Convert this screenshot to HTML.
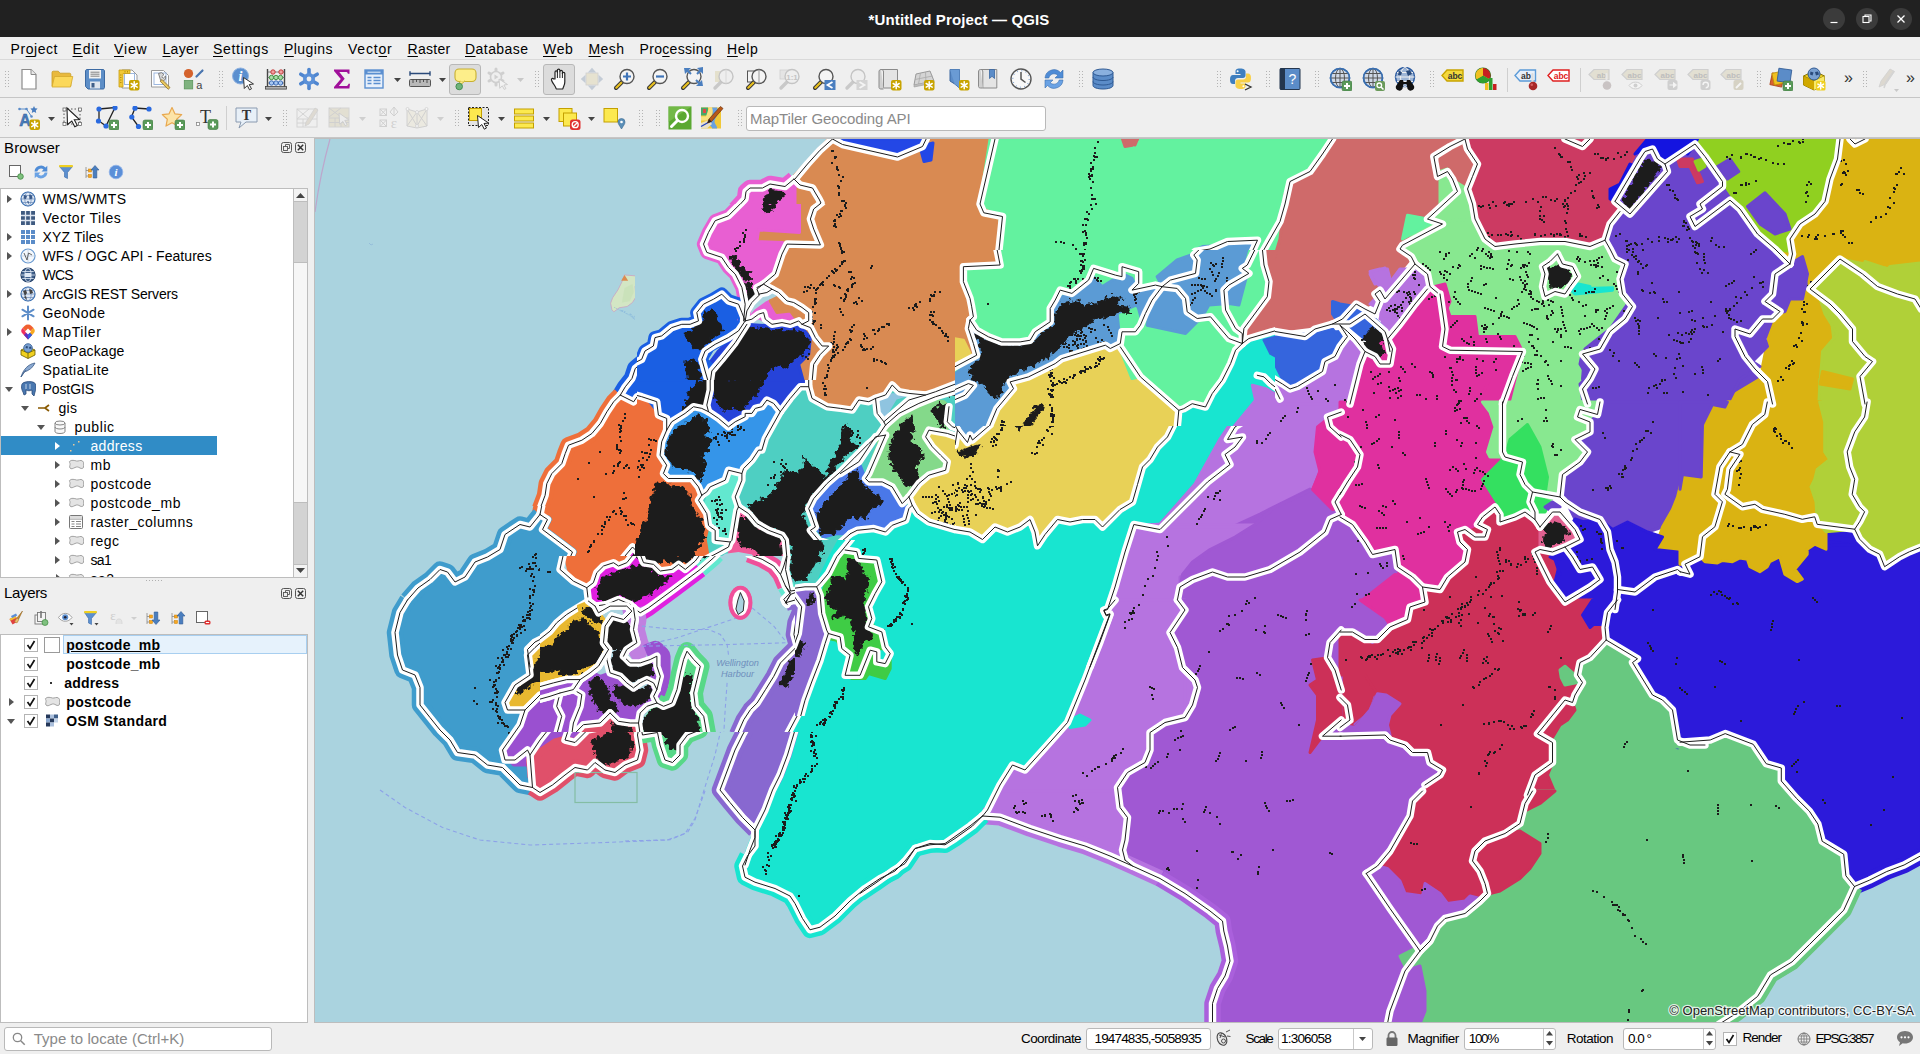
<!DOCTYPE html>
<html><head><meta charset="utf-8"><title>*Untitled Project — QGIS</title>
<style>
html,body{margin:0;padding:0;background:#efefef;overflow:hidden}
#root{position:relative;width:1920px;height:1054px;overflow:hidden;font-family:"Liberation Sans", sans-serif;background:#efefef}
.t{position:absolute;white-space:nowrap;color:#000}
.r{position:absolute}
.i{position:absolute;overflow:hidden;display:block}
u{text-decoration:underline;text-underline-offset:2px}
</style></head><body><div id="root">
<div class="r" style="left:0px;top:0px;width:1920px;height:37px;background:#212121"></div>
<div class="t" style="left:868.5px;top:9.5px;height:20px;line-height:20px;font-size:15px;font-weight:bold;color:#fff;letter-spacing:0.145px;">*Untitled Project — QGIS</div>
<svg class="i" style="left:1823px;top:8px" width="22" height="22" viewBox="0 0 22 22"><circle cx="11" cy="11" r="11" fill="#3b3b3b"/><path d="M7.500 14.500h7" stroke="#fff" stroke-width="1.200"/></svg>
<svg class="i" style="left:1856px;top:8px" width="22" height="22" viewBox="0 0 22 22"><circle cx="11" cy="11" r="11" fill="#3b3b3b"/><rect x="7" y="8.500" width="6" height="6" fill="none" stroke="#fff" stroke-width="1.100"/><path d="M9 8.500V7h6v6h-1.500" fill="none" stroke="#fff" stroke-width="1.100"/></svg>
<svg class="i" style="left:1890px;top:8px" width="22" height="22" viewBox="0 0 22 22"><circle cx="11" cy="11" r="11" fill="#3b3b3b"/><path d="M7.500 7.500l7 7M14.500 7.500l-7 7" stroke="#fff" stroke-width="1.300"/></svg>
<div class="r" style="left:0px;top:37px;width:1920px;height:23px;background:#efefef;border-bottom:1px solid #d9d9d9;box-sizing:border-box"></div>
<div class="t" style="left:10.5px;top:38.7px;height:20px;line-height:20px;font-size:14px;letter-spacing:0.561px">Pr<u>o</u>ject</div>
<div class="t" style="left:72.5px;top:38.7px;height:20px;line-height:20px;font-size:14px;letter-spacing:0.844px"><u>E</u>dit</div>
<div class="t" style="left:114px;top:38.7px;height:20px;line-height:20px;font-size:14px;letter-spacing:0.852px"><u>V</u>iew</div>
<div class="t" style="left:162.5px;top:38.7px;height:20px;line-height:20px;font-size:14px;letter-spacing:0.296px"><u>L</u>ayer</div>
<div class="t" style="left:213px;top:38.7px;height:20px;line-height:20px;font-size:14px;letter-spacing:0.677px"><u>S</u>ettings</div>
<div class="t" style="left:284px;top:38.7px;height:20px;line-height:20px;font-size:14px;letter-spacing:0.440px"><u>P</u>lugins</div>
<div class="t" style="left:348px;top:38.7px;height:20px;line-height:20px;font-size:14px;letter-spacing:0.802px">Vect<u>o</u>r</div>
<div class="t" style="left:407.5px;top:38.7px;height:20px;line-height:20px;font-size:14px;letter-spacing:0.294px"><u>R</u>aster</div>
<div class="t" style="left:465px;top:38.7px;height:20px;line-height:20px;font-size:14px;letter-spacing:0.446px"><u>D</u>atabase</div>
<div class="t" style="left:543px;top:38.7px;height:20px;line-height:20px;font-size:14px;letter-spacing:0.656px"><u>W</u>eb</div>
<div class="t" style="left:588.5px;top:38.7px;height:20px;line-height:20px;font-size:14px;letter-spacing:0.441px"><u>M</u>esh</div>
<div class="t" style="left:639.5px;top:38.7px;height:20px;line-height:20px;font-size:14px;letter-spacing:0.325px">Pro<u>c</u>essing</div>
<div class="t" style="left:727px;top:38.7px;height:20px;line-height:20px;font-size:14px;letter-spacing:0.677px"><u>H</u>elp</div>
<div class="r" style="left:0px;top:60px;width:1920px;height:38px;background:#efefef;border-bottom:1px solid #c6c6c6;box-sizing:border-box"></div>
<div class="r" style="left:0px;top:98px;width:1920px;height:40px;background:#efefef;border-bottom:1px solid #c6c6c6;box-sizing:border-box"></div>
<div class="r" style="left:449px;top:64px;width:32px;height:31px;background:#dcdcdc;border:1px solid #b8b8b8;border-radius:3px;box-sizing:border-box"></div>
<div class="r" style="left:543px;top:64px;width:32px;height:31px;background:#dcdcdc;border:1px solid #b8b8b8;border-radius:3px;box-sizing:border-box"></div>
<svg class="i" style="left:17.0px;top:67.0px" width="24" height="24" viewBox="0 0 24 24"><path d="M5 2.5h9l5 5V22H5z" fill="#fff" stroke="#8a8a8a" stroke-width="1.2"/><path d="M14 2.5v5h5" fill="#e8e8e8" stroke="#8a8a8a" stroke-width="1"/></svg>
<svg class="i" style="left:50.0px;top:67.0px" width="24" height="24" viewBox="0 0 24 24"><path d="M2 5.5c0-.8.5-1.3 1.3-1.3h5l1.7 2h9.5c.8 0 1.3.5 1.3 1.3V19H2z" fill="#e9b93c" stroke="#c69a22" stroke-width=".8"/><path d="M4.5 9.5h18.3L20.5 20H2z" fill="#fbd85a" stroke="#d4a82c" stroke-width=".8"/></svg>
<svg class="i" style="left:83.0px;top:67.0px" width="24" height="24" viewBox="0 0 24 24"><path d="M2.5 4c0-.8.6-1.5 1.5-1.5h16c.9 0 1.5.7 1.5 1.5v16.5c0 .8-.6 1.5-1.5 1.5H5l-2.5-2.5z" fill="#5d8ec7" stroke="#3c6aa3" stroke-width="1"/><rect x="6" y="3" width="12" height="8.5" fill="#f2f2f2"/><path d="M7.5 5.2h9M7.5 7.2h9M7.5 9.2h9" stroke="#777" stroke-width=".9"/><rect x="7" y="14.5" width="10" height="7" fill="#dfe6ef"/><rect x="8.5" y="16" width="3" height="4.5" fill="#3f5f8a"/></svg>
<svg class="i" style="left:116.0px;top:67.0px" width="24" height="24" viewBox="0 0 24 24"><path d="M6 3h10l5 5v13H6z" fill="#fff" stroke="#999" stroke-width="1"/><rect x="8.5" y="6.5" width="10" height="11" fill="none" stroke="#9db8e0" stroke-width="1"/><path d="M3 3h11v3.5H7v13.5H3z" fill="#f0c838" stroke="#c89c10" stroke-width=".8"/><path d="M4 8h1.5M4 10.5h1.5M4 13h1.5M4 15.5h1.5M9 4v1.5M11.5 4v1.5" stroke="#a07800" stroke-width=".7"/><rect x="13" y="13" width="10.5" height="10.5" rx="2" fill="#c8a400"/><g stroke="#fff" stroke-width="1.5" stroke-linecap="round"><line x1="18.2" y1="14.8" x2="18.2" y2="21.8"/><line x1="15.2" y1="16.5" x2="21.2" y2="20.1"/><line x1="15.2" y1="20.1" x2="21.2" y2="16.5"/></g></svg>
<svg class="i" style="left:149.0px;top:67.0px" width="24" height="24" viewBox="0 0 24 24"><path d="M2.5 3.5h12l5 5V20h-17z" fill="#fff" stroke="#999" stroke-width="1"/><rect x="5" y="6" width="12" height="11.5" fill="#fff" stroke="#9db8e0" stroke-width="1"/><path d="M9.5 6.5a4 4 0 0 1 5.5 1l-2.3 2.3 1.5 1.5L16.5 9a4 4 0 0 1-4.6 5.3z" fill="#d8d8d8" stroke="#666" stroke-width=".8"/><path d="M13 12.5l8 8-1.8 1.8-8-8z" fill="#e8c860" stroke="#8a6a20" stroke-width=".8"/></svg>
<svg class="i" style="left:181.0px;top:67.0px" width="24" height="24" viewBox="0 0 24 24"><circle cx="7.5" cy="6.5" r="4.6" fill="#d4622c"/><rect x="3.3" y="13.5" width="8.4" height="8.4" fill="#7fb27f" stroke="#5c965c" stroke-width=".8"/><line x1="15.5" y1="9.5" x2="21.5" y2="3.5" stroke="#4a76b0" stroke-width="2.2" stroke-linecap="round"/><text x="18.3" y="22" font-size="11" font-family="Liberation Sans,sans-serif" text-anchor="middle" fill="#444">a</text></svg>
<svg class="i" style="left:231.0px;top:67.0px" width="24" height="24" viewBox="0 0 24 24"><circle cx="9.5" cy="9" r="8" fill="#5b8fcf" stroke="#8fb2e0" stroke-width="1"/><text x="9.5" y="14" font-size="14" font-style="italic" font-weight="bold" font-family="Liberation Serif,serif" text-anchor="middle" fill="#fff">i</text><path d="M12.5 10.5l10 6.5-4.3.6 2.3 4.2-2 1-2.2-4.3-3 3z" fill="#fff" stroke="#333" stroke-width="1"/></svg>
<svg class="i" style="left:264.0px;top:67.0px" width="24" height="24" viewBox="0 0 24 24"><path d="M3.5 2v18M20.5 2v18" stroke="#444" stroke-width="1.4"/><rect x="1.5" y="19.5" width="21" height="2.6" fill="#b0b0b0" stroke="#444" stroke-width=".8"/><path d="M3.5 5h17M3.5 10.5h17M3.5 16h17" stroke="#666" stroke-width=".8"/><g stroke-width=".9"><circle cx="9" cy="5" r="2.2" fill="#f0a0a0" stroke="#c03030"/><circle cx="17" cy="5" r="2.2" fill="#f0a0a0" stroke="#c03030"/><circle cx="7.5" cy="10.5" r="2.2" fill="#a8dca8" stroke="#3a8a3a"/><circle cx="12" cy="10.5" r="2.2" fill="#a8dca8" stroke="#3a8a3a"/><circle cx="16.5" cy="10.5" r="2.2" fill="#a8dca8" stroke="#3a8a3a"/><circle cx="7.5" cy="16" r="2.2" fill="#a8c8f0" stroke="#3060b0"/><circle cx="12" cy="16" r="2.2" fill="#a8c8f0" stroke="#3060b0"/><circle cx="16.5" cy="16" r="2.2" fill="#a8c8f0" stroke="#3060b0"/></g></svg>
<svg class="i" style="left:297.0px;top:67.0px" width="24" height="24" viewBox="0 0 24 24"><g stroke="#4f86d0" stroke-width="3.6" stroke-linecap="round"><line x1="12" y1="2.5" x2="12" y2="21.5"/><line x1="3.8" y1="7.2" x2="20.2" y2="16.8"/><line x1="3.8" y1="16.8" x2="20.2" y2="7.2"/></g><circle cx="12" cy="12" r="6" fill="#5a90d8"/><circle cx="12" cy="12" r="2.4" fill="#efefef"/></svg>
<svg class="i" style="left:330.0px;top:67.0px" width="24" height="24" viewBox="0 0 24 24"><path d="M4 2.5h15.5v4.2h-1.6c-.3-1.3-.9-1.7-2.4-1.7H9.3l5.4 6.7-5.9 7.3h7c1.6 0 2.3-.6 2.7-2.3H20l-.6 4.8H4v-1.5L10.8 12 4 3.9z" fill="#a0109a"/></svg>
<svg class="i" style="left:362.0px;top:67.0px" width="24" height="24" viewBox="0 0 24 24"><rect x="3" y="3" width="18" height="18" fill="#e8f0fb" stroke="#5b8fd0" stroke-width="1.4"/><rect x="3" y="3" width="18" height="4.5" fill="#5b8fd0"/><path d="M5.5 10.5h4M11.5 10.5h7M5.5 13.5h4M11.5 13.5h7M5.5 16.5h4M11.5 16.5h7M5.5 5.2h13" stroke="#5b8fd0" stroke-width="1.3"/><path d="M5.5 5.2h13" stroke="#dbe7f7" stroke-width="1.1"/></svg>
<svg class="i" style="left:408.0px;top:67.0px" width="24" height="24" viewBox="0 0 24 24"><path d="M2 6.5h20M2 4.3v4.4M22 4.3v4.4" stroke="#2a4a7a" stroke-width="1.4" fill="none"/><rect x="1.5" y="12.5" width="21" height="7" rx="1" fill="#b8b8b8" stroke="#555" stroke-width="1"/><path d="M5 12.5v3.5M8.5 12.5v2.5M12 12.5v3.5M15.5 12.5v2.5M19 12.5v3.5" stroke="#444" stroke-width=".9"/></svg>
<svg class="i" style="left:453.0px;top:67.0px" width="24" height="24" viewBox="0 0 24 24"><rect x="2" y="2" width="21" height="12.5" rx="4" fill="#fdee8a" stroke="#c8b030" stroke-width="1.1"/><path d="M7 14l-1 5 6-5z" fill="#fdee8a" stroke="#c8b030" stroke-width="1"/><path d="M7.3 13.6h4" stroke="#fdee8a" stroke-width="1.4"/><circle cx="6.2" cy="19.5" r="3.3" fill="#6fb27a" stroke="#3f8a4c" stroke-width=".9"/></svg>
<svg class="i" style="left:486.0px;top:67.0px" width="24" height="24" viewBox="0 0 24 24"><g stroke="#cfcfcf" stroke-width="3" stroke-linecap="round"><line x1="10" y1="2" x2="10" y2="18"/><line x1="3" y1="6" x2="17" y2="14"/><line x1="3" y1="14" x2="17" y2="6"/></g><circle cx="10" cy="10" r="5.5" fill="#efefef" stroke="#cfcfcf" stroke-width="1.6"/><path d="M8.5 7.5v5l4-2.5z" fill="#d0d0d0"/><path d="M13 12l8.5 5.5-3.6.5 2 3.6-1.7.8-1.9-3.6-2.5 2.5z" fill="#f2f2f2" stroke="#cdcdcd" stroke-width="1"/></svg>
<svg class="i" style="left:547.0px;top:67.0px" width="24" height="24" viewBox="0 0 24 24"><path d="M8 12V5.2c0-1.7 2.4-1.7 2.4 0V3.4c0-1.7 2.5-1.7 2.5 0v1.2c0-1.7 2.5-1.7 2.5 0v2c0-1.6 2.4-1.6 2.4 0V15c0 3.5-1.5 4.6-2 7H9.3c-.4-2-2-3.600-4.300-7.600C3.600 12.100 5.300 10.400 6.700 12z" fill="#fff" stroke="#222" stroke-width="1.2" stroke-linejoin="round"/><path d="M10.400 5v6M12.900 4.500v6.500M15.400 6v5" stroke="#222" stroke-width="1" fill="none"/></svg>
<svg class="i" style="left:580.0px;top:67.0px" width="24" height="24" viewBox="0 0 24 24"><rect x="6" y="6" width="12" height="12" fill="#e6e2d0" stroke="#d0d0d0" stroke-width=".8"/><g fill="#c4ccd6"><path d="M12 .8l4.200 4.700H7.800z"/><path d="M12 23.200l4.200-4.700H7.800z"/><path d="M.8 12l4.700-4.200v8.400z"/><path d="M23.200 12l-4.700-4.200v8.400z"/></g></svg>
<svg class="i" style="left:613.0px;top:67.0px" width="24" height="24" viewBox="0 0 24 24"><line x1="3" y1="21" x2="9.5" y2="14.5" stroke="#333" stroke-width="4" stroke-linecap="round"/><line x1="3.3" y1="20.7" x2="8.5" y2="15.5" stroke="#e8c020" stroke-width="2.2" stroke-linecap="round"/><circle cx="14" cy="9.5" r="7" fill="#f4f4f4" stroke="#555" stroke-width="1.4"/><path d="M14 5.500v8M10 9.500h8" stroke="#3f74b8" stroke-width="2.200"/></svg>
<svg class="i" style="left:646.0px;top:67.0px" width="24" height="24" viewBox="0 0 24 24"><line x1="3" y1="21" x2="9.5" y2="14.5" stroke="#333" stroke-width="4" stroke-linecap="round"/><line x1="3.3" y1="20.7" x2="8.5" y2="15.5" stroke="#e8c020" stroke-width="2.2" stroke-linecap="round"/><circle cx="14" cy="9.5" r="7" fill="#f4f4f4" stroke="#555" stroke-width="1.4"/><path d="M10 9.500h8" stroke="#3f74b8" stroke-width="2.200"/></svg>
<svg class="i" style="left:680.0px;top:67.0px" width="24" height="24" viewBox="0 0 24 24"><line x1="3" y1="21" x2="9.5" y2="14.5" stroke="#333" stroke-width="4" stroke-linecap="round"/><line x1="3.3" y1="20.7" x2="8.5" y2="15.5" stroke="#e8c020" stroke-width="2.2" stroke-linecap="round"/><circle cx="14" cy="9.5" r="7" fill="#f4f4f4" stroke="#555" stroke-width="1.4"/><g fill="#4a7ebf"><path d="M5 1h7L9.700 3.300l3 3-1.400 1.400-3-3L6 7z" transform="translate(-1,0)"/><path d="M23 1v7l-2.300-2.300-3 3-1.400-1.400 3-3L17 2z" transform="translate(0,-1)"/><path d="M23 19h-7l2.300-2.300-3-3 1.400-1.400 3 3L22 13z" transform="translate(0,0)"/><path d="M5 19v-6l2 2 2.500-2.500 1.400 1.400L8.400 16.400l2 2z" transform="translate(-1,0)" opacity="0"/></g></svg>
<svg class="i" style="left:712.0px;top:67.0px" width="24" height="24" viewBox="0 0 24 24"><rect x="3" y="4" width="10" height="11" fill="#e4e0cc"/><line x1="3" y1="21" x2="9.5" y2="14.5" stroke="#c9c9c9" stroke-width="3.4" stroke-linecap="round"/><circle cx="14" cy="9.5" r="7" fill="#eee" stroke="#c4c4c4" stroke-width="1.4"/><path d="M14 2.500v14" stroke="#d8d8d8" stroke-width="1"/></svg>
<svg class="i" style="left:745.0px;top:67.0px" width="24" height="24" viewBox="0 0 24 24"><rect x="2.500" y="4" width="10" height="11" fill="#f4f4f4" stroke="#555" stroke-width="1"/><line x1="3" y1="21" x2="9.5" y2="14.5" stroke="#333" stroke-width="4" stroke-linecap="round"/><line x1="3.3" y1="20.7" x2="8.5" y2="15.5" stroke="#e8c020" stroke-width="2.2" stroke-linecap="round"/><circle cx="14" cy="9.5" r="7" fill="#f4f4f4" stroke="#555" stroke-width="1.4"/><path d="M14 2.500v14" stroke="#999" stroke-width="1"/></svg>
<svg class="i" style="left:778.0px;top:67.0px" width="24" height="24" viewBox="0 0 24 24"><rect x="2" y="3" width="9" height="9" fill="#e4e4e4" stroke="#cfcfcf" stroke-width=".8"/><line x1="3" y1="21" x2="9.5" y2="14.5" stroke="#c9c9c9" stroke-width="3.4" stroke-linecap="round"/><circle cx="14" cy="9.5" r="7" fill="#eee" stroke="#c4c4c4" stroke-width="1.4"/><text x="14" y="12.500" font-size="8" font-weight="bold" font-family="Liberation Sans,sans-serif" text-anchor="middle" fill="#c4c4c4">1:1</text></svg>
<svg class="i" style="left:812.0px;top:67.0px" width="24" height="24" viewBox="0 0 24 24"><line x1="3" y1="21" x2="9.5" y2="14.5" stroke="#333" stroke-width="4" stroke-linecap="round"/><line x1="3.3" y1="20.7" x2="8.5" y2="15.5" stroke="#e8c020" stroke-width="2.2" stroke-linecap="round"/><circle cx="14" cy="9.5" r="7" fill="#f4f4f4" stroke="#555" stroke-width="1.4"/><rect x="12.500" y="13" width="11" height="10" fill="#4a7ebf"/><path d="M20.500 15l-5 3 5 3" stroke="#fff" stroke-width="1.800" fill="none"/></svg>
<svg class="i" style="left:844.0px;top:67.0px" width="24" height="24" viewBox="0 0 24 24"><line x1="3" y1="21" x2="9.5" y2="14.5" stroke="#c9c9c9" stroke-width="3.4" stroke-linecap="round"/><circle cx="14" cy="9.5" r="7" fill="#eee" stroke="#c4c4c4" stroke-width="1.4"/><rect x="12.500" y="13" width="11" height="10" fill="#d4d4d4"/><path d="M15.500 15l5 3-5 3" stroke="#f4f4f4" stroke-width="1.800" fill="none"/></svg>
<svg class="i" style="left:878.0px;top:67.0px" width="24" height="24" viewBox="0 0 24 24"><path d="M3 2.500c2 0 2.500 1 2.500 2.500V21h14V2.500z" fill="#e4e4e4" stroke="#8a8a8a" stroke-width="1"/><path d="M3 2.500c-1.500 0-2 1-2 2.500v15.500c0 1 1 1.500 2 1.500h2.500" fill="#d0d0d0" stroke="#8a8a8a" stroke-width="1"/><rect x="13" y="13" width="10.5" height="10.5" rx="2" fill="#c8a400"/><g stroke="#fff" stroke-width="1.5" stroke-linecap="round"><line x1="18.2" y1="14.8" x2="18.2" y2="21.8"/><line x1="15.2" y1="16.5" x2="21.2" y2="20.1"/><line x1="15.2" y1="20.1" x2="21.2" y2="16.5"/></g></svg>
<svg class="i" style="left:911.0px;top:67.0px" width="24" height="24" viewBox="0 0 24 24"><path d="M5 7l14-3 4 10-20 4z" fill="#d4d4d4" stroke="#9a9a9a" stroke-width="1"/><path d="M9.500 6l-2 11M14.500 5l.5 11M4 12.500l17.500-3.500" stroke="#aaa" stroke-width=".8" fill="none"/><path d="M3 18v2l20-4v-2" fill="#bbb" stroke="#9a9a9a" stroke-width=".6"/><rect x="13" y="13" width="10.5" height="10.5" rx="2" fill="#c8a400"/><g stroke="#fff" stroke-width="1.5" stroke-linecap="round"><line x1="18.2" y1="14.8" x2="18.2" y2="21.8"/><line x1="15.2" y1="16.5" x2="21.2" y2="20.1"/><line x1="15.2" y1="20.1" x2="21.2" y2="16.5"/></g></svg>
<svg class="i" style="left:946.0px;top:67.0px" width="24" height="24" viewBox="0 0 24 24"><path d="M4 2.500h9.500V21L8.700 17 4 14z" fill="#5b8cc8" stroke="#3a66a0" stroke-width="1"/><path d="M4 2.500h9.500V21L8.700 17z" fill="#6a9bd4"/><rect x="13" y="13" width="10.5" height="10.5" rx="2" fill="#c8a400"/><g stroke="#fff" stroke-width="1.5" stroke-linecap="round"><line x1="18.2" y1="14.8" x2="18.2" y2="21.8"/><line x1="15.2" y1="16.5" x2="21.2" y2="20.1"/><line x1="15.2" y1="20.1" x2="21.2" y2="16.5"/></g></svg>
<svg class="i" style="left:976.0px;top:67.0px" width="24" height="24" viewBox="0 0 24 24"><path d="M4.500 2.500c1.800 0 2.300 1 2.300 2.500V21h14V2.500z" fill="#e4e4e4" stroke="#8a8a8a" stroke-width="1"/><path d="M4.500 2.500c-1.500 0-2 1-2 2.500v14.500c0 1 1 1.500 2 1.500h2.300" fill="#d0d0d0" stroke="#8a8a8a" stroke-width="1"/><path d="M13.500 2.500h5v9l-2.500-2.200-2.500 2.200z" fill="#5b8cc8" stroke="#3a66a0" stroke-width=".8"/></svg>
<svg class="i" style="left:1009.0px;top:67.0px" width="24" height="24" viewBox="0 0 24 24"><circle cx="12" cy="12" r="10" fill="#f8f8f8" stroke="#555" stroke-width="1.400"/><path d="M12 5v7.200l4.500 3.300" stroke="#555" stroke-width="1.500" fill="none"/><circle cx="12" cy="12" r="8.200" fill="none" stroke="#5b8cc8" stroke-width="1" stroke-dasharray="1 3.300"/></svg>
<svg class="i" style="left:1042.0px;top:67.0px" width="24" height="24" viewBox="0 0 24 24"><path d="M3 11a9 9 0 0 1 15.500-5.500L21 3v8h-8l2.800-2.800A5.500 5.500 0 0 0 6.800 11z" fill="#4f8cd6" stroke="#3a6fb0" stroke-width=".6"/><path d="M21 13a9 9 0 0 1-15.500 5.500L3 21v-8h8l-2.800 2.800a5.500 5.500 0 0 0 9-2.800z" fill="#6aa2e4" stroke="#3a6fb0" stroke-width=".6"/></svg>
<svg class="i" style="left:1091.0px;top:67.0px" width="24" height="24" viewBox="0 0 24 24"><path d="M2 5.500v13c0 2 4.500 3.500 10 3.500s10-1.500 10-3.500v-13z" fill="#5b8cc8" stroke="#2f5a94" stroke-width="1"/><ellipse cx="12" cy="5.500" rx="10" ry="3.500" fill="#8ab0de" stroke="#2f5a94" stroke-width="1"/><path d="M2 10c0 2 4.500 3.500 10 3.500s10-1.500 10-3.500M2 14.500c0 2 4.500 3.500 10 3.500s10-1.500 10-3.500" fill="none" stroke="#2f5a94" stroke-width="1"/></svg>
<svg class="i" style="left:1229.0px;top:67.0px" width="24" height="24" viewBox="0 0 24 24"><path d="M11 1.500c-4 0-4.500 1.500-4.500 3v2.500h5v1H4c-2 0-3 1.500-3 4.500s1 4.500 3 4.500h2v-3c0-1.800 1.200-3 3-3h5c1.500 0 2.500-1 2.500-2.500v-4c0-1.500-1.500-3-5.500-3z" fill="#3f7fbf"/><circle cx="8.600" cy="4.300" r="1" fill="#fff"/><path d="M12 22c4 0 4.500-1.500 4.500-3v-2.500h-5v-1H19c2 0 3-1.500 3-4.500s-1-4.500-3-4.500h-2v3c0 1.800-1.200 3-3 3H9c-1.500 0-2.500 1-2.500 2.500v4c0 1.500 1.500 3 5.500 3z" fill="#f8d048"/><circle cx="14.400" cy="19.200" r="1" fill="#fff"/><path d="M16 17l6 3-6 3" stroke="#333" stroke-width="1.300" fill="none"/></svg>
<svg class="i" style="left:1278.0px;top:67.0px" width="24" height="24" viewBox="0 0 24 24"><rect x="2" y="1.500" width="20" height="21" rx="1" fill="#5b8cc8" stroke="#24364f" stroke-width="1"/><rect x="2" y="1.500" width="5" height="21" fill="#24364f"/><text x="14.500" y="17" font-size="14" font-family="Liberation Sans,sans-serif" text-anchor="middle" fill="#fff">?</text></svg>
<svg class="i" style="left:1328.0px;top:67.0px" width="24" height="24" viewBox="0 0 24 24"><g transform="translate(1,0)"><circle cx="11" cy="11" r="9.5" fill="#cfd8e6" stroke="#3a6fb0" stroke-width="1.6"/><ellipse cx="11" cy="11" rx="4.5" ry="9.5" fill="none" stroke="#555" stroke-width="1"/><path d="M1.5 11h19M3 6.5h16M3 15.5h16M11 1.5v19" stroke="#555" stroke-width="1" fill="none"/><circle cx="11" cy="11" r="9.5" fill="none" stroke="#3a6fb0" stroke-width="1.6"/></g><rect x="14" y="14" width="10" height="10" rx="2" fill="#5a9a5a" stroke="#3f7a3f" stroke-width=".6"/><path d="M19 16v6M16 19h6" stroke="#fff" stroke-width="2"/></svg>
<svg class="i" style="left:1361.0px;top:67.0px" width="24" height="24" viewBox="0 0 24 24"><g transform="translate(1,0)"><circle cx="11" cy="11" r="9.5" fill="#cfd8e6" stroke="#3a6fb0" stroke-width="1.6"/><ellipse cx="11" cy="11" rx="4.5" ry="9.5" fill="none" stroke="#555" stroke-width="1"/><path d="M1.5 11h19M3 6.5h16M3 15.5h16M11 1.5v19" stroke="#555" stroke-width="1" fill="none"/><circle cx="11" cy="11" r="9.5" fill="none" stroke="#3a6fb0" stroke-width="1.6"/></g><rect x="14" y="14" width="10" height="10" rx="2" fill="#6a9a5a"/><circle cx="18.300" cy="18.300" r="2.300" fill="none" stroke="#fff" stroke-width="1.300"/><path d="M20 20l2.500 2.500" stroke="#fff" stroke-width="1.500"/></svg>
<svg class="i" style="left:1393.0px;top:67.0px" width="24" height="24" viewBox="0 0 24 24"><circle cx="12" cy="10" r="9.500" fill="#9fb6d6" stroke="#2a5aa0" stroke-width="1.500"/><ellipse cx="12" cy="10" rx="4.500" ry="9.500" fill="none" stroke="#f0f0f0" stroke-width="1"/><path d="M2.500 10h19M4 5.500h16M4 14.500h16" stroke="#f0f0f0" stroke-width="1"/><path d="M6 3.500l3 2-1 3-3-.5zM13 4l4-1 2 4-4 2z" fill="#2a4a7a"/><path d="M7 13l-4 6a3.500 3.500 0 1 0 6.800 1l.7-3h3l.7 3a3.500 3.500 0 1 0 6.800-1l-4-6h-3l-.5 2h-3l-.5-2z" fill="#111"/></svg>
<svg class="i" style="left:1441.0px;top:67.0px" width="24" height="24" viewBox="0 0 24 24"><path d="M1 8.5 6 3h16v11H6z" fill="#f5d93c" stroke="#c8a400" stroke-width="1.4"/><text x="14" y="12" font-size="8.5" font-weight="bold" font-family="Liberation Sans,sans-serif" text-anchor="middle" fill="#333">abc</text></svg>
<svg class="i" style="left:1474.0px;top:67.0px" width="24" height="24" viewBox="0 0 24 24"><circle cx="9" cy="8.500" r="7.500" fill="#f0c020" stroke="#2a7a2a" stroke-width="1.200"/><path d="M9 8.500V1a7.500 7.500 0 0 1 6.500 11.200z" fill="#c82020"/><path d="M9 8.500l6.500 3.700A7.500 7.500 0 0 1 2.500 12.200z" fill="#30a030"/><path d="M9 8.500L2.500 12.200A7.500 7.500 0 0 1 9 1z" fill="#f0c020"/><rect x="11" y="16" width="3.500" height="7" fill="#f0c020"/><rect x="15" y="11" width="3.500" height="12" fill="#30a030"/><rect x="19" y="17" width="3.500" height="6" fill="#c82020"/></svg>
<svg class="i" style="left:1514.0px;top:67.0px" width="24" height="24" viewBox="0 0 24 24"><path d="M1 8.500 6 3h15.500v11H6z" fill="#e8f0fa" stroke="#5b9bd8" stroke-width="1.400"/><text x="12" y="12" font-size="8.500" font-weight="bold" font-family="Liberation Sans,sans-serif" text-anchor="middle" fill="#333">ab</text><path d="M18.500 7v9" stroke="#ddd" stroke-width="2.200" stroke-linecap="round"/><circle cx="19" cy="19" r="4.300" fill="#a82828"/><circle cx="17.800" cy="17.800" r="1.300" fill="#d86060"/></svg>
<svg class="i" style="left:1547.0px;top:67.0px" width="24" height="24" viewBox="0 0 24 24"><path d="M1 8.5 6 3h16v11H6z" fill="#fff" stroke="#e02020" stroke-width="1.4"/><text x="14" y="12" font-size="8.5" font-weight="bold" font-family="Liberation Sans,sans-serif" text-anchor="middle" fill="#e02020">abc</text></svg>
<svg class="i" style="left:1588.0px;top:67.0px" width="24" height="24" viewBox="0 0 24 24"><path d="M1 7.500 6 2.500h15v10H6z" fill="#e2dfd2" stroke="#cfcfcf" stroke-width="1.200"/><text x="13.500" y="11" font-size="8" font-weight="bold" font-family="Liberation Sans,sans-serif" text-anchor="middle" fill="#bdbdbd">ab</text><path d="M18.500 7v8" stroke="#e8e8e8" stroke-width="2" stroke-linecap="round"/><circle cx="19" cy="18.500" r="4.300" fill="#c9c3c3"/></svg>
<svg class="i" style="left:1621.0px;top:67.0px" width="24" height="24" viewBox="0 0 24 24"><path d="M1 7.500 6 2.500h15v10H6z" fill="#e2dfd2" stroke="#cfcfcf" stroke-width="1.200"/><text x="13.500" y="11" font-size="8" font-weight="bold" font-family="Liberation Sans,sans-serif" text-anchor="middle" fill="#bdbdbd">abc</text><path d="M8 18.500c3-4.500 10-4.500 13 0-3 4.500-10 4.500-13 0z" fill="#f4f4f4" stroke="#cfcfcf" stroke-width="1"/><circle cx="14.500" cy="18.500" r="2" fill="#cfcfcf"/></svg>
<svg class="i" style="left:1654.0px;top:67.0px" width="24" height="24" viewBox="0 0 24 24"><path d="M1 7.500 6 2.500h15v10H6z" fill="#e2dfd2" stroke="#cfcfcf" stroke-width="1.200"/><text x="13.500" y="11" font-size="8" font-weight="bold" font-family="Liberation Sans,sans-serif" text-anchor="middle" fill="#bdbdbd">abc</text><rect x="13.500" y="13" width="10" height="10" rx="2" fill="#cfcfcf"/><path d="M15.500 18h4v-2.500l3 2.500-3 2.500V18" fill="#f4f4f4" stroke="#f4f4f4" stroke-width="1"/></svg>
<svg class="i" style="left:1687.0px;top:67.0px" width="24" height="24" viewBox="0 0 24 24"><path d="M1 7.500 6 2.500h15v10H6z" fill="#e2dfd2" stroke="#cfcfcf" stroke-width="1.200"/><text x="13.500" y="11" font-size="8" font-weight="bold" font-family="Liberation Sans,sans-serif" text-anchor="middle" fill="#bdbdbd">abc</text><rect x="13.500" y="13" width="10" height="10" rx="2" fill="#cfcfcf"/><path d="M16 18a2.700 2.700 0 1 1 2.700 2.700" fill="none" stroke="#f4f4f4" stroke-width="1.400"/></svg>
<svg class="i" style="left:1720.0px;top:67.0px" width="24" height="24" viewBox="0 0 24 24"><path d="M1 7.500 6 2.500h15v10H6z" fill="#e2dfd2" stroke="#cfcfcf" stroke-width="1.200"/><text x="13.500" y="11" font-size="8" font-weight="bold" font-family="Liberation Sans,sans-serif" text-anchor="middle" fill="#bdbdbd">abc</text><rect x="13.500" y="13" width="10" height="10" rx="2" fill="#d6d2c4"/><path d="M16 21l5-5" stroke="#f4f4f4" stroke-width="2"/></svg>
<svg class="i" style="left:1769.0px;top:67.0px" width="24" height="24" viewBox="0 0 24 24"><rect x="2" y="7" width="12" height="12" fill="#d86030" stroke="#a84018" stroke-width=".8" transform="rotate(12 8 13)"/><rect x="4" y="5" width="12" height="12" fill="#f0c020" stroke="#c09000" stroke-width=".8" transform="rotate(-12 10 11)"/><rect x="9" y="2" width="13" height="13" fill="#5b8cc8" stroke="#2f5a94" stroke-width=".8" transform="rotate(8 15 8)"/><rect x="14" y="14" width="10" height="10" rx="2" fill="#5a9a5a" stroke="#3f7a3f" stroke-width=".6"/><path d="M19 16v6M16 19h6" stroke="#fff" stroke-width="2"/></svg>
<svg class="i" style="left:1802.0px;top:67.0px" width="24" height="24" viewBox="0 0 24 24"><path d="M1.500 9l10.500-5 10.500 5v9L12 23 1.500 18z" fill="#f0d020" stroke="#8a7400" stroke-width="1"/><path d="M1.500 9L12 14l10.500-5M12 14v9" fill="none" stroke="#8a7400" stroke-width="1"/><path d="M12 14l10.500-5v9L12 23z" fill="#f8e868"/><path d="M1.500 9L12 14v9L1.500 18z" fill="#d0a800"/><circle cx="12" cy="7" r="6" fill="#7aa0d0" stroke="#2f5a94" stroke-width="1"/><path d="M8.500 4.500l3 1-1 3-2.500-1zM13 5l3-.5 1 3-3 1z" fill="#2a4a7a"/><rect x="14" y="14" width="9.500" height="9.500" rx="1.500" fill="#f0d020"/><g stroke="#fff" stroke-width="1.500" stroke-linecap="round"><line x1="18.700" y1="15.500" x2="18.700" y2="22"/><line x1="15.900" y1="17.100" x2="21.500" y2="20.400"/><line x1="15.900" y1="20.400" x2="21.500" y2="17.100"/></g></svg>
<svg class="i" style="left:1875.0px;top:67.0px" width="24" height="24" viewBox="0 0 24 24"><path d="M4 20l2-6 9-12 4.500 2.500-8.500 12.500z" fill="#dcd8d0" stroke="#d0d0d0" stroke-width=".8"/><path d="M9 21l2-6 8-11" fill="none" stroke="#d4d4d4" stroke-width="1.500"/></svg>
<svg class="i" style="left:5px;top:71px" width="5" height="17" viewBox="0 0 5 17"><rect x="0" y="0" width="1" height="1" fill="#b4b4b4"/><rect x="0" y="3" width="1" height="1" fill="#b4b4b4"/><rect x="0" y="6" width="1" height="1" fill="#b4b4b4"/><rect x="0" y="9" width="1" height="1" fill="#b4b4b4"/><rect x="0" y="12" width="1" height="1" fill="#b4b4b4"/><rect x="0" y="15" width="1" height="1" fill="#b4b4b4"/><rect x="3" y="0" width="1" height="1" fill="#b4b4b4"/><rect x="3" y="3" width="1" height="1" fill="#b4b4b4"/><rect x="3" y="6" width="1" height="1" fill="#b4b4b4"/><rect x="3" y="9" width="1" height="1" fill="#b4b4b4"/><rect x="3" y="12" width="1" height="1" fill="#b4b4b4"/><rect x="3" y="15" width="1" height="1" fill="#b4b4b4"/></svg>
<svg class="i" style="left:219px;top:71px" width="5" height="17" viewBox="0 0 5 17"><rect x="0" y="0" width="1" height="1" fill="#b4b4b4"/><rect x="0" y="3" width="1" height="1" fill="#b4b4b4"/><rect x="0" y="6" width="1" height="1" fill="#b4b4b4"/><rect x="0" y="9" width="1" height="1" fill="#b4b4b4"/><rect x="0" y="12" width="1" height="1" fill="#b4b4b4"/><rect x="0" y="15" width="1" height="1" fill="#b4b4b4"/><rect x="3" y="0" width="1" height="1" fill="#b4b4b4"/><rect x="3" y="3" width="1" height="1" fill="#b4b4b4"/><rect x="3" y="6" width="1" height="1" fill="#b4b4b4"/><rect x="3" y="9" width="1" height="1" fill="#b4b4b4"/><rect x="3" y="12" width="1" height="1" fill="#b4b4b4"/><rect x="3" y="15" width="1" height="1" fill="#b4b4b4"/></svg>
<svg class="i" style="left:535px;top:71px" width="5" height="17" viewBox="0 0 5 17"><rect x="0" y="0" width="1" height="1" fill="#b4b4b4"/><rect x="0" y="3" width="1" height="1" fill="#b4b4b4"/><rect x="0" y="6" width="1" height="1" fill="#b4b4b4"/><rect x="0" y="9" width="1" height="1" fill="#b4b4b4"/><rect x="0" y="12" width="1" height="1" fill="#b4b4b4"/><rect x="0" y="15" width="1" height="1" fill="#b4b4b4"/><rect x="3" y="0" width="1" height="1" fill="#b4b4b4"/><rect x="3" y="3" width="1" height="1" fill="#b4b4b4"/><rect x="3" y="6" width="1" height="1" fill="#b4b4b4"/><rect x="3" y="9" width="1" height="1" fill="#b4b4b4"/><rect x="3" y="12" width="1" height="1" fill="#b4b4b4"/><rect x="3" y="15" width="1" height="1" fill="#b4b4b4"/></svg>
<svg class="i" style="left:1079px;top:71px" width="5" height="17" viewBox="0 0 5 17"><rect x="0" y="0" width="1" height="1" fill="#b4b4b4"/><rect x="0" y="3" width="1" height="1" fill="#b4b4b4"/><rect x="0" y="6" width="1" height="1" fill="#b4b4b4"/><rect x="0" y="9" width="1" height="1" fill="#b4b4b4"/><rect x="0" y="12" width="1" height="1" fill="#b4b4b4"/><rect x="0" y="15" width="1" height="1" fill="#b4b4b4"/><rect x="3" y="0" width="1" height="1" fill="#b4b4b4"/><rect x="3" y="3" width="1" height="1" fill="#b4b4b4"/><rect x="3" y="6" width="1" height="1" fill="#b4b4b4"/><rect x="3" y="9" width="1" height="1" fill="#b4b4b4"/><rect x="3" y="12" width="1" height="1" fill="#b4b4b4"/><rect x="3" y="15" width="1" height="1" fill="#b4b4b4"/></svg>
<svg class="i" style="left:1217px;top:71px" width="5" height="17" viewBox="0 0 5 17"><rect x="0" y="0" width="1" height="1" fill="#b4b4b4"/><rect x="0" y="3" width="1" height="1" fill="#b4b4b4"/><rect x="0" y="6" width="1" height="1" fill="#b4b4b4"/><rect x="0" y="9" width="1" height="1" fill="#b4b4b4"/><rect x="0" y="12" width="1" height="1" fill="#b4b4b4"/><rect x="0" y="15" width="1" height="1" fill="#b4b4b4"/><rect x="3" y="0" width="1" height="1" fill="#b4b4b4"/><rect x="3" y="3" width="1" height="1" fill="#b4b4b4"/><rect x="3" y="6" width="1" height="1" fill="#b4b4b4"/><rect x="3" y="9" width="1" height="1" fill="#b4b4b4"/><rect x="3" y="12" width="1" height="1" fill="#b4b4b4"/><rect x="3" y="15" width="1" height="1" fill="#b4b4b4"/></svg>
<svg class="i" style="left:1266px;top:71px" width="5" height="17" viewBox="0 0 5 17"><rect x="0" y="0" width="1" height="1" fill="#b4b4b4"/><rect x="0" y="3" width="1" height="1" fill="#b4b4b4"/><rect x="0" y="6" width="1" height="1" fill="#b4b4b4"/><rect x="0" y="9" width="1" height="1" fill="#b4b4b4"/><rect x="0" y="12" width="1" height="1" fill="#b4b4b4"/><rect x="0" y="15" width="1" height="1" fill="#b4b4b4"/><rect x="3" y="0" width="1" height="1" fill="#b4b4b4"/><rect x="3" y="3" width="1" height="1" fill="#b4b4b4"/><rect x="3" y="6" width="1" height="1" fill="#b4b4b4"/><rect x="3" y="9" width="1" height="1" fill="#b4b4b4"/><rect x="3" y="12" width="1" height="1" fill="#b4b4b4"/><rect x="3" y="15" width="1" height="1" fill="#b4b4b4"/></svg>
<svg class="i" style="left:1315px;top:71px" width="5" height="17" viewBox="0 0 5 17"><rect x="0" y="0" width="1" height="1" fill="#b4b4b4"/><rect x="0" y="3" width="1" height="1" fill="#b4b4b4"/><rect x="0" y="6" width="1" height="1" fill="#b4b4b4"/><rect x="0" y="9" width="1" height="1" fill="#b4b4b4"/><rect x="0" y="12" width="1" height="1" fill="#b4b4b4"/><rect x="0" y="15" width="1" height="1" fill="#b4b4b4"/><rect x="3" y="0" width="1" height="1" fill="#b4b4b4"/><rect x="3" y="3" width="1" height="1" fill="#b4b4b4"/><rect x="3" y="6" width="1" height="1" fill="#b4b4b4"/><rect x="3" y="9" width="1" height="1" fill="#b4b4b4"/><rect x="3" y="12" width="1" height="1" fill="#b4b4b4"/><rect x="3" y="15" width="1" height="1" fill="#b4b4b4"/></svg>
<svg class="i" style="left:1430px;top:71px" width="5" height="17" viewBox="0 0 5 17"><rect x="0" y="0" width="1" height="1" fill="#b4b4b4"/><rect x="0" y="3" width="1" height="1" fill="#b4b4b4"/><rect x="0" y="6" width="1" height="1" fill="#b4b4b4"/><rect x="0" y="9" width="1" height="1" fill="#b4b4b4"/><rect x="0" y="12" width="1" height="1" fill="#b4b4b4"/><rect x="0" y="15" width="1" height="1" fill="#b4b4b4"/><rect x="3" y="0" width="1" height="1" fill="#b4b4b4"/><rect x="3" y="3" width="1" height="1" fill="#b4b4b4"/><rect x="3" y="6" width="1" height="1" fill="#b4b4b4"/><rect x="3" y="9" width="1" height="1" fill="#b4b4b4"/><rect x="3" y="12" width="1" height="1" fill="#b4b4b4"/><rect x="3" y="15" width="1" height="1" fill="#b4b4b4"/></svg>
<svg class="i" style="left:1757px;top:71px" width="5" height="17" viewBox="0 0 5 17"><rect x="0" y="0" width="1" height="1" fill="#b4b4b4"/><rect x="0" y="3" width="1" height="1" fill="#b4b4b4"/><rect x="0" y="6" width="1" height="1" fill="#b4b4b4"/><rect x="0" y="9" width="1" height="1" fill="#b4b4b4"/><rect x="0" y="12" width="1" height="1" fill="#b4b4b4"/><rect x="0" y="15" width="1" height="1" fill="#b4b4b4"/><rect x="3" y="0" width="1" height="1" fill="#b4b4b4"/><rect x="3" y="3" width="1" height="1" fill="#b4b4b4"/><rect x="3" y="6" width="1" height="1" fill="#b4b4b4"/><rect x="3" y="9" width="1" height="1" fill="#b4b4b4"/><rect x="3" y="12" width="1" height="1" fill="#b4b4b4"/><rect x="3" y="15" width="1" height="1" fill="#b4b4b4"/></svg>
<svg class="i" style="left:1863px;top:71px" width="5" height="17" viewBox="0 0 5 17"><rect x="0" y="0" width="1" height="1" fill="#b4b4b4"/><rect x="0" y="3" width="1" height="1" fill="#b4b4b4"/><rect x="0" y="6" width="1" height="1" fill="#b4b4b4"/><rect x="0" y="9" width="1" height="1" fill="#b4b4b4"/><rect x="0" y="12" width="1" height="1" fill="#b4b4b4"/><rect x="0" y="15" width="1" height="1" fill="#b4b4b4"/><rect x="3" y="0" width="1" height="1" fill="#b4b4b4"/><rect x="3" y="3" width="1" height="1" fill="#b4b4b4"/><rect x="3" y="6" width="1" height="1" fill="#b4b4b4"/><rect x="3" y="9" width="1" height="1" fill="#b4b4b4"/><rect x="3" y="12" width="1" height="1" fill="#b4b4b4"/><rect x="3" y="15" width="1" height="1" fill="#b4b4b4"/></svg>
<svg class="i" style="left:393.5px;top:78.0px" width="7" height="4" viewBox="0 0 7 4"><path d="M0 0h7L3.5 4z" fill="#444"/></svg>
<svg class="i" style="left:438.5px;top:78.0px" width="7" height="4" viewBox="0 0 7 4"><path d="M0 0h7L3.5 4z" fill="#444"/></svg>
<svg class="i" style="left:516.5px;top:78.0px" width="7" height="4" viewBox="0 0 7 4"><path d="M0 0h7L3.5 4z" fill="#c8c8c8"/></svg>
<svg class="i" style="left:1893.5px;top:88.5px" width="5" height="3" viewBox="0 0 5 3"><path d="M0 0h5L2.5 3z" fill="#c8c8c8"/></svg>
<div class="r" style="left:1507px;top:68px;width:1px;height:24px;background:#cfcfcf"></div>
<div class="r" style="left:1580px;top:68px;width:1px;height:24px;background:#cfcfcf"></div>
<div class="t" style="left:1844px;top:68.0px;height:20px;line-height:20px;font-size:16px;color:#333;">»</div>
<div class="t" style="left:1906px;top:68.0px;height:20px;line-height:20px;font-size:16px;color:#333;">»</div>
<svg class="i" style="left:17.0px;top:106.0px" width="24" height="24" viewBox="0 0 24 24"><path d="M2 3h7.500l5 7.500" fill="none" stroke="#5b8cc8" stroke-width="1"/><circle cx="2.500" cy="3" r="1.300" fill="#5b8cc8"/><circle cx="9.500" cy="3" r="1.300" fill="#5b8cc8"/><circle cx="14.500" cy="10.500" r="1.300" fill="#5b8cc8"/><path d="M17 0l1.100 2.300 2.500.300-1.800 1.800.4 2.500L17 5.700l-2.200 1.200.4-2.500-1.800-1.800 2.500-.3z" fill="#4a7ebf"/><text x="8" y="19.500" font-size="16" font-weight="bold" font-family="Liberation Sans,sans-serif" text-anchor="middle" fill="#4a7ebf" stroke="#2f5a94" stroke-width=".5">A</text><rect x="12.500" y="13.500" width="10.500" height="10.500" rx="2" fill="#c8a400"/><g stroke="#fff" stroke-width="1.500" stroke-linecap="round"><line x1="17.700" y1="15.300" x2="17.700" y2="22.300"/><line x1="14.700" y1="17" x2="20.700" y2="20.600"/><line x1="14.700" y1="20.600" x2="20.700" y2="17"/></g></svg>
<svg class="i" style="left:61.0px;top:106.0px" width="24" height="24" viewBox="0 0 24 24"><rect x="3" y="3" width="16" height="15" fill="none" stroke="#555" stroke-width="1" stroke-dasharray="1.500 2"/><rect x="2" y="2" width="3" height="3" fill="#fff" stroke="#555" stroke-width=".7"/><rect x="17.500" y="2" width="3" height="3" fill="#fff" stroke="#555" stroke-width=".7"/><rect x="2" y="16.500" width="3" height="3" fill="#fff" stroke="#555" stroke-width=".7"/><rect x="17.500" y="16.500" width="3" height="3" fill="#fff" stroke="#555" stroke-width=".7"/><path d="M6 2l12.500 11.500-5.200.3 3 5.700-2.500 1.300-3-5.800-4.300 3.500z" fill="#fff" stroke="#222" stroke-width="1.100"/></svg>
<svg class="i" style="left:95.0px;top:106.0px" width="24" height="24" viewBox="0 0 24 24"><path d="M4 3l16-1.500-9 18.500-7-5z" fill="none" stroke="#222" stroke-width="1.300"/><g fill="#2a6ae0"><circle cx="4" cy="3" r="2.600"/><circle cx="20" cy="1.800" r="2.600"/><circle cx="11" cy="20" r="2.600"/><circle cx="3.500" cy="15" r="2.600"/></g><rect x="14" y="14" width="10" height="10" rx="2" fill="#5a9a5a" stroke="#3f7a3f" stroke-width=".6"/><path d="M19 16v6M16 19h6" stroke="#fff" stroke-width="2"/></svg>
<svg class="i" style="left:129.0px;top:106.0px" width="24" height="24" viewBox="0 0 24 24"><path d="M20 3L6 2 2.500 11l7 9.500" fill="none" stroke="#222" stroke-width="1.300"/><g fill="#2a6ae0"><circle cx="20" cy="3" r="2.600"/><circle cx="6" cy="2.200" r="2.600"/><circle cx="2.800" cy="11" r="2.600"/><circle cx="9.500" cy="20.500" r="2.600"/></g><rect x="14" y="14" width="10" height="10" rx="2" fill="#5a9a5a" stroke="#3f7a3f" stroke-width=".6"/><path d="M19 16v6M16 19h6" stroke="#fff" stroke-width="2"/></svg>
<svg class="i" style="left:161.0px;top:106.0px" width="24" height="24" viewBox="0 0 24 24"><path d="M11 1.500l2.900 6.300 6.800.8-5 4.700 1.300 6.800-6-3.400-6 3.400 1.300-6.800-5-4.700 6.800-.8z" fill="#fce4a8" stroke="#e8a850" stroke-width="1.200" stroke-linejoin="round"/><rect x="14" y="14" width="10" height="10" rx="2" fill="#5a9a5a" stroke="#3f7a3f" stroke-width=".6"/><path d="M19 16v6M16 19h6" stroke="#fff" stroke-width="2"/></svg>
<svg class="i" style="left:195.0px;top:106.0px" width="24" height="24" viewBox="0 0 24 24"><text x="10.500" y="17" font-size="18" font-family="Liberation Serif,serif" text-anchor="middle" fill="#333">T</text><rect x="1.500" y="16.500" width="3" height="3" fill="#fff" stroke="#888" stroke-width=".8"/><rect x="13" y="13.5" width="10" height="10" rx="2" fill="#5a9a5a" stroke="#3f7a3f" stroke-width=".6"/><path d="M18 15.5v6M15 18.5h6" stroke="#fff" stroke-width="2"/></svg>
<svg class="i" style="left:234.0px;top:106.0px" width="24" height="24" viewBox="0 0 24 24"><path d="M2 2h21v14H12l-7 6 2-6H2z" fill="#e8f0f8" stroke="#8a9ab0" stroke-width="1"/><text x="12.500" y="14" font-size="14" font-weight="bold" font-family="Liberation Serif,serif" text-anchor="middle" fill="#333">T</text></svg>
<svg class="i" style="left:295.0px;top:106.0px" width="24" height="24" viewBox="0 0 24 24"><rect x="2" y="3" width="20" height="18" fill="none" stroke="#d4d4d4" stroke-width="1"/><path d="M2 3l12 10M14 3L2 13M2 13h20M8 13v8M2 17h12" stroke="#d4d4d4" stroke-width="1" fill="none"/><path d="M20 2l3 2-9 14-4 2 1-4z" fill="#dedad2" stroke="#d0d0d0" stroke-width=".8"/></svg>
<svg class="i" style="left:328.0px;top:106.0px" width="24" height="24" viewBox="0 0 24 24"><rect x="1" y="2" width="20" height="19" fill="#e2dfd2" stroke="#d4d4d4" stroke-width="1"/><path d="M1 2l12 9M13 2L1 11M1 12h20M7 12v9M13 12v9M1 16.500h20" stroke="#d0d0d0" stroke-width="1" fill="none"/><path d="M11 7l10 7-4.200.4 2.300 4.300-2 1-2.200-4.300-3.200 2.800z" fill="#ececec" stroke="#cfcfcf" stroke-width="1"/></svg>
<svg class="i" style="left:378.0px;top:106.0px" width="24" height="24" viewBox="0 0 24 24"><rect x="2" y="3" width="6.500" height="6.500" fill="none" stroke="#d0d0d0" stroke-width="1"/><path d="M2 3l6.500 6.500M8.500 3L2 9.500" stroke="#d0d0d0" stroke-width="1"/><rect x="2" y="14" width="6.500" height="6.500" fill="none" stroke="#d0d0d0" stroke-width="1"/><path d="M2 14l6.500 6.500M8.500 14L2 20.500" stroke="#d0d0d0" stroke-width="1"/><path d="M16 1l4 5-4 4-4-4zM16 1v9" fill="none" stroke="#d0d0d0" stroke-width="1"/><text x="16" y="22" font-size="15" font-family="Liberation Serif,serif" text-anchor="middle" fill="#cfcfcf">ε</text></svg>
<svg class="i" style="left:405.0px;top:106.0px" width="24" height="24" viewBox="0 0 24 24"><path d="M2 3l10 3 10-3v17l-10 2-10-2z" fill="#ebe9e0" stroke="#d0d0d0" stroke-width="1"/><path d="M2 3l10 17L22 3M12 6v14M2 20l10-14 10 14" fill="none" stroke="#d0d0d0" stroke-width="1"/><g fill="#f4f4f4" stroke="#d0d0d0" stroke-width=".8"><circle cx="2.500" cy="3" r="1.500"/><circle cx="12" cy="6" r="1.500"/><circle cx="21.500" cy="3" r="1.500"/><circle cx="12" cy="20" r="1.500"/></g></svg>
<svg class="i" style="left:467.0px;top:106.0px" width="24" height="24" viewBox="0 0 24 24"><rect x="1.500" y="1.500" width="20" height="18" fill="#e4e4e4" stroke="#222" stroke-width="1" stroke-dasharray="2 1.500"/><rect x="2.500" y="2.500" width="12" height="12" fill="#fce94f" stroke="#c4a000" stroke-width="1"/><path d="M10.500 9.500l11 7.500-4.500.5 2.500 4.500-2.200 1.200-2.500-4.700-3.300 3z" fill="#fff" stroke="#222" stroke-width="1"/></svg>
<svg class="i" style="left:512.0px;top:106.0px" width="24" height="24" viewBox="0 0 24 24"><g fill="#fce94f" stroke="#c4a000" stroke-width="1"><rect x="2.500" y="3" width="19" height="5"/><rect x="2.500" y="10" width="19" height="5"/><rect x="2.500" y="17" width="19" height="5"/></g></svg>
<svg class="i" style="left:557.0px;top:106.0px" width="24" height="24" viewBox="0 0 24 24"><rect x="2" y="2.500" width="13" height="13" fill="#fce94f" stroke="#c4a000" stroke-width="1"/><rect x="6.500" y="7" width="13" height="13" fill="#fce94f" stroke="#c4a000" stroke-width="1"/><rect x="13" y="13.500" width="10.500" height="10.500" rx="2.500" fill="#e03030"/><circle cx="18.200" cy="18.700" r="3" fill="none" stroke="#fff" stroke-width="1.300"/><path d="M16.200 20.700l4-4" stroke="#fff" stroke-width="1.300"/></svg>
<svg class="i" style="left:602.0px;top:106.0px" width="24" height="24" viewBox="0 0 24 24"><rect x="2" y="2.500" width="13.500" height="13.500" fill="#fce94f" stroke="#c4a000" stroke-width="1"/><path d="M19.500 23c-2-3.500-3.500-5-3.500-7a3.500 3.500 0 0 1 7 0c0 2-1.500 3.500-3.500 7z" fill="#5b8fb8" stroke="#3a6a90" stroke-width=".6"/><circle cx="19.500" cy="16" r="1.300" fill="#fff"/></svg>
<svg class="i" style="left:668.0px;top:106.0px" width="24" height="24" viewBox="0 0 24 24"><rect x=".5" y=".5" width="23" height="23" fill="#5aa832"/><path d="M.5 .5h23L.5 16z" fill="#7cc050" opacity=".7"/><circle cx="14" cy="10" r="6" fill="none" stroke="#fff" stroke-width="2.400"/><path d="M9.500 14.500l-6 6" stroke="#fff" stroke-width="3" stroke-linecap="round"/></svg>
<svg class="i" style="left:700.0px;top:106.0px" width="24" height="24" viewBox="0 0 24 24"><rect x="1" y="1.500" width="20" height="21" fill="#f0c838"/><path d="M1 1.500h7v8H1z" fill="#48a868"/><path d="M3 3h3v4H3z" fill="#e04848"/><path d="M9 1.500h5l-3 10-4 3H1v-4h5z" fill="#f8e080"/><path d="M12 1.500c2 5 0 9-3 13s4 6 3 8h5c1-3-4-5-2-9s4-7 2-12z" fill="#68a0e0"/><path d="M1 17l8-3 3 4-5 4.500H1z" fill="#e8e0c8"/><path d="M1 20.500l9-5" stroke="#2040c0" stroke-width="1.300"/><path d="M23 2.500l-2.500-2L9 13l-1.500 4 4-1.500z" fill="#b85818" stroke="#703008" stroke-width=".7"/><path d="M9 13l-1.500 4 4-1.500z" fill="#222"/></svg>
<svg class="i" style="left:5px;top:110px" width="5" height="17" viewBox="0 0 5 17"><rect x="0" y="0" width="1" height="1" fill="#b4b4b4"/><rect x="0" y="3" width="1" height="1" fill="#b4b4b4"/><rect x="0" y="6" width="1" height="1" fill="#b4b4b4"/><rect x="0" y="9" width="1" height="1" fill="#b4b4b4"/><rect x="0" y="12" width="1" height="1" fill="#b4b4b4"/><rect x="0" y="15" width="1" height="1" fill="#b4b4b4"/><rect x="3" y="0" width="1" height="1" fill="#b4b4b4"/><rect x="3" y="3" width="1" height="1" fill="#b4b4b4"/><rect x="3" y="6" width="1" height="1" fill="#b4b4b4"/><rect x="3" y="9" width="1" height="1" fill="#b4b4b4"/><rect x="3" y="12" width="1" height="1" fill="#b4b4b4"/><rect x="3" y="15" width="1" height="1" fill="#b4b4b4"/></svg>
<svg class="i" style="left:283px;top:110px" width="5" height="17" viewBox="0 0 5 17"><rect x="0" y="0" width="1" height="1" fill="#b4b4b4"/><rect x="0" y="3" width="1" height="1" fill="#b4b4b4"/><rect x="0" y="6" width="1" height="1" fill="#b4b4b4"/><rect x="0" y="9" width="1" height="1" fill="#b4b4b4"/><rect x="0" y="12" width="1" height="1" fill="#b4b4b4"/><rect x="0" y="15" width="1" height="1" fill="#b4b4b4"/><rect x="3" y="0" width="1" height="1" fill="#b4b4b4"/><rect x="3" y="3" width="1" height="1" fill="#b4b4b4"/><rect x="3" y="6" width="1" height="1" fill="#b4b4b4"/><rect x="3" y="9" width="1" height="1" fill="#b4b4b4"/><rect x="3" y="12" width="1" height="1" fill="#b4b4b4"/><rect x="3" y="15" width="1" height="1" fill="#b4b4b4"/></svg>
<svg class="i" style="left:455px;top:110px" width="5" height="17" viewBox="0 0 5 17"><rect x="0" y="0" width="1" height="1" fill="#b4b4b4"/><rect x="0" y="3" width="1" height="1" fill="#b4b4b4"/><rect x="0" y="6" width="1" height="1" fill="#b4b4b4"/><rect x="0" y="9" width="1" height="1" fill="#b4b4b4"/><rect x="0" y="12" width="1" height="1" fill="#b4b4b4"/><rect x="0" y="15" width="1" height="1" fill="#b4b4b4"/><rect x="3" y="0" width="1" height="1" fill="#b4b4b4"/><rect x="3" y="3" width="1" height="1" fill="#b4b4b4"/><rect x="3" y="6" width="1" height="1" fill="#b4b4b4"/><rect x="3" y="9" width="1" height="1" fill="#b4b4b4"/><rect x="3" y="12" width="1" height="1" fill="#b4b4b4"/><rect x="3" y="15" width="1" height="1" fill="#b4b4b4"/></svg>
<svg class="i" style="left:639px;top:110px" width="5" height="17" viewBox="0 0 5 17"><rect x="0" y="0" width="1" height="1" fill="#b4b4b4"/><rect x="0" y="3" width="1" height="1" fill="#b4b4b4"/><rect x="0" y="6" width="1" height="1" fill="#b4b4b4"/><rect x="0" y="9" width="1" height="1" fill="#b4b4b4"/><rect x="0" y="12" width="1" height="1" fill="#b4b4b4"/><rect x="0" y="15" width="1" height="1" fill="#b4b4b4"/><rect x="3" y="0" width="1" height="1" fill="#b4b4b4"/><rect x="3" y="3" width="1" height="1" fill="#b4b4b4"/><rect x="3" y="6" width="1" height="1" fill="#b4b4b4"/><rect x="3" y="9" width="1" height="1" fill="#b4b4b4"/><rect x="3" y="12" width="1" height="1" fill="#b4b4b4"/><rect x="3" y="15" width="1" height="1" fill="#b4b4b4"/></svg>
<svg class="i" style="left:656px;top:110px" width="5" height="17" viewBox="0 0 5 17"><rect x="0" y="0" width="1" height="1" fill="#b4b4b4"/><rect x="0" y="3" width="1" height="1" fill="#b4b4b4"/><rect x="0" y="6" width="1" height="1" fill="#b4b4b4"/><rect x="0" y="9" width="1" height="1" fill="#b4b4b4"/><rect x="0" y="12" width="1" height="1" fill="#b4b4b4"/><rect x="0" y="15" width="1" height="1" fill="#b4b4b4"/><rect x="3" y="0" width="1" height="1" fill="#b4b4b4"/><rect x="3" y="3" width="1" height="1" fill="#b4b4b4"/><rect x="3" y="6" width="1" height="1" fill="#b4b4b4"/><rect x="3" y="9" width="1" height="1" fill="#b4b4b4"/><rect x="3" y="12" width="1" height="1" fill="#b4b4b4"/><rect x="3" y="15" width="1" height="1" fill="#b4b4b4"/></svg>
<svg class="i" style="left:738px;top:110px" width="5" height="17" viewBox="0 0 5 17"><rect x="0" y="0" width="1" height="1" fill="#b4b4b4"/><rect x="0" y="3" width="1" height="1" fill="#b4b4b4"/><rect x="0" y="6" width="1" height="1" fill="#b4b4b4"/><rect x="0" y="9" width="1" height="1" fill="#b4b4b4"/><rect x="0" y="12" width="1" height="1" fill="#b4b4b4"/><rect x="0" y="15" width="1" height="1" fill="#b4b4b4"/><rect x="3" y="0" width="1" height="1" fill="#b4b4b4"/><rect x="3" y="3" width="1" height="1" fill="#b4b4b4"/><rect x="3" y="6" width="1" height="1" fill="#b4b4b4"/><rect x="3" y="9" width="1" height="1" fill="#b4b4b4"/><rect x="3" y="12" width="1" height="1" fill="#b4b4b4"/><rect x="3" y="15" width="1" height="1" fill="#b4b4b4"/></svg>
<svg class="i" style="left:47.5px;top:117.0px" width="7" height="4" viewBox="0 0 7 4"><path d="M0 0h7L3.5 4z" fill="#444"/></svg>
<svg class="i" style="left:264.5px;top:117.0px" width="7" height="4" viewBox="0 0 7 4"><path d="M0 0h7L3.5 4z" fill="#444"/></svg>
<svg class="i" style="left:497.5px;top:117.0px" width="7" height="4" viewBox="0 0 7 4"><path d="M0 0h7L3.5 4z" fill="#444"/></svg>
<svg class="i" style="left:542.5px;top:117.0px" width="7" height="4" viewBox="0 0 7 4"><path d="M0 0h7L3.5 4z" fill="#444"/></svg>
<svg class="i" style="left:587.5px;top:117.0px" width="7" height="4" viewBox="0 0 7 4"><path d="M0 0h7L3.5 4z" fill="#444"/></svg>
<svg class="i" style="left:358.5px;top:117.0px" width="7" height="4" viewBox="0 0 7 4"><path d="M0 0h7L3.5 4z" fill="#cfcfcf"/></svg>
<svg class="i" style="left:436.5px;top:117.0px" width="7" height="4" viewBox="0 0 7 4"><path d="M0 0h7L3.5 4z" fill="#cfcfcf"/></svg>
<div class="r" style="left:226px;top:106px;width:1px;height:24px;background:#cfcfcf"></div>
<div class="r" style="left:746px;top:106px;width:300px;height:25px;background:#fff;border:1px solid #b9b9b9;border-radius:3px;box-sizing:border-box"></div>
<div class="t" style="left:750px;top:108.5px;height:20px;line-height:20px;font-size:15px;color:#8a8a8a;letter-spacing:-0.062px;">MapTiler Geocoding API</div>
<div class="r" style="left:0px;top:138px;width:315px;height:885px;background:#efefef"></div>
<div class="t" style="left:4px;top:137.6px;height:20px;line-height:20px;font-size:15px;color:#000;letter-spacing:0.141px;">Browser</div>
<svg class="i" style="left:281px;top:142.1px" width="11" height="11" viewBox="0 0 11 11"><rect x=".5" y=".5" width="10" height="10" rx="2" fill="#efefef" stroke="#555" stroke-width="1"/><rect x="2.500" y="4.500" width="4" height="4" fill="none" stroke="#555" stroke-width=".9"/><path d="M4.500 4.500v-2h4v4h-2" fill="none" stroke="#555" stroke-width=".9"/></svg>
<svg class="i" style="left:295px;top:142.1px" width="11" height="11" viewBox="0 0 11 11"><rect x=".5" y=".5" width="10" height="10" rx="2" fill="#efefef" stroke="#555" stroke-width="1"/><path d="M2.800 2.800l5.400 5.400M8.200 2.800l-5.400 5.400" stroke="#333" stroke-width="1.500"/></svg>
<svg class="i" style="left:8.0px;top:164.0px" width="16" height="16" viewBox="0 0 16 16"><rect x="1.500" y="1.500" width="11" height="11" fill="#fff" stroke="#666" stroke-width="1"/><circle cx="12.500" cy="12.500" r="2.800" fill="#7fc07f" stroke="#3f8a3f" stroke-width=".8"/></svg>
<svg class="i" style="left:33.0px;top:164.0px" width="16" height="16" viewBox="0 0 16 16"><path d="M1.500 7.500a6.500 6.500 0 0 1 11-4l1.800-1.800v5.800H8.500l2-2a3.800 3.800 0 0 0-6.200 2z" fill="#4f8cd6"/><path d="M14.500 8.500a6.500 6.500 0 0 1-11 4l-1.800 1.800V8.500h5.800l-2 2a3.800 3.800 0 0 0 6.200-2z" fill="#6aa2e4"/></svg>
<svg class="i" style="left:58.0px;top:164.0px" width="16" height="16" viewBox="0 0 16 16"><path d="M1.500 2.500h13L9.500 8.500v6l-3-1.500v-4.500z" fill="#5b8fd0" stroke="#3a6aa8" stroke-width=".6"/><rect x="1.200" y="1" width="13.600" height="2.200" fill="#f0d020"/></svg>
<svg class="i" style="left:83.5px;top:164.0px" width="16" height="16" viewBox="0 0 16 16"><path d="M2 3v11M2 6.500h3M2 12h3" stroke="#888" stroke-width=".8" fill="none"/><rect x="4.500" y="5" width="3" height="3" fill="#f8a820" stroke="#d08000" stroke-width=".5"/><rect x="4.500" y="10.500" width="3" height="3" fill="#f8a820" stroke="#d08000" stroke-width=".5"/><path d="M11 1.500l4 4.500h-2.200v8h-3.600V6H7z" fill="#4a7ebf" stroke="#2f5a94" stroke-width=".6"/></svg>
<svg class="i" style="left:108.0px;top:164.0px" width="16" height="16" viewBox="0 0 16 16"><circle cx="8" cy="8" r="6.800" fill="#5b8fd8" stroke="#8fb2e8" stroke-width=".8"/><text x="8" y="12" font-size="11" font-style="italic" font-weight="bold" font-family="Liberation Serif,serif" text-anchor="middle" fill="#fff">i</text></svg>
<div class="r" style="left:0px;top:188px;width:308px;height:390px;background:#fff;border:1px solid #bdbdbd;box-sizing:border-box"></div>
<div class="r" style="left:293px;top:189px;width:14px;height:388px;background:#d3d3d3;border-left:1px solid #bdbdbd;box-sizing:border-box"></div>
<div class="r" style="left:294px;top:189px;width:13px;height:13px;background:#f3f3f3;border-bottom:1px solid #bdbdbd;box-sizing:border-box"></div>
<div class="r" style="left:294px;top:564px;width:13px;height:13px;background:#f3f3f3;border-top:1px solid #bdbdbd;box-sizing:border-box"></div>
<div class="r" style="left:294px;top:262px;width:13px;height:241px;background:#f6f6f6;border-top:1px solid #bdbdbd;border-bottom:1px solid #bdbdbd;box-sizing:border-box"></div>
<svg class="i" style="left:296px;top:193px" width="9" height="5" viewBox="0 0 9 5"><path d="M0 5h9L4.500 0z" fill="#444"/></svg>
<svg class="i" style="left:296px;top:568px" width="9" height="5" viewBox="0 0 9 5"><path d="M0 0h9L4.500 5z" fill="#444"/></svg>
<svg class="i" style="left:6.5px;top:194.5px" width="5" height="8" viewBox="0 0 5 8"><path d="M0 0v8L5 4z" fill="#555"/></svg>
<svg class="i" style="left:20.0px;top:190.5px" width="16" height="16" viewBox="0 0 16 16"><circle cx="8" cy="8" r="7" fill="#dfe8f4" stroke="#3a6fb0" stroke-width="1.200"/><ellipse cx="8" cy="8" rx="3.200" ry="7" fill="none" stroke="#6a8ab8" stroke-width=".7"/><path d="M1 8h14M2.200 4.500h11.600M2.200 11.500h11.600" stroke="#6a8ab8" stroke-width=".7"/><path d="M4 4l3 1-1 3-2.500-.5zM9 3.500l3 1 .5 3-3 1zM7 10l2 .5-.5 3z" fill="#3a5a8a"/></svg>
<div class="t" style="left:42.5px;top:189.0px;height:20px;line-height:20px;font-size:14px;color:#000;letter-spacing:0.391px;">WMS/WMTS</div>
<svg class="i" style="left:20.0px;top:209.5px" width="16" height="16" viewBox="0 0 16 16"><rect x="1" y="1" width="14" height="14" fill="#3f5a80"/><path d="M5.500 1v14M10.500 1v14M1 5.500h14M1 10.500h14" stroke="#dfe6f0" stroke-width="1.300"/></svg>
<div class="t" style="left:42.5px;top:208.0px;height:20px;line-height:20px;font-size:14px;color:#000;letter-spacing:0.532px;">Vector Tiles</div>
<svg class="i" style="left:6.5px;top:232.5px" width="5" height="8" viewBox="0 0 5 8"><path d="M0 0v8L5 4z" fill="#555"/></svg>
<svg class="i" style="left:20.0px;top:228.5px" width="16" height="16" viewBox="0 0 16 16"><rect x="1" y="1" width="4" height="4" fill="#5b8cc8"/><rect x="1" y="6" width="4" height="4" fill="#5b8cc8"/><rect x="1" y="11" width="4" height="4" fill="#5b8cc8"/><rect x="6" y="1" width="4" height="4" fill="#5b8cc8"/><rect x="6" y="6" width="4" height="4" fill="#5b8cc8"/><rect x="6" y="11" width="4" height="4" fill="#5b8cc8"/><rect x="11" y="1" width="4" height="4" fill="#5b8cc8"/><rect x="11" y="6" width="4" height="4" fill="#5b8cc8"/><rect x="11" y="11" width="4" height="4" fill="#5b8cc8"/></svg>
<div class="t" style="left:42.5px;top:227.0px;height:20px;line-height:20px;font-size:14px;color:#000;letter-spacing:0.149px;">XYZ Tiles</div>
<svg class="i" style="left:6.5px;top:251.5px" width="5" height="8" viewBox="0 0 5 8"><path d="M0 0v8L5 4z" fill="#555"/></svg>
<svg class="i" style="left:20.0px;top:247.5px" width="16" height="16" viewBox="0 0 16 16"><circle cx="8" cy="8" r="7" fill="#f4f8fc" stroke="#6a9ad0" stroke-width="1.200"/><path d="M1 8h14M8 1v14" stroke="#b8cce4" stroke-width=".7"/><path d="M4 5l3 7 1.500-7M8.500 5l3.500 2" stroke="#555" stroke-width=".9" fill="none"/></svg>
<div class="t" style="left:42.5px;top:246.0px;height:20px;line-height:20px;font-size:14px;color:#000;letter-spacing:0.050px;">WFS / OGC API - Features</div>
<svg class="i" style="left:20.0px;top:266.5px" width="16" height="16" viewBox="0 0 16 16"><circle cx="8" cy="8" r="7" fill="#3f5f8a" stroke="#24406a" stroke-width="1.200"/><ellipse cx="8" cy="8" rx="3.200" ry="7" fill="none" stroke="#dfe8f4" stroke-width=".8"/><path d="M1 8h14M2.200 4.500h11.600M2.200 11.500h11.600" stroke="#dfe8f4" stroke-width=".8"/><rect x="5" y="6" width="6" height="4" fill="#dfe8f4"/></svg>
<div class="t" style="left:42.5px;top:265.0px;height:20px;line-height:20px;font-size:14px;color:#000;letter-spacing:-0.787px;">WCS</div>
<svg class="i" style="left:6.5px;top:289.5px" width="5" height="8" viewBox="0 0 5 8"><path d="M0 0v8L5 4z" fill="#555"/></svg>
<svg class="i" style="left:20.0px;top:285.5px" width="16" height="16" viewBox="0 0 16 16"><circle cx="8" cy="8" r="7" fill="#dfe8f4" stroke="#3a6fb0" stroke-width="1.200"/><ellipse cx="8" cy="8" rx="3.200" ry="7" fill="none" stroke="#6a8ab8" stroke-width=".7"/><path d="M1 8h14M2.200 4.500h11.600M2.200 11.500h11.600" stroke="#6a8ab8" stroke-width=".7"/><path d="M3 5l3-1 1 3-2 3zM4 11l2-1 1 4zM9 3l3 1 1 3-3 1z" fill="#444"/></svg>
<div class="t" style="left:42.5px;top:284.0px;height:20px;line-height:20px;font-size:14px;color:#000;letter-spacing:-0.146px;">ArcGIS REST Servers</div>
<svg class="i" style="left:20.0px;top:304.5px" width="16" height="16" viewBox="0 0 16 16"><g stroke="#5b8cc8" stroke-width="2" stroke-linecap="round"><path d="M8 1.500v13M2.400 4.700l11.200 6.600M2.400 11.300l11.200-6.600"/></g></svg>
<div class="t" style="left:42.5px;top:303.0px;height:20px;line-height:20px;font-size:14px;color:#000;letter-spacing:0.438px;">GeoNode</div>
<svg class="i" style="left:6.5px;top:327.5px" width="5" height="8" viewBox="0 0 5 8"><path d="M0 0v8L5 4z" fill="#555"/></svg>
<svg class="i" style="left:20.0px;top:323.5px" width="16" height="16" viewBox="0 0 16 16"><path d="M8 15.500L2.500 9.500a4 4 0 0 1 0-5.500L8 9.500z" fill="#f03060"/><path d="M8 15.500l5.500-6a4 4 0 0 0 0-5.500L8 9.500z" fill="#f8a820"/><path d="M2.500 4l2-2a5 5 0 0 1 7 0l2 2L8 9.500z" fill="#f06030"/><path d="M8 15.500l-4-4.500 4-4 4 4z" fill="#6030c0"/><path d="M8 10.500l-3-3 3-3 3 3z" fill="#fff"/><path d="M8 15.500l4-4.500-2-2-2 2z" fill="#3060e0"/></svg>
<div class="t" style="left:42.5px;top:322.0px;height:20px;line-height:20px;font-size:14px;color:#000;letter-spacing:0.633px;">MapTiler</div>
<svg class="i" style="left:20.0px;top:342.5px" width="16" height="16" viewBox="0 0 16 16"><path d="M1 7l7-3 7 3v5l-7 3.500L1 12z" fill="#f0d020" stroke="#6a5a00" stroke-width=".8"/><path d="M1 7l7 3 7-3M8 10v5.500" fill="none" stroke="#6a5a00" stroke-width=".8"/><circle cx="8" cy="5" r="4.300" fill="#7aa0d0" stroke="#2f5a94" stroke-width=".8"/><path d="M6 3l2 .5-.5 2-2-.5zM9 4l2-.5.5 2-2 .5z" fill="#2a4a7a"/></svg>
<div class="t" style="left:42.5px;top:341.0px;height:20px;line-height:20px;font-size:14px;color:#000;letter-spacing:0.106px;">GeoPackage</div>
<svg class="i" style="left:20.0px;top:361.5px" width="16" height="16" viewBox="0 0 16 16"><path d="M1 15C3 8 8 2 15 1 13 6 8 9 4 10z" fill="#8aa8d0" stroke="#3f5f8a" stroke-width=".8"/><path d="M1 15l5-7" stroke="#3f5f8a" stroke-width=".8"/></svg>
<div class="t" style="left:42.5px;top:360.0px;height:20px;line-height:20px;font-size:14px;color:#000;letter-spacing:0.453px;">SpatiaLite</div>
<svg class="i" style="left:4.5px;top:386.5px" width="8" height="5" viewBox="0 0 8 5"><path d="M0 0h8L4 5z" fill="#555"/></svg>
<svg class="i" style="left:20.0px;top:380.5px" width="16" height="16" viewBox="0 0 16 16"><path d="M3 2c-2 1-2 6 0 9l1 3 2-1V9c2 1 4 1 6 0v4l2 2 1-4c1.500-4 1.500-8-1-9.500S5 .5 3 2z" fill="#4a78b0" stroke="#2a4a7a" stroke-width=".8"/><path d="M6 3v5M10 3v5" stroke="#dfe8f4" stroke-width=".8"/></svg>
<div class="t" style="left:42.5px;top:379.0px;height:20px;line-height:20px;font-size:14px;color:#000;letter-spacing:-0.090px;">PostGIS</div>
<svg class="i" style="left:20.5px;top:405.5px" width="8" height="5" viewBox="0 0 8 5"><path d="M0 0h8L4 5z" fill="#555"/></svg>
<svg class="i" style="left:36.0px;top:399.5px" width="16" height="16" viewBox="0 0 16 16"><path d="M2 8h7M9 8l4-3M9 8l4 3" stroke="#8a5a00" stroke-width="1.700" fill="none"/></svg>
<div class="t" style="left:58.5px;top:398.0px;height:20px;line-height:20px;font-size:14px;color:#000;letter-spacing:0.268px;">gis</div>
<svg class="i" style="left:36.5px;top:424.5px" width="8" height="5" viewBox="0 0 8 5"><path d="M0 0h8L4 5z" fill="#555"/></svg>
<svg class="i" style="left:52.0px;top:418.5px" width="16" height="16" viewBox="0 0 16 16"><path d="M3 4v8.500c0 1.200 2.200 2 5 2s5-.8 5-2V4" fill="#f8f8f8" stroke="#777" stroke-width=".9"/><ellipse cx="8" cy="4" rx="5" ry="2" fill="#f8f8f8" stroke="#777" stroke-width=".9"/><path d="M3 8c0 1.200 2.200 2 5 2s5-.8 5-2" fill="none" stroke="#777" stroke-width=".9"/></svg>
<div class="t" style="left:74.5px;top:417.0px;height:20px;line-height:20px;font-size:14px;color:#000;letter-spacing:0.603px;">public</div>
<div class="r" style="left:1px;top:436px;width:216px;height:19px;background:#308cc6"></div>
<svg class="i" style="left:54.5px;top:441.5px" width="5" height="8" viewBox="0 0 5 8"><path d="M0 0v8L5 4z" fill="#fff"/></svg>
<svg class="i" style="left:68.0px;top:437.5px" width="16" height="16" viewBox="0 0 16 16"><g fill="#e8c89a"><rect x="2" y="12" width="1.500" height="1.500"/><rect x="5" y="6" width="1.500" height="1.500"/><rect x="10" y="3" width="1.500" height="1.500"/></g></svg>
<div class="t" style="left:90.5px;top:436.0px;height:20px;line-height:20px;font-size:14px;color:#fff;letter-spacing:0.313px;">address</div>
<svg class="i" style="left:54.5px;top:460.5px" width="5" height="8" viewBox="0 0 5 8"><path d="M0 0v8L5 4z" fill="#555"/></svg>
<svg class="i" style="left:68.0px;top:456.5px" width="16" height="16" viewBox="0 0 16 16"><path d="M1.500 4.500c2-2 5-1 7-.5s4-1.500 6 0 1 4.500 1 6-2 2-3.500 1-3-1.500-5-.5-4 2-5 .5 .5-3 0-4.500-1-1.500-.5-2z" fill="#e4e4e4" stroke="#9a9a9a" stroke-width=".9"/></svg>
<div class="t" style="left:90.5px;top:455.0px;height:20px;line-height:20px;font-size:14px;color:#000;letter-spacing:0.476px;">mb</div>
<svg class="i" style="left:54.5px;top:479.5px" width="5" height="8" viewBox="0 0 5 8"><path d="M0 0v8L5 4z" fill="#555"/></svg>
<svg class="i" style="left:68.0px;top:475.5px" width="16" height="16" viewBox="0 0 16 16"><path d="M1.500 4.500c2-2 5-1 7-.5s4-1.500 6 0 1 4.500 1 6-2 2-3.500 1-3-1.500-5-.5-4 2-5 .5 .5-3 0-4.500-1-1.500-.5-2z" fill="#e4e4e4" stroke="#9a9a9a" stroke-width=".9"/></svg>
<div class="t" style="left:90.5px;top:474.0px;height:20px;line-height:20px;font-size:14px;color:#000;letter-spacing:0.572px;">postcode</div>
<svg class="i" style="left:54.5px;top:498.5px" width="5" height="8" viewBox="0 0 5 8"><path d="M0 0v8L5 4z" fill="#555"/></svg>
<svg class="i" style="left:68.0px;top:494.5px" width="16" height="16" viewBox="0 0 16 16"><path d="M1.500 4.500c2-2 5-1 7-.5s4-1.500 6 0 1 4.500 1 6-2 2-3.500 1-3-1.500-5-.5-4 2-5 .5 .5-3 0-4.500-1-1.500-.5-2z" fill="#e4e4e4" stroke="#9a9a9a" stroke-width=".9"/></svg>
<div class="t" style="left:90.5px;top:493.0px;height:20px;line-height:20px;font-size:14px;color:#000;letter-spacing:0.595px;">postcode_mb</div>
<svg class="i" style="left:54.5px;top:517.5px" width="5" height="8" viewBox="0 0 5 8"><path d="M0 0v8L5 4z" fill="#555"/></svg>
<svg class="i" style="left:68.0px;top:513.5px" width="16" height="16" viewBox="0 0 16 16"><rect x="1.500" y="1.500" width="13" height="13" rx="1" fill="#fff" stroke="#777" stroke-width="1"/><path d="M1.500 5h13M3.500 7.500h3M8 7.500h5M3.500 10h3M8 10h5M3.500 12.500h3M8 12.500h5" stroke="#777" stroke-width=".9"/><rect x="2" y="2" width="12" height="2.700" fill="#ddd"/></svg>
<div class="t" style="left:90.5px;top:512.0px;height:20px;line-height:20px;font-size:14px;color:#000;letter-spacing:0.500px;">raster_columns</div>
<svg class="i" style="left:54.5px;top:536.5px" width="5" height="8" viewBox="0 0 5 8"><path d="M0 0v8L5 4z" fill="#555"/></svg>
<svg class="i" style="left:68.0px;top:532.5px" width="16" height="16" viewBox="0 0 16 16"><path d="M1.500 4.500c2-2 5-1 7-.5s4-1.500 6 0 1 4.500 1 6-2 2-3.500 1-3-1.500-5-.5-4 2-5 .5 .5-3 0-4.500-1-1.500-.5-2z" fill="#e4e4e4" stroke="#9a9a9a" stroke-width=".9"/></svg>
<div class="t" style="left:90.5px;top:531.0px;height:20px;line-height:20px;font-size:14px;color:#000;letter-spacing:0.441px;">regc</div>
<svg class="i" style="left:54.5px;top:555.5px" width="5" height="8" viewBox="0 0 5 8"><path d="M0 0v8L5 4z" fill="#555"/></svg>
<svg class="i" style="left:68.0px;top:551.5px" width="16" height="16" viewBox="0 0 16 16"><path d="M1.500 4.500c2-2 5-1 7-.5s4-1.500 6 0 1 4.500 1 6-2 2-3.500 1-3-1.500-5-.5-4 2-5 .5 .5-3 0-4.500-1-1.500-.5-2z" fill="#e4e4e4" stroke="#9a9a9a" stroke-width=".9"/></svg>
<div class="t" style="left:90.5px;top:550.0px;height:20px;line-height:20px;font-size:14px;color:#000;letter-spacing:-0.657px;">sa1</div>
<div class="r" style="left:1px;top:570px;width:292px;height:7px;overflow:hidden"><div class="t" style="left:89.500px;top:-1.500px;height:20px;line-height:20px;font-size:14px;letter-spacing:.5px">sa2</div><svg class="i" style="left:67px;top:.5px" width="16" height="16" viewBox="0 0 16 16"><path d="M1.500 4.500c2-2 5-1 7-.5s4-1.500 6 0 1 4.500 1 6-2 2-3.500 1-3-1.500-5-.5-4 2-5 .5 .5-3 0-4.500-1-1.500-.5-2z" fill="#e4e4e4" stroke="#9a9a9a" stroke-width=".9"/></svg><svg class="i" style="left:54.500px;top:4px" width="5" height="8"><path d="M0 0v8L5 4z" fill="#555"/></svg></div>
<svg class="i" style="left:146px;top:580px" width="17" height="2" viewBox="0 0 17 2"><rect x="0" y="0" width="1" height="1" fill="#b0b0b0"/><rect x="3" y="0" width="1" height="1" fill="#b0b0b0"/><rect x="6" y="0" width="1" height="1" fill="#b0b0b0"/><rect x="9" y="0" width="1" height="1" fill="#b0b0b0"/><rect x="12" y="0" width="1" height="1" fill="#b0b0b0"/><rect x="15" y="0" width="1" height="1" fill="#b0b0b0"/></svg>
<div class="t" style="left:4px;top:583.2px;height:20px;line-height:20px;font-size:15px;color:#000;letter-spacing:-0.337px;">Layers</div>
<svg class="i" style="left:281px;top:587.7px" width="11" height="11" viewBox="0 0 11 11"><rect x=".5" y=".5" width="10" height="10" rx="2" fill="#efefef" stroke="#555" stroke-width="1"/><rect x="2.500" y="4.500" width="4" height="4" fill="none" stroke="#555" stroke-width=".9"/><path d="M4.500 4.500v-2h4v4h-2" fill="none" stroke="#555" stroke-width=".9"/></svg>
<svg class="i" style="left:295px;top:587.7px" width="11" height="11" viewBox="0 0 11 11"><rect x=".5" y=".5" width="10" height="10" rx="2" fill="#efefef" stroke="#555" stroke-width="1"/><path d="M2.800 2.800l5.400 5.400M8.200 2.800l-5.400 5.400" stroke="#333" stroke-width="1.500"/></svg>
<svg class="i" style="left:8.0px;top:610.0px" width="16" height="16" viewBox="0 0 16 16"><path d="M1.500 9l6-3 3 5-6 3.500z" fill="#e04040"/><path d="M1.500 9l6-3 1 1.700-6 3z" fill="#f0c030"/><path d="M3 6l5-2.500 1.200 2L4 8z" fill="#5b8fd8"/><path d="M14.500 1l-5.500 7 1.500 1.500z" fill="#c88830" stroke="#8a5a10" stroke-width=".5"/><path d="M9 8l-2.500 3.500 2.500 1.500 1.800-3.500z" fill="#e8c070" stroke="#a87820" stroke-width=".5"/></svg>
<svg class="i" style="left:33.0px;top:610.0px" width="16" height="16" viewBox="0 0 16 16"><rect x="2" y="5" width="8" height="9" fill="#f4f4f4" stroke="#777" stroke-width=".9"/><rect x="4.500" y="2.500" width="8" height="9" fill="#f4f4f4" stroke="#777" stroke-width=".9"/><path d="M8 1v7" stroke="#777" stroke-width="1.600"/><circle cx="12" cy="12.500" r="3" fill="#7fc07f" stroke="#3f8a3f" stroke-width=".7"/></svg>
<svg class="i" style="left:58.0px;top:610.0px" width="16" height="16" viewBox="0 0 16 16"><path d="M.5 7.500c3.500-5.500 10-5.500 13.500 0-3.500 5-10 5-13.500 0z" fill="#fff" stroke="#999" stroke-width=".9"/><circle cx="7.200" cy="7.200" r="3" fill="#5b8fd0"/><circle cx="7.200" cy="7.200" r="1.300" fill="#223"/><path d="M11.500 13h4l-2 2.500z" fill="#444"/></svg>
<svg class="i" style="left:83.0px;top:610.0px" width="16" height="16" viewBox="0 0 16 16"><path d="M1.500 2.500h12L8.500 8.500v6l-3-1.500v-4.500z" fill="#5b8fd0" stroke="#3a6aa8" stroke-width=".6"/><rect x="1.200" y="1" width="12.600" height="2.200" fill="#f0d020"/><path d="M11.500 13h4l-2 2.500z" fill="#444"/></svg>
<svg class="i" style="left:108.0px;top:610.0px" width="16" height="16" viewBox="0 0 16 16"><text x="5" y="10" font-size="13" font-family="Liberation Serif,serif" text-anchor="middle" fill="#cdcdcd">ε</text><path d="M8 14c0-4 1-5 3-5s3 1 3 5" fill="#e4e4e4" stroke="#d4d4d4" stroke-width=".8"/></svg>
<svg class="i" style="left:145.0px;top:610.0px" width="16" height="16" viewBox="0 0 16 16"><path d="M2 3v11M2 6.500h3M2 12h3" stroke="#888" stroke-width=".8" fill="none"/><rect x="4.500" y="5" width="3" height="3" fill="#f8a820" stroke="#d08000" stroke-width=".5"/><rect x="4.500" y="10.500" width="3" height="3" fill="#f8a820" stroke="#d08000" stroke-width=".5"/><path d="M11 14.500l4-4.500h-2.200V2H9.200v8H7z" fill="#4a7ebf" stroke="#2f5a94" stroke-width=".6"/></svg>
<svg class="i" style="left:170.0px;top:610.0px" width="16" height="16" viewBox="0 0 16 16"><path d="M2 3v11M2 6.500h3M2 12h3" stroke="#888" stroke-width=".8" fill="none"/><rect x="4.500" y="5" width="3" height="3" fill="#f8a820" stroke="#d08000" stroke-width=".5"/><rect x="4.500" y="10.500" width="3" height="3" fill="#f8a820" stroke="#d08000" stroke-width=".5"/><path d="M11 1.500l4 4.500h-2.200v8h-3.600V6H7z" fill="#4a7ebf" stroke="#2f5a94" stroke-width=".6"/></svg>
<svg class="i" style="left:194.5px;top:610.0px" width="16" height="16" viewBox="0 0 16 16"><rect x="1.500" y="1.500" width="11" height="11" fill="#fff" stroke="#666" stroke-width="1"/><rect x="9.500" y="10.500" width="6" height="4" rx="1.500" fill="#e02828"/><path d="M10.800 12.500h3.400" stroke="#fff" stroke-width="1.100"/></svg>
<svg class="i" style="left:130.5px;top:617.0px" width="6" height="3" viewBox="0 0 6 3"><path d="M0 0h6L3.0 3z" fill="#cfcfcf"/></svg>
<div class="r" style="left:0px;top:634px;width:308px;height:389px;background:#fff;border:1px solid #bdbdbd;box-sizing:border-box"></div>
<div class="r" style="left:63px;top:635px;width:244px;height:19px;background:#e6f2fc;border:1px solid #a8cff0;box-sizing:border-box"></div>
<svg class="i" style="left:24px;top:637.5px" width="14" height="14" viewBox="0 0 14 14"><rect x=".5" y=".5" width="13" height="13" fill="#fff" stroke="#b4b4b4"/><path d="M3.500 7l2.500 3.500L10.500 3" fill="none" stroke="#111" stroke-width="1.700"/></svg>
<svg class="i" style="left:44px;top:636.5px" width="16" height="16" viewBox="0 0 16 16"><rect x=".5" y=".5" width="15" height="15" fill="#fff" stroke="#9a9a9a"/></svg>
<div class="t" style="left:66.3px;top:635.0px;height:20px;line-height:20px;font-size:14px;font-weight:bold;color:#000;letter-spacing:0.271px;text-decoration:underline;">postcode_mb</div>
<svg class="i" style="left:24px;top:656.5px" width="14" height="14" viewBox="0 0 14 14"><rect x=".5" y=".5" width="13" height="13" fill="#fff" stroke="#b4b4b4"/><path d="M3.500 7l2.500 3.500L10.500 3" fill="none" stroke="#111" stroke-width="1.700"/></svg>
<div class="t" style="left:66.3px;top:654.0px;height:20px;line-height:20px;font-size:14px;font-weight:bold;color:#000;letter-spacing:0.271px;">postcode_mb</div>
<svg class="i" style="left:24px;top:675.5px" width="14" height="14" viewBox="0 0 14 14"><rect x=".5" y=".5" width="13" height="13" fill="#fff" stroke="#b4b4b4"/><path d="M3.500 7l2.500 3.500L10.500 3" fill="none" stroke="#111" stroke-width="1.700"/></svg>
<div class="r" style="left:50px;top:681.5px;width:2px;height:2px;background:#333"></div>
<div class="t" style="left:64.2px;top:673.0px;height:20px;line-height:20px;font-size:14px;font-weight:bold;color:#000;letter-spacing:0.186px;">address</div>
<svg class="i" style="left:9px;top:697.5px" width="5" height="8" viewBox="0 0 5 8"><path d="M0 0v8L5 4z" fill="#555"/></svg>
<svg class="i" style="left:24px;top:694.5px" width="14" height="14" viewBox="0 0 14 14"><rect x=".5" y=".5" width="13" height="13" fill="#fff" stroke="#b4b4b4"/><path d="M3.500 7l2.500 3.500L10.500 3" fill="none" stroke="#111" stroke-width="1.700"/></svg>
<svg class="i" style="left:44.0px;top:693.5px" width="16" height="16" viewBox="0 0 16 16"><path d="M1.500 4.500c2-2 5-1 7-.5s4-1.500 6 0 1 4.500 1 6-2 2-3.500 1-3-1.500-5-.5-4 2-5 .5 .5-3 0-4.500-1-1.500-.5-2z" fill="#e4e4e4" stroke="#9a9a9a" stroke-width=".9"/></svg>
<div class="t" style="left:66.3px;top:692.0px;height:20px;line-height:20px;font-size:14px;font-weight:bold;color:#000;letter-spacing:0.347px;">postcode</div>
<svg class="i" style="left:7px;top:718.5px" width="8" height="5" viewBox="0 0 8 5"><path d="M0 0h8L4 5z" fill="#555"/></svg>
<svg class="i" style="left:24px;top:713.5px" width="14" height="14" viewBox="0 0 14 14"><rect x=".5" y=".5" width="13" height="13" fill="#fff" stroke="#b4b4b4"/><path d="M3.500 7l2.500 3.500L10.500 3" fill="none" stroke="#111" stroke-width="1.700"/></svg>
<svg class="i" style="left:44.0px;top:712.5px" width="16" height="16" viewBox="0 0 16 16"><rect x="2" y="1.500" width="4" height="4" fill="#24385a"/><rect x="6" y="1.500" width="4" height="4" fill="#aabfdc"/><rect x="10" y="1.500" width="4" height="4" fill="#3f5f8a"/><rect x="2" y="5.500" width="4" height="4" fill="#8aa8d0"/><rect x="6" y="5.500" width="4" height="4" fill="#24385a"/><rect x="10" y="5.500" width="4" height="4" fill="#c4d4e8"/><rect x="2" y="9.500" width="4" height="4" fill="#24385a"/><rect x="6" y="9.500" width="4" height="4" fill="#aabfdc"/></svg>
<div class="t" style="left:66.3px;top:711.0px;height:20px;line-height:20px;font-size:14px;font-weight:bold;color:#000;letter-spacing:0.379px;">OSM Standard</div>
<div class="r" style="left:4px;top:1027px;width:268px;height:24px;background:#fff;border:1px solid #b9b9b9;border-radius:3px;box-sizing:border-box"></div>
<svg class="i" style="left:12px;top:1032px" width="14" height="14" viewBox="0 0 14 14"><circle cx="5.500" cy="5.500" r="4.200" fill="none" stroke="#888" stroke-width="1.300"/><path d="M8.700 8.700l4 4" stroke="#888" stroke-width="1.500"/></svg>
<div class="t" style="left:33.7px;top:1028.5px;height:20px;line-height:20px;font-size:15px;color:#8a8a8a;letter-spacing:0.046px;">Type to locate (Ctrl+K)</div>
<div class="r" style="left:308px;top:1023px;width:1612px;height:31px;background:#efefef"></div>
<div class="r" style="left:0px;top:1023px;width:308px;height:31px;background:#efefef;z-index:-1"></div>
<div class="t" style="left:1021px;top:1028.5px;height:20px;line-height:20px;font-size:13.5px;color:#000;letter-spacing:-0.604px;">Coordinate</div>
<div class="r" style="left:1085.5px;top:1027.5px;width:125.5px;height:22px;background:#fff;border:1px solid #b9b9b9;border-radius:3px;box-sizing:border-box"></div>
<div class="t" style="left:1094.5px;top:1028.5px;height:20px;line-height:20px;font-size:13.5px;color:#000;letter-spacing:-0.845px;">19474835,-5058935</div>
<svg class="i" style="left:1214px;top:1029px" width="18" height="18" viewBox="0 0 18 18"><ellipse cx="8" cy="10" rx="4.500" ry="6.500" fill="#e8e8e8" stroke="#444" stroke-width="1.100" transform="rotate(-25 8 10)"/><path d="M5 6l6 2M7.500 4l-1.500 5" stroke="#444" stroke-width=".9"/><path d="M12 3l4-2M13 7l3.500.5" stroke="#444" stroke-width=".9"/><circle cx="9.500" cy="12" r="2" fill="none" stroke="#444" stroke-width=".9"/></svg>
<div class="t" style="left:1245.5px;top:1028.5px;height:20px;line-height:20px;font-size:13.5px;color:#000;letter-spacing:-1.354px;">Scale</div>
<div class="r" style="left:1277.5px;top:1027.5px;width:95.5px;height:22px;background:#fff;border:1px solid #b9b9b9;border-radius:3px;box-sizing:border-box"></div>
<div class="r" style="left:1353px;top:1028.5px;width:1px;height:20px;background:#c9c9c9"></div>
<svg class="i" style="left:1359.0px;top:1037.0px" width="7" height="4" viewBox="0 0 7 4"><path d="M0 0h7L3.5 4z" fill="#444"/></svg>
<div class="t" style="left:1281px;top:1028.5px;height:20px;line-height:20px;font-size:13.5px;color:#000;letter-spacing:-0.788px;">1:306058</div>
<svg class="i" style="left:1384px;top:1030px" width="16" height="17" viewBox="0 0 16 17"><path d="M4.500 8V5.500a3.500 3.500 0 0 1 7 0V8" fill="none" stroke="#777" stroke-width="1.800"/><rect x="2.500" y="7.500" width="11" height="8.500" rx="1.200" fill="#666"/></svg>
<div class="t" style="left:1407.5px;top:1028.5px;height:20px;line-height:20px;font-size:13.5px;color:#000;letter-spacing:-0.480px;">Magnifier</div>
<div class="r" style="left:1463.7px;top:1027.5px;width:92.3px;height:22px;background:#fff;border:1px solid #b9b9b9;border-radius:3px;box-sizing:border-box"></div>
<div class="r" style="left:1542.5px;top:1028.5px;width:1px;height:20px;background:#c9c9c9"></div>
<svg class="i" style="left:1546px;top:1031px" width="7" height="5" viewBox="0 0 7 5"><path d="M0 4.500h7L3.500 0z" fill="#444"/></svg>
<svg class="i" style="left:1546px;top:1041px" width="7" height="5" viewBox="0 0 7 5"><path d="M0 0h7L3.500 4.500z" fill="#444"/></svg>
<div class="t" style="left:1468.7px;top:1028.5px;height:20px;line-height:20px;font-size:13.5px;color:#000;letter-spacing:-1.307px;">100%</div>
<div class="t" style="left:1566.7px;top:1028.5px;height:20px;line-height:20px;font-size:13.5px;color:#000;letter-spacing:-0.498px;">Rotation</div>
<div class="r" style="left:1623px;top:1027.5px;width:93px;height:22px;background:#fff;border:1px solid #b9b9b9;border-radius:3px;box-sizing:border-box"></div>
<div class="r" style="left:1702.5px;top:1028.5px;width:1px;height:20px;background:#c9c9c9"></div>
<svg class="i" style="left:1706px;top:1031px" width="7" height="5" viewBox="0 0 7 5"><path d="M0 4.500h7L3.500 0z" fill="#444"/></svg>
<svg class="i" style="left:1706px;top:1041px" width="7" height="5" viewBox="0 0 7 5"><path d="M0 0h7L3.500 4.500z" fill="#444"/></svg>
<div class="t" style="left:1628px;top:1028.5px;height:20px;line-height:20px;font-size:13.5px;color:#000;letter-spacing:-0.983px;">0.0 °</div>
<svg class="i" style="left:1723px;top:1032px" width="14" height="14" viewBox="0 0 14 14"><rect x=".5" y=".5" width="13" height="13" fill="#fff" stroke="#b4b4b4"/><path d="M3.500 7l2.500 3.500L10.500 3" fill="none" stroke="#111" stroke-width="1.700"/></svg>
<div class="t" style="left:1742.5px;top:1028.0px;height:20px;line-height:20px;font-size:13.5px;color:#000;letter-spacing:-0.963px;">Render</div>
<svg class="i" style="left:1797px;top:1032px" width="14" height="14" viewBox="0 0 14 14"><circle cx="7" cy="7" r="6" fill="none" stroke="#777" stroke-width="1"/><ellipse cx="7" cy="7" rx="2.800" ry="6" fill="none" stroke="#777" stroke-width=".8"/><path d="M1 7h12M2 4h10M2 10h10M7 1v12" stroke="#777" stroke-width=".8"/></svg>
<div class="t" style="left:1815.5px;top:1029.0px;height:20px;line-height:20px;font-size:13.5px;color:#000;letter-spacing:-1.533px;">EPSG:3857</div>
<svg class="i" style="left:1896px;top:1030px" width="18" height="17" viewBox="0 0 18 17"><path d="M9 1c4.500 0 8 2.800 8 6.300s-3.500 6.300-8 6.300c-.8 0-1.600-.1-2.300-.3L3 16l1-3.800C2.200 11 1 9.300 1 7.300 1 3.800 4.500 1 9 1z" fill="#777"/><circle cx="5.500" cy="7.300" r="1.100" fill="#fff"/><circle cx="9" cy="7.300" r="1.100" fill="#fff"/><circle cx="12.500" cy="7.300" r="1.100" fill="#fff"/></svg>
<svg class="i" id="map" style="left:315px;top:139px;background:#aad3df" width="1605" height="884" viewBox="315 139 1605 884"><defs><clipPath id="cp1"><rect x="635" y="380" width="320" height="176"/></clipPath><clipPath id="cp2"><rect x="635" y="204" width="320" height="176"/></clipPath><clipPath id="cp3"><rect x="540" y="556" width="320" height="176"/></clipPath><clipPath id="cp4"><rect x="540" y="556" width="320" height="176"/></clipPath><clipPath id="cp5"><rect x="475" y="330" width="162" height="176"/></clipPath><clipPath id="cp6"><rect x="955" y="250" width="320" height="176"/></clipPath><clipPath id="cp7"><rect x="795" y="540" width="160" height="176"/></clipPath><filter id="rg" x="-5%" y="-5%" width="110%" height="110%"><feTurbulence type="fractalNoise" baseFrequency="0.22" numOctaves="2" seed="5" result="n"/><feDisplacementMap in="SourceGraphic" in2="n" scale="9" xChannelSelector="R" yChannelSelector="G"/></filter></defs><polygon points="850.0,139.0 1925.0,139.0 1925.0,800.0 1130.0,800.0 1130.0,600.0 850.0,600.0" fill="#ffffff"/><polygon points="1275.0,329.0 1245.0,334.0 1235.0,364.0 1215.0,399.0 1180.0,409.0 1160.0,434.0 1140.0,464.0 1135.0,499.0 1105.0,514.0 1065.0,519.0 1040.0,544.0 1025.0,524.0 980.0,529.0 950.0,524.0 922.5,514.0 910.0,519.0 880.0,524.0 850.0,534.0 825.0,554.0 810.0,579.0 795.0,589.0 785.0,609.0 795.0,639.0 800.0,669.0 1105.0,669.0 1115.0,609.0 1135.0,524.0 1165.0,524.0 1215.0,464.0 1235.0,429.0 1265.0,419.0 1275.0,389.0" fill="#18e5d0" stroke="#18e5d0" stroke-width="3" stroke-linejoin="round"/><polygon points="995.0,139.0 982.5,206.5 1000.0,214.0 995.0,264.0 962.5,266.5 962.5,289.0 970.0,304.0 965.0,321.5 985.0,339.0 1025.0,339.0 1055.0,304.0 1085.0,289.0 1095.0,269.0 1135.0,274.0 1165.0,259.0 1195.0,254.0 1250.0,244.0 1277.5,224.0 1277.5,139.0" fill="#63f29f" stroke="#63f29f" stroke-width="3" stroke-linejoin="round"/><polygon points="1125.0,334.0 1160.0,329.0 1185.0,324.0 1210.0,319.0 1230.0,304.0 1245.0,334.0 1277.5,329.0 1277.5,349.0 1235.0,364.0 1215.0,399.0 1180.0,409.0 1120.0,349.0" fill="#63f29f" stroke="#63f29f" stroke-width="3" stroke-linejoin="round"/><polygon points="830.0,139.0 795.0,176.5 815.0,186.5 820.0,204.0 812.5,221.5 817.5,239.0 785.0,239.0 767.5,284.0 795.0,299.0 810.0,309.0 815.0,324.0 825.0,344.0 810.0,364.0 807.5,399.0 852.5,411.5 870.0,399.0 890.0,399.0 892.5,376.5 902.5,394.0 925.0,396.5 960.0,364.0 970.0,349.0 965.0,321.5 970.0,304.0 962.5,289.0 962.5,266.5 995.0,264.0 1000.0,214.0 982.5,206.5 995.0,139.0" fill="#d98a52" stroke="#d98a52" stroke-width="5" stroke-linejoin="round"/><polygon points="835.0,139.0 840.0,145.0 895.0,158.0 921.0,146.5 923.5,139.0" fill="#2347e6" stroke="#2347e6" stroke-width="3" stroke-linejoin="round"/><polygon points="920.0,146.5 933.0,143.0 931.0,160.0 924.0,161.5" fill="#2347e6" stroke="#2347e6" stroke-width="3" stroke-linejoin="round"/><polygon points="745.0,322.0 741.0,304.0 725.0,295.0 710.0,300.0 690.0,316.5 665.0,329.0 655.0,339.0 635.0,364.0 620.0,389.0 627.5,396.5 635.0,394.0 655.0,404.0 660.0,416.5 675.0,421.5 685.0,409.0 700.0,394.0 710.0,374.0 705.0,359.0 720.0,339.0 740.0,329.0" fill="#1a5fe3" stroke="#1a5fe3" stroke-width="7" stroke-linejoin="round"/><polygon points="746.0,323.0 810.0,323.0 825.0,344.0 810.0,364.0 807.5,391.5 785.0,391.5 777.5,409.0 750.0,416.5 730.0,426.5 710.0,409.0 710.0,374.0 715.0,354.0 735.0,334.0" fill="#2643d9" stroke="#2643d9" stroke-width="3" stroke-linejoin="round"/><polygon points="777.5,409.0 750.0,416.5 730.0,426.5 710.0,411.5 685.0,424.0 665.0,444.0 665.0,464.0 700.0,484.0 710.0,479.0 730.0,469.0 750.0,464.0 755.0,449.0 767.5,429.0" fill="#3090e8" stroke="#3090e8" stroke-width="3" stroke-linejoin="round"/><polygon points="785.0,391.5 807.5,399.0 852.5,411.5 870.0,399.0 890.0,399.0 880.0,419.0 865.0,434.0 845.0,459.0 830.0,479.0 820.0,499.0 810.0,519.0 795.0,539.0 775.0,534.0 750.0,509.0 740.0,489.0 750.0,464.0 755.0,449.0 767.5,429.0 777.5,409.0" fill="#4ecfc2" stroke="#4ecfc2" stroke-width="3" stroke-linejoin="round"/><polygon points="710.0,489.0 730.0,474.0 740.0,489.0 735.0,509.0 730.0,539.0 715.0,534.0 707.5,514.0" fill="#5fe8cc" stroke="#5fe8cc" stroke-width="3" stroke-linejoin="round"/><polygon points="970.0,324.0 985.0,339.0 1025.0,339.0 1055.0,304.0 1085.0,289.0 1095.0,269.0 1135.0,274.0 1165.0,259.0 1195.0,254.0 1250.0,244.0 1245.0,269.0 1235.0,284.0 1230.0,304.0 1210.0,319.0 1185.0,324.0 1160.0,329.0 1150.0,294.0 1125.0,304.0 1120.0,334.0 1090.0,344.0 1055.0,359.0 1015.0,374.0 1000.0,394.0 980.0,419.0 965.0,434.0 955.0,419.0 960.0,399.0 970.0,384.0 940.0,389.0 925.0,396.5 960.0,364.0 970.0,349.0" fill="#5b9bd5" stroke="#5b9bd5" stroke-width="3" stroke-linejoin="round"/><polygon points="1120.0,349.0 1180.0,409.0 1160.0,434.0 1140.0,464.0 1135.0,499.0 1105.0,514.0 1065.0,519.0 1040.0,534.0 1025.0,524.0 980.0,529.0 950.0,524.0 922.5,514.0 917.5,504.0 950.0,479.0 950.0,459.0 930.0,444.0 940.0,434.0 965.0,444.0 980.0,424.0 1000.0,394.0 1015.0,374.0 1055.0,359.0 1090.0,344.0" fill="#e8d157" stroke="#e8d157" stroke-width="3" stroke-linejoin="round"/><polygon points="890.0,419.0 920.0,404.0 940.0,404.0 950.0,419.0 935.0,439.0 950.0,459.0 950.0,479.0 920.0,494.0 905.0,504.0 895.0,489.0 870.0,479.0 880.0,449.0" fill="#84d98a" stroke="#84d98a" stroke-width="3" stroke-linejoin="round"/><polygon points="865.0,464.0 870.0,479.0 895.0,489.0 905.0,504.0 910.0,519.0 880.0,524.0 850.0,529.0 815.0,534.0 810.0,514.0 830.0,489.0 845.0,469.0" fill="#4a78e8" stroke="#4a78e8" stroke-width="3" stroke-linejoin="round"/><polygon points="1277.5,224.0 1260.0,269.0 1245.0,334.0 1277.5,329.0" fill="#cf6a6a" stroke="#cf6a6a" stroke-width="3" stroke-linejoin="round"/><polygon points="1277.5,389.0 1265.0,419.0 1235.0,429.0 1215.0,464.0 1165.0,524.0 1135.0,524.0 1115.0,609.0 1105.0,669.0 1277.5,669.0" fill="#b673e0" stroke="#b673e0" stroke-width="3" stroke-linejoin="round"/><polygon points="830.0,564.0 845.0,549.0 865.0,564.0 880.0,564.0 885.0,589.0 875.0,619.0 885.0,659.0 860.0,659.0 840.0,639.0 825.0,604.0" fill="#30c840" stroke="#30c840" stroke-width="3" stroke-linejoin="round"/><polygon points="990.0,139.0 1335.0,139.0 1310.0,169.0 1285.0,194.0 1280.0,239.0 1265.0,289.0 1245.0,334.0 1232.5,346.5 1205.0,409.0 1180.0,411.5 1120.0,349.0 1025.0,339.0 990.0,339.0 975.0,329.0 965.0,289.0 965.0,266.5 1000.0,264.0 1000.0,214.0 980.0,204.0" fill="#63f29f" stroke="#63f29f" stroke-width="3" stroke-linejoin="round"/><polygon points="960.0,324.0 965.0,324.0 990.0,339.0 1025.0,339.0 1055.0,304.0 1090.0,269.0 1125.0,266.5 1135.0,279.0 1170.0,259.0 1230.0,246.5 1257.5,241.5 1250.0,264.0 1245.0,289.0 1230.0,304.0 1205.0,304.0 1200.0,319.0 1185.0,329.0 1150.0,324.0 1145.0,294.0 1120.0,309.0 1115.0,339.0 1075.0,344.0 1010.0,374.0 980.0,429.0 960.0,419.0" fill="#5b9bd5" stroke="#5b9bd5" stroke-width="3" stroke-linejoin="round"/><polygon points="1335.0,139.0 1455.0,139.0 1435.0,154.0 1440.0,169.0 1460.0,174.0 1460.0,194.0 1430.0,219.0 1402.5,246.5 1410.0,259.0 1385.0,289.0 1370.0,304.0 1340.0,324.0 1310.0,326.5 1270.0,331.5 1245.0,336.5 1265.0,289.0 1280.0,239.0 1285.0,194.0 1310.0,169.0" fill="#cf6a6a" stroke="#cf6a6a" stroke-width="3" stroke-linejoin="round"/><polygon points="1125.0,139.0 1137.5,139.0 1135.0,145.0" fill="#cf6a6a" stroke="#cf6a6a" stroke-width="3" stroke-linejoin="round"/><polygon points="1465.0,139.0 1570.0,139.0 1585.0,146.5 1625.0,139.0 1645.0,139.0 1630.0,169.0 1615.0,204.0 1605.0,234.0 1585.0,244.0 1500.0,244.0 1477.5,234.0 1470.0,194.0 1460.0,174.0 1465.0,154.0" fill="#cc3a62" stroke="#cc3a62" stroke-width="3" stroke-linejoin="round"/><polygon points="1460.0,194.0 1470.0,204.0 1477.5,234.0 1500.0,246.5 1585.0,244.0 1605.0,234.0 1615.0,249.0 1625.0,269.0 1627.5,304.0 1610.0,329.0 1585.0,349.0 1582.5,379.0 1595.0,399.0 1585.0,439.0 1575.0,464.0 1560.0,489.0 1547.5,504.0 1525.0,494.0 1515.0,459.0 1502.5,454.0 1507.5,409.0 1515.0,379.0 1522.5,351.5 1442.5,346.5 1445.0,319.0 1430.0,289.0 1410.0,259.0 1402.5,246.5 1430.0,219.0" fill="#88e890" stroke="#88e890" stroke-width="3" stroke-linejoin="round"/><polygon points="1510.0,439.0 1527.5,424.0 1540.0,449.0 1545.0,484.0 1525.0,494.0 1510.0,514.0 1490.0,489.0 1482.5,479.0 1500.0,459.0 1515.0,464.0" fill="#34e060" stroke="#34e060" stroke-width="3" stroke-linejoin="round"/><polygon points="1405.0,234.0 1410.0,216.5 1425.0,219.0 1430.0,224.0" fill="#63f29f" stroke="#63f29f" stroke-width="3" stroke-linejoin="round"/><polygon points="1430.0,289.0 1440.0,286.5 1450.0,316.5 1480.0,339.0 1515.0,336.5 1522.5,351.5 1515.0,379.0 1507.5,409.0 1502.5,454.0 1485.0,479.0 1490.0,489.0 1510.0,514.0 1502.5,519.0 1490.0,509.0 1480.0,519.0 1460.0,529.0 1465.0,554.0 1440.0,584.0 1425.0,579.0 1430.0,589.0 1410.0,609.0 1385.0,619.0 1360.0,599.0 1380.0,579.0 1400.0,569.0 1390.0,549.0 1370.0,544.0 1335.0,514.0 1310.0,489.0 1317.5,469.0 1315.0,434.0 1332.5,414.0 1350.0,409.0 1355.0,359.0 1370.0,349.0 1385.0,339.0 1400.0,314.0" fill="#e0309f" stroke="#e0309f" stroke-width="3" stroke-linejoin="round"/><polygon points="1645.0,139.0 1670.0,144.0 1700.0,159.0 1720.0,179.0 1690.0,204.0 1695.0,229.0 1730.0,204.0 1760.0,229.0 1785.0,264.0 1805.0,259.0 1810.0,289.0 1780.0,309.0 1770.0,329.0 1740.0,334.0 1750.0,359.0 1760.0,379.0 1710.0,409.0 1700.0,439.0 1695.0,479.0 1680.0,489.0 1670.0,519.0 1625.0,524.0 1605.0,529.0 1575.0,519.0 1560.0,489.0 1575.0,464.0 1585.0,439.0 1595.0,399.0 1582.5,379.0 1585.0,349.0 1610.0,329.0 1627.5,304.0 1625.0,269.0 1615.0,249.0 1605.0,234.0 1615.0,204.0 1630.0,169.0" fill="#6a45cc" stroke="#6a45cc" stroke-width="3" stroke-linejoin="round"/><polygon points="1700.0,159.0 1710.0,139.0 1840.0,139.0 1830.0,179.0 1820.0,214.0 1790.0,234.0 1780.0,229.0 1785.0,204.0 1760.0,194.0 1740.0,179.0 1720.0,179.0" fill="#90d020" stroke="#90d020" stroke-width="3" stroke-linejoin="round"/><polygon points="1745.0,209.0 1765.0,196.5 1785.0,204.0 1780.0,229.0 1760.0,229.0" fill="#6a45cc" stroke="#6a45cc" stroke-width="3" stroke-linejoin="round"/><polygon points="1840.0,139.0 1922.5,139.0 1922.5,264.0 1890.0,269.0 1840.0,259.0 1810.0,289.0 1830.0,309.0 1835.0,349.0 1820.0,379.0 1815.0,489.0 1825.0,514.0 1825.0,534.0 1810.0,549.0 1790.0,579.0 1760.0,559.0 1740.0,564.0 1710.0,539.0 1680.0,554.0 1655.0,549.0 1670.0,519.0 1680.0,489.0 1695.0,479.0 1700.0,439.0 1710.0,409.0 1760.0,379.0 1770.0,329.0 1780.0,309.0 1810.0,289.0 1805.0,259.0 1785.0,264.0 1780.0,229.0 1790.0,234.0 1820.0,214.0 1830.0,179.0" fill="#dab312" stroke="#dab312" stroke-width="3" stroke-linejoin="round"/><polygon points="1840.0,259.0 1890.0,269.0 1922.5,289.0 1922.5,549.0 1900.0,559.0 1880.0,554.0 1865.0,524.0 1825.0,514.0 1815.0,489.0 1820.0,379.0 1835.0,349.0 1830.0,309.0 1810.0,289.0" fill="#b0d038" stroke="#b0d038" stroke-width="3" stroke-linejoin="round"/><polygon points="1550.0,554.0 1575.0,519.0 1605.0,529.0 1625.0,524.0 1655.0,539.0 1655.0,549.0 1680.0,554.0 1710.0,539.0 1740.0,564.0 1760.0,559.0 1790.0,579.0 1810.0,549.0 1825.0,534.0 1865.0,524.0 1880.0,554.0 1900.0,559.0 1922.5,549.0 1922.5,669.0 1610.0,669.0 1605.0,619.0 1590.0,624.0 1580.0,604.0 1560.0,589.0" fill="#2c1ada" stroke="#2c1ada" stroke-width="3" stroke-linejoin="round"/><polygon points="1320.0,669.0 1340.0,634.0 1370.0,629.0 1390.0,614.0 1410.0,609.0 1430.0,589.0 1440.0,584.0 1465.0,554.0 1460.0,529.0 1480.0,519.0 1490.0,509.0 1502.5,519.0 1525.0,519.0 1540.0,539.0 1545.0,564.0 1560.0,589.0 1580.0,604.0 1590.0,624.0 1605.0,619.0 1600.0,644.0 1580.0,669.0" fill="#cc3058" stroke="#cc3058" stroke-width="3" stroke-linejoin="round"/><polygon points="1580.0,669.0 1605.0,644.0 1630.0,669.0" fill="#68c880" stroke="#68c880" stroke-width="3" stroke-linejoin="round"/><polygon points="960.0,529.0 980.0,534.0 1010.0,524.0 1035.0,534.0 1040.0,544.0 1055.0,524.0 1090.0,519.0 1125.0,509.0 1135.0,469.0 1160.0,434.0 1180.0,411.5 1205.0,409.0 1232.5,346.5 1270.0,331.5 1265.0,349.0 1285.0,384.0 1260.0,374.0 1255.0,389.0 1240.0,409.0 1220.0,439.0 1195.0,484.0 1160.0,524.0 1132.5,526.5 1110.0,609.0 1090.0,669.0 960.0,669.0" fill="#18e5d0" stroke="#18e5d0" stroke-width="3" stroke-linejoin="round"/><polygon points="1265.0,336.5 1340.0,331.5 1345.0,349.0 1325.0,364.0 1310.0,374.0 1285.0,384.0 1270.0,354.0" fill="#3565dd" stroke="#3565dd" stroke-width="3" stroke-linejoin="round"/><polygon points="1285.0,384.0 1310.0,374.0 1325.0,364.0 1345.0,349.0 1355.0,359.0 1350.0,409.0 1332.5,414.0 1315.0,434.0 1317.5,469.0 1310.0,489.0 1260.0,514.0 1195.0,544.0 1180.0,579.0 1165.0,639.0 1170.0,669.0 1090.0,669.0 1110.0,609.0 1132.5,526.5 1160.0,524.0 1195.0,484.0 1220.0,439.0 1240.0,409.0 1255.0,389.0" fill="#b673e0" stroke="#b673e0" stroke-width="3" stroke-linejoin="round"/><polygon points="1370.0,304.0 1385.0,289.0 1400.0,269.0 1420.0,269.0 1430.0,289.0 1400.0,314.0 1385.0,339.0 1380.0,309.0" fill="#b673e0" stroke="#b673e0" stroke-width="3" stroke-linejoin="round"/><polygon points="1370.0,274.0 1385.0,268.0 1390.0,279.0 1375.0,284.0" fill="#b673e0" stroke="#b673e0" stroke-width="3" stroke-linejoin="round"/><polygon points="1180.0,579.0 1195.0,544.0 1260.0,514.0 1310.0,489.0 1335.0,514.0 1370.0,544.0 1390.0,549.0 1400.0,569.0 1380.0,579.0 1360.0,599.0 1385.0,619.0 1370.0,629.0 1340.0,634.0 1320.0,669.0 1170.0,669.0 1165.0,639.0" fill="#a058d3" stroke="#a058d3" stroke-width="3" stroke-linejoin="round"/><polygon points="960.0,419.0 975.0,434.0 995.0,404.0 1010.0,379.0 1045.0,359.0 1075.0,344.0 1120.0,349.0 1180.0,411.5 1160.0,434.0 1135.0,469.0 1125.0,509.0 1090.0,519.0 1055.0,524.0 1040.0,544.0 1035.0,534.0 1010.0,524.0 980.0,534.0 960.0,529.0" fill="#e8d157" stroke="#e8d157" stroke-width="3" stroke-linejoin="round"/><polygon points="1135.0,527.0 1105.0,612.0 1065.0,717.0 1015.0,762.0 985.0,814.5 1015.0,822.0 1065.0,837.0 1125.0,862.0 1215.0,919.5 1227.5,942.0 1215.0,1007.0 1212.5,1027.0 1277.5,1027.0 1277.5,527.0" fill="#b673e0" stroke="#b673e0" stroke-width="7" stroke-linejoin="round"/><polygon points="1277.5,562.0 1215.0,574.5 1180.0,582.0 1185.0,607.0 1170.0,632.0 1185.0,652.0 1200.0,687.0 1165.0,702.0 1145.0,727.0 1155.0,747.0 1125.0,767.0 1120.0,807.0 1125.0,862.0 1165.0,887.0 1215.0,917.0 1230.0,942.0 1225.0,977.0 1215.0,1007.0 1213.5,1027.0 1277.5,1027.0" fill="#a058d3" stroke="#a058d3" stroke-width="3" stroke-linejoin="round"/><polygon points="830.0,562.0 840.0,552.0 860.0,552.0 875.0,562.0 880.0,587.0 875.0,617.0 885.0,637.0 890.0,667.0 870.0,677.0 850.0,672.0 855.0,647.0 835.0,642.0 825.0,617.0 825.0,587.0" fill="#30c840" stroke="#30c840" stroke-width="3" stroke-linejoin="round"/><polygon points="1180.0,577.0 1260.0,557.0 1320.0,527.0 1360.0,527.0 1375.0,557.0 1395.0,577.0 1360.0,602.0 1380.0,617.0 1340.0,632.0 1325.0,652.0 1315.0,662.0 1320.0,692.0 1310.0,747.0 1325.0,737.0 1385.0,737.0 1410.0,747.0 1430.0,752.0 1442.5,772.0 1420.0,797.0 1405.0,837.0 1385.0,857.0 1367.5,872.0 1420.0,952.0 1430.0,927.0 1460.0,912.0 1480.0,894.5 1460.0,1022.0 1220.0,1022.0 1225.0,977.0 1220.0,927.0 1200.0,902.0 1160.0,877.0 1130.0,862.0 1120.0,817.0 1125.0,777.0 1150.0,762.0 1150.0,727.0 1190.0,712.0 1195.0,682.0 1180.0,662.0 1167.5,632.0 1180.0,612.0" fill="#a058d3" stroke="#a058d3" stroke-width="3" stroke-linejoin="round"/><polygon points="1130.0,527.0 1105.0,612.0 1060.0,717.0 1010.0,762.0 980.0,814.5 1010.0,822.0 1060.0,837.0 1120.0,862.0 1125.0,857.0 1120.0,817.0 1125.0,777.0 1150.0,762.0 1150.0,727.0 1190.0,712.0 1195.0,682.0 1180.0,662.0 1167.5,632.0 1180.0,612.0 1180.0,577.0 1260.0,557.0 1320.0,527.0" fill="#b673e0" stroke="#b673e0" stroke-width="3" stroke-linejoin="round"/><polygon points="1180.0,577.0 1260.0,557.0 1320.0,527.0 1330.0,527.0 1310.0,547.0 1260.0,567.0 1210.0,582.0 1195.0,602.0 1195.0,642.0 1180.0,657.0 1167.5,632.0 1180.0,612.0" fill="#aa64d8" stroke="#aa64d8" stroke-width="3" stroke-linejoin="round"/><polygon points="1330.0,637.0 1345.0,629.5 1375.0,634.5 1395.0,617.0 1410.0,612.0 1430.0,597.0 1440.0,582.0 1460.0,577.0 1465.0,552.0 1460.0,537.0 1480.0,527.0 1535.0,527.0 1540.0,547.0 1560.0,562.0 1555.0,582.0 1580.0,602.0 1595.0,597.0 1605.0,617.0 1600.0,642.0 1580.0,667.0 1575.0,697.0 1572.5,704.5 1567.5,717.0 1555.0,737.0 1555.0,752.0 1552.5,777.0 1540.0,807.0 1520.0,822.0 1540.0,842.0 1525.0,872.0 1510.0,887.0 1490.0,894.5 1485.0,892.0 1465.0,899.5 1450.0,902.0 1440.0,892.0 1425.0,884.5 1410.0,897.0 1395.0,882.0 1385.0,867.0 1405.0,837.0 1420.0,797.0 1442.5,772.0 1430.0,752.0 1410.0,747.0 1385.0,737.0 1325.0,737.0 1310.0,752.0 1320.0,717.0 1312.5,657.0" fill="#cc3058" stroke="#cc3058" stroke-width="3" stroke-linejoin="round"/><polygon points="1375.0,697.0 1385.0,692.0 1400.0,702.0 1385.0,717.0 1387.5,732.0 1355.0,733.0 1355.0,724.5 1370.0,712.0" fill="#a058d3" stroke="#a058d3" stroke-width="3" stroke-linejoin="round"/><polygon points="1360.0,602.0 1395.0,577.0 1375.0,557.0 1380.0,527.0 1455.0,527.0 1460.0,537.0 1465.0,552.0 1460.0,577.0 1440.0,582.0 1430.0,597.0 1410.0,612.0 1395.0,617.0 1380.0,617.0" fill="#e0309f" stroke="#e0309f" stroke-width="3" stroke-linejoin="round"/><polygon points="1605.0,642.0 1635.0,662.0 1650.0,692.0 1670.0,702.0 1680.0,737.0 1710.0,742.0 1730.0,734.5 1760.0,752.0 1780.0,772.0 1785.0,792.0 1810.0,807.0 1820.0,837.0 1845.0,862.0 1855.0,882.0 1840.0,907.0 1810.0,937.0 1780.0,967.0 1755.0,997.0 1725.0,1024.5 1425.0,1024.5 1422.5,977.0 1400.0,957.0 1420.0,952.0 1430.0,927.0 1460.0,912.0 1480.0,894.5 1490.0,894.5 1510.0,887.0 1525.0,872.0 1540.0,842.0 1520.0,822.0 1540.0,807.0 1552.5,777.0 1550.0,772.0 1555.0,752.0 1555.0,737.0 1567.5,717.0 1572.5,704.5 1575.0,697.0 1580.0,667.0" fill="#68c880" stroke="#68c880" stroke-width="7" stroke-linejoin="round"/><polygon points="1560.0,672.0 1567.5,667.0 1577.5,677.0 1572.5,684.5 1562.5,682.0" fill="#68c880" stroke="#68c880" stroke-width="3" stroke-linejoin="round"/><polygon points="1605.0,642.0 1600.0,617.0 1610.0,602.0 1615.0,587.0 1635.0,592.0 1685.0,572.0 1710.0,557.0 1740.0,562.0 1790.0,577.0 1830.0,557.0 1825.0,537.0 1860.0,542.0 1885.0,557.0 1922.5,547.0 1922.5,852.0 1900.0,867.0 1865.0,887.0 1855.0,882.0 1845.0,862.0 1820.0,837.0 1810.0,807.0 1785.0,792.0 1780.0,772.0 1760.0,752.0 1730.0,734.5 1710.0,742.0 1680.0,737.0 1670.0,702.0 1650.0,692.0 1635.0,662.0" fill="#2c1ada" stroke="#2c1ada" stroke-width="5" stroke-linejoin="round"/><polygon points="1550.0,557.0 1575.0,547.0 1600.0,567.0 1610.0,602.0 1585.0,622.0 1580.0,602.0 1555.0,582.0 1560.0,562.0" fill="#2c1ada" stroke="#2c1ada" stroke-width="3" stroke-linejoin="round"/><polygon points="1655.0,542.0 1665.0,527.0 1825.0,527.0 1825.0,547.0 1800.0,577.0 1790.0,572.0 1740.0,557.0 1710.0,552.0 1685.0,557.0" fill="#dab312" stroke="#dab312" stroke-width="3" stroke-linejoin="round"/><polygon points="1860.0,527.0 1922.5,527.0 1922.5,547.0 1885.0,557.0 1870.0,547.0" fill="#b0d038" stroke="#b0d038" stroke-width="3" stroke-linejoin="round"/><polygon points="960.0,527.0 1130.0,527.0 1105.0,612.0 1060.0,717.0 1010.0,762.0 980.0,814.5 960.0,832.0" fill="#18e5d0" stroke="#18e5d0" stroke-width="7" stroke-linejoin="round"/><polygon points="955.0,836.0 982.5,821.0 1010.0,826.0 1060.0,841.0 1120.0,867.0 1160.0,883.0 1200.0,908.0 1220.0,929.5 1226.0,977.0 1217.5,1027.0 955.0,1027.0" fill="#aad3df" stroke="#aad3df" stroke-width="3" stroke-linejoin="round"/><polygon points="1730.0,1027.0 1758.5,1000.0 1783.5,970.0 1813.5,940.0 1843.5,910.0 1862.5,892.0 1902.5,873.0 1925.0,857.0 1925.0,1027.0" fill="#aad3df" stroke="#aad3df" stroke-width="3" stroke-linejoin="round"/><polygon points="1115.0,271.5 1140.0,274.0 1165.0,269.0 1177.5,259.0 1202.5,246.5 1227.5,245.2 1247.5,249.0 1240.0,269.0 1250.0,279.0 1240.0,304.0 1225.0,301.5 1225.0,289.0 1210.0,304.0 1202.5,314.0 1190.0,331.5 1170.0,326.5 1147.5,311.5 1152.5,299.0 1140.0,299.0 1115.0,314.0" fill="#5b9bd5" stroke="#5b9bd5" stroke-width="3" stroke-linejoin="round"/><polygon points="1243.8,342.8 1255.0,339.0 1265.0,341.5 1275.0,364.0 1285.0,384.0 1265.0,379.0 1257.5,374.0 1250.0,389.0 1255.0,404.0 1210.0,404.0 1215.0,386.5 1225.0,374.0 1232.5,356.5" fill="#18e5d0" stroke="#18e5d0" stroke-width="3" stroke-linejoin="round"/><polygon points="1265.0,341.5 1275.0,336.5 1305.0,336.5 1332.5,329.0 1340.0,339.0 1335.0,356.5 1325.0,361.5 1322.5,371.5 1310.0,379.0 1297.5,386.5 1290.0,389.0 1285.0,384.0 1275.0,364.0" fill="#3565dd" stroke="#3565dd" stroke-width="3" stroke-linejoin="round"/><polygon points="1332.5,301.5 1340.0,304.0 1355.0,306.5 1375.0,319.0 1385.0,329.0 1365.0,339.0 1350.0,326.5 1340.0,325.2 1332.5,314.0" fill="#3565dd" stroke="#3565dd" stroke-width="3" stroke-linejoin="round"/><polygon points="1255.0,379.0 1265.0,379.0 1275.0,389.0 1280.0,404.0 1250.0,404.0 1252.5,389.0" fill="#b673e0" stroke="#b673e0" stroke-width="3" stroke-linejoin="round"/><polygon points="1297.5,386.5 1310.0,379.0 1322.5,371.5 1335.0,356.5 1347.5,339.0 1355.0,344.0 1365.0,356.5 1355.0,384.0 1350.0,404.0 1280.0,404.0 1290.0,389.0" fill="#b673e0" stroke="#b673e0" stroke-width="3" stroke-linejoin="round"/><polygon points="1370.0,271.5 1380.0,269.0 1387.5,269.0 1390.0,279.0 1392.5,284.0 1385.0,291.5 1377.5,284.0 1372.5,279.0" fill="#b673e0" stroke="#b673e0" stroke-width="3" stroke-linejoin="round"/><polygon points="1380.0,319.0 1385.0,299.0 1415.0,266.5 1427.5,274.0 1430.0,286.5 1425.0,304.0 1415.0,304.0 1400.0,324.0 1390.0,319.0" fill="#b673e0" stroke="#b673e0" stroke-width="3" stroke-linejoin="round"/><polygon points="1435.0,286.5 1445.0,284.0 1450.0,301.5 1442.5,319.0 1450.0,316.5 1475.0,316.5 1477.5,336.5 1512.5,336.5 1515.0,359.0 1500.0,356.5 1485.0,389.0 1477.5,404.0 1350.0,404.0 1355.0,384.0 1365.0,356.5 1380.0,364.0 1390.0,364.0 1390.0,351.5 1387.5,339.0 1400.0,324.0 1415.0,304.0 1427.5,291.5" fill="#e0309f" stroke="#e0309f" stroke-width="3" stroke-linejoin="round"/><polygon points="1402.5,239.0 1407.5,215.2 1427.5,219.0 1425.0,226.5" fill="#63f29f" stroke="#63f29f" stroke-width="3" stroke-linejoin="round"/><polygon points="1122.5,139.0 1137.5,139.0 1132.5,145.2 1125.0,146.5" fill="#cf6a6a" stroke="#cf6a6a" stroke-width="3" stroke-linejoin="round"/><polygon points="1582.5,351.5 1596.2,349.0 1596.2,404.0 1582.5,399.0 1580.0,384.0 1587.5,376.5 1580.0,364.0" fill="#6a45cc" stroke="#6a45cc" stroke-width="3" stroke-linejoin="round"/><polygon points="1572.5,282.8 1590.0,286.5 1590.0,290.2 1575.0,289.0" fill="#18e5d0" stroke="#18e5d0" stroke-width="3" stroke-linejoin="round"/><polygon points="1465.0,139.0 1647.5,139.0 1635.0,154.0 1630.0,164.0 1615.0,189.0 1612.5,204.0 1620.0,211.5 1610.0,224.0 1605.0,240.2 1590.0,246.5 1565.0,241.5 1540.0,241.5 1515.0,244.0 1495.0,246.5 1485.0,239.0 1475.0,219.0 1472.5,204.0 1467.5,189.0 1472.5,176.5 1477.5,164.0 1467.5,149.0" fill="#cc3a62" stroke="#cc3a62" stroke-width="3" stroke-linejoin="round"/><polygon points="1612.5,239.0 1620.0,234.0 1622.5,249.0 1615.0,246.5" fill="#cc3a62" stroke="#cc3a62" stroke-width="3" stroke-linejoin="round"/><polygon points="1647.5,139.0 1680.0,139.0 1687.5,154.0 1680.0,159.0 1665.0,164.0 1657.5,154.0 1645.0,149.0 1635.0,154.0" fill="#1414e0" stroke="#1414e0" stroke-width="3" stroke-linejoin="round"/><polygon points="1610.0,189.0 1620.0,184.0 1630.0,164.0 1635.0,166.5 1615.0,201.5 1610.0,199.0" fill="#1414e0" stroke="#1414e0" stroke-width="3" stroke-linejoin="round"/><polygon points="1625.0,216.5 1640.0,204.0 1645.0,209.0 1632.5,224.0" fill="#1414e0" stroke="#1414e0" stroke-width="3" stroke-linejoin="round"/><polygon points="1700.0,139.0 1837.5,139.0 1830.0,179.0 1825.0,201.5 1815.0,214.0 1800.0,224.0 1790.0,239.0 1790.0,251.5 1775.0,249.0 1757.5,234.0 1740.0,209.0 1730.0,200.2 1722.5,181.5 1705.0,156.5 1695.0,144.0" fill="#90d020" stroke="#90d020" stroke-width="3" stroke-linejoin="round"/><polygon points="1680.0,159.0 1695.0,144.0 1705.0,156.5 1722.5,181.5 1722.5,186.5 1700.0,204.0 1702.5,209.0 1690.0,216.5 1695.0,226.5 1730.0,200.2 1740.0,209.0 1757.5,234.0 1775.0,249.0 1790.0,264.0 1802.5,256.5 1807.5,274.0 1802.5,299.0 1790.0,299.0 1785.0,311.5 1775.0,314.0 1772.5,319.0 1765.0,339.0 1767.5,346.5 1752.5,361.5 1760.0,366.5 1740.0,379.0 1727.5,404.0 1587.5,404.0 1582.5,389.0 1590.0,379.0 1595.0,369.0 1582.5,354.0 1600.0,349.0 1610.0,331.5 1625.0,319.0 1632.5,306.5 1622.5,294.0 1620.0,279.0 1625.0,264.0 1615.0,259.0 1610.0,249.0 1605.0,240.2 1610.0,224.0 1620.0,211.5 1630.0,214.0 1667.5,171.5 1665.0,164.0" fill="#6a45cc" stroke="#6a45cc" stroke-width="3" stroke-linejoin="round"/><polygon points="1677.5,159.0 1692.5,159.0 1702.5,181.5 1697.5,182.8 1690.0,166.5 1680.0,166.5" fill="#cc3a62" stroke="#cc3a62" stroke-width="3" stroke-linejoin="round"/><polygon points="1695.0,161.5 1702.5,159.0 1705.0,166.5 1698.8,170.2" fill="#90d020" stroke="#90d020" stroke-width="3" stroke-linejoin="round"/><polygon points="1717.5,166.5 1730.0,159.0 1738.8,171.5 1727.5,179.0" fill="#6a45cc" stroke="#6a45cc" stroke-width="3" stroke-linejoin="round"/><polygon points="1747.5,206.5 1765.0,192.8 1785.0,214.0 1790.0,229.0 1775.0,234.0 1760.0,224.0" fill="#6a45cc" stroke="#6a45cc" stroke-width="3" stroke-linejoin="round"/><polygon points="1840.0,259.0 1810.0,289.0 1820.0,299.0 1825.0,314.0 1837.5,334.0 1822.5,351.5 1820.0,384.0 1852.5,389.0 1865.0,404.0 1921.2,404.0 1921.2,262.8 1890.0,266.5 1887.5,269.0 1865.0,261.5 1862.5,274.0" fill="#b0d038" stroke="#b0d038" stroke-width="3" stroke-linejoin="round"/><polygon points="1822.5,371.5 1852.5,379.0 1850.0,389.0 1820.0,384.0" fill="#dab312" stroke="#dab312" stroke-width="3" stroke-linejoin="round"/><polygon points="1570.0,289.0 1612.5,287.8 1612.5,290.2 1575.0,294.0" fill="#18e5d0" stroke="#18e5d0" stroke-width="3" stroke-linejoin="round"/><polygon points="1722.5,184.0 1700.0,202.8 1703.8,209.5 1690.0,217.0 1695.5,227.0 1731.2,199.8 1723.8,189.0" fill="#6a45cc" stroke="#6a45cc" stroke-width="3" stroke-linejoin="round"/><polygon points="1440.0,139.0 1465.0,139.0 1467.5,149.0 1477.5,164.0 1472.5,176.5 1467.5,189.0 1455.0,181.5 1447.5,169.0 1440.0,171.5" fill="#cf6a6a" stroke="#cf6a6a" stroke-width="3" stroke-linejoin="round"/><polygon points="1440.0,171.5 1447.5,169.0 1455.0,181.5 1467.5,189.0 1472.5,204.0 1475.0,219.0 1440.0,221.5" fill="#88e890" stroke="#88e890" stroke-width="3" stroke-linejoin="round"/><polygon points="1680.0,139.0 1697.5,139.0 1695.0,144.0 1687.5,154.0" fill="#1414e0" stroke="#1414e0" stroke-width="3" stroke-linejoin="round"/><polygon points="612.5,402.0 605.0,412.0 597.5,429.5 587.5,439.5 570.0,444.5 562.5,459.5 555.0,472.0 547.5,484.5 542.5,502.0 540.0,514.5 547.5,519.5 542.5,529.5 572.5,552.0 565.0,569.5 577.5,584.5 587.5,587.0 600.0,574.5 620.0,562.0 632.5,547.0 642.5,557.0 655.0,562.0 670.0,567.0 685.0,562.0 700.0,562.0 712.5,549.5 712.5,542.0 710.0,527.0 712.5,512.0 702.5,502.0 695.0,489.5 687.5,479.5 665.0,477.0 667.5,467.0 660.0,457.0 662.5,439.5 667.5,429.5 662.5,417.0 660.0,402.0" fill="#ee6f3a" stroke="#ee6f3a" stroke-width="8" stroke-linejoin="round"/><polygon points="540.0,514.5 530.0,527.0 520.0,524.5 505.0,534.5 500.0,549.5 487.5,557.0 475.0,562.0 465.0,577.0 455.0,582.0 447.5,572.0 440.0,569.5 430.0,579.5 417.5,597.0 407.5,612.0 400.0,627.0 395.0,642.0 397.5,667.0 530.0,667.0 527.5,649.5 535.0,642.0 550.0,634.5 555.0,624.5 565.0,617.0 580.0,605.8 590.0,602.0 587.5,587.0 577.5,584.5 565.0,569.5 572.5,552.0 542.5,529.5 547.5,519.5" fill="#3f9ccc" stroke="#3f9ccc" stroke-width="8" stroke-linejoin="round"/><polygon points="595.0,587.0 605.0,574.5 620.0,564.5 632.5,554.5 640.0,552.0 647.5,562.0 662.5,564.5 680.0,567.0 702.5,564.5 680.0,582.0 662.5,594.5 645.0,604.5 630.0,602.0 615.0,599.5 600.0,597.0" fill="#e828e0" stroke="#e828e0" stroke-width="6" stroke-linejoin="round"/><polygon points="735.0,519.5 755.0,524.5 770.0,534.5 785.0,542.0 785.0,562.0 790.0,582.0 780.0,587.0 777.5,572.0 770.0,557.0 747.5,552.0 730.0,547.0" fill="#f05a9a" stroke="#f05a9a" stroke-width="6" stroke-linejoin="round"/><polygon points="702.5,567.0 715.0,554.5 727.5,548.2 725.0,544.5 712.5,549.5 700.0,562.0" fill="#5fe8cc" stroke="#5fe8cc" stroke-width="5" stroke-linejoin="round"/><polygon points="535.0,652.0 550.0,637.0 555.0,624.5 580.0,609.5 590.0,614.5 600.0,627.0 605.0,642.0 600.0,667.0 540.0,667.0" fill="#e8b830" stroke="#e8b830" stroke-width="3" stroke-linejoin="round"/><polygon points="702.5,569.5 727.5,552.0 747.5,554.5 770.0,559.5 777.5,577.0 780.0,592.0 785.0,607.0 780.0,667.0 645.0,667.0 642.5,627.0 642.5,612.0 662.5,597.0 680.0,584.5" fill="#aad3df"/><polygon points="1180.0,587.0 1182.5,574.5 1192.5,562.0 1210.0,549.5 1235.0,537.0 1255.0,524.5 1275.0,507.0 1297.5,497.0 1312.5,489.5 1332.5,509.5 1341.2,514.5 1341.2,667.0 1182.5,667.0 1177.5,652.0 1167.5,639.5 1162.5,649.5 1162.5,637.0 1175.0,627.0 1185.0,609.5 1177.5,599.5" fill="#a058d3" stroke="#a058d3" stroke-width="3" stroke-linejoin="round"/><polygon points="1317.5,427.0 1330.0,417.0 1341.2,437.0 1341.2,507.0 1332.5,509.5 1312.5,489.5 1320.0,472.0 1315.0,452.0" fill="#e0309f" stroke="#e0309f" stroke-width="3" stroke-linejoin="round"/><polygon points="1312.5,659.5 1327.5,657.0 1341.2,637.0 1341.2,667.0 1312.5,667.0" fill="#cc3058" stroke="#cc3058" stroke-width="3" stroke-linejoin="round"/><polygon points="962.5,409.5 975.0,402.0 1000.0,402.0 992.5,417.0 982.5,427.0 970.0,424.5" fill="#5b9bd5" stroke="#5b9bd5" stroke-width="3" stroke-linejoin="round"/><polygon points="885.0,409.5 910.0,412.0 932.5,402.0 942.5,409.5 952.5,422.0 950.0,429.5 955.0,444.5 945.0,439.5 932.5,434.5 927.5,439.5 935.0,452.0 947.5,459.5 947.5,472.0 927.5,487.0 910.0,499.5 900.0,497.0 887.5,484.5 872.5,482.0 875.0,459.5 885.0,437.0" fill="#84d98a" stroke="#84d98a" stroke-width="3" stroke-linejoin="round"/><polygon points="860.0,484.5 872.5,482.0 887.5,484.5 900.0,497.0 910.0,499.5 912.5,507.0 907.5,519.5 892.5,524.5 885.0,537.0 872.5,534.5 860.0,529.5" fill="#4a78e8" stroke="#4a78e8" stroke-width="3" stroke-linejoin="round"/><polygon points="860.0,562.0 870.0,564.5 875.0,577.0 872.5,592.0 867.5,602.0 870.0,617.0 877.5,627.0 882.5,642.0 875.0,649.5 860.0,652.0" fill="#30c840" stroke="#30c840" stroke-width="3" stroke-linejoin="round"/><polygon points="912.5,507.0 922.5,522.0 935.0,524.5 945.0,522.0 955.0,529.5 970.0,532.0 982.5,539.5 995.0,527.0 1007.5,532.0 1020.0,527.0 1030.0,519.5 1035.0,532.0 1037.5,545.8 1045.0,534.5 1057.5,519.5 1070.0,522.0 1082.5,519.5 1095.0,519.5 1102.5,527.0 1110.0,519.5 1120.0,509.5 1132.5,502.0 1137.5,484.5 1142.5,467.0 1150.0,459.5 1157.5,447.0 1167.5,437.0 1175.0,422.0 1182.5,409.5 1187.5,402.0 1005.0,402.0 997.5,412.0 987.5,427.0 975.0,432.0 970.0,442.0 952.5,422.0 950.0,429.5 955.0,444.5 945.0,439.5 932.5,434.5 927.5,439.5 935.0,452.0 947.5,459.5 947.5,472.0 927.5,487.0 910.0,499.5" fill="#e8d157" stroke="#e8d157" stroke-width="3" stroke-linejoin="round"/><polygon points="1340.0,402.0 1482.5,402.0 1490.0,412.0 1495.0,427.0 1487.5,452.0 1490.0,457.0 1500.0,462.0 1482.5,479.5 1500.0,507.0 1482.5,517.0 1477.5,524.5 1465.0,529.5 1457.5,532.0 1460.0,542.0 1467.5,549.5 1465.0,562.0 1447.5,577.0 1440.0,589.5 1422.5,587.0 1412.5,577.0 1397.5,567.0 1395.0,549.5 1372.5,554.5 1365.0,542.0 1352.5,524.5 1340.0,517.0" fill="#e0309f" stroke="#e0309f" stroke-width="3" stroke-linejoin="round"/><polygon points="1340.0,517.0 1352.5,524.5 1365.0,542.0 1372.5,554.5 1395.0,549.5 1397.5,567.0 1395.0,574.5 1360.0,602.0 1382.5,619.5 1390.0,627.0 1377.5,639.5 1365.0,639.5 1352.5,632.0 1340.0,632.0" fill="#a058d3" stroke="#a058d3" stroke-width="3" stroke-linejoin="round"/><polygon points="1360.0,602.0 1395.0,574.5 1412.5,577.0 1422.5,587.0 1425.0,602.0 1410.0,607.0 1407.5,619.5 1390.0,627.0 1382.5,619.5" fill="#e0309f" stroke="#e0309f" stroke-width="3" stroke-linejoin="round"/><polygon points="1460.0,542.0 1467.5,549.5 1465.0,562.0 1447.5,577.0 1440.0,589.5 1422.5,587.0 1425.0,602.0 1410.0,607.0 1407.5,619.5 1390.0,627.0 1377.5,639.5 1365.0,639.5 1352.5,632.0 1340.0,632.0 1340.0,667.0 1580.0,667.0 1592.5,652.0 1602.5,639.5 1602.5,624.5 1590.0,627.0 1582.5,617.0 1592.5,604.5 1587.5,597.0 1565.0,602.0 1550.0,582.0 1535.0,552.0 1540.0,549.5 1540.0,527.0 1535.0,519.5 1525.0,512.0 1515.0,517.0 1500.0,522.0 1500.0,514.5 1495.0,507.0 1482.5,517.0 1477.5,524.5 1487.5,529.5 1485.0,537.0 1475.0,537.0 1465.0,529.5 1457.5,532.0" fill="#cc3058" stroke="#cc3058" stroke-width="3" stroke-linejoin="round"/><polygon points="1482.5,402.0 1600.0,402.0 1590.0,432.0 1575.0,439.5 1587.5,452.0 1580.0,462.0 1562.5,474.5 1560.0,497.0 1532.5,492.0 1525.0,484.5 1520.0,474.5 1522.5,462.0 1505.0,457.0 1490.0,457.0 1487.5,452.0 1495.0,427.0 1490.0,412.0" fill="#88e890" stroke="#88e890" stroke-width="3" stroke-linejoin="round"/><polygon points="1482.5,479.5 1500.0,462.0 1505.0,457.0 1510.0,439.5 1527.5,424.5 1540.0,447.0 1547.5,477.0 1545.0,494.5 1537.5,497.0 1550.0,502.0 1545.0,512.0 1535.0,512.0 1525.0,512.0 1515.0,517.0 1505.0,519.5 1500.0,507.0" fill="#34e060" stroke="#34e060" stroke-width="3" stroke-linejoin="round"/><polygon points="1600.0,402.0 1727.5,402.0 1725.0,407.0 1710.0,407.0 1700.0,427.0 1700.0,474.5 1682.5,477.0 1677.5,497.0 1672.5,509.5 1662.5,527.0 1647.5,532.0 1627.5,522.0 1612.5,529.5 1600.0,519.5 1580.0,512.0 1565.0,502.0 1560.0,497.0 1562.5,474.5 1580.0,462.0 1587.5,452.0 1575.0,439.5 1590.0,432.0 1590.0,422.0 1597.5,414.5" fill="#6a45cc" stroke="#6a45cc" stroke-width="3" stroke-linejoin="round"/><polygon points="1545.0,507.0 1552.5,502.0 1560.0,507.0 1552.5,512.0" fill="#6a45cc" stroke="#6a45cc" stroke-width="3" stroke-linejoin="round"/><polygon points="1727.5,402.0 1821.2,402.0 1821.2,544.5 1805.0,554.5 1807.5,564.5 1797.5,582.0 1787.5,577.0 1777.5,557.0 1762.5,569.5 1750.0,562.0 1732.5,559.5 1705.0,562.0 1697.5,557.0 1677.5,552.0 1655.0,549.5 1662.5,527.0 1672.5,509.5 1677.5,497.0 1682.5,477.0 1700.0,474.5 1700.0,427.0 1710.0,407.0 1725.0,407.0" fill="#dab312" stroke="#dab312" stroke-width="3" stroke-linejoin="round"/><polygon points="1810.0,477.0 1821.2,467.0 1821.2,512.0 1812.5,502.0" fill="#b0d038" stroke="#b0d038" stroke-width="3" stroke-linejoin="round"/><polygon points="1580.0,522.0 1600.0,519.5 1612.5,529.5 1627.5,522.0 1647.5,532.0 1662.5,537.0 1655.0,549.5 1677.5,552.0 1697.5,557.0 1705.0,562.0 1732.5,559.5 1750.0,562.0 1762.5,569.5 1777.5,557.0 1787.5,577.0 1797.5,582.0 1807.5,564.5 1805.0,554.5 1821.2,544.5 1821.2,667.0 1637.5,667.0 1625.0,652.0 1605.0,642.0 1602.5,624.5 1590.0,627.0 1582.5,617.0 1592.5,604.5 1587.5,597.0 1565.0,602.0 1555.0,582.0 1560.0,574.5 1555.0,559.5 1572.5,557.0 1575.0,542.0 1580.0,539.5" fill="#2c1ada" stroke="#2c1ada" stroke-width="3" stroke-linejoin="round"/><polygon points="1540.0,527.0 1552.5,512.0 1560.0,512.0 1575.0,529.5 1580.0,539.5 1565.0,547.0 1552.5,552.0 1540.0,549.5" fill="#e06090" stroke="#e06090" stroke-width="3" stroke-linejoin="round"/><polygon points="1580.0,667.0 1590.0,654.5 1605.0,642.0 1625.0,652.0 1637.5,662.0 1635.0,667.0" fill="#68c880" stroke="#68c880" stroke-width="3" stroke-linejoin="round"/><polygon points="1680.0,551.7 1922.0,541.7 1922.0,666.5 1680.0,666.5" fill="#2c1ada" stroke="#2c1ada" stroke-width="3" stroke-linejoin="round"/><polygon points="1680.0,489.3 1682.5,474.4 1701.2,476.9 1702.5,424.5 1712.4,404.5 1724.9,407.0 1727.4,402.0 1819.7,402.0 1824.7,422.0 1824.7,451.9 1829.7,459.4 1817.2,469.4 1814.7,479.3 1811.0,486.8 1816.0,501.8 1817.2,521.8 1826.0,531.7 1826.0,549.2 1814.7,544.2 1807.2,549.2 1807.2,554.2 1794.8,569.2 1802.3,579.1 1797.3,581.6 1784.8,574.2 1779.8,556.7 1769.8,561.7 1767.3,566.7 1759.8,571.7 1749.9,566.7 1747.4,559.2 1739.9,557.9 1732.4,561.7 1722.4,560.4 1717.4,562.9 1705.0,561.7 1700.0,556.7 1685.0,564.2 1680.0,564.2" fill="#dab312" stroke="#dab312" stroke-width="3" stroke-linejoin="round"/><polygon points="1680.0,402.0 1727.4,402.0 1724.9,407.0 1712.4,404.5 1702.5,424.5 1701.2,476.9 1682.5,474.4 1680.0,489.3" fill="#6a45cc" stroke="#6a45cc" stroke-width="3" stroke-linejoin="round"/><polygon points="1819.7,402.0 1922.0,402.0 1922.0,546.7 1909.5,551.7 1899.6,556.7 1892.1,561.7 1884.6,566.7 1879.6,554.2 1869.6,549.2 1859.6,539.2 1854.7,529.2 1826.0,531.7 1817.2,521.8 1816.0,501.8 1811.0,486.8 1814.7,479.3 1817.2,469.4 1829.7,459.4 1824.7,451.9 1824.7,422.0" fill="#b0d038" stroke="#b0d038" stroke-width="3" stroke-linejoin="round"/><polygon points="407.5,600.0 400.0,612.5 395.0,632.5 397.5,655.0 402.5,670.0 415.0,675.0 420.0,687.5 420.0,705.0 430.0,717.5 440.0,730.0 450.0,740.0 457.5,752.5 475.0,755.0 487.5,765.0 502.5,767.5 510.0,775.0 520.0,785.0 532.5,787.5 532.5,787.5 530.0,755.0 527.5,750.0 515.0,760.0 505.0,760.0 502.5,750.0 520.0,725.0 525.0,710.0 507.5,710.0 505.0,702.5 515.0,685.0 530.0,675.0 527.5,655.0 535.0,647.5 555.0,630.0 570.0,617.5 580.0,610.0 587.5,607.5 590.0,602.0 587.5,585.0 577.5,584.5 565.0,569.5 572.5,552.0 542.5,529.5 547.5,519.5 540.0,514.5 530.0,527.0 520.0,524.5 505.0,534.5 500.0,549.5 487.5,557.0 475.0,562.0 465.0,577.0 455.0,582.0 447.5,572.0 440.0,569.5 430.0,579.5 417.5,597.0" fill="#3f9ccc" stroke="#3f9ccc" stroke-width="8" stroke-linejoin="round"/><polygon points="587.5,607.5 580.0,610.0 570.0,617.5 555.0,630.0 535.0,647.5 527.5,655.0 530.0,675.0 515.0,685.0 505.0,702.5 507.5,710.0 525.0,710.0 540.0,695.0 555.0,690.0 557.5,680.0 567.5,682.5 580.0,675.0 587.5,670.0 600.0,665.0 610.0,660.0 615.0,645.0 605.0,642.5 602.5,630.0 597.5,622.5" fill="#e8b830" stroke="#e8b830" stroke-width="3" stroke-linejoin="round"/><polygon points="525.0,710.0 540.0,695.0 555.0,690.0 557.5,680.0 567.5,682.5 580.0,675.0 600.0,665.0 610.0,675.0 620.0,682.5 630.0,685.0 640.0,700.0 630.0,720.0 612.5,710.0 600.0,727.5 587.5,730.0 575.0,742.5 565.0,740.0 555.0,747.5 540.0,760.0 530.0,755.0 530.0,765.0 510.0,765.0 502.5,750.0 520.0,725.0" fill="#9a50d0" stroke="#9a50d0" stroke-width="3" stroke-linejoin="round"/><polygon points="532.5,787.5 540.0,792.5 552.5,785.0 565.0,775.0 575.0,767.5 587.5,770.0 595.0,762.5 605.0,770.0 615.0,772.5 625.0,765.0 637.5,760.0 640.0,750.0 637.5,735.0 640.0,722.5 630.0,720.0 620.0,712.5 612.5,710.0 600.0,727.5 587.5,730.0 575.0,742.5 565.0,740.0 555.0,742.5 540.0,752.5 530.0,760.0" fill="#e0506a" stroke="#e0506a" stroke-width="8" stroke-linejoin="round"/><polygon points="640.0,722.5 645.0,710.0 650.0,705.0 662.5,710.0 670.0,700.0 672.5,685.0 680.0,675.0 682.5,665.0 687.5,652.5 695.0,660.0 700.0,672.5 695.0,685.0 692.5,700.0 695.0,717.5 700.0,730.0 687.5,735.0 680.0,745.0 680.0,755.0 672.5,762.5 665.0,760.0 660.0,745.0 657.5,732.5 642.5,735.0 640.0,722.5" fill="#58d888" stroke="#58d888" stroke-width="9" stroke-linejoin="round"/><polygon points="785.0,600.0 805.0,602.5 817.5,605.0 825.0,625.0 827.5,635.0 820.0,657.5 812.5,680.0 805.0,705.0 795.0,730.0 787.5,755.0 780.0,775.0 772.5,790.0 765.0,810.0 755.0,830.0 755.0,837.5 750.0,850.0 745.0,865.0 861.2,865.0 861.2,600.0" fill="#18e5d0" stroke="#18e5d0" stroke-width="8" stroke-linejoin="round"/><polygon points="802.5,607.5 800.0,625.0 792.5,645.0 782.5,660.0 775.0,675.0 765.0,687.5 757.5,700.0 752.5,717.5 742.5,735.0 735.0,750.0 727.5,770.0 720.0,790.0 730.0,802.5 742.5,817.5 755.0,830.0 755.0,830.0 765.0,810.0 772.5,790.0 780.0,775.0 787.5,755.0 795.0,730.0 805.0,705.0 812.5,680.0 820.0,657.5 827.5,635.0 825.0,625.0 817.5,605.0 805.0,602.5" fill="#8868d0" stroke="#8868d0" stroke-width="8" stroke-linejoin="round"/><polygon points="827.5,600.0 861.2,600.0 861.2,662.5 845.0,670.0 842.5,637.5 830.0,635.0" fill="#30c840" stroke="#30c840" stroke-width="3" stroke-linejoin="round"/><polygon points="794.0,179.0 785.0,186.5 770.0,184.0 762.5,188.0 750.0,188.0 746.0,191.5 745.0,199.0 735.0,210.0 725.0,219.0 716.0,221.5 711.0,231.5 705.0,246.5 760.0,246.0 799.0,240.0 798.0,186.0" fill="#e85fd2" stroke="#e85fd2" stroke-width="3" stroke-linejoin="round"/><polygon points="794.0,179.0 800.0,185.0 812.5,188.0 816.0,194.0 821.0,203.0 814.0,209.0 811.0,219.0 798.0,219.0 798.0,186.0" fill="#d98a52" stroke="#d98a52" stroke-width="3" stroke-linejoin="round"/><polygon points="860.0,600.0 1115.0,600.0 1107.5,608.8 1103.8,610.0 1106.2,615.0 1110.0,613.8 1100.0,640.0 1085.0,680.0 1067.5,722.5 1047.5,745.0 1025.0,770.0 1012.5,765.0 1000.0,785.0 987.5,810.0 982.5,816.2 972.5,825.0 960.0,832.5 945.0,842.5 930.0,843.8 915.0,847.5 905.0,865.0 860.0,865.0" fill="#18e5d0" stroke="#18e5d0" stroke-width="3" stroke-linejoin="round"/><polygon points="1115.0,600.0 1107.5,608.8 1103.8,610.0 1106.2,615.0 1110.0,613.8 1100.0,640.0 1085.0,680.0 1067.5,722.5 1047.5,745.0 1025.0,770.0 1012.5,765.0 1000.0,785.0 987.5,810.0 982.5,816.2 1000.0,817.5 1030.0,825.0 1060.0,837.5 1085.0,845.0 1110.0,852.5 1125.0,860.0 1132.5,865.0 1185.0,865.0 1185.0,600.0" fill="#b673e0" stroke="#b673e0" stroke-width="3" stroke-linejoin="round"/><polygon points="1177.5,600.0 1185.0,610.0 1170.0,632.5 1177.5,647.5 1182.5,667.5 1195.0,680.0 1197.5,687.5 1192.5,705.0 1185.0,717.5 1165.0,722.5 1150.0,732.5 1150.0,750.0 1145.0,762.5 1127.5,772.5 1117.5,787.5 1120.0,807.5 1127.5,817.5 1125.0,840.0 1122.5,850.0 1125.0,860.0 1135.0,865.0 1341.2,865.0 1341.2,600.0" fill="#a058d3" stroke="#a058d3" stroke-width="3" stroke-linejoin="round"/><polygon points="1312.5,660.0 1330.0,657.5 1335.0,670.0 1341.2,690.0 1341.2,720.0 1322.5,736.2 1317.5,742.5 1310.0,752.5 1317.5,720.0 1317.5,695.0 1310.0,685.0 1317.5,680.0" fill="#cc3058" stroke="#cc3058" stroke-width="3" stroke-linejoin="round"/><polygon points="860.0,630.0 870.0,627.5 882.5,635.0 885.0,650.0 890.0,655.0 887.5,675.0 870.0,672.5 860.0,677.5" fill="#30c840" stroke="#30c840" stroke-width="3" stroke-linejoin="round"/><polygon points="905.0,865.0 913.8,856.2 932.5,851.2 946.2,850.0 962.5,840.5 973.8,833.0 985.0,823.0 1000.0,824.5 1030.0,832.0 1060.0,844.5 1085.0,852.0 1110.0,859.5 1120.0,865.0" fill="#aad3df"/><polygon points="1070.0,720.0 1080.0,715.0 1090.0,720.0 1085.0,725.0 1070.0,727.5" fill="#18e5d0" stroke="#18e5d0" stroke-width="3" stroke-linejoin="round"/><polygon points="1340.0,630.0 1352.5,632.5 1365.0,637.5 1372.5,642.5 1390.0,625.0 1407.5,620.0 1410.0,607.5 1427.5,600.0 1592.5,600.0 1582.5,615.0 1590.0,627.5 1605.0,627.5 1606.2,640.0 1590.0,657.5 1580.0,662.5 1577.5,675.0 1582.5,682.5 1575.0,695.0 1572.5,702.5 1565.0,700.0 1537.5,733.8 1552.5,742.5 1552.5,762.5 1535.0,775.0 1527.5,795.0 1520.0,807.5 1520.0,822.5 1505.0,832.5 1485.0,842.5 1475.0,852.5 1472.5,865.0 1387.5,865.0 1387.5,865.0 1395.0,845.0 1407.5,825.0 1410.0,807.5 1417.5,800.0 1425.0,785.0 1440.0,775.0 1442.5,770.0 1430.0,762.5 1427.5,752.5 1412.5,752.5 1405.0,745.0 1390.0,740.0 1385.0,735.0 1340.0,736.2 1340.0,725.0 1355.0,727.5 1370.0,710.0 1377.5,693.8 1365.0,675.0 1340.0,675.0" fill="#cc3058" stroke="#cc3058" stroke-width="3" stroke-linejoin="round"/><polygon points="1340.0,600.0 1360.0,600.0 1385.0,617.5 1390.0,625.0 1372.5,642.5 1365.0,637.5 1352.5,632.5 1340.0,630.0" fill="#a058d3" stroke="#a058d3" stroke-width="3" stroke-linejoin="round"/><polygon points="1377.5,693.8 1386.2,695.0 1400.0,703.8 1390.0,715.0 1387.5,725.0 1390.0,735.0 1385.0,735.0 1340.0,736.2 1340.0,725.0 1355.0,727.5 1370.0,710.0" fill="#a058d3" stroke="#a058d3" stroke-width="3" stroke-linejoin="round"/><polygon points="1340.0,736.2 1385.0,735.0 1390.0,740.0 1405.0,745.0 1412.5,752.5 1427.5,752.5 1430.0,762.5 1442.5,770.0 1440.0,775.0 1425.0,785.0 1417.5,800.0 1410.0,807.5 1407.5,825.0 1395.0,845.0 1387.5,865.0 1340.0,865.0" fill="#a058d3" stroke="#a058d3" stroke-width="3" stroke-linejoin="round"/><polygon points="1360.0,600.0 1425.0,600.0 1410.0,607.5 1407.5,620.0 1390.0,625.0 1385.0,617.5" fill="#e0309f" stroke="#e0309f" stroke-width="3" stroke-linejoin="round"/><polygon points="1606.2,640.0 1590.0,657.5 1580.0,662.5 1577.5,675.0 1582.5,682.5 1575.0,695.0 1572.5,702.5 1565.0,700.0 1537.5,733.8 1552.5,742.5 1552.5,762.5 1535.0,775.0 1527.5,795.0 1520.0,807.5 1520.0,822.5 1505.0,832.5 1485.0,842.5 1475.0,852.5 1472.5,865.0 1821.2,865.0 1821.2,840.0 1815.0,825.0 1805.0,810.0 1792.5,795.0 1782.5,780.0 1780.0,767.5 1765.0,767.5 1762.5,755.0 1750.0,742.5 1725.0,732.5 1705.0,745.0 1690.0,745.0 1677.5,740.0 1672.5,710.0 1662.5,700.0 1652.5,695.0 1632.5,662.5 1637.5,658.8 1606.2,640.0" fill="#68c880" stroke="#68c880" stroke-width="3" stroke-linejoin="round"/><polygon points="1606.2,640.0 1637.5,658.8 1632.5,662.5 1652.5,695.0 1662.5,700.0 1672.5,710.0 1677.5,740.0 1690.0,745.0 1705.0,745.0 1725.0,732.5 1750.0,742.5 1762.5,755.0 1765.0,767.5 1780.0,767.5 1782.5,780.0 1792.5,795.0 1805.0,810.0 1815.0,825.0 1821.2,840.0 1821.2,600.0 1617.5,600.0 1607.5,612.5 1605.0,627.5" fill="#2c1ada" stroke="#2c1ada" stroke-width="3" stroke-linejoin="round"/><polygon points="1565.0,700.0 1572.5,702.5 1575.0,710.0 1567.5,720.0 1560.0,725.0 1552.5,737.5 1537.5,733.8" fill="#cc3058" stroke="#cc3058" stroke-width="3" stroke-linejoin="round"/><polygon points="1552.5,762.5 1547.5,775.0 1553.8,790.0 1540.0,802.5 1527.5,810.0 1520.0,822.5 1520.0,807.5 1527.5,795.0 1535.0,775.0" fill="#cc3058" stroke="#cc3058" stroke-width="3" stroke-linejoin="round"/><polygon points="1520.0,830.0 1530.0,837.5 1542.5,843.8 1540.0,852.5 1532.5,865.0 1472.5,865.0 1475.0,852.5 1485.0,842.5 1505.0,832.5" fill="#cc3058" stroke="#cc3058" stroke-width="3" stroke-linejoin="round"/><polygon points="1560.0,670.0 1565.0,666.2 1575.0,675.0 1577.5,682.5 1565.0,685.0 1561.2,677.5" fill="#68c880" stroke="#68c880" stroke-width="3" stroke-linejoin="round"/><polygon points="1582.5,615.0 1592.5,600.0 1617.5,600.0 1607.5,612.5 1600.0,618.8 1590.0,627.5" fill="#2c1ada" stroke="#2c1ada" stroke-width="3" stroke-linejoin="round"/><polygon points="1675.0,748.8 1700.0,747.5 1690.0,751.2" fill="#2c1ada"/><polygon points="860.0,791.0 995.0,791.0 982.5,816.0 970.0,826.0 945.0,843.5 930.0,844.8 915.0,848.5 905.0,863.5 892.5,871.0 875.0,883.5 860.0,893.5 860.0,893.5" fill="#18e5d0" stroke="#18e5d0" stroke-width="3" stroke-linejoin="round"/><polygon points="995.0,791.0 1120.0,791.0 1120.0,791.0 1122.5,806.0 1127.5,811.0 1128.8,828.5 1125.0,841.0 1123.8,853.5 1132.5,866.0 1132.5,866.0 1110.0,856.0 1085.0,846.0 1060.0,838.5 1030.0,828.5 1000.0,817.2 982.5,816.0" fill="#b673e0" stroke="#b673e0" stroke-width="3" stroke-linejoin="round"/><polygon points="1120.0,791.0 1122.5,806.0 1127.5,811.0 1128.8,828.5 1125.0,841.0 1123.8,853.5 1132.5,866.0 1132.5,866.0 1160.0,878.5 1185.0,893.5 1210.0,911.0 1222.5,921.0 1223.8,931.0 1227.5,946.0 1230.0,961.0 1225.0,976.0 1217.5,988.5 1212.5,1003.5 1212.5,1023.5 1341.2,1023.5 1341.2,791.0" fill="#a058d3" stroke="#a058d3" stroke-width="3" stroke-linejoin="round"/><polygon points="860.0,901.0 875.0,891.0 892.5,878.5 906.2,871.0 916.2,856.0 931.2,852.2 946.2,851.0 971.2,833.5 985.0,822.2 1000.0,824.8 1030.0,836.0 1060.0,846.0 1085.0,853.5 1110.0,863.5 1132.5,873.5 1160.0,886.0 1185.0,901.0 1208.8,917.2 1216.2,926.0 1217.5,941.0 1221.2,956.0 1220.0,971.0 1212.5,986.0 1206.2,1003.5 1205.0,1023.5 860.0,1023.5" fill="#aad3df"/><polygon points="1340.0,791.0 1422.5,791.0 1422.5,791.0 1412.5,801.0 1410.0,816.0 1400.0,833.5 1390.0,851.0 1377.5,866.0 1366.2,873.5 1366.2,873.5 1390.0,908.5 1420.0,951.0 1405.0,971.0 1397.5,991.0 1390.0,1011.0 1387.5,1023.5 1340.0,1023.5" fill="#a058d3" stroke="#a058d3" stroke-width="3" stroke-linejoin="round"/><polygon points="1532.5,791.0 1525.0,803.5 1520.0,823.5 1505.0,833.5 1485.0,841.0 1475.0,851.0 1472.5,861.0 1480.0,871.0 1485.0,883.5 1487.5,893.5 1480.0,901.0 1465.0,913.5 1445.0,918.5 1437.5,926.0 1430.0,941.0 1420.0,951.0 1405.0,971.0 1397.5,991.0 1390.0,1011.0 1387.5,1023.5 1821.2,1023.5 1821.2,791.0 1555.0,791.0" fill="#68c880" stroke="#68c880" stroke-width="3" stroke-linejoin="round"/><polygon points="1422.5,791.0 1532.5,791.0 1525.0,803.5 1520.0,823.5 1505.0,833.5 1485.0,841.0 1475.0,851.0 1472.5,861.0 1480.0,871.0 1485.0,883.5 1487.5,893.5 1480.0,898.5 1470.0,896.0 1465.0,901.0 1447.5,903.5 1440.0,893.5 1425.0,883.5 1422.5,896.0 1405.0,893.5 1400.0,881.0 1387.5,868.5 1377.5,866.0 1390.0,851.0 1400.0,833.5 1410.0,816.0 1412.5,801.0" fill="#cc3058" stroke="#cc3058" stroke-width="3" stroke-linejoin="round"/><polygon points="1387.5,868.5 1400.0,881.0 1405.0,893.5 1422.5,896.0 1425.0,883.5 1440.0,893.5 1447.5,903.5 1465.0,901.0 1470.0,896.0 1480.0,898.5 1480.0,901.0 1465.0,913.5 1445.0,918.5 1437.5,926.0 1430.0,941.0 1420.0,951.0 1390.0,908.5 1366.2,873.5 1377.5,866.0" fill="#a058d3" stroke="#a058d3" stroke-width="3" stroke-linejoin="round"/><polygon points="1532.5,791.0 1555.0,791.0 1540.0,803.5 1525.0,811.0 1520.0,823.5 1525.0,803.5" fill="#cc3058" stroke="#cc3058" stroke-width="3" stroke-linejoin="round"/><polygon points="1520.0,831.0 1540.0,843.5 1540.0,853.5 1530.0,868.5 1520.0,878.5 1500.0,891.0 1490.0,893.5 1485.0,883.5 1480.0,871.0 1472.5,861.0 1475.0,851.0 1485.0,841.0 1505.0,833.5" fill="#cc3058" stroke="#cc3058" stroke-width="3" stroke-linejoin="round"/><polygon points="1400.0,956.0 1415.0,948.5 1420.0,951.0 1405.0,966.0" fill="#68c880" stroke="#68c880" stroke-width="3" stroke-linejoin="round"/><polygon points="1420.0,966.0 1425.0,991.0 1425.0,1011.0 1420.0,1023.5 1387.5,1023.5 1390.0,1011.0 1397.5,991.0 1405.0,971.0" fill="#a058d3" stroke="#a058d3" stroke-width="3" stroke-linejoin="round"/><polygon points="1821.2,947.2 1811.8,953.0 1802.5,966.8 1789.2,975.5 1775.5,985.5 1765.5,999.0 1750.5,1011.5 1740.0,1023.5 1821.2,1023.5" fill="#aad3df"/><polygon points="1790.0,791.0 1821.2,791.0 1821.2,836.0 1815.0,823.5 1810.0,808.5 1797.5,801.0" fill="#2c1ada" stroke="#2c1ada" stroke-width="3" stroke-linejoin="round"/><polygon points="1680.0,600.0 1921.3,600.0 1921.3,855.5 1904.1,865.0 1886.8,871.5 1869.6,880.1 1854.5,886.5 1854.5,886.5 1845.9,875.8 1843.7,854.2 1822.2,841.3 1817.9,824.1 1809.3,811.1 1796.3,798.2 1781.3,781.0 1781.3,768.0 1766.2,763.7 1753.2,744.3 1725.2,733.6 1710.2,740.0 1680.0,742.2" fill="#2c1ada" stroke="#2c1ada" stroke-width="3" stroke-linejoin="round"/><polygon points="1680.0,742.2 1710.2,740.0 1725.2,733.6 1753.2,744.3 1766.2,763.7 1781.3,768.0 1781.3,781.0 1796.3,798.2 1809.3,811.1 1817.9,824.1 1822.2,841.3 1843.7,854.2 1845.9,875.8 1854.5,886.5 1843.7,910.2 1826.5,927.5 1809.3,944.7 1792.0,961.9 1770.5,974.9 1757.6,996.4 1736.0,1013.6 1718.8,1024.4 1680.0,1024.4" fill="#68c880" stroke="#68c880" stroke-width="3" stroke-linejoin="round"/><polygon points="1857.5,895.6 1871.7,889.6 1889.0,880.9 1906.2,874.5 1921.3,866.3 1921.3,1026.6 1723.1,1026.6 1740.3,1020.1 1761.9,1002.9 1774.8,981.3 1796.3,968.4 1813.6,951.2 1830.8,933.9 1848.0,916.7" fill="#aad3df"/><polygon points="982.5,816.0 972.5,826.0 955.0,838.5 945.0,844.8 930.0,843.5 915.0,848.5 905.0,861.0 895.0,871.0 880.0,878.5 865.0,888.5 850.0,901.0 835.0,916.0 820.0,927.2 810.0,929.8 802.5,918.5 795.0,903.5 790.0,896.0 775.0,888.5 755.0,882.2 745.0,877.2 742.5,866.0 747.5,856.0 755.0,846.0 755.0,831.0 760.0,826.0 765.0,813.5 772.5,801.0 775.0,786.0 1000.0,786.0" fill="#18e5d0" stroke="#18e5d0" stroke-width="3" stroke-linejoin="round"/><polygon points="795.0,380.0 900.0,390.0 890.0,402.5 877.5,405.0 880.0,417.5 885.0,425.0 877.5,435.0 865.0,450.0 845.0,470.0 827.5,485.0 810.0,500.0 795.0,510.0" fill="#4ecfc2" stroke="#4ecfc2" stroke-width="3" stroke-linejoin="round"/><polygon points="795.0,510.0 807.5,510.0 812.5,520.0 810.0,530.0 820.0,540.0 835.0,537.5 850.0,532.5 845.0,542.5 842.5,550.0 832.5,560.0 822.5,580.0 817.5,595.0 795.0,595.0" fill="#4ecfc2" stroke="#4ecfc2" stroke-width="3" stroke-linejoin="round"/><polygon points="970.0,362.5 977.5,352.5 980.0,330.0 1120.0,330.0 1117.5,340.0 1120.0,347.5 1110.0,342.5 1095.0,347.5 1077.5,352.5 1060.0,357.5 1045.0,365.0 1027.5,372.5 1010.0,380.0 1015.0,390.0 990.0,425.0 972.5,440.0 957.5,430.0 950.0,415.0 955.0,405.0 960.0,397.5 967.5,392.5 975.0,387.5 970.0,380.0 955.0,385.0 935.0,390.0 955.0,377.5" fill="#5b9bd5" stroke="#5b9bd5" stroke-width="3" stroke-linejoin="round"/><polygon points="882.5,412.5 900.0,397.5 920.0,397.5 935.0,390.0 925.0,402.5 905.0,407.5 890.0,417.5" fill="#8fc4e0" stroke="#8fc4e0" stroke-width="3" stroke-linejoin="round"/><polygon points="795.0,330.0 967.5,330.0 970.0,340.0 977.5,352.5 970.0,362.5 955.0,377.5 935.0,390.0 920.0,397.5 900.0,395.0 897.5,387.5 890.0,377.5 887.5,385.0 880.0,392.5 870.0,392.5 857.5,397.5 855.0,407.5 837.5,405.0 825.0,407.5 812.5,400.0 805.0,390.0 795.0,387.5" fill="#d98a52" stroke="#d98a52" stroke-width="3" stroke-linejoin="round"/><polygon points="957.5,337.5 967.5,345.0 970.0,355.0 960.0,352.5" fill="#e8d157" stroke="#e8d157" stroke-width="3" stroke-linejoin="round"/><polygon points="985.0,330.0 992.5,335.0 1005.0,338.8 1020.0,340.0 1032.5,335.0 1040.0,330.0" fill="#63f29f" stroke="#63f29f" stroke-width="3" stroke-linejoin="round"/><polygon points="1120.0,347.5 1120.0,330.0 1242.5,330.0 1245.0,342.5 1237.5,347.5 1230.0,357.5 1220.0,375.0 1210.0,392.5 1205.0,405.0 1195.0,402.5 1180.0,410.0 1150.0,380.0" fill="#63f29f" stroke="#63f29f" stroke-width="3" stroke-linejoin="round"/><polygon points="1122.5,355.0 1140.0,372.5 1132.5,380.0 1127.5,367.5" fill="#63f29f" stroke="#63f29f" stroke-width="3" stroke-linejoin="round"/><polygon points="877.5,435.0 887.5,425.0 900.0,412.5 915.0,405.0 930.0,402.5 945.0,407.5 950.0,415.0 957.5,430.0 955.0,445.0 945.0,440.0 932.5,432.5 927.5,437.5 935.0,455.0 947.5,460.0 947.5,470.0 930.0,475.0 915.0,485.0 907.5,495.0 905.0,502.5 895.0,490.0 882.5,480.0 870.0,480.0 865.0,475.0 875.0,457.5 885.0,437.5" fill="#84d98a" stroke="#84d98a" stroke-width="3" stroke-linejoin="round"/><polygon points="865.0,475.0 870.0,480.0 882.5,480.0 895.0,490.0 905.0,502.5 912.5,505.0 907.5,520.0 890.0,527.5 885.0,535.0 870.0,530.0 850.0,532.5 835.0,537.5 820.0,540.0 810.0,530.0 812.5,520.0 807.5,510.0 820.0,505.0 827.5,492.5 840.0,480.0 852.5,470.0" fill="#4a78e8" stroke="#4a78e8" stroke-width="3" stroke-linejoin="round"/><polygon points="822.5,580.0 832.5,560.0 842.5,550.0 855.0,555.0 875.0,560.0 880.0,580.0 882.5,595.0 817.5,595.0" fill="#30c840" stroke="#30c840" stroke-width="3" stroke-linejoin="round"/><polyline points="612.5,402.0 605.0,412.0 597.5,429.5 587.5,439.5 570.0,444.5 562.5,459.5 555.0,472.0 547.5,484.5 542.5,502.0 540.0,514.5" fill="none" stroke="#ee6f3a" stroke-width="16.5" stroke-linejoin="round"/><polyline points="540.0,514.5 530.0,527.0 520.0,524.5 505.0,534.5 500.0,549.5 487.5,557.0 475.0,562.0 465.0,577.0 455.0,582.0 447.5,572.0 440.0,569.5 430.0,579.5 418.0,588.0 407.5,600.0" fill="none" stroke="#3f9ccc" stroke-width="16.5" stroke-linejoin="round"/><polyline points="407.5,600.0 400.0,612.5 395.0,632.5 397.5,655.0 402.5,670.0 415.0,675.0 420.0,687.5 420.0,705.0 430.0,717.5 440.0,730.0 450.0,740.0 457.5,752.5 475.0,755.0 487.5,765.0 502.5,767.5 510.0,775.0 520.0,785.0 532.5,787.5" fill="none" stroke="#3f9ccc" stroke-width="16.5" stroke-linejoin="round"/><polyline points="532.5,787.5 540.0,792.5 552.5,785.0 565.0,775.0 575.0,767.5 587.5,770.0 595.0,762.5 605.0,770.0 615.0,772.5 625.0,765.0 637.5,760.0 640.0,750.0 637.5,735.0 640.0,722.5" fill="none" stroke="#e0506a" stroke-width="16.5" stroke-linejoin="round"/><polyline points="640.0,722.5 645.0,710.0 650.0,705.0 662.5,710.0 670.0,700.0 672.5,685.0 680.0,675.0 682.5,665.0 687.5,652.5 695.0,660.0 700.0,672.5 695.0,685.0 692.5,700.0 695.0,717.5 700.0,730.0 687.5,735.0 680.0,745.0 680.0,755.0 672.5,762.5 665.0,760.0 660.0,745.0 657.5,732.5 642.5,735.0 640.0,722.5" fill="none" stroke="#58d888" stroke-width="16.5" stroke-linejoin="round"/><polyline points="802.5,607.5 800.0,625.0 792.5,645.0 782.5,660.0 775.0,675.0 765.0,687.5 757.5,700.0 752.5,717.5 742.5,735.0 735.0,750.0 727.5,770.0 720.0,790.0 730.0,802.5 742.5,817.5 755.0,830.0" fill="none" stroke="#8868d0" stroke-width="16.5" stroke-linejoin="round"/><polyline points="794.0,179.0 785.0,186.5 770.0,184.0 762.5,188.0 750.0,188.0 746.0,191.5 745.0,199.0 735.0,210.0 725.0,219.0 716.0,221.5 711.0,231.5 705.0,246.5 709.0,251.5 717.5,254.0 725.0,260.0 730.0,271.0 734.0,272.5 740.0,284.0 742.5,296.0 743.0,306.0 741.0,315.0 745.0,322.0" fill="none" stroke="#e85fd2" stroke-width="16.5" stroke-linejoin="round"/><polyline points="745.0,322.0 741.0,315.0 737.5,306.0 730.0,304.0 725.0,299.0 721.0,295.0 714.0,299.0 706.0,302.5 700.0,307.5 696.0,314.0 697.5,320.0 690.0,325.0 682.5,325.0 675.0,327.5" fill="none" stroke="#1a5fe3" stroke-width="16.5" stroke-linejoin="round"/><polyline points="982.5,816.0 970.0,826.0 945.0,843.5 930.0,844.8 915.0,848.5 905.0,863.5 892.5,871.0 875.0,883.5 860.0,893.5" fill="none" stroke="#18e5d0" stroke-width="16.5" stroke-linejoin="round"/><polyline points="982.5,816.0 1000.0,817.2 1030.0,828.5 1060.0,838.5 1085.0,846.0 1110.0,856.0 1132.5,866.0 1160.0,878.5" fill="none" stroke="#b673e0" stroke-width="16.5" stroke-linejoin="round"/><polyline points="1160.0,878.5 1185.0,893.5 1210.0,911.0 1222.5,921.0 1223.8,931.0 1227.5,946.0 1230.0,961.0 1225.0,976.0 1217.5,988.5 1212.5,1003.5 1212.5,1023.5" fill="none" stroke="#aa60dc" stroke-width="16.5" stroke-linejoin="round"/><polyline points="1854.5,886.5 1869.6,880.1 1886.8,871.5 1904.1,865.0 1921.3,855.5" fill="none" stroke="#2c1ada" stroke-width="16.5" stroke-linejoin="round"/><polyline points="1854.5,886.5 1843.7,910.2 1826.5,927.5 1809.3,944.7 1792.0,961.9 1770.5,974.9 1757.6,996.4 1736.0,1013.6 1718.8,1024.4" fill="none" stroke="#68c880" stroke-width="16.5" stroke-linejoin="round"/><polyline points="982.5,816.0 972.5,826.0 955.0,838.5 945.0,844.8 930.0,843.5 915.0,848.5 905.0,861.0 895.0,871.0 880.0,878.5 865.0,888.5 850.0,901.0 835.0,916.0 820.0,927.2 810.0,929.8 802.5,918.5 795.0,903.5 790.0,896.0 775.0,888.5 755.0,882.2 745.0,877.2 742.5,866.0 747.5,856.0" fill="none" stroke="#18e5d0" stroke-width="16.5" stroke-linejoin="round"/><ellipse cx="740" cy="602.5" rx="10" ry="15.5" fill="#fff" stroke="#f0509a" stroke-width="7"/><ellipse cx="740" cy="602.5" rx="7" ry="12" fill="#fff" stroke="#1c1c1c" stroke-width="1"/><ellipse cx="740" cy="603" rx="4" ry="9" fill="#aad3df"/><polyline points="637.5,600.0 635.0,607.5 640.0,620.0 630.0,622.5 632.5,632.5 627.5,642.5 622.5,650.0 627.5,660.0 640.0,665.0 650.0,665.0" fill="none" stroke="#c080e0" stroke-width="13" stroke-linejoin="round"/><polyline points="640.0,665.0 650.0,665.0 655.0,657.5 655.0,682.5 650.0,697.5 650.0,705.0" fill="none" stroke="#9a50d0" stroke-width="13" stroke-linejoin="round"/><polyline points="380.0,790.0 405.0,807.5 442.5,827.5 480.0,840.0 530.0,845.0 605.0,842.5 667.5,840.0 687.5,832.5 695.0,820.0 702.5,795.0 715.0,755.0 725.0,712.5 727.5,675.0 727.5,645.0 715.0,632.5 692.5,632.5 655.0,627.5 640.0,625.0" fill="none" stroke="#8da2e8" stroke-width="1.1" stroke-dasharray="4 3"/><polyline points="640.0,645.0 727.5,645.0 785.0,643.8" fill="none" stroke="#8da2e8" stroke-width="1.1" stroke-dasharray="4 3"/><polyline points="747.5,607.5 770.0,620.0 785.0,642.5" fill="none" stroke="#8da2e8" stroke-width="1.1" stroke-dasharray="4 3"/><polyline points="735.0,617.5 705.0,630.0 667.5,642.5 640.0,647.5" fill="none" stroke="#8da2e8" stroke-width="1.1" stroke-dasharray="4 3"/><rect x="575" y="772.5" width="62" height="30" fill="none" stroke="#84bda4" stroke-width="1.2"/><text x="737.5" y="665" text-anchor="middle" font-size="9.2" font-style="italic" font-family="Liberation Sans, sans-serif" fill="#6f8fbd">Wellington</text><text x="737.5" y="676" text-anchor="middle" font-size="9.2" font-style="italic" font-family="Liberation Sans, sans-serif" fill="#6f8fbd">Harbour</text><polyline points="625.0,841.0 670.0,839.8 685.0,833.5 695.0,818.5 705.0,791.0" fill="none" stroke="#8da2e8" stroke-width="1.1" stroke-dasharray="4 3"/><polygon points="624.5,274.9 635.8,275.9 637.8,278.6 635.2,286.6 635.8,297.2 632.5,302.5 627.2,306.5 619.2,307.8 613.9,311.8 611.9,309.8 610.6,303.2 612.6,297.8 617.9,289.9 621.9,281.9" fill="#d3e6c4" stroke="#c9afc6" stroke-width="1"/><polygon points="624.5,274.9 628.2,280.7 621.2,280.7" fill="#dc8c50"/><polygon points="624.5,287.9 632.5,283.9 633.8,291.9 629.8,301.2 621.9,302.5" fill="#c4dfb4" opacity=".6"/><path d="M624.3 311.1h1v1h-1zM639.6 318.2h1v1h-1zM641.6 320.1h1v1h-1zM649.2 323.3h1v1h-1zM628.4 314.2h1v1h-1zM644.1 327.0h1v1h-1zM645.2 316.6h1v1h-1zM624.1 312.0h1v1h-1zM643.7 322.7h1v1h-1zM643.1 317.7h1v1h-1zM647.0 326.3h1v1h-1zM641.6 321.3h1v1h-1zM634.3 318.8h1v1h-1zM636.5 318.2h1v1h-1zM647.7 325.7h1v1h-1zM649.2 319.1h1v1h-1zM633.5 316.6h1v1h-1zM649.9 319.6h1v1h-1zM651.7 325.8h1v1h-1zM626.8 313.4h1v1h-1zM650.4 318.6h1v1h-1zM630.5 315.4h1v1h-1zM634.9 315.3h1v1h-1zM641.3 321.0h1v1h-1zM642.9 323.2h1v1h-1zM650.2 320.4h1v1h-1zM653.7 330.2h1v1h-1zM623.7 311.7h1v1h-1zM655.5 333.2h1v1h-1zM637.8 316.9h1v1h-1zM645.6 322.8h1v1h-1zM644.1 325.0h1v1h-1zM633.3 318.1h1v1h-1zM656.7 329.5h1v1h-1zM622.0 311.1h1v1h-1zM620.9 309.9h1v1h-1zM629.5 314.6h1v1h-1zM614.2 307.1h1v1h-1zM644.8 324.9h1v1h-1zM631.4 315.7h1v1h-1zM653.8 329.3h1v1h-1zM654.6 325.0h1v1h-1zM632.6 317.2h1v1h-1zM620.7 310.5h1v1h-1zM622.2 310.1h1v1h-1zM625.7 313.1h1v1h-1zM621.0 310.6h1v1h-1zM651.8 321.8h1v1h-1zM649.1 320.2h1v1h-1zM639.3 320.3h1v1h-1zM639.0 315.9h1v1h-1zM639.0 316.8h1v1h-1zM650.0 319.5h1v1h-1zM644.5 320.9h1v1h-1zM624.4 311.2h1v1h-1zM644.2 326.4h1v1h-1zM641.0 321.7h1v1h-1zM639.7 319.0h1v1h-1zM615.8 308.1h1v1h-1zM617.6 308.8h1v1h-1zM637.3 314.1h1v1h-1zM631.8 315.8h1v1h-1zM644.1 320.8h1v1h-1zM619.6 309.8h1v1h-1zM645.0 323.2h1v1h-1zM634.4 316.2h1v1h-1zM638.9 317.5h1v1h-1zM631.8 316.4h1v1h-1zM629.8 313.4h1v1h-1zM630.6 314.1h1v1h-1z" fill="#7fb0dc" opacity=".6"/><path d="M330 139 Q320 175 315 212" fill="none" stroke="#bda6cc" stroke-width="1.2"/><path d="M369 243l2 2 2-1" fill="none" stroke="#8fb8d8" stroke-width=".8"/><path d="M835 156h2v2h-2zM831 150h2v2h-2zM832 150h2v2h-2zM834 157h2v2h-2zM834 156h2v2h-2zM831 150h2v2h-2zM831 162h2v2h-2zM836 166h2v2h-2zM837 169h2v2h-2zM842 176h2v2h-2zM838 174h2v2h-2zM836 168h2v2h-2zM838 187h2v2h-2zM838 186h2v2h-2zM838 187h2v2h-2zM837 185h2v2h-2zM838 192h2v2h-2zM840 180h2v2h-2zM838 194h2v2h-2zM843 200h2v2h-2zM843 207h2v2h-2zM841 200h2v2h-2zM845 204h2v2h-2zM845 202h2v2h-2zM841 213h2v2h-2zM840 211h2v2h-2zM844 207h2v2h-2zM846 209h2v2h-2zM844 209h2v2h-2zM834 228h2v2h-2zM836 222h2v2h-2zM833 229h2v2h-2zM837 218h2v2h-2zM835 219h2v2h-2zM832 233h2v2h-2zM836 233h2v2h-2zM832 233h2v2h-2zM836 239h2v2h-2zM841 240h2v2h-2zM840 239h2v2h-2zM840 250h2v2h-2zM842 254h2v2h-2zM841 248h2v2h-2zM841 245h2v2h-2zM840 246h2v2h-2zM842 257h2v2h-2zM839 263h2v2h-2zM844 257h2v2h-2zM836 265h2v2h-2zM841 261h2v2h-2zM832 270h2v2h-2zM830 271h2v2h-2zM838 266h2v2h-2zM822 284h2v2h-2zM827 276h2v2h-2zM820 283h2v2h-2zM827 279h2v2h-2zM822 284h2v2h-2zM822 283h2v2h-2zM825 280h2v2h-2zM820 288h2v2h-2zM816 296h2v2h-2zM817 300h2v2h-2zM817 293h2v2h-2zM819 291h2v2h-2zM814 299h2v2h-2zM813 314h2v2h-2zM815 313h2v2h-2zM812 317h2v2h-2zM811 320h2v2h-2zM811 322h2v2h-2zM812 320h2v2h-2zM814 307h2v2h-2zM814 320h2v2h-2zM824 337h2v2h-2zM820 331h2v2h-2zM824 337h2v2h-2zM821 339h2v2h-2zM823 337h2v2h-2zM816 329h2v2h-2zM815 326h2v2h-2zM823 339h2v2h-2zM828 353h2v2h-2zM825 362h2v2h-2zM828 352h2v2h-2zM828 344h2v2h-2zM823 344h2v2h-2zM826 355h2v2h-2zM827 352h2v2h-2zM826 354h2v2h-2zM825 358h2v2h-2zM828 357h2v2h-2zM824 379h2v2h-2zM824 382h2v2h-2zM828 375h2v2h-2zM826 386h2v2h-2zM829 377h2v2h-2zM828 369h2v2h-2zM827 366h2v2h-2zM827 378h2v2h-2zM827 366h2v2h-2zM830 365h2v2h-2zM846 263h2v2h-2zM849 269h2v2h-2zM841 263h2v2h-2zM845 267h2v2h-2zM849 274h2v2h-2zM846 268h2v2h-2zM850 285h2v2h-2zM854 284h2v2h-2zM848 281h2v2h-2zM845 306h2v2h-2zM851 295h2v2h-2zM853 298h2v2h-2zM847 300h2v2h-2zM851 288h2v2h-2zM854 289h2v2h-2zM848 307h2v2h-2zM843 309h2v2h-2zM836 314h2v2h-2zM842 316h2v2h-2zM842 315h2v2h-2zM843 312h2v2h-2zM840 313h2v2h-2zM840 321h2v2h-2zM835 330h2v2h-2zM832 341h2v2h-2zM835 337h2v2h-2zM831 344h2v2h-2zM831 345h2v2h-2zM930 295h2v2h-2zM925 296h2v2h-2zM934 292h2v2h-2zM941 289h2v2h-2zM938 290h2v2h-2zM927 296h2v2h-2zM937 291h2v2h-2zM934 293h2v2h-2zM940 289h2v2h-2zM914 308h2v2h-2zM918 303h2v2h-2zM916 304h2v2h-2zM919 302h2v2h-2zM919 303h2v2h-2zM923 300h2v2h-2zM918 301h2v2h-2zM931 318h2v2h-2zM931 323h2v2h-2zM934 326h2v2h-2zM935 319h2v2h-2zM944 333h2v2h-2zM946 336h2v2h-2zM941 328h2v2h-2zM942 333h2v2h-2zM942 332h2v2h-2zM890 325h2v2h-2zM888 324h2v2h-2zM873 330h2v2h-2zM880 330h2v2h-2zM869 333h2v2h-2zM876 333h2v2h-2zM885 328h2v2h-2zM862 346h2v2h-2zM859 346h2v2h-2zM866 350h2v2h-2zM869 354h2v2h-2zM862 351h2v2h-2zM864 350h2v2h-2zM861 349h2v2h-2zM881 361h2v2h-2zM879 362h2v2h-2zM813 289h2v2h-2zM825 299h2v2h-2zM820 286h2v2h-2zM817 296h2v2h-2zM840 303h2v2h-2zM820 298h2v2h-2zM829 296h2v2h-2zM838 297h2v2h-2zM853 299h2v2h-2zM837 299h2v2h-2zM846 301h2v2h-2zM845 299h2v2h-2zM860 290h2v2h-2zM858 283h2v2h-2zM855 288h2v2h-2zM848 278h2v2h-2zM856 286h2v2h-2zM1097 141h2v2h-2zM1090 168h2v2h-2zM1094 156h2v2h-2zM1092 166h2v2h-2zM1096 156h2v2h-2zM1093 155h2v2h-2zM1090 162h2v2h-2zM1093 159h2v2h-2zM1092 168h2v2h-2zM1094 152h2v2h-2zM1090 170h2v2h-2zM1094 147h2v2h-2zM1091 175h2v2h-2zM1091 198h2v2h-2zM1094 198h2v2h-2zM1091 174h2v2h-2zM1092 181h2v2h-2zM1088 176h2v2h-2zM1091 194h2v2h-2zM1090 187h2v2h-2zM1089 175h2v2h-2zM1088 173h2v2h-2zM1092 198h2v2h-2zM1089 178h2v2h-2zM1094 198h2v2h-2zM1095 203h2v2h-2zM1082 224h2v2h-2zM1090 204h2v2h-2zM1087 219h2v2h-2zM1091 208h2v2h-2zM1086 211h2v2h-2zM1084 218h2v2h-2zM1088 213h2v2h-2zM1085 224h2v2h-2zM1086 218h2v2h-2zM1082 231h2v2h-2zM1084 230h2v2h-2zM1083 242h2v2h-2zM1085 242h2v2h-2zM1086 237h2v2h-2zM1084 249h2v2h-2zM1085 232h2v2h-2zM1085 234h2v2h-2zM1083 244h2v2h-2zM1085 243h2v2h-2zM1084 254h2v2h-2zM1082 271h2v2h-2zM1080 270h2v2h-2zM1079 278h2v2h-2zM1084 260h2v2h-2zM1085 258h2v2h-2zM1084 258h2v2h-2zM1082 268h2v2h-2zM1084 265h2v2h-2zM1085 255h2v2h-2zM1079 278h2v2h-2zM1076 282h2v2h-2zM1078 282h2v2h-2zM1075 283h2v2h-2zM1075 280h2v2h-2zM1060 241h2v2h-2zM1063 242h2v2h-2zM1075 248h2v2h-2zM1072 244h2v2h-2zM1055 241h2v2h-2zM1082 257h2v2h-2zM1083 256h2v2h-2zM1081 254h2v2h-2zM749 229h2v2h-2zM744 225h2v2h-2zM743 236h2v2h-2zM743 237h2v2h-2zM740 242h2v2h-2zM739 245h2v2h-2zM737 249h2v2h-2zM744 242h2v2h-2zM733 254h2v2h-2zM734 252h2v2h-2zM731 251h2v2h-2zM1209 271h2v2h-2zM1202 276h2v2h-2zM1206 276h2v2h-2zM1207 271h2v2h-2zM1204 282h2v2h-2zM1217 273h2v2h-2zM1220 276h2v2h-2zM1219 268h2v2h-2zM1215 266h2v2h-2zM1226 262h2v2h-2zM1218 270h2v2h-2zM1216 273h2v2h-2zM1217 275h2v2h-2zM1230 259h2v2h-2zM1218 268h2v2h-2zM1231 265h2v2h-2zM1233 256h2v2h-2zM1233 251h2v2h-2zM1237 253h2v2h-2zM1230 272h2v2h-2zM1234 255h2v2h-2zM1200 288h2v2h-2zM1203 286h2v2h-2zM1197 286h2v2h-2zM1197 290h2v2h-2zM1189 285h2v2h-2zM1211 285h2v2h-2zM1213 285h2v2h-2zM1208 280h2v2h-2zM1209 288h2v2h-2zM1120 294h2v2h-2zM1116 294h2v2h-2zM1116 300h2v2h-2zM1116 295h2v2h-2zM1124 290h2v2h-2zM1120 299h2v2h-2zM1130 297h2v2h-2zM1128 299h2v2h-2zM1128 308h2v2h-2zM1122 293h2v2h-2zM1132 309h2v2h-2zM1126 300h2v2h-2zM1122 298h2v2h-2zM1122 296h2v2h-2zM1130 309h2v2h-2zM1132 308h2v2h-2zM1482 205h2v2h-2zM1532 198h2v2h-2zM1488 204h2v2h-2zM1504 201h2v2h-2zM1489 207h2v2h-2zM1509 203h2v2h-2zM1492 201h2v2h-2zM1478 205h2v2h-2zM1480 206h2v2h-2zM1513 201h2v2h-2zM1495 205h2v2h-2zM1503 202h2v2h-2zM1507 204h2v2h-2zM1508 205h2v2h-2zM1525 201h2v2h-2zM1508 203h2v2h-2zM1506 204h2v2h-2zM1511 203h2v2h-2zM1542 196h2v2h-2zM1554 200h2v2h-2zM1550 199h2v2h-2zM1564 199h2v2h-2zM1562 203h2v2h-2zM1556 198h2v2h-2zM1545 196h2v2h-2zM1564 200h2v2h-2zM1567 197h2v2h-2zM1570 192h2v2h-2zM1580 181h2v2h-2zM1575 184h2v2h-2zM1574 190h2v2h-2zM1578 182h2v2h-2zM1589 172h2v2h-2zM1584 175h2v2h-2zM1583 172h2v2h-2zM1583 178h2v2h-2zM1540 206h2v2h-2zM1539 218h2v2h-2zM1539 215h2v2h-2zM1543 215h2v2h-2zM1537 201h2v2h-2zM1539 210h2v2h-2zM1541 219h2v2h-2zM1543 221h2v2h-2zM1566 231h2v2h-2zM1565 222h2v2h-2zM1566 212h2v2h-2zM1563 206h2v2h-2zM1564 205h2v2h-2zM1566 203h2v2h-2zM1567 205h2v2h-2zM1565 228h2v2h-2zM1567 208h2v2h-2zM1564 220h2v2h-2zM1534 234h2v2h-2zM1511 234h2v2h-2zM1540 235h2v2h-2zM1491 234h2v2h-2zM1544 234h2v2h-2zM1505 233h2v2h-2zM1553 234h2v2h-2zM1517 235h2v2h-2zM1579 233h2v2h-2zM1487 232h2v2h-2zM1534 233h2v2h-2zM1510 235h2v2h-2zM1488 236h2v2h-2zM1559 233h2v2h-2zM1511 234h2v2h-2zM1567 235h2v2h-2zM1553 235h2v2h-2zM1579 235h2v2h-2zM1510 231h2v2h-2zM1562 238h2v2h-2zM1520 238h2v2h-2zM1550 233h2v2h-2zM1585 236h2v2h-2zM1559 234h2v2h-2zM1560 234h2v2h-2zM1507 234h2v2h-2zM1581 235h2v2h-2zM1497 234h2v2h-2zM1500 234h2v2h-2zM1556 233h2v2h-2zM1564 236h2v2h-2zM1554 147h2v2h-2zM1559 154h2v2h-2zM1558 153h2v2h-2zM1560 156h2v2h-2zM1569 161h2v2h-2zM1567 161h2v2h-2zM1561 156h2v2h-2zM1571 169h2v2h-2zM1570 166h2v2h-2zM1576 176h2v2h-2zM1577 178h2v2h-2zM1578 174h2v2h-2zM1597 153h2v2h-2zM1600 157h2v2h-2zM1605 159h2v2h-2zM1594 153h2v2h-2zM1602 157h2v2h-2zM1607 157h2v2h-2zM1605 158h2v2h-2zM1613 158h2v2h-2zM1620 156h2v2h-2zM1624 154h2v2h-2zM1617 152h2v2h-2zM1626 151h2v2h-2zM1592 196h2v2h-2zM1591 190h2v2h-2zM1592 195h2v2h-2zM1593 197h2v2h-2zM1597 204h2v2h-2zM1596 207h2v2h-2zM1598 206h2v2h-2zM1626 240h2v2h-2zM1615 235h2v2h-2zM1625 240h2v2h-2zM1628 244h2v2h-2zM1619 233h2v2h-2zM1632 248h2v2h-2zM1632 251h2v2h-2zM1635 255h2v2h-2zM1640 263h2v2h-2zM1628 249h2v2h-2zM1638 260h2v2h-2zM1632 248h2v2h-2zM1642 267h2v2h-2zM1646 264h2v2h-2zM1645 265h2v2h-2zM1666 184h2v2h-2zM1677 199h2v2h-2zM1674 194h2v2h-2zM1668 184h2v2h-2zM1676 198h2v2h-2zM1674 197h2v2h-2zM1669 189h2v2h-2zM1672 190h2v2h-2zM1686 229h2v2h-2zM1683 220h2v2h-2zM1688 228h2v2h-2zM1687 226h2v2h-2zM1685 222h2v2h-2zM1687 226h2v2h-2zM1689 237h2v2h-2zM1683 225h2v2h-2zM1683 221h2v2h-2zM1682 225h2v2h-2zM1692 245h2v2h-2zM1703 269h2v2h-2zM1696 252h2v2h-2zM1697 253h2v2h-2zM1695 252h2v2h-2zM1694 251h2v2h-2zM1701 272h2v2h-2zM1699 268h2v2h-2zM1692 241h2v2h-2zM1696 262h2v2h-2zM1694 247h2v2h-2zM1647 238h2v2h-2zM1641 243h2v2h-2zM1634 242h2v2h-2zM1651 241h2v2h-2zM1635 243h2v2h-2zM1630 243h2v2h-2zM1636 244h2v2h-2zM1664 237h2v2h-2zM1667 238h2v2h-2zM1658 236h2v2h-2zM1676 241h2v2h-2zM1671 239h2v2h-2zM1678 238h2v2h-2zM1658 240h2v2h-2zM1695 244h2v2h-2zM1698 243h2v2h-2zM1696 242h2v2h-2zM1695 241h2v2h-2zM1698 245h2v2h-2zM1691 240h2v2h-2zM1723 246h2v2h-2zM1718 246h2v2h-2zM1715 244h2v2h-2zM1642 290h2v2h-2zM1653 291h2v2h-2zM1641 289h2v2h-2zM1649 292h2v2h-2zM1654 292h2v2h-2zM1662 298h2v2h-2zM1662 298h2v2h-2zM1663 301h2v2h-2zM1666 301h2v2h-2zM1729 308h2v2h-2zM1725 310h2v2h-2zM1733 305h2v2h-2zM1725 308h2v2h-2zM1727 310h2v2h-2zM1729 309h2v2h-2zM1751 287h2v2h-2zM1740 297h2v2h-2zM1744 291h2v2h-2zM1735 296h2v2h-2zM1746 294h2v2h-2zM1736 302h2v2h-2zM1759 282h2v2h-2zM1762 281h2v2h-2zM1760 282h2v2h-2zM1762 286h2v2h-2zM1702 325h2v2h-2zM1711 324h2v2h-2zM1691 329h2v2h-2zM1694 328h2v2h-2zM1706 326h2v2h-2zM1703 326h2v2h-2zM1693 331h2v2h-2zM1691 333h2v2h-2zM1677 332h2v2h-2zM1688 333h2v2h-2zM1668 334h2v2h-2zM1681 334h2v2h-2zM1685 332h2v2h-2zM1690 331h2v2h-2zM1675 377h2v2h-2zM1679 357h2v2h-2zM1676 358h2v2h-2zM1678 353h2v2h-2zM1673 373h2v2h-2zM1674 367h2v2h-2zM1647 392h2v2h-2zM1653 385h2v2h-2zM1655 384h2v2h-2zM1664 379h2v2h-2zM1648 387h2v2h-2zM1661 380h2v2h-2zM1656 387h2v2h-2zM1661 379h2v2h-2zM1659 383h2v2h-2zM1735 192h2v2h-2zM1733 192h2v2h-2zM1808 181h2v2h-2zM1810 183h2v2h-2zM1806 184h2v2h-2zM1843 171h2v2h-2zM1845 163h2v2h-2zM1843 159h2v2h-2zM1840 160h2v2h-2zM1847 170h2v2h-2zM1840 184h2v2h-2zM1845 174h2v2h-2zM1841 183h2v2h-2zM1842 172h2v2h-2zM1844 172h2v2h-2zM1896 173h2v2h-2zM1896 184h2v2h-2zM1893 191h2v2h-2zM1900 167h2v2h-2zM1895 173h2v2h-2zM1889 197h2v2h-2zM1894 188h2v2h-2zM1898 171h2v2h-2zM1893 187h2v2h-2zM1903 173h2v2h-2zM1889 207h2v2h-2zM1885 213h2v2h-2zM1887 206h2v2h-2zM1893 202h2v2h-2zM1875 217h2v2h-2zM1870 221h2v2h-2zM1875 216h2v2h-2zM1880 216h2v2h-2zM1801 235h2v2h-2zM1808 234h2v2h-2zM1815 236h2v2h-2zM1807 236h2v2h-2zM1814 238h2v2h-2zM1833 233h2v2h-2zM1824 235h2v2h-2zM1840 232h2v2h-2zM1816 238h2v2h-2zM1840 230h2v2h-2zM1817 234h2v2h-2zM1832 233h2v2h-2zM1842 230h2v2h-2zM1848 242h2v2h-2zM1851 242h2v2h-2zM1844 236h2v2h-2zM1842 234h2v2h-2zM1806 303h2v2h-2zM1810 287h2v2h-2zM1809 286h2v2h-2zM1804 311h2v2h-2zM1810 281h2v2h-2zM1803 301h2v2h-2zM1801 308h2v2h-2zM1807 285h2v2h-2zM1803 304h2v2h-2zM1803 311h2v2h-2zM1801 321h2v2h-2zM1802 324h2v2h-2zM1802 322h2v2h-2zM1801 340h2v2h-2zM1800 332h2v2h-2zM1801 322h2v2h-2zM1806 323h2v2h-2zM1792 363h2v2h-2zM1793 362h2v2h-2zM1796 346h2v2h-2zM1791 360h2v2h-2zM1798 337h2v2h-2zM1793 345h2v2h-2zM1795 344h2v2h-2zM1788 365h2v2h-2zM1788 368h2v2h-2zM1780 376h2v2h-2zM1785 367h2v2h-2zM1777 380h2v2h-2zM1789 364h2v2h-2zM1782 379h2v2h-2zM1858 189h2v2h-2zM1862 193h2v2h-2zM1859 192h2v2h-2zM1856 189h2v2h-2zM1729 158h2v2h-2zM1726 156h2v2h-2zM1740 157h2v2h-2zM1745 153h2v2h-2zM1740 156h2v2h-2zM1731 154h2v2h-2zM1758 158h2v2h-2zM1765 159h2v2h-2zM1753 156h2v2h-2zM1754 156h2v2h-2zM1750 154h2v2h-2zM1746 153h2v2h-2zM1760 157h2v2h-2zM1783 163h2v2h-2zM1772 162h2v2h-2zM1777 163h2v2h-2zM1740 184h2v2h-2zM1741 184h2v2h-2zM1745 182h2v2h-2zM1745 184h2v2h-2zM1748 183h2v2h-2zM1755 180h2v2h-2zM1777 145h2v2h-2zM1798 141h2v2h-2zM1799 142h2v2h-2zM1802 141h2v2h-2zM1783 142h2v2h-2zM1789 143h2v2h-2zM1787 143h2v2h-2zM1802 138h2v2h-2zM1792 140h2v2h-2zM1805 201h2v2h-2zM1806 191h2v2h-2zM1807 195h2v2h-2zM1805 192h2v2h-2zM1459 265h2v2h-2zM1457 267h2v2h-2zM1458 264h2v2h-2zM1452 266h2v2h-2zM1481 250h2v2h-2zM1487 255h2v2h-2zM1477 247h2v2h-2zM1491 256h2v2h-2zM1482 248h2v2h-2zM1490 255h2v2h-2zM1485 253h2v2h-2zM1489 257h2v2h-2zM1476 249h2v2h-2zM1507 263h2v2h-2zM1511 264h2v2h-2zM1522 264h2v2h-2zM1524 264h2v2h-2zM1510 265h2v2h-2zM1506 268h2v2h-2zM1522 265h2v2h-2zM1525 271h2v2h-2zM1524 284h2v2h-2zM1524 280h2v2h-2zM1526 274h2v2h-2zM1525 289h2v2h-2zM1528 262h2v2h-2zM1527 276h2v2h-2zM1530 291h2v2h-2zM1532 298h2v2h-2zM1530 293h2v2h-2zM1528 293h2v2h-2zM1529 290h2v2h-2zM1530 296h2v2h-2zM1542 297h2v2h-2zM1548 304h2v2h-2zM1542 294h2v2h-2zM1552 312h2v2h-2zM1551 310h2v2h-2zM1542 302h2v2h-2zM1543 305h2v2h-2zM1542 300h2v2h-2zM1546 317h2v2h-2zM1550 314h2v2h-2zM1547 318h2v2h-2zM1546 315h2v2h-2zM1531 334h2v2h-2zM1531 325h2v2h-2zM1533 326h2v2h-2zM1536 328h2v2h-2zM1529 334h2v2h-2zM1533 347h2v2h-2zM1536 350h2v2h-2zM1528 341h2v2h-2zM1532 345h2v2h-2zM1531 345h2v2h-2zM1547 364h2v2h-2zM1540 355h2v2h-2zM1545 360h2v2h-2zM1544 361h2v2h-2zM1536 354h2v2h-2zM1579 258h2v2h-2zM1601 266h2v2h-2zM1578 260h2v2h-2zM1576 258h2v2h-2zM1589 260h2v2h-2zM1597 265h2v2h-2zM1595 266h2v2h-2zM1584 261h2v2h-2zM1577 256h2v2h-2zM1582 305h2v2h-2zM1578 301h2v2h-2zM1597 309h2v2h-2zM1585 304h2v2h-2zM1595 311h2v2h-2zM1595 310h2v2h-2zM1595 309h2v2h-2zM1557 328h2v2h-2zM1557 329h2v2h-2zM1560 328h2v2h-2zM1560 336h2v2h-2zM1552 341h2v2h-2zM1560 334h2v2h-2zM1498 317h2v2h-2zM1492 323h2v2h-2zM1500 315h2v2h-2zM1501 311h2v2h-2zM1500 313h2v2h-2zM1485 327h2v2h-2zM1483 327h2v2h-2zM1485 328h2v2h-2zM1483 328h2v2h-2zM1470 336h2v2h-2zM1483 331h2v2h-2zM1486 326h2v2h-2zM1537 383h2v2h-2zM1537 379h2v2h-2zM1536 383h2v2h-2zM1537 388h2v2h-2zM1451 371h2v2h-2zM1449 367h2v2h-2zM1450 367h2v2h-2zM1451 384h2v2h-2zM1455 379h2v2h-2zM1456 379h2v2h-2zM1451 380h2v2h-2zM621 446h2v2h-2zM616 431h2v2h-2zM618 444h2v2h-2zM616 436h2v2h-2zM617 433h2v2h-2zM618 445h2v2h-2zM619 450h2v2h-2zM616 428h2v2h-2zM616 434h2v2h-2zM614 430h2v2h-2zM617 430h2v2h-2zM613 470h2v2h-2zM613 468h2v2h-2zM612 470h2v2h-2zM621 454h2v2h-2zM620 456h2v2h-2zM613 474h2v2h-2zM614 471h2v2h-2zM616 460h2v2h-2zM611 477h2v2h-2zM609 475h2v2h-2zM605 474h2v2h-2zM650 448h2v2h-2zM644 446h2v2h-2zM649 439h2v2h-2zM647 452h2v2h-2zM649 449h2v2h-2zM647 450h2v2h-2zM647 446h2v2h-2zM650 446h2v2h-2zM647 453h2v2h-2zM634 472h2v2h-2zM639 470h2v2h-2zM642 462h2v2h-2zM630 477h2v2h-2zM641 462h2v2h-2zM638 467h2v2h-2zM643 463h2v2h-2zM643 465h2v2h-2zM642 462h2v2h-2zM643 464h2v2h-2zM626 491h2v2h-2zM632 482h2v2h-2zM628 480h2v2h-2zM624 496h2v2h-2zM625 494h2v2h-2zM632 481h2v2h-2zM624 495h2v2h-2zM627 488h2v2h-2zM630 480h2v2h-2zM627 491h2v2h-2zM608 519h2v2h-2zM609 516h2v2h-2zM615 513h2v2h-2zM612 511h2v2h-2zM613 510h2v2h-2zM615 504h2v2h-2zM606 516h2v2h-2zM604 521h2v2h-2zM603 526h2v2h-2zM604 522h2v2h-2zM601 529h2v2h-2zM604 523h2v2h-2zM601 533h2v2h-2zM597 533h2v2h-2zM601 525h2v2h-2zM590 545h2v2h-2zM590 544h2v2h-2zM593 541h2v2h-2zM589 546h2v2h-2zM593 540h2v2h-2zM588 550h2v2h-2zM587 551h2v2h-2zM630 522h2v2h-2zM625 519h2v2h-2zM627 524h2v2h-2zM620 513h2v2h-2zM619 507h2v2h-2zM625 515h2v2h-2zM621 511h2v2h-2zM623 515h2v2h-2zM620 510h2v2h-2zM638 524h2v2h-2zM634 524h2v2h-2zM631 523h2v2h-2zM632 523h2v2h-2zM532 556h2v2h-2zM534 554h2v2h-2zM528 563h2v2h-2zM535 565h2v2h-2zM534 562h2v2h-2zM535 557h2v2h-2zM532 556h2v2h-2zM532 562h2v2h-2zM535 553h2v2h-2zM530 575h2v2h-2zM533 576h2v2h-2zM529 588h2v2h-2zM533 591h2v2h-2zM531 573h2v2h-2zM533 589h2v2h-2zM534 585h2v2h-2zM530 568h2v2h-2zM532 580h2v2h-2zM532 589h2v2h-2zM529 597h2v2h-2zM530 605h2v2h-2zM532 594h2v2h-2zM529 607h2v2h-2zM532 603h2v2h-2zM529 602h2v2h-2zM529 613h2v2h-2zM529 595h2v2h-2zM529 610h2v2h-2zM517 627h2v2h-2zM523 625h2v2h-2zM524 620h2v2h-2zM526 617h2v2h-2zM516 630h2v2h-2zM524 619h2v2h-2zM519 626h2v2h-2zM526 614h2v2h-2zM511 634h2v2h-2zM516 635h2v2h-2zM512 639h2v2h-2zM511 636h2v2h-2zM506 651h2v2h-2zM510 640h2v2h-2zM506 646h2v2h-2zM511 642h2v2h-2zM503 664h2v2h-2zM504 654h2v2h-2zM502 659h2v2h-2zM502 661h2v2h-2zM501 661h2v2h-2zM502 660h2v2h-2zM527 568h2v2h-2zM521 566h2v2h-2zM532 568h2v2h-2zM526 568h2v2h-2zM529 566h2v2h-2zM546 572h2v2h-2zM538 569h2v2h-2zM539 568h2v2h-2zM541 570h2v2h-2zM519 567h2v2h-2zM528 568h2v2h-2zM525 570h2v2h-2zM774 468h2v2h-2zM775 474h2v2h-2zM774 463h2v2h-2zM776 477h2v2h-2zM772 482h2v2h-2zM772 466h2v2h-2zM774 476h2v2h-2zM774 467h2v2h-2zM773 470h2v2h-2zM842 428h2v2h-2zM838 441h2v2h-2zM839 441h2v2h-2zM844 426h2v2h-2zM840 447h2v2h-2zM839 442h2v2h-2zM843 432h2v2h-2zM843 427h2v2h-2zM715 499h2v2h-2zM715 501h2v2h-2zM716 505h2v2h-2zM716 502h2v2h-2zM717 503h2v2h-2zM713 496h2v2h-2zM717 510h2v2h-2zM718 519h2v2h-2zM720 529h2v2h-2zM716 509h2v2h-2zM713 508h2v2h-2zM717 510h2v2h-2zM717 512h2v2h-2zM720 526h2v2h-2zM894 572h2v2h-2zM892 564h2v2h-2zM893 569h2v2h-2zM896 572h2v2h-2zM890 557h2v2h-2zM896 571h2v2h-2zM895 562h2v2h-2zM893 567h2v2h-2zM891 561h2v2h-2zM891 558h2v2h-2zM892 561h2v2h-2zM894 568h2v2h-2zM894 572h2v2h-2zM903 583h2v2h-2zM900 578h2v2h-2zM901 580h2v2h-2zM901 579h2v2h-2zM903 585h2v2h-2zM905 585h2v2h-2zM905 585h2v2h-2zM896 573h2v2h-2zM905 585h2v2h-2zM897 575h2v2h-2zM894 575h2v2h-2zM905 579h2v2h-2zM896 575h2v2h-2zM906 597h2v2h-2zM904 589h2v2h-2zM906 585h2v2h-2zM906 601h2v2h-2zM904 587h2v2h-2zM906 598h2v2h-2zM906 594h2v2h-2zM906 593h2v2h-2zM907 588h2v2h-2zM905 598h2v2h-2zM905 589h2v2h-2zM904 594h2v2h-2zM907 591h2v2h-2zM904 596h2v2h-2zM902 612h2v2h-2zM899 613h2v2h-2zM903 608h2v2h-2zM902 608h2v2h-2zM899 617h2v2h-2zM898 618h2v2h-2zM902 608h2v2h-2zM905 602h2v2h-2zM900 616h2v2h-2zM902 606h2v2h-2zM903 607h2v2h-2zM900 612h2v2h-2zM901 611h2v2h-2zM890 624h2v2h-2zM887 627h2v2h-2zM889 624h2v2h-2zM889 625h2v2h-2zM890 627h2v2h-2zM891 621h2v2h-2zM892 624h2v2h-2zM884 628h2v2h-2zM891 623h2v2h-2zM896 618h2v2h-2zM891 623h2v2h-2zM888 628h2v2h-2zM887 627h2v2h-2zM896 619h2v2h-2zM1297 407h2v2h-2zM1296 411h2v2h-2zM1284 415h2v2h-2zM1280 420h2v2h-2zM1282 417h2v2h-2zM1265 438h2v2h-2zM1267 434h2v2h-2zM1269 432h2v2h-2zM1256 442h2v2h-2zM1219 499h2v2h-2zM1219 490h2v2h-2zM1204 508h2v2h-2zM1200 516h2v2h-2zM1201 514h2v2h-2zM1203 510h2v2h-2zM1130 613h2v2h-2zM1133 607h2v2h-2zM1130 612h2v2h-2zM1306 610h2v2h-2zM1305 613h2v2h-2zM1305 619h2v2h-2zM1305 614h2v2h-2zM1263 631h2v2h-2zM1264 632h2v2h-2zM1156 551h2v2h-2zM1157 555h2v2h-2zM1166 536h2v2h-2zM1156 559h2v2h-2zM1167 545h2v2h-2zM1152 575h2v2h-2zM1138 604h2v2h-2zM1131 612h2v2h-2zM1129 612h2v2h-2zM1124 627h2v2h-2zM1147 578h2v2h-2zM1154 567h2v2h-2zM1144 585h2v2h-2zM1124 621h2v2h-2zM1142 594h2v2h-2zM1128 619h2v2h-2zM1254 597h2v2h-2zM1245 603h2v2h-2zM1246 600h2v2h-2zM1241 610h2v2h-2zM1248 602h2v2h-2zM1222 628h2v2h-2zM1228 624h2v2h-2zM1228 615h2v2h-2zM1219 630h2v2h-2zM1227 623h2v2h-2zM1226 623h2v2h-2zM1510 563h2v2h-2zM1499 547h2v2h-2zM1505 561h2v2h-2zM1505 559h2v2h-2zM1510 564h2v2h-2zM1499 549h2v2h-2zM1508 560h2v2h-2zM1516 566h2v2h-2zM1517 563h2v2h-2zM1520 564h2v2h-2zM1525 561h2v2h-2zM1524 558h2v2h-2zM1532 555h2v2h-2zM1524 556h2v2h-2zM1527 558h2v2h-2zM1485 589h2v2h-2zM1498 577h2v2h-2zM1490 582h2v2h-2zM1482 593h2v2h-2zM1477 594h2v2h-2zM1493 582h2v2h-2zM1489 584h2v2h-2zM1490 583h2v2h-2zM1488 586h2v2h-2zM1497 578h2v2h-2zM1470 599h2v2h-2zM1461 606h2v2h-2zM1451 613h2v2h-2zM1466 602h2v2h-2zM1458 612h2v2h-2zM1469 601h2v2h-2zM1470 596h2v2h-2zM1460 607h2v2h-2zM1464 606h2v2h-2zM1446 616h2v2h-2zM1442 620h2v2h-2zM1448 617h2v2h-2zM1434 628h2v2h-2zM1450 619h2v2h-2zM1446 617h2v2h-2zM1447 617h2v2h-2zM1413 641h2v2h-2zM1423 636h2v2h-2zM1426 637h2v2h-2zM1415 641h2v2h-2zM1399 649h2v2h-2zM1412 641h2v2h-2zM1408 646h2v2h-2zM1428 634h2v2h-2zM1422 637h2v2h-2zM1413 644h2v2h-2zM1369 655h2v2h-2zM1387 649h2v2h-2zM1397 648h2v2h-2zM1366 658h2v2h-2zM1382 653h2v2h-2zM1361 657h2v2h-2zM1397 653h2v2h-2zM1374 656h2v2h-2zM1395 652h2v2h-2zM1392 651h2v2h-2zM1367 656h2v2h-2zM1371 654h2v2h-2zM1522 614h2v2h-2zM1524 614h2v2h-2zM1522 613h2v2h-2zM1523 614h2v2h-2zM1518 601h2v2h-2zM1534 612h2v2h-2zM1532 614h2v2h-2zM1534 612h2v2h-2zM1493 616h2v2h-2zM1498 633h2v2h-2zM1494 630h2v2h-2zM1492 616h2v2h-2zM1488 615h2v2h-2zM1493 623h2v2h-2zM1596 531h2v2h-2zM1600 533h2v2h-2zM1580 525h2v2h-2zM1584 528h2v2h-2zM1598 533h2v2h-2zM1582 529h2v2h-2zM1600 541h2v2h-2zM1601 542h2v2h-2zM1601 548h2v2h-2zM1600 538h2v2h-2zM1600 540h2v2h-2zM1616 540h2v2h-2zM1622 547h2v2h-2zM1621 547h2v2h-2zM1718 590h2v2h-2zM1710 594h2v2h-2zM1716 593h2v2h-2zM1721 594h2v2h-2zM1724 595h2v2h-2zM1729 597h2v2h-2zM1728 598h2v2h-2zM1732 603h2v2h-2zM1736 602h2v2h-2zM1652 421h2v2h-2zM1632 450h2v2h-2zM1639 440h2v2h-2zM1641 439h2v2h-2zM1647 430h2v2h-2zM1635 443h2v2h-2zM1645 430h2v2h-2zM1639 441h2v2h-2zM1650 432h2v2h-2zM1636 448h2v2h-2zM1643 437h2v2h-2zM1624 465h2v2h-2zM1624 468h2v2h-2zM1630 459h2v2h-2zM1624 466h2v2h-2zM1622 469h2v2h-2zM1631 457h2v2h-2zM1625 467h2v2h-2zM1618 473h2v2h-2zM1621 473h2v2h-2zM1621 476h2v2h-2zM1622 476h2v2h-2zM1607 489h2v2h-2zM1607 487h2v2h-2zM1610 487h2v2h-2zM1605 487h2v2h-2zM1609 485h2v2h-2zM1592 489h2v2h-2zM1607 489h2v2h-2zM1602 432h2v2h-2zM1604 437h2v2h-2zM1759 526h2v2h-2zM1750 529h2v2h-2zM1732 525h2v2h-2zM1743 526h2v2h-2zM1740 527h2v2h-2zM1754 525h2v2h-2zM1757 527h2v2h-2zM1753 526h2v2h-2zM1753 525h2v2h-2zM1791 447h2v2h-2zM1779 433h2v2h-2zM1775 428h2v2h-2zM1780 435h2v2h-2zM1773 428h2v2h-2zM1776 435h2v2h-2zM1784 440h2v2h-2zM1782 442h2v2h-2zM1788 443h2v2h-2zM1785 440h2v2h-2zM1740 473h2v2h-2zM1736 470h2v2h-2zM1739 455h2v2h-2zM1738 469h2v2h-2zM1739 467h2v2h-2zM1740 460h2v2h-2zM1521 418h2v2h-2zM1517 420h2v2h-2zM1543 420h2v2h-2zM1545 417h2v2h-2zM1545 409h2v2h-2zM1546 420h2v2h-2zM1551 445h2v2h-2zM1552 446h2v2h-2zM1552 443h2v2h-2zM1554 454h2v2h-2zM1560 449h2v2h-2zM1556 454h2v2h-2zM1576 556h2v2h-2zM1572 556h2v2h-2zM1576 551h2v2h-2zM1579 560h2v2h-2zM1591 558h2v2h-2zM1579 562h2v2h-2zM1586 559h2v2h-2zM1773 430h2v2h-2zM1774 427h2v2h-2zM1780 438h2v2h-2zM1774 431h2v2h-2zM1788 442h2v2h-2zM1765 524h2v2h-2zM1755 526h2v2h-2zM1727 525h2v2h-2zM1750 527h2v2h-2zM1728 523h2v2h-2zM1738 527h2v2h-2zM1713 591h2v2h-2zM1726 597h2v2h-2zM1720 591h2v2h-2zM1737 603h2v2h-2zM1738 461h2v2h-2zM1734 446h2v2h-2zM1736 451h2v2h-2zM1739 477h2v2h-2zM1738 484h2v2h-2zM1738 456h2v2h-2zM1737 448h2v2h-2zM524 619h2v2h-2zM522 620h2v2h-2zM531 609h2v2h-2zM528 614h2v2h-2zM518 624h2v2h-2zM528 617h2v2h-2zM528 617h2v2h-2zM529 614h2v2h-2zM522 616h2v2h-2zM529 618h2v2h-2zM527 611h2v2h-2zM523 619h2v2h-2zM513 633h2v2h-2zM521 626h2v2h-2zM520 632h2v2h-2zM515 631h2v2h-2zM510 635h2v2h-2zM524 629h2v2h-2zM513 637h2v2h-2zM519 628h2v2h-2zM516 634h2v2h-2zM511 640h2v2h-2zM520 624h2v2h-2zM510 638h2v2h-2zM505 656h2v2h-2zM510 638h2v2h-2zM507 656h2v2h-2zM507 648h2v2h-2zM502 649h2v2h-2zM512 642h2v2h-2zM508 645h2v2h-2zM508 654h2v2h-2zM503 654h2v2h-2zM506 653h2v2h-2zM512 642h2v2h-2zM510 648h2v2h-2zM497 672h2v2h-2zM499 667h2v2h-2zM497 657h2v2h-2zM498 671h2v2h-2zM501 657h2v2h-2zM497 667h2v2h-2zM495 665h2v2h-2zM498 666h2v2h-2zM496 672h2v2h-2zM499 668h2v2h-2zM498 677h2v2h-2zM499 664h2v2h-2zM493 684h2v2h-2zM489 679h2v2h-2zM496 690h2v2h-2zM496 696h2v2h-2zM494 684h2v2h-2zM495 680h2v2h-2zM491 701h2v2h-2zM496 692h2v2h-2zM497 691h2v2h-2zM493 681h2v2h-2zM495 688h2v2h-2zM492 686h2v2h-2zM489 701h2v2h-2zM494 692h2v2h-2zM493 685h2v2h-2zM495 679h2v2h-2zM501 722h2v2h-2zM496 711h2v2h-2zM498 717h2v2h-2zM492 699h2v2h-2zM497 705h2v2h-2zM495 710h2v2h-2zM497 715h2v2h-2zM495 702h2v2h-2zM495 704h2v2h-2zM499 718h2v2h-2zM499 716h2v2h-2zM492 708h2v2h-2zM496 708h2v2h-2zM497 722h2v2h-2zM501 719h2v2h-2zM507 726h2v2h-2zM503 723h2v2h-2zM508 732h2v2h-2zM504 725h2v2h-2zM506 725h2v2h-2zM501 722h2v2h-2zM502 722h2v2h-2zM476 703h2v2h-2zM474 687h2v2h-2zM473 700h2v2h-2zM837 700h2v2h-2zM832 707h2v2h-2zM833 705h2v2h-2zM839 693h2v2h-2zM832 702h2v2h-2zM841 687h2v2h-2zM841 693h2v2h-2zM839 691h2v2h-2zM842 691h2v2h-2zM840 693h2v2h-2zM842 691h2v2h-2zM838 697h2v2h-2zM842 691h2v2h-2zM838 698h2v2h-2zM834 709h2v2h-2zM836 700h2v2h-2zM832 707h2v2h-2zM826 716h2v2h-2zM817 729h2v2h-2zM824 720h2v2h-2zM825 721h2v2h-2zM820 722h2v2h-2zM817 726h2v2h-2zM821 720h2v2h-2zM824 716h2v2h-2zM818 728h2v2h-2zM811 731h2v2h-2zM823 719h2v2h-2zM823 714h2v2h-2zM828 712h2v2h-2zM822 722h2v2h-2zM813 727h2v2h-2zM822 720h2v2h-2zM811 735h2v2h-2zM821 722h2v2h-2zM810 734h2v2h-2zM815 735h2v2h-2zM821 724h2v2h-2zM811 745h2v2h-2zM814 755h2v2h-2zM811 740h2v2h-2zM813 755h2v2h-2zM813 751h2v2h-2zM813 744h2v2h-2zM812 741h2v2h-2zM813 752h2v2h-2zM812 743h2v2h-2zM810 750h2v2h-2zM815 753h2v2h-2zM812 743h2v2h-2zM811 736h2v2h-2zM810 736h2v2h-2zM816 763h2v2h-2zM814 749h2v2h-2zM813 755h2v2h-2zM810 741h2v2h-2zM816 757h2v2h-2zM813 742h2v2h-2zM804 778h2v2h-2zM810 771h2v2h-2zM804 775h2v2h-2zM799 779h2v2h-2zM802 778h2v2h-2zM805 773h2v2h-2zM803 781h2v2h-2zM799 782h2v2h-2zM796 785h2v2h-2zM796 784h2v2h-2zM799 781h2v2h-2zM800 781h2v2h-2zM811 770h2v2h-2zM811 768h2v2h-2zM811 765h2v2h-2zM802 778h2v2h-2zM807 775h2v2h-2zM814 765h2v2h-2zM794 795h2v2h-2zM788 807h2v2h-2zM790 804h2v2h-2zM789 807h2v2h-2zM787 806h2v2h-2zM788 809h2v2h-2zM793 785h2v2h-2zM793 793h2v2h-2zM794 790h2v2h-2zM793 793h2v2h-2zM788 812h2v2h-2zM789 811h2v2h-2zM791 794h2v2h-2zM791 797h2v2h-2zM795 787h2v2h-2zM793 786h2v2h-2zM794 790h2v2h-2zM792 794h2v2h-2zM788 810h2v2h-2zM786 814h2v2h-2zM782 829h2v2h-2zM783 829h2v2h-2zM785 814h2v2h-2zM782 829h2v2h-2zM782 826h2v2h-2zM786 816h2v2h-2zM783 826h2v2h-2zM782 821h2v2h-2zM787 812h2v2h-2zM784 817h2v2h-2zM784 824h2v2h-2zM785 818h2v2h-2zM787 818h2v2h-2zM771 844h2v2h-2zM772 847h2v2h-2zM774 846h2v2h-2zM780 834h2v2h-2zM781 834h2v2h-2zM776 841h2v2h-2zM774 841h2v2h-2zM771 845h2v2h-2zM780 835h2v2h-2zM775 843h2v2h-2zM777 838h2v2h-2zM773 844h2v2h-2zM778 839h2v2h-2zM903 607h2v2h-2zM902 606h2v2h-2zM898 619h2v2h-2zM901 612h2v2h-2zM904 606h2v2h-2zM903 614h2v2h-2zM897 621h2v2h-2zM893 621h2v2h-2zM897 621h2v2h-2zM890 623h2v2h-2zM895 620h2v2h-2zM1132 610h2v2h-2zM1131 618h2v2h-2zM1133 612h2v2h-2zM1153 688h2v2h-2zM1149 686h2v2h-2zM1151 694h2v2h-2zM1152 698h2v2h-2zM1151 687h2v2h-2zM1122 748h2v2h-2zM1120 752h2v2h-2zM1105 763h2v2h-2zM1113 755h2v2h-2zM1111 760h2v2h-2zM1111 758h2v2h-2zM1115 754h2v2h-2zM1114 757h2v2h-2zM1112 757h2v2h-2zM1097 766h2v2h-2zM1091 770h2v2h-2zM1098 766h2v2h-2zM1082 772h2v2h-2zM1086 775h2v2h-2zM1094 768h2v2h-2zM1074 800h2v2h-2zM1075 794h2v2h-2zM1081 802h2v2h-2zM1075 807h2v2h-2zM1081 799h2v2h-2zM1076 808h2v2h-2zM1077 809h2v2h-2zM1016 812h2v2h-2zM1018 811h2v2h-2zM1015 811h2v2h-2zM1052 820h2v2h-2zM1049 813h2v2h-2zM1044 814h2v2h-2zM1050 816h2v2h-2zM1368 655h2v2h-2zM1360 656h2v2h-2zM1369 656h2v2h-2zM1377 654h2v2h-2zM1365 659h2v2h-2zM1376 658h2v2h-2zM1380 654h2v2h-2zM1397 651h2v2h-2zM1394 649h2v2h-2zM1389 655h2v2h-2zM1401 653h2v2h-2zM1403 649h2v2h-2zM1399 650h2v2h-2zM1410 649h2v2h-2zM1407 647h2v2h-2zM1421 647h2v2h-2zM1423 640h2v2h-2zM1410 646h2v2h-2zM1421 642h2v2h-2zM1432 629h2v2h-2zM1431 632h2v2h-2zM1429 628h2v2h-2zM1431 635h2v2h-2zM1445 616h2v2h-2zM1437 625h2v2h-2zM1441 620h2v2h-2zM1431 629h2v2h-2zM1446 617h2v2h-2zM1442 622h2v2h-2zM1464 605h2v2h-2zM1461 603h2v2h-2zM1460 608h2v2h-2zM1467 604h2v2h-2zM1457 608h2v2h-2zM1489 613h2v2h-2zM1484 607h2v2h-2zM1498 627h2v2h-2zM1500 628h2v2h-2zM1497 632h2v2h-2zM1519 609h2v2h-2zM1519 610h2v2h-2zM1518 615h2v2h-2zM1524 613h2v2h-2zM1517 608h2v2h-2zM1520 609h2v2h-2zM1489 675h2v2h-2zM1494 668h2v2h-2zM1498 668h2v2h-2zM1497 669h2v2h-2zM1491 673h2v2h-2zM1473 687h2v2h-2zM1483 678h2v2h-2zM1478 684h2v2h-2zM1485 677h2v2h-2zM1479 681h2v2h-2zM1472 686h2v2h-2zM1549 686h2v2h-2zM1554 689h2v2h-2zM1548 686h2v2h-2zM1554 698h2v2h-2zM1554 696h2v2h-2zM1488 722h2v2h-2zM1498 720h2v2h-2zM1488 723h2v2h-2zM1493 721h2v2h-2zM1500 720h2v2h-2zM1483 723h2v2h-2zM1509 728h2v2h-2zM1503 721h2v2h-2zM1511 725h2v2h-2zM1507 724h2v2h-2zM1521 727h2v2h-2zM1520 726h2v2h-2zM1513 728h2v2h-2zM1530 716h2v2h-2zM1523 725h2v2h-2zM1531 713h2v2h-2zM1525 725h2v2h-2zM1532 714h2v2h-2zM1533 710h2v2h-2zM1499 748h2v2h-2zM1487 754h2v2h-2zM1501 744h2v2h-2zM1493 752h2v2h-2zM1494 751h2v2h-2zM1489 751h2v2h-2zM1478 772h2v2h-2zM1486 762h2v2h-2zM1478 773h2v2h-2zM1484 760h2v2h-2zM1488 753h2v2h-2zM1485 765h2v2h-2zM1560 657h2v2h-2zM1440 724h2v2h-2zM1462 704h2v2h-2zM1013 807h2v2h-2zM1022 800h2v2h-2zM1023 803h2v2h-2zM1014 805h2v2h-2zM1024 812h2v2h-2zM1022 811h2v2h-2zM1025 802h2v2h-2zM1072 795h2v2h-2zM1078 800h2v2h-2zM1082 802h2v2h-2zM1079 803h2v2h-2zM1073 811h2v2h-2zM1078 801h2v2h-2zM1041 815h2v2h-2zM1044 815h2v2h-2zM1050 814h2v2h-2zM1158 812h2v2h-2zM1159 810h2v2h-2zM1168 812h2v2h-2zM1168 812h2v2h-2zM1162 810h2v2h-2zM1182 803h2v2h-2zM1173 808h2v2h-2zM1176 808h2v2h-2zM1181 808h2v2h-2zM1219 823h2v2h-2zM1216 816h2v2h-2zM1168 869h2v2h-2zM1167 867h2v2h-2zM1166 868h2v2h-2zM1231 851h2v2h-2zM1237 858h2v2h-2zM1232 851h2v2h-2zM1240 854h2v2h-2zM1257 871h2v2h-2zM1258 866h2v2h-2zM1257 873h2v2h-2zM1197 879h2v2h-2zM1196 887h2v2h-2zM1596 891h2v2h-2zM1592 890h2v2h-2zM1603 896h2v2h-2zM1611 901h2v2h-2zM1612 904h2v2h-2zM1616 904h2v2h-2zM1614 904h2v2h-2zM1622 913h2v2h-2zM1617 909h2v2h-2zM1628 920h2v2h-2zM1624 914h2v2h-2zM1627 919h2v2h-2zM1622 914h2v2h-2zM1634 935h2v2h-2zM1618 906h2v2h-2zM1619 910h2v2h-2zM1631 927h2v2h-2zM1645 943h2v2h-2zM1642 941h2v2h-2zM1640 938h2v2h-2zM1642 989h2v2h-2zM1641 990h2v2h-2zM1628 1009h2v2h-2zM1627 1019h2v2h-2zM1628 1011h2v2h-2zM1646 839h2v2h-2zM1547 837h2v2h-2zM1545 841h2v2h-2zM1547 833h2v2h-2zM795 800h2v2h-2zM788 804h2v2h-2zM792 792h2v2h-2zM793 796h2v2h-2zM793 794h2v2h-2zM791 799h2v2h-2zM790 798h2v2h-2zM791 797h2v2h-2zM789 807h2v2h-2zM786 818h2v2h-2zM790 810h2v2h-2zM787 813h2v2h-2zM788 806h2v2h-2zM784 812h2v2h-2zM787 814h2v2h-2zM784 821h2v2h-2zM779 832h2v2h-2zM782 828h2v2h-2zM783 823h2v2h-2zM778 835h2v2h-2zM784 822h2v2h-2zM778 835h2v2h-2zM782 832h2v2h-2zM784 827h2v2h-2zM779 833h2v2h-2zM778 833h2v2h-2zM777 840h2v2h-2zM774 842h2v2h-2zM775 835h2v2h-2zM774 846h2v2h-2zM773 843h2v2h-2zM774 845h2v2h-2zM775 846h2v2h-2zM775 840h2v2h-2zM775 840h2v2h-2zM765 873h2v2h-2zM765 870h2v2h-2zM768 865h2v2h-2zM762 866h2v2h-2zM767 852h2v2h-2zM767 856h2v2h-2zM766 864h2v2h-2zM764 869h2v2h-2zM768 859h2v2h-2zM770 855h2v2h-2zM798 895h2v2h-2zM1067 375h2v2h-2zM1058 379h2v2h-2zM1048 385h2v2h-2zM1068 379h2v2h-2zM1067 375h2v2h-2zM1066 371h2v2h-2zM1062 381h2v2h-2zM1059 381h2v2h-2zM1059 378h2v2h-2zM1053 380h2v2h-2zM1058 378h2v2h-2zM1060 382h2v2h-2zM1065 375h2v2h-2zM1057 380h2v2h-2zM1057 382h2v2h-2zM1065 375h2v2h-2zM1065 379h2v2h-2zM1057 382h2v2h-2zM1065 375h2v2h-2zM1055 378h2v2h-2zM1061 375h2v2h-2zM1057 381h2v2h-2zM1053 382h2v2h-2zM1067 377h2v2h-2zM1054 382h2v2h-2zM1066 374h2v2h-2zM1057 382h2v2h-2zM1067 375h2v2h-2zM1085 367h2v2h-2zM1078 372h2v2h-2zM1072 378h2v2h-2zM1085 370h2v2h-2zM1087 367h2v2h-2zM1085 368h2v2h-2zM1086 367h2v2h-2zM1082 369h2v2h-2zM1078 371h2v2h-2zM1078 369h2v2h-2zM1083 367h2v2h-2zM1069 372h2v2h-2zM1077 376h2v2h-2zM1088 369h2v2h-2zM1081 370h2v2h-2zM1075 370h2v2h-2zM1081 371h2v2h-2zM1075 373h2v2h-2zM1092 370h2v2h-2zM1076 371h2v2h-2zM1081 370h2v2h-2zM1087 366h2v2h-2zM1080 368h2v2h-2zM1070 375h2v2h-2zM1083 365h2v2h-2zM1078 372h2v2h-2zM1072 377h2v2h-2zM1080 371h2v2h-2zM1079 371h2v2h-2zM1093 365h2v2h-2zM1097 361h2v2h-2zM1098 358h2v2h-2zM1091 363h2v2h-2zM1098 361h2v2h-2zM1106 359h2v2h-2zM1101 359h2v2h-2zM1094 364h2v2h-2zM1091 362h2v2h-2zM1095 366h2v2h-2zM1092 365h2v2h-2zM1096 363h2v2h-2zM1102 357h2v2h-2zM1099 365h2v2h-2zM1100 359h2v2h-2zM1106 359h2v2h-2zM1108 354h2v2h-2zM1099 361h2v2h-2zM1092 361h2v2h-2zM1095 362h2v2h-2zM1103 362h2v2h-2zM1095 362h2v2h-2zM1099 360h2v2h-2zM1095 360h2v2h-2zM1103 357h2v2h-2zM1091 364h2v2h-2zM1101 358h2v2h-2zM1103 360h2v2h-2zM1105 361h2v2h-2zM1055 381h2v2h-2zM1050 397h2v2h-2zM1051 383h2v2h-2zM1052 381h2v2h-2zM1049 393h2v2h-2zM1051 400h2v2h-2zM1052 388h2v2h-2zM1055 408h2v2h-2zM1053 409h2v2h-2zM1056 408h2v2h-2zM1055 422h2v2h-2zM1052 425h2v2h-2zM1052 420h2v2h-2zM1055 406h2v2h-2zM1053 416h2v2h-2zM1049 420h2v2h-2zM1054 419h2v2h-2zM1050 425h2v2h-2zM1049 426h2v2h-2zM1051 433h2v2h-2zM1046 429h2v2h-2zM1052 422h2v2h-2zM1043 437h2v2h-2zM1049 426h2v2h-2zM1047 430h2v2h-2zM1031 452h2v2h-2zM1036 452h2v2h-2zM1039 442h2v2h-2zM1038 440h2v2h-2zM1037 442h2v2h-2zM1042 444h2v2h-2zM1041 439h2v2h-2zM1036 446h2v2h-2zM1034 453h2v2h-2zM1000 422h2v2h-2zM999 417h2v2h-2zM1002 421h2v2h-2zM1002 424h2v2h-2zM1001 427h2v2h-2zM1000 429h2v2h-2zM996 433h2v2h-2zM998 433h2v2h-2zM993 440h2v2h-2zM993 436h2v2h-2zM1001 429h2v2h-2zM996 439h2v2h-2zM994 437h2v2h-2zM991 438h2v2h-2zM990 441h2v2h-2zM995 438h2v2h-2zM993 441h2v2h-2zM995 444h2v2h-2zM992 445h2v2h-2zM970 467h2v2h-2zM970 467h2v2h-2zM972 471h2v2h-2zM969 475h2v2h-2zM970 463h2v2h-2zM966 478h2v2h-2zM971 478h2v2h-2zM970 484h2v2h-2zM977 488h2v2h-2zM974 481h2v2h-2zM974 485h2v2h-2zM975 487h2v2h-2zM980 489h2v2h-2zM979 488h2v2h-2zM987 487h2v2h-2zM988 491h2v2h-2zM991 489h2v2h-2zM988 488h2v2h-2zM979 491h2v2h-2zM988 491h2v2h-2zM989 493h2v2h-2zM995 486h2v2h-2zM996 488h2v2h-2zM1010 481h2v2h-2zM1000 488h2v2h-2zM1000 486h2v2h-2zM1000 490h2v2h-2zM998 487h2v2h-2zM1006 483h2v2h-2zM997 476h2v2h-2zM997 470h2v2h-2zM998 470h2v2h-2zM997 469h2v2h-2zM931 500h2v2h-2zM950 485h2v2h-2zM941 493h2v2h-2zM940 494h2v2h-2zM942 492h2v2h-2zM950 487h2v2h-2zM946 490h2v2h-2zM932 500h2v2h-2zM933 501h2v2h-2zM933 503h2v2h-2zM934 498h2v2h-2zM935 502h2v2h-2zM931 501h2v2h-2zM962 491h2v2h-2zM964 490h2v2h-2zM958 487h2v2h-2zM953 486h2v2h-2zM956 490h2v2h-2zM954 489h2v2h-2zM952 483h2v2h-2zM970 494h2v2h-2zM971 493h2v2h-2zM971 493h2v2h-2zM982 496h2v2h-2zM977 503h2v2h-2zM975 503h2v2h-2zM974 494h2v2h-2zM967 490h2v2h-2zM890 558h2v2h-2zM892 561h2v2h-2zM895 566h2v2h-2zM893 564h2v2h-2zM893 557h2v2h-2zM890 564h2v2h-2zM893 564h2v2h-2zM892 563h2v2h-2zM898 568h2v2h-2zM891 571h2v2h-2zM896 570h2v2h-2zM902 578h2v2h-2zM897 571h2v2h-2zM894 577h2v2h-2zM901 578h2v2h-2zM897 574h2v2h-2zM896 573h2v2h-2zM895 571h2v2h-2zM902 597h2v2h-2zM901 588h2v2h-2zM898 583h2v2h-2zM901 581h2v2h-2zM901 582h2v2h-2zM902 586h2v2h-2zM901 590h2v2h-2zM900 591h2v2h-2zM1261 442h2v2h-2zM1256 440h2v2h-2zM1217 492h2v2h-2zM1214 495h2v2h-2zM1213 498h2v2h-2zM1207 496h2v2h-2zM1215 492h2v2h-2zM1198 518h2v2h-2zM1196 523h2v2h-2zM820 343h2v2h-2zM830 356h2v2h-2zM832 356h2v2h-2zM826 346h2v2h-2zM819 337h2v2h-2zM821 339h2v2h-2zM823 342h2v2h-2zM836 369h2v2h-2zM830 372h2v2h-2zM832 365h2v2h-2zM832 363h2v2h-2zM825 378h2v2h-2zM831 371h2v2h-2zM828 381h2v2h-2zM827 378h2v2h-2zM827 379h2v2h-2zM826 394h2v2h-2zM858 341h2v2h-2zM864 345h2v2h-2zM871 355h2v2h-2zM867 350h2v2h-2zM860 344h2v2h-2zM863 351h2v2h-2zM871 371h2v2h-2zM865 379h2v2h-2zM871 370h2v2h-2zM870 380h2v2h-2zM866 380h2v2h-2zM867 379h2v2h-2zM866 375h2v2h-2zM865 377h2v2h-2zM883 362h2v2h-2zM876 362h2v2h-2zM898 376h2v2h-2zM1460 400h2v2h-2zM1458 402h2v2h-2zM1456 404h2v2h-2zM1454 407h2v2h-2zM1397 397h2v2h-2zM1400 395h2v2h-2zM1389 397h2v2h-2zM1388 371h2v2h-2zM1458 400h2v2h-2zM1457 403h2v2h-2zM1373 392h2v2h-2zM1429 371h2v2h-2zM1431 372h2v2h-2zM1419 394h2v2h-2zM1416 394h2v2h-2zM1425 398h2v2h-2zM1453 389h2v2h-2zM1455 391h2v2h-2zM1397 387h2v2h-2zM1394 388h2v2h-2zM1392 389h2v2h-2zM1389 390h2v2h-2zM1478 374h2v2h-2zM1476 358h2v2h-2zM1480 393h2v2h-2zM1379 373h2v2h-2zM1377 375h2v2h-2zM1374 376h2v2h-2zM1372 378h2v2h-2zM1476 398h2v2h-2zM1474 400h2v2h-2zM1452 374h2v2h-2zM1451 377h2v2h-2zM1380 382h2v2h-2zM1377 383h2v2h-2zM1388 386h2v2h-2zM1400 389h2v2h-2zM1398 390h2v2h-2zM1395 392h2v2h-2zM1432 374h2v2h-2zM1482 360h2v2h-2zM1370 371h2v2h-2zM1469 387h2v2h-2zM1469 390h2v2h-2zM1468 393h2v2h-2zM1456 358h2v2h-2zM1459 358h2v2h-2zM1462 359h2v2h-2zM1414 366h2v2h-2zM1400 366h2v2h-2zM1402 368h2v2h-2zM1404 371h2v2h-2zM1444 356h2v2h-2zM1436 395h2v2h-2zM1436 398h2v2h-2zM1411 363h2v2h-2zM1495 369h2v2h-2zM1459 356h2v2h-2zM1458 358h2v2h-2zM1456 361h2v2h-2zM1398 377h2v2h-2zM1399 380h2v2h-2zM1475 366h2v2h-2zM1475 369h2v2h-2zM1475 372h2v2h-2zM1476 375h2v2h-2zM1495 358h2v2h-2zM1493 361h2v2h-2zM1481 372h2v2h-2zM1432 376h2v2h-2zM1412 274h2v2h-2zM1403 291h2v2h-2zM1406 292h2v2h-2zM1409 293h2v2h-2zM1408 291h2v2h-2zM1407 294h2v2h-2zM1405 297h2v2h-2zM1408 301h2v2h-2zM1409 296h2v2h-2zM1410 299h2v2h-2zM1412 301h2v2h-2zM1414 271h2v2h-2zM1414 274h2v2h-2zM1413 277h2v2h-2zM1394 308h2v2h-2zM1392 309h2v2h-2zM1389 310h2v2h-2zM1414 278h2v2h-2zM1418 284h2v2h-2zM1398 290h2v2h-2zM1396 291h2v2h-2zM1390 305h2v2h-2zM1388 307h2v2h-2zM1386 309h2v2h-2zM1394 309h2v2h-2zM1396 312h2v2h-2zM1397 315h2v2h-2zM1399 317h2v2h-2zM1394 311h2v2h-2zM1413 291h2v2h-2zM1414 293h2v2h-2zM1394 304h2v2h-2zM1397 306h2v2h-2zM1410 297h2v2h-2zM1410 300h2v2h-2zM1409 303h2v2h-2zM1401 307h2v2h-2zM1401 310h2v2h-2zM1402 301h2v2h-2zM1400 304h2v2h-2zM1398 306h2v2h-2zM1396 308h2v2h-2zM1306 387h2v2h-2zM1317 390h2v2h-2zM1344 399h2v2h-2zM1346 401h2v2h-2zM1347 404h2v2h-2zM1334 384h2v2h-2zM1325 398h2v2h-2zM1327 400h2v2h-2zM1321 373h2v2h-2zM1318 374h2v2h-2zM1315 375h2v2h-2zM1307 390h2v2h-2zM1308 393h2v2h-2zM1310 396h2v2h-2zM1311 398h2v2h-2zM1707 394h2v2h-2zM1634 362h2v2h-2zM1636 364h2v2h-2zM1638 366h2v2h-2zM1653 353h2v2h-2zM1655 355h2v2h-2zM1682 391h2v2h-2zM1638 327h2v2h-2zM1638 330h2v2h-2zM1638 333h2v2h-2zM1657 317h2v2h-2zM1691 310h2v2h-2zM1688 311h2v2h-2zM1637 273h2v2h-2zM1637 271h2v2h-2zM1635 320h2v2h-2zM1637 323h2v2h-2zM1638 325h2v2h-2zM1680 342h2v2h-2zM1634 317h2v2h-2zM1637 319h2v2h-2zM1639 320h2v2h-2zM1642 249h2v2h-2zM1702 317h2v2h-2zM1725 309h2v2h-2zM1726 312h2v2h-2zM1728 314h2v2h-2zM1663 392h2v2h-2zM1666 392h2v2h-2zM1679 312h2v2h-2zM1755 249h2v2h-2zM1753 251h2v2h-2zM1750 253h2v2h-2zM1722 331h2v2h-2zM1690 338h2v2h-2zM1688 341h2v2h-2zM1665 357h2v2h-2zM1701 366h2v2h-2zM1702 369h2v2h-2zM1702 372h2v2h-2zM1733 280h2v2h-2zM1731 282h2v2h-2zM1728 283h2v2h-2zM1725 285h2v2h-2zM1627 259h2v2h-2zM1710 301h2v2h-2zM1609 349h2v2h-2zM1598 386h2v2h-2zM1595 387h2v2h-2zM1592 387h2v2h-2zM1707 272h2v2h-2zM1691 319h2v2h-2zM1694 320h2v2h-2zM1631 254h2v2h-2zM1633 256h2v2h-2zM1635 258h2v2h-2zM1637 261h2v2h-2zM1678 291h2v2h-2zM1714 315h2v2h-2zM1694 373h2v2h-2zM1618 360h2v2h-2zM1682 365h2v2h-2zM1753 276h2v2h-2zM1673 339h2v2h-2zM1676 340h2v2h-2zM1679 341h2v2h-2zM1682 342h2v2h-2zM1740 320h2v2h-2zM1651 282h2v2h-2zM1626 245h2v2h-2zM1626 248h2v2h-2zM1626 251h2v2h-2zM1719 358h2v2h-2zM1717 360h2v2h-2zM1703 253h2v2h-2zM1703 256h2v2h-2zM1703 259h2v2h-2zM1704 262h2v2h-2zM1675 236h2v2h-2zM1672 238h2v2h-2zM1670 239h2v2h-2zM1667 241h2v2h-2zM1613 352h2v2h-2zM1612 355h2v2h-2zM1728 317h2v2h-2zM1730 318h2v2h-2zM1733 319h2v2h-2zM1736 321h2v2h-2zM1711 237h2v2h-2zM1710 240h2v2h-2zM1521 361h2v2h-2zM1524 362h2v2h-2zM1527 362h2v2h-2zM1530 363h2v2h-2zM1486 341h2v2h-2zM1536 300h2v2h-2zM1538 301h2v2h-2zM1541 303h2v2h-2zM1471 290h2v2h-2zM1474 291h2v2h-2zM1477 292h2v2h-2zM1480 293h2v2h-2zM1500 314h2v2h-2zM1503 315h2v2h-2zM1506 316h2v2h-2zM1508 317h2v2h-2zM1448 252h2v2h-2zM1445 253h2v2h-2zM1560 385h2v2h-2zM1467 283h2v2h-2zM1467 286h2v2h-2zM1468 289h2v2h-2zM1440 273h2v2h-2zM1443 274h2v2h-2zM1543 397h2v2h-2zM1540 397h2v2h-2zM1537 398h2v2h-2zM1623 310h2v2h-2zM1589 347h2v2h-2zM1587 349h2v2h-2zM1584 351h2v2h-2zM1523 355h2v2h-2zM1509 278h2v2h-2zM1512 279h2v2h-2zM1547 375h2v2h-2zM1548 378h2v2h-2zM1550 380h2v2h-2zM1551 383h2v2h-2zM1485 338h2v2h-2zM1616 271h2v2h-2zM1618 274h2v2h-2zM1619 276h2v2h-2zM1621 279h2v2h-2zM1422 263h2v2h-2zM1425 265h2v2h-2zM1427 267h2v2h-2zM1429 269h2v2h-2zM1601 327h2v2h-2zM1526 283h2v2h-2zM1524 286h2v2h-2zM1523 288h2v2h-2zM1521 291h2v2h-2zM1461 338h2v2h-2zM1463 340h2v2h-2zM1466 342h2v2h-2zM1468 343h2v2h-2zM1443 277h2v2h-2zM1446 279h2v2h-2zM1591 291h2v2h-2zM1588 291h2v2h-2zM1585 292h2v2h-2zM1448 301h2v2h-2zM1613 283h2v2h-2zM1615 285h2v2h-2zM1616 288h2v2h-2zM1618 291h2v2h-2zM1593 264h2v2h-2zM1590 264h2v2h-2zM1591 323h2v2h-2zM1593 325h2v2h-2zM1596 327h2v2h-2zM1598 329h2v2h-2zM1453 296h2v2h-2zM1455 298h2v2h-2zM1457 301h2v2h-2zM1459 303h2v2h-2zM1560 360h2v2h-2zM1471 277h2v2h-2zM1470 280h2v2h-2zM1485 283h2v2h-2zM1483 284h2v2h-2zM1584 349h2v2h-2zM1439 251h2v2h-2zM1601 256h2v2h-2zM1598 257h2v2h-2zM1596 259h2v2h-2zM1593 260h2v2h-2zM1456 320h2v2h-2zM1454 322h2v2h-2zM1452 324h2v2h-2zM1450 326h2v2h-2zM1488 251h2v2h-2zM1490 253h2v2h-2zM1597 262h2v2h-2zM1595 264h2v2h-2zM1534 354h2v2h-2zM1598 338h2v2h-2zM1600 340h2v2h-2zM1474 257h2v2h-2zM1497 333h2v2h-2zM1499 336h2v2h-2zM1500 338h2v2h-2zM1473 341h2v2h-2zM1473 344h2v2h-2zM1473 347h2v2h-2zM1473 350h2v2h-2zM1439 271h2v2h-2zM1526 265h2v2h-2zM1523 266h2v2h-2zM1520 267h2v2h-2zM1516 251h2v2h-2zM1483 266h2v2h-2zM1486 267h2v2h-2zM1489 267h2v2h-2zM1492 268h2v2h-2zM1454 291h2v2h-2zM1554 328h2v2h-2zM1556 331h2v2h-2zM1444 270h2v2h-2zM1446 271h2v2h-2zM1449 273h2v2h-2zM1480 265h2v2h-2zM1480 268h2v2h-2zM1434 295h2v2h-2zM1431 296h2v2h-2zM1428 298h2v2h-2zM1530 366h2v2h-2zM1527 367h2v2h-2zM1525 368h2v2h-2zM1522 370h2v2h-2zM1537 338h2v2h-2zM1484 307h2v2h-2zM1487 308h2v2h-2zM1490 309h2v2h-2zM1493 310h2v2h-2zM1471 253h2v2h-2zM1469 255h2v2h-2zM1495 297h2v2h-2zM1513 345h2v2h-2zM1484 324h2v2h-2zM1481 325h2v2h-2zM1578 330h2v2h-2zM1579 333h2v2h-2zM1445 255h2v2h-2zM1443 258h2v2h-2zM1564 346h2v2h-2zM1567 346h2v2h-2zM1570 347h2v2h-2zM1589 326h2v2h-2zM1586 327h2v2h-2zM1583 328h2v2h-2zM1580 328h2v2h-2zM1523 322h2v2h-2zM1526 323h2v2h-2zM1529 324h2v2h-2zM1531 325h2v2h-2zM1518 303h2v2h-2zM1516 305h2v2h-2zM1513 306h2v2h-2zM1511 308h2v2h-2zM1508 250h2v2h-2zM1607 279h2v2h-2zM1562 321h2v2h-2zM1563 324h2v2h-2zM1564 327h2v2h-2zM1565 330h2v2h-2zM1556 271h2v2h-2zM1537 308h2v2h-2zM1534 308h2v2h-2zM1531 309h2v2h-2zM1517 299h2v2h-2zM1593 291h2v2h-2zM1612 305h2v2h-2zM1609 307h2v2h-2zM1606 308h2v2h-2zM1604 310h2v2h-2zM1519 276h2v2h-2zM1520 279h2v2h-2zM1522 282h2v2h-2zM1508 259h2v2h-2zM1548 268h2v2h-2zM1546 270h2v2h-2zM1545 273h2v2h-2zM1553 292h2v2h-2zM1550 293h2v2h-2zM1547 293h2v2h-2zM1544 294h2v2h-2zM1568 291h2v2h-2zM1569 294h2v2h-2zM1571 297h2v2h-2zM1572 299h2v2h-2zM1584 315h2v2h-2zM1560 306h2v2h-2zM1561 309h2v2h-2zM1561 312h2v2h-2zM1562 315h2v2h-2zM1527 251h2v2h-2zM1529 253h2v2h-2zM1606 312h2v2h-2zM1605 315h2v2h-2zM1604 318h2v2h-2zM1536 308h2v2h-2zM1555 272h2v2h-2zM1574 290h2v2h-2zM1594 288h2v2h-2zM1544 298h2v2h-2zM1547 299h2v2h-2zM1550 300h2v2h-2zM1552 301h2v2h-2zM1542 297h2v2h-2zM1602 275h2v2h-2zM1599 277h2v2h-2zM1465 488h2v2h-2zM1462 488h2v2h-2zM1476 425h2v2h-2zM1478 427h2v2h-2zM1402 452h2v2h-2zM1404 454h2v2h-2zM1382 505h2v2h-2zM1385 506h2v2h-2zM1423 531h2v2h-2zM1420 532h2v2h-2zM1417 533h2v2h-2zM1381 551h2v2h-2zM1347 416h2v2h-2zM1444 521h2v2h-2zM1392 500h2v2h-2zM1394 503h2v2h-2zM1365 421h2v2h-2zM1366 424h2v2h-2zM1366 427h2v2h-2zM1378 438h2v2h-2zM1376 440h2v2h-2zM1373 442h2v2h-2zM1371 443h2v2h-2zM1476 467h2v2h-2zM1474 469h2v2h-2zM1473 472h2v2h-2zM1463 479h2v2h-2zM1462 481h2v2h-2zM1462 484h2v2h-2zM1461 487h2v2h-2zM1460 422h2v2h-2zM1465 417h2v2h-2zM1466 420h2v2h-2zM1468 422h2v2h-2zM1402 555h2v2h-2zM1403 558h2v2h-2zM1445 430h2v2h-2zM1445 433h2v2h-2zM1428 526h2v2h-2zM1463 463h2v2h-2zM1378 510h2v2h-2zM1381 512h2v2h-2zM1383 514h2v2h-2zM1360 446h2v2h-2zM1359 449h2v2h-2zM1358 452h2v2h-2zM1361 483h2v2h-2zM1358 484h2v2h-2zM1355 484h2v2h-2zM1456 489h2v2h-2zM1456 439h2v2h-2zM1359 505h2v2h-2zM1361 506h2v2h-2zM1364 507h2v2h-2zM1449 524h2v2h-2zM1447 526h2v2h-2zM1398 431h2v2h-2zM1398 434h2v2h-2zM1398 437h2v2h-2zM1475 457h2v2h-2zM1391 446h2v2h-2zM1406 521h2v2h-2zM1354 461h2v2h-2zM1357 462h2v2h-2zM1359 464h2v2h-2zM1468 489h2v2h-2zM1471 490h2v2h-2zM1474 490h2v2h-2zM1434 442h2v2h-2zM1434 445h2v2h-2zM1479 470h2v2h-2zM1482 471h2v2h-2zM1484 473h2v2h-2zM1487 475h2v2h-2zM1475 442h2v2h-2zM1463 417h2v2h-2zM1466 417h2v2h-2zM1449 469h2v2h-2zM1448 530h2v2h-2zM1445 488h2v2h-2zM1447 491h2v2h-2zM1449 493h2v2h-2zM1451 495h2v2h-2zM1394 419h2v2h-2zM1459 408h2v2h-2zM1456 409h2v2h-2zM1454 410h2v2h-2zM1455 491h2v2h-2zM1362 409h2v2h-2zM1419 517h2v2h-2zM1376 527h2v2h-2zM1379 527h2v2h-2zM1382 527h2v2h-2zM1385 527h2v2h-2zM1483 480h2v2h-2zM1482 483h2v2h-2zM1481 485h2v2h-2zM1480 488h2v2h-2zM1377 464h2v2h-2zM1378 467h2v2h-2zM1465 468h2v2h-2zM1461 442h2v2h-2zM1460 445h2v2h-2zM1452 466h2v2h-2zM1455 468h2v2h-2zM1457 470h2v2h-2zM1378 414h2v2h-2zM1375 416h2v2h-2zM1425 478h2v2h-2zM1426 481h2v2h-2zM1427 484h2v2h-2zM1428 487h2v2h-2zM1478 590h2v2h-2zM1496 551h2v2h-2zM1497 554h2v2h-2zM1497 557h2v2h-2zM1498 560h2v2h-2zM1499 563h2v2h-2zM1502 570h2v2h-2zM1499 570h2v2h-2zM1496 571h2v2h-2zM1463 649h2v2h-2zM1462 652h2v2h-2zM1460 655h2v2h-2zM1459 657h2v2h-2zM1487 633h2v2h-2zM1488 635h2v2h-2zM1490 638h2v2h-2zM1491 641h2v2h-2zM1345 659h2v2h-2zM1502 640h2v2h-2zM1550 625h2v2h-2zM1549 628h2v2h-2zM1547 631h2v2h-2zM1461 614h2v2h-2zM1458 615h2v2h-2zM1455 616h2v2h-2zM1423 609h2v2h-2zM1497 575h2v2h-2zM1483 658h2v2h-2zM1485 660h2v2h-2zM1487 662h2v2h-2zM1449 596h2v2h-2zM1501 595h2v2h-2zM1460 619h2v2h-2zM1458 622h2v2h-2zM1490 596h2v2h-2zM1486 656h2v2h-2zM1436 653h2v2h-2zM1435 656h2v2h-2zM1435 659h2v2h-2zM1428 654h2v2h-2zM1428 657h2v2h-2zM1427 660h2v2h-2zM1482 662h2v2h-2zM1477 622h2v2h-2zM1531 552h2v2h-2zM1532 555h2v2h-2zM1533 558h2v2h-2zM1534 561h2v2h-2zM1460 625h2v2h-2zM1450 621h2v2h-2zM1447 621h2v2h-2zM1466 654h2v2h-2zM1466 657h2v2h-2zM1466 660h2v2h-2zM1468 613h2v2h-2zM1475 576h2v2h-2zM1536 567h2v2h-2zM1536 570h2v2h-2zM1536 573h2v2h-2zM1439 657h2v2h-2zM1439 660h2v2h-2zM1438 663h2v2h-2zM1356 593h2v2h-2zM1379 563h2v2h-2zM1380 565h2v2h-2zM1382 567h2v2h-2zM1386 562h2v2h-2zM1386 565h2v2h-2zM1355 573h2v2h-2zM1354 603h2v2h-2zM1368 593h2v2h-2zM1365 594h2v2h-2zM1367 551h2v2h-2zM1351 606h2v2h-2zM1367 572h2v2h-2zM1358 537h2v2h-2zM1357 540h2v2h-2zM1652 609h2v2h-2zM1798 659h2v2h-2zM1647 642h2v2h-2zM1649 645h2v2h-2zM1650 648h2v2h-2zM1652 650h2v2h-2zM1676 657h2v2h-2zM1812 597h2v2h-2zM1814 599h2v2h-2zM1816 601h2v2h-2zM1650 647h2v2h-2zM1719 660h2v2h-2zM1721 661h2v2h-2zM1724 663h2v2h-2zM1208 651h2v2h-2zM1255 629h2v2h-2zM1310 663h2v2h-2zM1264 802h2v2h-2zM1265 805h2v2h-2zM1266 807h2v2h-2zM1268 810h2v2h-2zM1277 614h2v2h-2zM1280 615h2v2h-2zM1282 616h2v2h-2zM1285 617h2v2h-2zM1234 726h2v2h-2zM1232 727h2v2h-2zM1229 729h2v2h-2zM1199 665h2v2h-2zM1198 668h2v2h-2zM1197 670h2v2h-2zM1195 673h2v2h-2zM1329 852h2v2h-2zM1331 853h2v2h-2zM1292 799h2v2h-2zM1289 800h2v2h-2zM1286 800h2v2h-2zM1180 730h2v2h-2zM1157 761h2v2h-2zM1154 763h2v2h-2zM1152 765h2v2h-2zM1150 767h2v2h-2zM1272 849h2v2h-2zM1308 633h2v2h-2zM1305 634h2v2h-2zM1245 760h2v2h-2zM1234 614h2v2h-2zM1264 625h2v2h-2zM1280 702h2v2h-2zM1281 704h2v2h-2zM1283 707h2v2h-2zM1179 749h2v2h-2zM1219 752h2v2h-2zM1218 755h2v2h-2zM1217 758h2v2h-2zM1215 760h2v2h-2zM1167 753h2v2h-2zM1166 756h2v2h-2zM1308 672h2v2h-2zM1307 674h2v2h-2zM1306 677h2v2h-2zM1305 680h2v2h-2zM1298 724h2v2h-2zM1182 735h2v2h-2zM1180 736h2v2h-2zM1177 737h2v2h-2zM1174 739h2v2h-2zM1209 812h2v2h-2zM1182 818h2v2h-2zM1184 821h2v2h-2zM1145 766h2v2h-2zM1256 672h2v2h-2zM1259 674h2v2h-2zM1205 806h2v2h-2zM1204 809h2v2h-2zM1203 811h2v2h-2zM1261 751h2v2h-2zM1261 754h2v2h-2zM1260 757h2v2h-2zM1236 677h2v2h-2zM1239 677h2v2h-2zM1242 678h2v2h-2zM1196 850h2v2h-2zM1234 726h2v2h-2zM1717 804h2v2h-2zM1717 807h2v2h-2zM1717 810h2v2h-2zM1717 813h2v2h-2zM1750 804h2v2h-2zM1751 860h2v2h-2zM1687 770h2v2h-2zM1682 854h2v2h-2zM1682 856h2v2h-2zM1683 859h2v2h-2zM1683 862h2v2h-2zM1775 805h2v2h-2zM1778 807h2v2h-2zM1626 741h2v2h-2zM1624 743h2v2h-2zM1623 746h2v2h-2zM1796 771h2v2h-2zM1772 620h2v2h-2zM1771 623h2v2h-2zM1771 626h2v2h-2zM1770 629h2v2h-2zM1803 701h2v2h-2zM1797 759h2v2h-2zM1795 761h2v2h-2zM1793 763h2v2h-2zM1791 765h2v2h-2zM1675 663h2v2h-2zM1679 687h2v2h-2zM1681 689h2v2h-2zM1684 691h2v2h-2zM1686 693h2v2h-2zM1410 842h2v2h-2zM1413 843h2v2h-2zM1416 843h2v2h-2zM1424 888h2v2h-2zM1421 889h2v2h-2zM1470 806h2v2h-2zM1883 809h2v2h-2zM1901 717h2v2h-2zM1714 686h2v2h-2zM1797 705h2v2h-2zM1795 708h2v2h-2zM1794 711h2v2h-2zM1793 713h2v2h-2zM1839 705h2v2h-2zM1836 705h2v2h-2zM1892 776h2v2h-2zM1740 720h2v2h-2zM1822 799h2v2h-2zM1824 802h2v2h-2zM1870 824h2v2h-2zM956 494h2v2h-2zM968 491h2v2h-2zM967 494h2v2h-2zM967 497h2v2h-2zM952 507h2v2h-2zM955 508h2v2h-2zM958 509h2v2h-2zM961 509h2v2h-2zM975 514h2v2h-2zM964 484h2v2h-2zM965 487h2v2h-2zM966 485h2v2h-2zM963 487h2v2h-2zM961 489h2v2h-2zM952 491h2v2h-2zM970 490h2v2h-2zM957 504h2v2h-2zM955 506h2v2h-2zM952 508h2v2h-2zM950 510h2v2h-2zM952 502h2v2h-2zM983 506h2v2h-2zM986 507h2v2h-2zM989 507h2v2h-2zM992 508h2v2h-2zM952 499h2v2h-2zM967 510h2v2h-2zM990 495h2v2h-2zM979 502h2v2h-2zM981 503h2v2h-2zM984 505h2v2h-2zM986 507h2v2h-2zM950 493h2v2h-2zM952 496h2v2h-2zM972 498h2v2h-2zM970 499h2v2h-2zM967 501h2v2h-2zM966 506h2v2h-2zM963 506h2v2h-2zM960 506h2v2h-2zM940 501h2v2h-2zM957 482h2v2h-2zM966 514h2v2h-2zM967 517h2v2h-2zM968 520h2v2h-2zM968 523h2v2h-2zM982 497h2v2h-2zM983 500h2v2h-2zM985 503h2v2h-2zM930 501h2v2h-2zM951 494h2v2h-2zM954 495h2v2h-2zM941 501h2v2h-2zM975 496h2v2h-2zM977 499h2v2h-2zM959 502h2v2h-2zM958 505h2v2h-2zM956 508h2v2h-2zM955 510h2v2h-2zM957 483h2v2h-2zM951 505h2v2h-2zM953 507h2v2h-2zM988 499h2v2h-2zM985 501h2v2h-2zM983 503h2v2h-2zM981 505h2v2h-2zM962 515h2v2h-2zM963 518h2v2h-2zM963 521h2v2h-2zM964 524h2v2h-2z" fill="#1c1c1c"/><g filter="url(#rg)"><polygon points="703.8,312.5 713.8,311.2 717.5,321.2 721.2,330.0 717.5,335.0 707.5,338.8 700.0,346.2 693.8,345.0 685.0,335.0 691.2,331.2 702.5,323.8" fill="#1c1c1c" stroke="#1c1c1c" stroke-width="1.5" stroke-linejoin="round"/><polygon points="685.0,360.0 695.0,357.5 700.0,365.0 703.8,377.5 705.0,396.8 687.5,396.8 690.0,377.5 686.2,371.2" fill="#1c1c1c" stroke="#1c1c1c" stroke-width="1.5" stroke-linejoin="round"/><polygon points="740.0,327.5 755.0,326.2 770.0,330.0 787.5,328.8 800.0,331.2 808.8,335.0 810.0,342.5 802.5,350.0 795.0,352.5 791.2,365.0 785.0,367.5 775.0,360.0 770.0,365.0 767.5,375.0 762.5,382.5 756.2,396.8 717.5,396.8 716.2,385.0 712.5,375.0 722.5,360.0 730.0,350.0 737.5,337.5" fill="#1c1c1c" stroke="#1c1c1c" stroke-width="1.5" stroke-linejoin="round"/><polygon points="735.0,265.0 750.0,265.0 752.5,272.5 750.0,280.0 755.0,288.8 756.2,296.2 748.8,301.2 746.2,290.0 743.8,277.5" fill="#1c1c1c" stroke="#1c1c1c" stroke-width="1.5" stroke-linejoin="round"/><polygon points="762.5,201.5 770.0,190.2 785.0,192.8 775.0,206.5 770.0,212.8 765.0,206.5" fill="#1c1c1c" stroke="#1c1c1c" stroke-width="1.5" stroke-linejoin="round"/><polygon points="730.0,259.0 737.5,256.5 745.0,269.0 752.5,274.0 747.5,289.0 742.5,284.0 732.5,266.5" fill="#1c1c1c" stroke="#1c1c1c" stroke-width="1.5" stroke-linejoin="round"/><polygon points="970.0,336.5 985.0,346.5 1005.0,341.5 1025.0,339.0 1040.0,324.0 1057.5,304.0 1067.5,301.5 1085.0,304.0 1100.0,299.0 1115.0,289.0 1115.0,319.0 1100.0,324.0 1085.0,329.0 1065.0,334.0 1045.0,349.0 1025.0,356.5 1010.0,364.0 995.0,376.5 985.0,389.0 970.0,389.0 967.5,371.5 980.0,359.0 975.0,349.0" fill="#1c1c1c" stroke="#1c1c1c" stroke-width="1.5" stroke-linejoin="round"/><polygon points="1362.5,339.0 1372.5,326.5 1382.5,334.0 1380.0,346.5 1385.0,354.0 1375.0,356.5 1367.5,349.0" fill="#1c1c1c" stroke="#1c1c1c" stroke-width="1.5" stroke-linejoin="round"/><polygon points="1622.5,201.5 1640.0,166.5 1647.5,159.0 1655.0,161.5 1660.0,169.0 1630.0,209.0" fill="#1c1c1c" stroke="#1c1c1c" stroke-width="1.5" stroke-linejoin="round"/><polygon points="1547.5,269.0 1557.5,264.0 1570.0,269.0 1570.0,281.5 1560.0,289.0 1550.0,286.5" fill="#1c1c1c" stroke="#1c1c1c" stroke-width="1.5" stroke-linejoin="round"/><polygon points="667.5,439.5 680.0,422.0 700.0,414.5 705.0,424.5 715.0,432.0 712.5,444.5 705.0,464.5 700.0,477.0 690.0,472.0 680.0,459.5 670.0,462.0" fill="#1c1c1c" stroke="#1c1c1c" stroke-width="1.5" stroke-linejoin="round"/><polygon points="655.0,482.0 667.5,484.5 680.0,489.5 690.0,502.0 687.5,514.5 700.0,524.5 705.0,534.5 700.0,547.0 690.0,562.0 675.0,552.0 660.0,554.5 645.0,547.0 637.5,532.0 645.0,522.0 650.0,509.5 647.5,497.0" fill="#1c1c1c" stroke="#1c1c1c" stroke-width="1.5" stroke-linejoin="round"/><polygon points="600.0,587.0 615.0,572.0 630.0,564.5 635.0,554.5 645.0,567.0 655.0,574.5 667.5,577.0 655.0,587.0 642.5,597.0 630.0,594.5 617.5,599.5 605.0,597.0" fill="#1c1c1c" stroke="#1c1c1c" stroke-width="1.5" stroke-linejoin="round"/><polygon points="737.5,522.0 755.0,532.0 770.0,542.0 780.0,547.0 775.0,552.0 755.0,547.0 737.5,537.0" fill="#1c1c1c" stroke="#1c1c1c" stroke-width="1.5" stroke-linejoin="round"/><polygon points="750.0,507.0 770.0,494.5 790.0,484.5 805.0,472.0 815.0,464.5 830.0,467.0 825.0,482.0 815.0,502.0 805.0,512.0 800.0,532.0 810.0,542.0 815.0,562.0 805.0,577.0 795.0,562.0 790.0,542.0 770.0,527.0 755.0,519.5" fill="#1c1c1c" stroke="#1c1c1c" stroke-width="1.5" stroke-linejoin="round"/><polygon points="837.5,439.5 847.5,427.0 855.0,442.0 845.0,459.5" fill="#1c1c1c" stroke="#1c1c1c" stroke-width="1.5" stroke-linejoin="round"/><polygon points="555.0,639.5 570.0,627.0 585.0,627.0 597.5,632.0 600.0,652.0 595.0,667.0 550.0,667.0 545.0,652.0" fill="#1c1c1c" stroke="#1c1c1c" stroke-width="1.5" stroke-linejoin="round"/><polygon points="605.0,609.5 620.0,602.0 630.0,609.5 625.0,619.5 615.0,619.5 612.5,627.0 620.0,634.5 630.0,642.0 627.5,652.0 610.0,642.0 602.5,627.0" fill="#1c1c1c" stroke="#1c1c1c" stroke-width="1.5" stroke-linejoin="round"/><polygon points="830.0,577.0 842.5,562.0 855.0,557.0 861.2,577.0 861.2,627.0 845.0,622.0 835.0,602.0" fill="#1c1c1c" stroke="#1c1c1c" stroke-width="1.5" stroke-linejoin="round"/><polygon points="805.0,602.0 812.5,599.5 810.0,627.0 802.5,652.0 800.0,639.5" fill="#1c1c1c" stroke="#1c1c1c" stroke-width="1.5" stroke-linejoin="round"/><polygon points="817.5,509.5 830.0,497.0 845.0,477.0 861.2,469.5 861.2,522.0 842.5,527.0 830.0,532.0 820.0,527.0" fill="#1c1c1c" stroke="#1c1c1c" stroke-width="1.5" stroke-linejoin="round"/><polygon points="860.0,564.5 867.5,577.0 867.5,602.0 860.0,614.5" fill="#1c1c1c" stroke="#1c1c1c" stroke-width="1.5" stroke-linejoin="round"/><polygon points="860.0,632.0 872.5,634.5 870.0,647.0 860.0,649.5" fill="#1c1c1c" stroke="#1c1c1c" stroke-width="1.5" stroke-linejoin="round"/><polygon points="1545.0,527.0 1552.5,522.0 1562.5,524.5 1567.5,532.0 1562.5,542.0 1552.5,544.5 1547.5,549.5 1543.8,542.0" fill="#1c1c1c" stroke="#1c1c1c" stroke-width="1.5" stroke-linejoin="round"/><polygon points="535.0,665.0 542.5,650.0 555.0,642.5 565.0,632.5 580.0,630.0 587.5,615.0 597.5,625.0 600.0,645.0 605.0,657.5 595.0,665.0 585.0,665.0 577.5,672.5 565.0,670.0 552.5,675.0 542.5,682.5 532.5,682.5 520.0,695.0 515.0,692.5 525.0,680.0" fill="#1c1c1c" stroke="#1c1c1c" stroke-width="1.5" stroke-linejoin="round"/><polygon points="600.0,600.0 620.0,600.0 627.5,610.0 615.0,617.5 605.0,615.0" fill="#1c1c1c" stroke="#1c1c1c" stroke-width="1.5" stroke-linejoin="round"/><polygon points="612.5,627.5 627.5,625.0 630.0,637.5 620.0,642.5 612.5,637.5" fill="#1c1c1c" stroke="#1c1c1c" stroke-width="1.5" stroke-linejoin="round"/><polygon points="610.0,662.5 620.0,657.5 630.0,662.5 640.0,667.5 652.5,672.5 652.5,695.0 645.0,705.0 635.0,700.0 632.5,687.5 620.0,685.0 610.0,677.5" fill="#1c1c1c" stroke="#1c1c1c" stroke-width="1.5" stroke-linejoin="round"/><polygon points="592.5,682.5 600.0,672.5 610.0,680.0 612.5,700.0 607.5,717.5 597.5,722.5 592.5,710.0" fill="#1c1c1c" stroke="#1c1c1c" stroke-width="1.5" stroke-linejoin="round"/><polygon points="612.5,700.0 630.0,702.5 640.0,710.0 635.0,717.5 620.0,710.0" fill="#1c1c1c" stroke="#1c1c1c" stroke-width="1.5" stroke-linejoin="round"/><polygon points="592.5,740.0 605.0,735.0 612.5,730.0 627.5,732.5 632.5,745.0 627.5,757.5 615.0,760.0 605.0,765.0 597.5,760.0 595.0,750.0" fill="#1c1c1c" stroke="#1c1c1c" stroke-width="1.5" stroke-linejoin="round"/><polygon points="645.0,717.5 655.0,712.5 667.5,715.0 675.0,700.0 680.0,685.0 687.5,672.5 692.5,682.5 690.0,700.0 692.5,717.5 697.5,730.0 685.0,735.0 677.5,750.0 670.0,747.5 665.0,735.0 652.5,727.5" fill="#1c1c1c" stroke="#1c1c1c" stroke-width="1.5" stroke-linejoin="round"/><polygon points="830.0,602.5 842.5,600.0 855.0,607.5 855.0,620.0 842.5,625.0 832.5,615.0" fill="#1c1c1c" stroke="#1c1c1c" stroke-width="1.5" stroke-linejoin="round"/><polygon points="790.0,657.5 802.5,637.5 810.0,640.0 800.0,660.0 780.0,685.0 777.5,680.0" fill="#1c1c1c" stroke="#1c1c1c" stroke-width="1.5" stroke-linejoin="round"/><polygon points="970.0,370.0 980.0,357.5 985.0,345.0 995.0,350.0 1010.0,352.5 1025.0,350.0 1040.0,342.5 1055.0,340.0 1060.0,330.0 1070.0,330.0 1067.5,340.0 1052.5,350.0 1035.0,357.5 1020.0,365.0 1010.0,375.0 1005.0,387.5 995.0,395.0 987.5,387.5 980.0,392.5 975.0,382.5" fill="#1c1c1c" stroke="#1c1c1c" stroke-width="1.5" stroke-linejoin="round"/><polygon points="970.0,330.0 980.0,337.5 985.0,330.0" fill="#1c1c1c" stroke="#1c1c1c" stroke-width="1.5" stroke-linejoin="round"/><polygon points="1075.0,330.0 1115.0,330.0 1112.5,337.5 1095.0,342.5 1080.0,340.0" fill="#1c1c1c" stroke="#1c1c1c" stroke-width="1.5" stroke-linejoin="round"/><polygon points="945.0,390.0 952.5,386.2 955.0,392.5 947.5,395.0" fill="#1c1c1c" stroke="#1c1c1c" stroke-width="1.5" stroke-linejoin="round"/><polygon points="890.0,430.0 900.0,420.0 910.0,417.5 912.5,435.0 920.0,450.0 915.0,460.0 920.0,470.0 912.5,480.0 905.0,490.0 900.0,477.5 890.0,470.0 892.5,452.5 887.5,442.5" fill="#1c1c1c" stroke="#1c1c1c" stroke-width="1.5" stroke-linejoin="round"/><polygon points="932.5,410.0 942.5,405.0 950.0,410.0 945.0,430.0 937.5,425.0" fill="#1c1c1c" stroke="#1c1c1c" stroke-width="1.5" stroke-linejoin="round"/><polygon points="820.0,505.0 835.0,490.0 850.0,477.5 862.5,472.5 865.0,485.0 875.0,492.5 882.5,502.5 870.0,510.0 860.0,522.5 845.0,520.0 832.5,530.0 820.0,527.5 815.0,517.5" fill="#1c1c1c" stroke="#1c1c1c" stroke-width="1.5" stroke-linejoin="round"/><polygon points="795.0,470.0 805.0,467.5 817.5,477.5 827.5,465.0 832.5,450.0 842.5,430.0 850.0,435.0 845.0,455.0 855.0,447.5 847.5,465.0 832.5,480.0 817.5,492.5 802.5,502.5 795.0,505.0" fill="#1c1c1c" stroke="#1c1c1c" stroke-width="1.5" stroke-linejoin="round"/><polygon points="795.0,550.0 810.0,545.0 815.0,560.0 805.0,580.0 795.0,582.5" fill="#1c1c1c" stroke="#1c1c1c" stroke-width="1.5" stroke-linejoin="round"/><polygon points="830.0,580.0 840.0,562.5 852.5,560.0 860.0,575.0 867.5,582.5 870.0,595.0 827.5,595.0" fill="#1c1c1c" stroke="#1c1c1c" stroke-width="1.5" stroke-linejoin="round"/><polygon points="957.5,452.5 970.0,447.5 980.0,445.0 975.0,455.0 960.0,456.2" fill="#1c1c1c" stroke="#1c1c1c" stroke-width="1.5" stroke-linejoin="round"/><polygon points="1015.0,425.0 1025.0,417.5 1037.5,407.5 1042.5,402.5 1040.0,412.5 1027.5,422.5 1017.5,428.8" fill="#1c1c1c" stroke="#1c1c1c" stroke-width="1.5" stroke-linejoin="round"/></g><g fill="none" stroke="#fff" stroke-width="7.5" stroke-linejoin="round" stroke-linecap="round"><polyline points="794.0,179.0 785.0,186.5 770.0,184.0 762.5,188.0 750.0,188.0 746.0,191.5 745.0,199.0 735.0,210.0 725.0,219.0 716.0,221.5 711.0,231.5 705.0,246.5 709.0,251.5 717.5,254.0 725.0,260.0 730.0,271.0 734.0,272.5 740.0,284.0 742.5,296.0 743.0,306.0 741.0,315.0 745.0,322.0"/><polyline points="794.0,179.0 800.0,185.0 812.5,188.0 816.0,194.0 819.0,199.0 821.0,203.0 814.0,209.0 811.0,219.0 812.5,226.5 819.0,244.0 787.5,243.0 779.0,271.0 775.0,276.0 765.0,282.5 761.0,285.0 755.0,289.0 760.0,295.0 752.5,301.0 749.0,307.5 746.0,315.0 745.0,322.0"/><polyline points="765.0,282.5 771.0,289.0 779.0,292.5 784.0,300.0 787.5,304.0 794.0,305.0 800.0,309.0 805.0,315.0 806.0,320.0"/><polyline points="745.0,322.0 752.5,320.0 760.0,315.0 765.0,314.0 765.0,319.0 770.0,324.0 777.5,322.5 785.0,325.0 794.0,324.0 800.0,322.5 806.0,320.0 810.0,327.5 815.0,339.0 821.0,345.0 829.0,346.0 822.5,352.5 815.0,362.5 811.0,372.5 810.0,384.0 811.0,397.0 812.0,406.0"/><polyline points="745.0,322.0 741.0,315.0 737.5,306.0 730.0,304.0 725.0,299.0 721.0,295.0 714.0,299.0 706.0,302.5 700.0,307.5 696.0,314.0 697.5,320.0 690.0,325.0 682.5,325.0 675.0,327.5"/><polyline points="745.0,322.0 741.0,327.5 734.0,335.0 726.0,341.0 716.0,345.0 707.5,351.0 702.5,357.5 705.0,365.0 709.0,374.0 711.0,385.0 711.0,397.0"/><polyline points="745.0,324.0 737.5,335.0 730.0,346.0 722.5,357.5 712.5,367.5 709.0,374.0"/><polyline points="832.5,139.0 820.0,150.2 807.5,164.0 795.0,179.0"/><polyline points="832.5,139.0 842.5,144.5 897.5,157.0 922.5,146.5 926.2,139.0"/><polyline points="995.0,139.0 980.0,204.0 983.8,212.8 1002.5,216.5 997.5,264.0 962.5,266.5 962.5,284.0 970.0,299.0 970.0,319.0 977.5,334.0 992.5,336.5 1005.0,339.0 1025.0,339.0 1045.0,314.0 1057.5,299.0 1060.0,289.0 1075.0,291.5 1090.0,284.0 1095.0,269.0 1115.0,271.5"/><polyline points="1332.5,139.0 1322.5,154.0 1310.0,171.5 1290.0,181.5 1285.0,204.0 1280.0,221.5 1270.0,239.0 1260.0,256.5 1262.5,274.0 1270.0,294.0 1255.0,311.5 1242.5,329.0 1243.8,342.8"/><polyline points="1243.8,342.8 1255.0,336.5 1275.0,331.5 1290.0,334.0 1305.0,336.5 1315.0,329.0 1332.5,324.0 1342.5,319.0 1356.2,304.0 1365.0,309.0 1375.0,314.0 1380.0,301.5 1375.0,294.0 1380.0,290.2 1385.0,299.0 1415.0,264.0 1411.2,256.5 1400.0,249.0 1402.5,245.2 1442.5,224.0 1427.5,219.0 1457.5,191.5 1452.5,179.0 1447.5,171.5 1437.5,176.5 1433.8,156.5 1450.0,146.5 1465.0,139.0"/><polyline points="1415.0,264.0 1427.5,274.0 1430.0,286.5 1437.5,292.8"/><polyline points="1427.5,289.0 1415.0,304.0 1400.0,324.0 1387.5,339.0 1390.0,351.5"/><polyline points="1332.5,324.0 1350.0,324.0 1365.0,314.0 1385.0,331.5 1387.5,339.0 1392.5,349.0 1390.0,364.0 1380.0,364.0 1375.0,356.5 1365.0,351.5 1355.0,339.0 1347.5,331.5 1340.0,325.2"/><polyline points="1365.0,351.5 1360.0,364.0 1355.0,384.0 1350.0,404.0"/><polyline points="1243.8,342.8 1240.0,349.0 1232.5,356.5 1225.0,374.0 1215.0,386.5 1210.0,404.0"/><polyline points="1340.0,325.2 1347.5,336.5 1340.0,346.5 1335.0,356.5 1325.0,361.5 1322.5,371.5 1310.0,379.0 1297.5,386.5 1290.0,389.0 1282.5,384.0 1270.0,376.5 1257.5,374.0 1265.0,379.0 1275.0,389.0 1280.0,399.0"/><polyline points="1115.0,269.0 1122.5,266.5 1130.0,269.0 1140.0,274.0 1137.5,286.5 1132.5,289.0 1147.5,286.5 1162.5,286.5 1177.5,279.0 1195.0,274.0 1197.5,259.0 1195.0,251.5 1210.0,249.0 1227.5,241.5 1257.5,240.2 1250.0,256.5 1245.0,271.5 1250.0,275.2 1235.0,279.0 1225.0,289.0 1225.0,309.0 1230.0,324.0 1237.5,334.0 1243.8,342.8"/><polyline points="1162.5,286.5 1152.5,299.0 1145.0,314.0 1140.0,326.5 1122.5,331.5 1120.0,344.0 1115.0,346.5"/><polyline points="1162.5,286.5 1177.5,289.0 1185.0,299.0 1187.5,314.0 1197.5,319.0 1210.0,319.0 1215.0,329.0 1225.0,339.0 1235.0,341.5 1243.8,342.8"/><polyline points="1465.0,139.0 1467.5,149.0 1477.5,164.0 1472.5,176.5 1467.5,189.0 1472.5,204.0 1475.0,219.0 1485.0,239.0 1495.0,246.5 1515.0,244.0 1540.0,241.5 1565.0,241.5 1590.0,246.5 1605.0,240.2 1610.0,224.0 1620.0,211.5"/><polyline points="1615.0,201.5 1640.0,159.0 1645.0,151.5 1652.5,149.0 1657.5,159.0 1665.0,164.0 1667.5,171.5 1630.0,214.0 1615.0,201.5"/><polyline points="1665.0,164.0 1680.0,154.0 1695.0,144.0 1705.0,156.5 1722.5,181.5 1722.5,186.5 1700.0,204.0 1702.5,209.0 1690.0,216.5 1695.0,226.5 1730.0,200.2 1740.0,209.0 1757.5,234.0 1775.0,249.0 1790.0,264.0"/><polyline points="1565.0,139.0 1582.5,146.5 1590.0,139.0"/><polyline points="1840.0,139.0 1837.5,159.0 1830.0,179.0 1825.0,201.5 1815.0,214.0 1800.0,224.0 1790.0,239.0 1792.5,254.0 1790.0,264.0"/><polyline points="1850.0,139.0 1855.0,144.0 1865.0,139.0"/><polyline points="1790.0,264.0 1775.0,274.0 1772.5,294.0 1765.0,301.5 1780.0,311.5 1772.5,319.0 1762.5,319.0 1750.0,334.0 1735.0,329.0 1735.0,336.5 1745.0,356.5 1755.0,369.0 1767.5,381.5 1772.5,404.0"/><polyline points="1605.0,240.2 1610.0,249.0 1615.0,259.0 1625.0,264.0 1620.0,279.0 1622.5,294.0 1632.5,306.5 1625.0,319.0 1610.0,331.5 1600.0,349.0 1582.5,354.0 1595.0,369.0 1590.0,379.0 1582.5,389.0 1587.5,404.0"/><polyline points="1865.0,404.0 1860.0,376.5 1872.5,361.5 1865.0,356.5 1852.5,341.5 1852.5,329.0 1840.0,314.0 1830.0,304.0 1810.0,289.0 1840.0,259.0 1862.5,274.0 1877.5,286.5 1897.5,294.0 1915.0,299.0 1921.2,309.0"/><polyline points="1440.0,294.0 1445.0,329.0 1442.5,346.5 1450.0,350.2 1522.5,351.5 1512.5,376.5 1502.5,404.0"/><polyline points="1557.5,254.0 1562.5,264.0 1572.5,266.5 1577.5,276.5 1570.0,286.5 1565.0,294.0 1555.0,291.5 1545.0,296.5 1542.5,286.5 1545.0,274.0 1542.5,266.5 1550.0,261.5 1557.5,254.0"/><polyline points="612.5,402.0 605.0,412.0 597.5,429.5 587.5,439.5 570.0,444.5 562.5,459.5 555.0,472.0 547.5,484.5 542.5,502.0 540.0,514.5"/><polyline points="540.0,514.5 530.0,527.0 520.0,524.5 505.0,534.5 500.0,549.5 487.5,557.0 475.0,562.0 465.0,577.0 455.0,582.0 447.5,572.0 440.0,569.5 430.0,579.5 418.0,588.0 407.5,600.0"/><polyline points="540.0,514.5 547.5,519.5 542.5,529.5 572.5,552.0 565.0,569.5 577.5,584.5 587.5,587.0 590.0,602.0 580.0,605.8 565.0,617.0 555.0,624.5 550.0,634.5 535.0,642.0 527.5,649.5 530.0,667.0"/><polyline points="587.5,587.0 600.0,574.5 620.0,562.0 632.5,547.0 642.5,557.0 655.0,562.0 670.0,567.0 685.0,562.0 687.5,569.5 700.0,562.0 712.5,549.5 730.0,542.0"/><polyline points="660.0,402.0 662.5,417.0 667.5,429.5 662.5,439.5 660.0,457.0 667.5,467.0 665.0,477.0 687.5,479.5 695.0,489.5 702.5,502.0 712.5,512.0 710.0,527.0 712.5,542.0 730.0,542.0"/><polyline points="730.0,542.0 747.5,547.0 770.0,549.5 782.5,559.5 787.5,577.0 790.0,597.0 785.0,604.5"/><polyline points="730.0,542.0 715.0,552.0 700.0,562.0 680.0,577.0 662.5,589.5 645.0,602.0 637.5,609.5 637.5,619.5 640.0,627.0"/><polyline points="667.5,429.5 680.0,417.0 692.5,409.5 707.5,417.0 720.0,424.5 735.0,419.5 750.0,412.0 770.0,409.5 780.0,407.0 785.0,402.0"/><polyline points="780.0,407.0 770.0,429.5 760.0,452.0 750.0,467.0 740.0,474.5 727.5,469.5 725.0,482.0 710.0,489.5 702.5,502.0"/><polyline points="740.0,474.5 740.0,492.0 735.0,507.0 732.5,519.5 732.5,532.0 730.0,542.0"/><polyline points="740.0,502.0 755.0,522.0 770.0,532.0 785.0,542.0 787.5,559.5 790.0,577.0"/><polyline points="912.5,507.0 922.5,522.0 935.0,524.5 945.0,522.0 955.0,529.5 970.0,532.0 982.5,539.5 995.0,527.0 1007.5,532.0 1020.0,527.0 1030.0,519.5 1035.0,532.0 1037.5,545.8 1045.0,534.5 1057.5,519.5 1070.0,522.0 1082.5,519.5 1095.0,519.5 1102.5,527.0 1110.0,519.5 1120.0,509.5 1132.5,502.0 1137.5,484.5 1142.5,467.0 1150.0,459.5 1157.5,447.0 1167.5,437.0 1175.0,422.0 1182.5,409.5 1187.5,402.0"/><polyline points="1260.0,402.0 1250.0,417.0 1235.0,427.0 1227.5,439.5 1242.5,437.0 1235.0,447.0 1225.0,454.5 1230.0,464.5 1207.5,482.0 1187.5,502.0 1160.0,529.5 1133.8,524.5 1125.0,552.0 1115.0,587.0 1107.5,609.5 1103.8,610.8 1106.2,615.8 1110.0,614.5 1100.0,642.0 1090.0,667.0"/><polyline points="1341.2,514.5 1330.0,519.5 1325.0,532.0 1300.0,552.0 1270.0,569.5 1245.0,577.0 1227.5,577.0 1212.5,572.0 1192.5,579.5 1180.0,587.0 1177.5,599.5"/><polyline points="1341.2,412.0 1327.5,417.0 1330.0,427.0 1341.2,437.0"/><polyline points="1341.2,492.0 1335.0,502.0 1341.2,514.5"/><polyline points="860.0,557.0 870.0,562.0 877.5,577.0 875.0,592.0 870.0,602.0 872.5,617.0 880.0,627.0 887.5,642.0 890.0,654.5 875.0,649.5 870.0,667.0"/><polyline points="1340.0,434.5 1350.0,439.5 1360.0,454.5 1357.5,467.0 1347.5,482.0 1340.0,494.5"/><polyline points="1340.0,517.0 1352.5,524.5 1365.0,542.0 1372.5,554.5 1395.0,549.5 1397.5,567.0 1412.5,577.0 1422.5,587.0 1425.0,602.0 1410.0,607.0 1407.5,619.5 1390.0,627.0 1377.5,639.5 1365.0,639.5 1352.5,632.0 1340.0,632.0"/><polyline points="1422.5,587.0 1440.0,589.5 1447.5,577.0 1465.0,562.0 1467.5,549.5 1460.0,542.0 1457.5,532.0 1465.0,529.5 1475.0,537.0 1485.0,537.0 1487.5,529.5 1477.5,524.5 1482.5,517.0 1495.0,507.0 1500.0,514.5 1500.0,522.0 1515.0,517.0 1525.0,512.0 1535.0,519.5 1540.0,527.0"/><polyline points="1502.5,402.0 1502.5,452.0 1505.0,457.0 1522.5,462.0 1520.0,474.5 1525.0,484.5 1532.5,492.0 1530.0,502.0 1535.0,512.0 1535.0,519.5"/><polyline points="1532.5,492.0 1560.0,497.0 1562.5,474.5 1580.0,462.0 1587.5,452.0 1580.0,444.5 1575.0,439.5 1590.0,432.0 1590.0,422.0 1577.5,417.0 1580.0,409.5 1597.5,414.5 1600.0,402.0"/><polyline points="1560.0,497.0 1565.0,502.0 1580.0,512.0 1600.0,519.5 1607.5,532.0 1610.0,549.5 1615.0,562.0 1617.5,577.0 1617.5,592.0 1615.0,609.5"/><polyline points="1540.0,527.0 1552.5,512.0 1560.0,512.0 1575.0,529.5 1580.0,539.5 1565.0,547.0 1552.5,552.0 1540.0,549.5 1535.0,552.0 1550.0,582.0 1565.0,602.0 1590.0,587.0 1600.0,579.5 1592.5,567.0 1580.0,569.5 1572.5,557.0 1565.0,547.0"/><polyline points="1617.5,589.5 1635.0,592.0 1655.0,577.0 1677.5,569.5 1680.5,572.0"/><polyline points="1767.3,402.0 1764.8,414.5 1752.4,424.5 1742.4,444.4 1729.9,451.9 1719.9,466.9 1714.9,494.3 1722.4,501.8 1714.9,526.8 1702.5,536.7 1700.0,556.7 1685.0,564.2 1690.0,574.2 1680.0,571.7"/><polyline points="1729.9,451.9 1739.9,454.4 1729.9,469.4 1727.4,489.3 1724.9,494.3 1742.4,506.8 1754.9,504.3 1762.3,509.3 1784.8,514.3 1802.3,519.3 1814.7,516.8 1817.2,524.3 1854.7,529.2"/><polyline points="1867.1,402.0 1864.6,417.0 1854.7,431.9 1847.2,451.9 1849.7,466.9 1854.7,479.3 1852.2,494.3 1859.6,506.8 1864.6,511.8 1859.6,521.8 1854.7,529.2 1859.6,539.2 1869.6,549.2 1879.6,554.2 1884.6,566.7 1892.1,561.7 1899.6,556.7 1909.5,551.7 1922.0,546.7"/><polyline points="407.5,600.0 400.0,612.5 395.0,632.5 397.5,655.0 402.5,670.0 415.0,675.0 420.0,687.5 420.0,705.0 430.0,717.5 440.0,730.0 450.0,740.0 457.5,752.5 475.0,755.0 487.5,765.0 502.5,767.5 510.0,775.0 520.0,785.0 532.5,787.5"/><polyline points="587.5,607.5 580.0,610.0 570.0,617.5 555.0,630.0 535.0,647.5 527.5,655.0 530.0,675.0 515.0,685.0 505.0,702.5 507.5,710.0 525.0,710.0 520.0,725.0 502.5,750.0 505.0,760.0 515.0,760.0 527.5,750.0 530.0,755.0 532.5,787.5"/><polyline points="532.5,787.5 540.0,792.5 552.5,785.0 565.0,775.0 575.0,767.5 587.5,770.0 595.0,762.5 605.0,770.0 615.0,772.5 625.0,765.0 637.5,760.0 640.0,750.0 637.5,735.0 640.0,722.5"/><polyline points="640.0,722.5 645.0,710.0 650.0,705.0 662.5,710.0 670.0,700.0 672.5,685.0 680.0,675.0 682.5,665.0 687.5,652.5 695.0,660.0 700.0,672.5 695.0,685.0 692.5,700.0 695.0,717.5 700.0,730.0 687.5,735.0 680.0,745.0 680.0,755.0 672.5,762.5 665.0,760.0 660.0,745.0 657.5,732.5 642.5,735.0 640.0,722.5"/><polyline points="802.5,607.5 800.0,625.0 792.5,645.0 782.5,660.0 775.0,675.0 765.0,687.5 757.5,700.0 752.5,717.5 742.5,735.0 735.0,750.0 727.5,770.0 720.0,790.0 730.0,802.5 742.5,817.5 755.0,830.0"/><polyline points="785.0,600.0 805.0,602.5 817.5,605.0 825.0,625.0 827.5,635.0 820.0,657.5 812.5,680.0 805.0,705.0 795.0,730.0 787.5,755.0 780.0,775.0 772.5,790.0 765.0,810.0 755.0,830.0 755.0,837.5 750.0,850.0 745.0,865.0"/><polyline points="525.0,710.0 540.0,695.0 555.0,690.0 557.5,680.0 567.5,682.5 565.0,697.5 560.0,707.5 557.5,720.0 550.0,727.5 540.0,740.0 530.0,755.0"/><polyline points="567.5,682.5 580.0,675.0 587.5,670.0 600.0,665.0 610.0,660.0 615.0,645.0 605.0,642.5 602.5,630.0 610.0,622.5 620.0,617.5 630.0,615.0 635.0,607.5 637.5,600.0"/><polyline points="565.0,697.5 580.0,695.0 582.5,705.0 577.5,720.0 567.5,732.5 565.0,740.0 575.0,742.5 587.5,730.0 600.0,727.5 612.5,710.0 620.0,712.5 630.0,720.0 640.0,722.5"/><polyline points="610.0,660.0 610.0,675.0 620.0,682.5 630.0,685.0 640.0,675.0 650.0,670.0 655.0,657.5 650.0,665.0 640.0,665.0 627.5,660.0 622.5,650.0 627.5,642.5 632.5,632.5 630.0,622.5 630.0,615.0"/><polyline points="650.0,670.0 655.0,682.5 650.0,697.5 650.0,705.0"/><polyline points="817.5,605.0 830.0,635.0 842.5,637.5 845.0,670.0 861.2,675.0"/><polyline points="802.5,607.5 792.5,605.0 785.0,600.0"/><polyline points="1115.0,600.0 1107.5,608.8 1103.8,610.0 1106.2,615.0 1110.0,613.8 1100.0,640.0 1085.0,680.0 1067.5,722.5 1047.5,745.0 1025.0,770.0 1012.5,765.0 1000.0,785.0 987.5,810.0 982.5,816.2"/><polyline points="1177.5,600.0 1185.0,610.0 1170.0,632.5 1177.5,647.5 1182.5,667.5 1195.0,680.0 1197.5,687.5 1192.5,705.0 1185.0,717.5 1165.0,722.5 1150.0,732.5 1150.0,750.0 1145.0,762.5 1127.5,772.5 1117.5,787.5 1120.0,807.5 1127.5,817.5 1125.0,840.0 1122.5,850.0 1125.0,860.0"/><polyline points="867.5,600.0 872.5,615.0 870.0,627.5 882.5,635.0 885.0,650.0 890.0,655.0 887.5,665.0 877.5,662.5 877.5,652.5 872.5,650.0 865.0,665.0 860.0,670.0"/><polyline points="1341.2,630.0 1330.0,642.5 1327.5,657.5 1335.0,670.0 1341.2,690.0"/><polyline points="1341.2,720.0 1322.5,736.2 1341.2,736.2"/><polyline points="1606.2,640.0 1637.5,658.8 1632.5,662.5 1652.5,695.0 1662.5,700.0 1672.5,710.0 1677.5,740.0 1690.0,745.0 1705.0,745.0"/><polyline points="1606.2,640.0 1590.0,657.5 1580.0,662.5 1577.5,675.0 1582.5,682.5 1575.0,695.0 1572.5,702.5 1565.0,700.0 1537.5,733.8 1552.5,742.5 1552.5,762.5 1535.0,775.0 1527.5,795.0"/><polyline points="1340.0,736.2 1385.0,735.0 1390.0,740.0 1405.0,745.0 1412.5,752.5 1427.5,752.5 1430.0,762.5 1442.5,770.0 1440.0,775.0 1425.0,785.0"/><polyline points="1617.5,600.0 1607.5,612.5 1605.0,627.5 1606.2,640.0"/><polyline points="1340.0,697.5 1347.5,705.0 1350.0,720.0 1340.0,727.5"/><polyline points="982.5,816.0 970.0,826.0 945.0,843.5 930.0,844.8 915.0,848.5 905.0,863.5 892.5,871.0 875.0,883.5 860.0,893.5"/><polyline points="982.5,816.0 1000.0,817.2 1030.0,828.5 1060.0,838.5 1085.0,846.0 1110.0,856.0 1132.5,866.0 1160.0,878.5 1185.0,893.5 1210.0,911.0 1222.5,921.0 1223.8,931.0 1227.5,946.0 1230.0,961.0 1225.0,976.0 1217.5,988.5 1212.5,1003.5 1212.5,1023.5"/><polyline points="1125.0,860.0 1132.5,866.0"/><polyline points="1422.5,791.0 1412.5,801.0 1410.0,816.0 1400.0,833.5 1390.0,851.0 1377.5,866.0 1366.2,873.5"/><polyline points="1366.2,873.5 1390.0,908.5 1420.0,951.0"/><polyline points="1532.5,791.0 1525.0,803.5 1520.0,823.5 1505.0,833.5 1485.0,841.0 1475.0,851.0 1472.5,861.0 1480.0,871.0 1485.0,883.5 1487.5,893.5 1480.0,901.0 1465.0,913.5 1445.0,918.5 1437.5,926.0 1430.0,941.0 1420.0,951.0 1405.0,971.0 1397.5,991.0 1390.0,1011.0 1387.5,1023.5"/><polyline points="1680.0,742.2 1710.2,740.0 1725.2,733.6 1753.2,744.3 1766.2,763.7 1781.3,768.0 1781.3,781.0 1796.3,798.2 1809.3,811.1 1817.9,824.1 1822.2,841.3 1843.7,854.2 1845.9,875.8 1854.5,886.5"/><polyline points="1854.5,886.5 1869.6,880.1 1886.8,871.5 1904.1,865.0 1921.3,855.5"/><polyline points="1854.5,886.5 1843.7,910.2 1826.5,927.5 1809.3,944.7 1792.0,961.9 1770.5,974.9 1757.6,996.4 1736.0,1013.6 1718.8,1024.4"/><polyline points="982.5,816.0 972.5,826.0 955.0,838.5 945.0,844.8 930.0,843.5 915.0,848.5 905.0,861.0 895.0,871.0 880.0,878.5 865.0,888.5 850.0,901.0 835.0,916.0 820.0,927.2 810.0,929.8 802.5,918.5 795.0,903.5 790.0,896.0 775.0,888.5 755.0,882.2 745.0,877.2 742.5,866.0 747.5,856.0 755.0,846.0 755.0,831.0"/><polyline points="795.0,387.5 805.0,390.0 812.5,400.0 825.0,407.5 837.5,405.0 855.0,407.5 857.5,397.5 870.0,392.5 880.0,392.5 887.5,385.0 890.0,377.5 897.5,387.5 900.0,395.0 920.0,397.5 935.0,390.0 955.0,377.5 970.0,362.5 977.5,352.5 970.0,340.0 967.5,330.0 970.0,319.0"/><polyline points="935.0,390.0 955.0,385.0 970.0,380.0 975.0,387.5 967.5,392.5 960.0,397.5 955.0,405.0 950.0,415.0 957.5,430.0 967.5,442.5 970.0,435.0 972.5,440.0 990.0,425.0 1015.0,390.0 1010.0,380.0 1027.5,372.5 1045.0,365.0 1060.0,357.5 1077.5,352.5 1095.0,347.5 1110.0,342.5 1120.0,347.5 1117.5,340.0 1120.0,330.0"/><polyline points="1120.0,347.5 1150.0,380.0 1180.0,410.0"/><polyline points="1180.0,410.0 1192.5,402.5 1205.0,405.0 1210.0,404.0"/><polyline points="912.5,505.0 907.5,495.0 915.0,485.0 930.0,475.0 947.5,470.0 947.5,460.0 935.0,455.0 927.5,437.5 932.5,432.5 945.0,440.0 955.0,445.0 957.5,430.0"/><polyline points="795.0,510.0 810.0,500.0 827.5,485.0 845.0,470.0 865.0,450.0 877.5,435.0 885.0,425.0 880.0,417.5 877.5,405.0 890.0,402.5 900.0,395.0"/><polyline points="885.0,425.0 900.0,415.0 920.0,405.0 935.0,390.0"/><polyline points="877.5,435.0 875.0,457.5 865.0,475.0 870.0,480.0 882.5,480.0 895.0,490.0 905.0,502.5 912.5,505.0 907.5,520.0 890.0,527.5 885.0,535.0 870.0,530.0 850.0,532.5 835.0,537.5 820.0,540.0 810.0,530.0 812.5,520.0 807.5,510.0 820.0,505.0 827.5,492.5 840.0,480.0 852.5,470.0 865.0,450.0"/><polyline points="795.0,545.0 820.0,540.0"/><polyline points="850.0,532.5 845.0,542.5 842.5,550.0 855.0,555.0 875.0,560.0 880.0,580.0 882.5,595.0"/><polyline points="842.5,550.0 832.5,560.0 822.5,580.0 817.5,595.0"/></g><g fill="none" stroke="#1c1c1c" stroke-width="1" stroke-linejoin="round" stroke-linecap="round"><polyline points="794.0,179.0 785.0,186.5 770.0,184.0 762.5,188.0 750.0,188.0 746.0,191.5 745.0,199.0 735.0,210.0 725.0,219.0 716.0,221.5 711.0,231.5 705.0,246.5 709.0,251.5 717.5,254.0 725.0,260.0 730.0,271.0 734.0,272.5 740.0,284.0 742.5,296.0 743.0,306.0 741.0,315.0 745.0,322.0"/><polyline points="794.0,179.0 800.0,185.0 812.5,188.0 816.0,194.0 819.0,199.0 821.0,203.0 814.0,209.0 811.0,219.0 812.5,226.5 819.0,244.0 787.5,243.0 779.0,271.0 775.0,276.0 765.0,282.5 761.0,285.0 755.0,289.0 760.0,295.0 752.5,301.0 749.0,307.5 746.0,315.0 745.0,322.0"/><polyline points="765.0,282.5 771.0,289.0 779.0,292.5 784.0,300.0 787.5,304.0 794.0,305.0 800.0,309.0 805.0,315.0 806.0,320.0"/><polyline points="745.0,322.0 752.5,320.0 760.0,315.0 765.0,314.0 765.0,319.0 770.0,324.0 777.5,322.5 785.0,325.0 794.0,324.0 800.0,322.5 806.0,320.0 810.0,327.5 815.0,339.0 821.0,345.0 829.0,346.0 822.5,352.5 815.0,362.5 811.0,372.5 810.0,384.0 811.0,397.0 812.0,406.0"/><polyline points="745.0,322.0 741.0,315.0 737.5,306.0 730.0,304.0 725.0,299.0 721.0,295.0 714.0,299.0 706.0,302.5 700.0,307.5 696.0,314.0 697.5,320.0 690.0,325.0 682.5,325.0 675.0,327.5"/><polyline points="745.0,322.0 741.0,327.5 734.0,335.0 726.0,341.0 716.0,345.0 707.5,351.0 702.5,357.5 705.0,365.0 709.0,374.0 711.0,385.0 711.0,397.0"/><polyline points="745.0,324.0 737.5,335.0 730.0,346.0 722.5,357.5 712.5,367.5 709.0,374.0"/><polyline points="832.5,139.0 820.0,150.2 807.5,164.0 795.0,179.0"/><polyline points="832.5,139.0 842.5,144.5 897.5,157.0 922.5,146.5 926.2,139.0"/><polyline points="995.0,139.0 980.0,204.0 983.8,212.8 1002.5,216.5 997.5,264.0 962.5,266.5 962.5,284.0 970.0,299.0 970.0,319.0 977.5,334.0 992.5,336.5 1005.0,339.0 1025.0,339.0 1045.0,314.0 1057.5,299.0 1060.0,289.0 1075.0,291.5 1090.0,284.0 1095.0,269.0 1115.0,271.5"/><polyline points="1332.5,139.0 1322.5,154.0 1310.0,171.5 1290.0,181.5 1285.0,204.0 1280.0,221.5 1270.0,239.0 1260.0,256.5 1262.5,274.0 1270.0,294.0 1255.0,311.5 1242.5,329.0 1243.8,342.8"/><polyline points="1243.8,342.8 1255.0,336.5 1275.0,331.5 1290.0,334.0 1305.0,336.5 1315.0,329.0 1332.5,324.0 1342.5,319.0 1356.2,304.0 1365.0,309.0 1375.0,314.0 1380.0,301.5 1375.0,294.0 1380.0,290.2 1385.0,299.0 1415.0,264.0 1411.2,256.5 1400.0,249.0 1402.5,245.2 1442.5,224.0 1427.5,219.0 1457.5,191.5 1452.5,179.0 1447.5,171.5 1437.5,176.5 1433.8,156.5 1450.0,146.5 1465.0,139.0"/><polyline points="1415.0,264.0 1427.5,274.0 1430.0,286.5 1437.5,292.8"/><polyline points="1427.5,289.0 1415.0,304.0 1400.0,324.0 1387.5,339.0 1390.0,351.5"/><polyline points="1332.5,324.0 1350.0,324.0 1365.0,314.0 1385.0,331.5 1387.5,339.0 1392.5,349.0 1390.0,364.0 1380.0,364.0 1375.0,356.5 1365.0,351.5 1355.0,339.0 1347.5,331.5 1340.0,325.2"/><polyline points="1365.0,351.5 1360.0,364.0 1355.0,384.0 1350.0,404.0"/><polyline points="1243.8,342.8 1240.0,349.0 1232.5,356.5 1225.0,374.0 1215.0,386.5 1210.0,404.0"/><polyline points="1340.0,325.2 1347.5,336.5 1340.0,346.5 1335.0,356.5 1325.0,361.5 1322.5,371.5 1310.0,379.0 1297.5,386.5 1290.0,389.0 1282.5,384.0 1270.0,376.5 1257.5,374.0 1265.0,379.0 1275.0,389.0 1280.0,399.0"/><polyline points="1115.0,269.0 1122.5,266.5 1130.0,269.0 1140.0,274.0 1137.5,286.5 1132.5,289.0 1147.5,286.5 1162.5,286.5 1177.5,279.0 1195.0,274.0 1197.5,259.0 1195.0,251.5 1210.0,249.0 1227.5,241.5 1257.5,240.2 1250.0,256.5 1245.0,271.5 1250.0,275.2 1235.0,279.0 1225.0,289.0 1225.0,309.0 1230.0,324.0 1237.5,334.0 1243.8,342.8"/><polyline points="1162.5,286.5 1152.5,299.0 1145.0,314.0 1140.0,326.5 1122.5,331.5 1120.0,344.0 1115.0,346.5"/><polyline points="1162.5,286.5 1177.5,289.0 1185.0,299.0 1187.5,314.0 1197.5,319.0 1210.0,319.0 1215.0,329.0 1225.0,339.0 1235.0,341.5 1243.8,342.8"/><polyline points="1465.0,139.0 1467.5,149.0 1477.5,164.0 1472.5,176.5 1467.5,189.0 1472.5,204.0 1475.0,219.0 1485.0,239.0 1495.0,246.5 1515.0,244.0 1540.0,241.5 1565.0,241.5 1590.0,246.5 1605.0,240.2 1610.0,224.0 1620.0,211.5"/><polyline points="1615.0,201.5 1640.0,159.0 1645.0,151.5 1652.5,149.0 1657.5,159.0 1665.0,164.0 1667.5,171.5 1630.0,214.0 1615.0,201.5"/><polyline points="1665.0,164.0 1680.0,154.0 1695.0,144.0 1705.0,156.5 1722.5,181.5 1722.5,186.5 1700.0,204.0 1702.5,209.0 1690.0,216.5 1695.0,226.5 1730.0,200.2 1740.0,209.0 1757.5,234.0 1775.0,249.0 1790.0,264.0"/><polyline points="1565.0,139.0 1582.5,146.5 1590.0,139.0"/><polyline points="1840.0,139.0 1837.5,159.0 1830.0,179.0 1825.0,201.5 1815.0,214.0 1800.0,224.0 1790.0,239.0 1792.5,254.0 1790.0,264.0"/><polyline points="1850.0,139.0 1855.0,144.0 1865.0,139.0"/><polyline points="1790.0,264.0 1775.0,274.0 1772.5,294.0 1765.0,301.5 1780.0,311.5 1772.5,319.0 1762.5,319.0 1750.0,334.0 1735.0,329.0 1735.0,336.5 1745.0,356.5 1755.0,369.0 1767.5,381.5 1772.5,404.0"/><polyline points="1605.0,240.2 1610.0,249.0 1615.0,259.0 1625.0,264.0 1620.0,279.0 1622.5,294.0 1632.5,306.5 1625.0,319.0 1610.0,331.5 1600.0,349.0 1582.5,354.0 1595.0,369.0 1590.0,379.0 1582.5,389.0 1587.5,404.0"/><polyline points="1865.0,404.0 1860.0,376.5 1872.5,361.5 1865.0,356.5 1852.5,341.5 1852.5,329.0 1840.0,314.0 1830.0,304.0 1810.0,289.0 1840.0,259.0 1862.5,274.0 1877.5,286.5 1897.5,294.0 1915.0,299.0 1921.2,309.0"/><polyline points="1440.0,294.0 1445.0,329.0 1442.5,346.5 1450.0,350.2 1522.5,351.5 1512.5,376.5 1502.5,404.0"/><polyline points="1557.5,254.0 1562.5,264.0 1572.5,266.5 1577.5,276.5 1570.0,286.5 1565.0,294.0 1555.0,291.5 1545.0,296.5 1542.5,286.5 1545.0,274.0 1542.5,266.5 1550.0,261.5 1557.5,254.0"/><polyline points="612.5,402.0 605.0,412.0 597.5,429.5 587.5,439.5 570.0,444.5 562.5,459.5 555.0,472.0 547.5,484.5 542.5,502.0 540.0,514.5"/><polyline points="540.0,514.5 530.0,527.0 520.0,524.5 505.0,534.5 500.0,549.5 487.5,557.0 475.0,562.0 465.0,577.0 455.0,582.0 447.5,572.0 440.0,569.5 430.0,579.5 418.0,588.0 407.5,600.0"/><polyline points="540.0,514.5 547.5,519.5 542.5,529.5 572.5,552.0 565.0,569.5 577.5,584.5 587.5,587.0 590.0,602.0 580.0,605.8 565.0,617.0 555.0,624.5 550.0,634.5 535.0,642.0 527.5,649.5 530.0,667.0"/><polyline points="587.5,587.0 600.0,574.5 620.0,562.0 632.5,547.0 642.5,557.0 655.0,562.0 670.0,567.0 685.0,562.0 687.5,569.5 700.0,562.0 712.5,549.5 730.0,542.0"/><polyline points="660.0,402.0 662.5,417.0 667.5,429.5 662.5,439.5 660.0,457.0 667.5,467.0 665.0,477.0 687.5,479.5 695.0,489.5 702.5,502.0 712.5,512.0 710.0,527.0 712.5,542.0 730.0,542.0"/><polyline points="730.0,542.0 747.5,547.0 770.0,549.5 782.5,559.5 787.5,577.0 790.0,597.0 785.0,604.5"/><polyline points="730.0,542.0 715.0,552.0 700.0,562.0 680.0,577.0 662.5,589.5 645.0,602.0 637.5,609.5 637.5,619.5 640.0,627.0"/><polyline points="667.5,429.5 680.0,417.0 692.5,409.5 707.5,417.0 720.0,424.5 735.0,419.5 750.0,412.0 770.0,409.5 780.0,407.0 785.0,402.0"/><polyline points="780.0,407.0 770.0,429.5 760.0,452.0 750.0,467.0 740.0,474.5 727.5,469.5 725.0,482.0 710.0,489.5 702.5,502.0"/><polyline points="740.0,474.5 740.0,492.0 735.0,507.0 732.5,519.5 732.5,532.0 730.0,542.0"/><polyline points="740.0,502.0 755.0,522.0 770.0,532.0 785.0,542.0 787.5,559.5 790.0,577.0"/><polyline points="912.5,507.0 922.5,522.0 935.0,524.5 945.0,522.0 955.0,529.5 970.0,532.0 982.5,539.5 995.0,527.0 1007.5,532.0 1020.0,527.0 1030.0,519.5 1035.0,532.0 1037.5,545.8 1045.0,534.5 1057.5,519.5 1070.0,522.0 1082.5,519.5 1095.0,519.5 1102.5,527.0 1110.0,519.5 1120.0,509.5 1132.5,502.0 1137.5,484.5 1142.5,467.0 1150.0,459.5 1157.5,447.0 1167.5,437.0 1175.0,422.0 1182.5,409.5 1187.5,402.0"/><polyline points="1260.0,402.0 1250.0,417.0 1235.0,427.0 1227.5,439.5 1242.5,437.0 1235.0,447.0 1225.0,454.5 1230.0,464.5 1207.5,482.0 1187.5,502.0 1160.0,529.5 1133.8,524.5 1125.0,552.0 1115.0,587.0 1107.5,609.5 1103.8,610.8 1106.2,615.8 1110.0,614.5 1100.0,642.0 1090.0,667.0"/><polyline points="1341.2,514.5 1330.0,519.5 1325.0,532.0 1300.0,552.0 1270.0,569.5 1245.0,577.0 1227.5,577.0 1212.5,572.0 1192.5,579.5 1180.0,587.0 1177.5,599.5"/><polyline points="1341.2,412.0 1327.5,417.0 1330.0,427.0 1341.2,437.0"/><polyline points="1341.2,492.0 1335.0,502.0 1341.2,514.5"/><polyline points="860.0,557.0 870.0,562.0 877.5,577.0 875.0,592.0 870.0,602.0 872.5,617.0 880.0,627.0 887.5,642.0 890.0,654.5 875.0,649.5 870.0,667.0"/><polyline points="1340.0,434.5 1350.0,439.5 1360.0,454.5 1357.5,467.0 1347.5,482.0 1340.0,494.5"/><polyline points="1340.0,517.0 1352.5,524.5 1365.0,542.0 1372.5,554.5 1395.0,549.5 1397.5,567.0 1412.5,577.0 1422.5,587.0 1425.0,602.0 1410.0,607.0 1407.5,619.5 1390.0,627.0 1377.5,639.5 1365.0,639.5 1352.5,632.0 1340.0,632.0"/><polyline points="1422.5,587.0 1440.0,589.5 1447.5,577.0 1465.0,562.0 1467.5,549.5 1460.0,542.0 1457.5,532.0 1465.0,529.5 1475.0,537.0 1485.0,537.0 1487.5,529.5 1477.5,524.5 1482.5,517.0 1495.0,507.0 1500.0,514.5 1500.0,522.0 1515.0,517.0 1525.0,512.0 1535.0,519.5 1540.0,527.0"/><polyline points="1502.5,402.0 1502.5,452.0 1505.0,457.0 1522.5,462.0 1520.0,474.5 1525.0,484.5 1532.5,492.0 1530.0,502.0 1535.0,512.0 1535.0,519.5"/><polyline points="1532.5,492.0 1560.0,497.0 1562.5,474.5 1580.0,462.0 1587.5,452.0 1580.0,444.5 1575.0,439.5 1590.0,432.0 1590.0,422.0 1577.5,417.0 1580.0,409.5 1597.5,414.5 1600.0,402.0"/><polyline points="1560.0,497.0 1565.0,502.0 1580.0,512.0 1600.0,519.5 1607.5,532.0 1610.0,549.5 1615.0,562.0 1617.5,577.0 1617.5,592.0 1615.0,609.5"/><polyline points="1540.0,527.0 1552.5,512.0 1560.0,512.0 1575.0,529.5 1580.0,539.5 1565.0,547.0 1552.5,552.0 1540.0,549.5 1535.0,552.0 1550.0,582.0 1565.0,602.0 1590.0,587.0 1600.0,579.5 1592.5,567.0 1580.0,569.5 1572.5,557.0 1565.0,547.0"/><polyline points="1617.5,589.5 1635.0,592.0 1655.0,577.0 1677.5,569.5 1680.5,572.0"/><polyline points="1767.3,402.0 1764.8,414.5 1752.4,424.5 1742.4,444.4 1729.9,451.9 1719.9,466.9 1714.9,494.3 1722.4,501.8 1714.9,526.8 1702.5,536.7 1700.0,556.7 1685.0,564.2 1690.0,574.2 1680.0,571.7"/><polyline points="1729.9,451.9 1739.9,454.4 1729.9,469.4 1727.4,489.3 1724.9,494.3 1742.4,506.8 1754.9,504.3 1762.3,509.3 1784.8,514.3 1802.3,519.3 1814.7,516.8 1817.2,524.3 1854.7,529.2"/><polyline points="1867.1,402.0 1864.6,417.0 1854.7,431.9 1847.2,451.9 1849.7,466.9 1854.7,479.3 1852.2,494.3 1859.6,506.8 1864.6,511.8 1859.6,521.8 1854.7,529.2 1859.6,539.2 1869.6,549.2 1879.6,554.2 1884.6,566.7 1892.1,561.7 1899.6,556.7 1909.5,551.7 1922.0,546.7"/><polyline points="407.5,600.0 400.0,612.5 395.0,632.5 397.5,655.0 402.5,670.0 415.0,675.0 420.0,687.5 420.0,705.0 430.0,717.5 440.0,730.0 450.0,740.0 457.5,752.5 475.0,755.0 487.5,765.0 502.5,767.5 510.0,775.0 520.0,785.0 532.5,787.5"/><polyline points="587.5,607.5 580.0,610.0 570.0,617.5 555.0,630.0 535.0,647.5 527.5,655.0 530.0,675.0 515.0,685.0 505.0,702.5 507.5,710.0 525.0,710.0 520.0,725.0 502.5,750.0 505.0,760.0 515.0,760.0 527.5,750.0 530.0,755.0 532.5,787.5"/><polyline points="532.5,787.5 540.0,792.5 552.5,785.0 565.0,775.0 575.0,767.5 587.5,770.0 595.0,762.5 605.0,770.0 615.0,772.5 625.0,765.0 637.5,760.0 640.0,750.0 637.5,735.0 640.0,722.5"/><polyline points="640.0,722.5 645.0,710.0 650.0,705.0 662.5,710.0 670.0,700.0 672.5,685.0 680.0,675.0 682.5,665.0 687.5,652.5 695.0,660.0 700.0,672.5 695.0,685.0 692.5,700.0 695.0,717.5 700.0,730.0 687.5,735.0 680.0,745.0 680.0,755.0 672.5,762.5 665.0,760.0 660.0,745.0 657.5,732.5 642.5,735.0 640.0,722.5"/><polyline points="802.5,607.5 800.0,625.0 792.5,645.0 782.5,660.0 775.0,675.0 765.0,687.5 757.5,700.0 752.5,717.5 742.5,735.0 735.0,750.0 727.5,770.0 720.0,790.0 730.0,802.5 742.5,817.5 755.0,830.0"/><polyline points="785.0,600.0 805.0,602.5 817.5,605.0 825.0,625.0 827.5,635.0 820.0,657.5 812.5,680.0 805.0,705.0 795.0,730.0 787.5,755.0 780.0,775.0 772.5,790.0 765.0,810.0 755.0,830.0 755.0,837.5 750.0,850.0 745.0,865.0"/><polyline points="525.0,710.0 540.0,695.0 555.0,690.0 557.5,680.0 567.5,682.5 565.0,697.5 560.0,707.5 557.5,720.0 550.0,727.5 540.0,740.0 530.0,755.0"/><polyline points="567.5,682.5 580.0,675.0 587.5,670.0 600.0,665.0 610.0,660.0 615.0,645.0 605.0,642.5 602.5,630.0 610.0,622.5 620.0,617.5 630.0,615.0 635.0,607.5 637.5,600.0"/><polyline points="565.0,697.5 580.0,695.0 582.5,705.0 577.5,720.0 567.5,732.5 565.0,740.0 575.0,742.5 587.5,730.0 600.0,727.5 612.5,710.0 620.0,712.5 630.0,720.0 640.0,722.5"/><polyline points="610.0,660.0 610.0,675.0 620.0,682.5 630.0,685.0 640.0,675.0 650.0,670.0 655.0,657.5 650.0,665.0 640.0,665.0 627.5,660.0 622.5,650.0 627.5,642.5 632.5,632.5 630.0,622.5 630.0,615.0"/><polyline points="650.0,670.0 655.0,682.5 650.0,697.5 650.0,705.0"/><polyline points="817.5,605.0 830.0,635.0 842.5,637.5 845.0,670.0 861.2,675.0"/><polyline points="802.5,607.5 792.5,605.0 785.0,600.0"/><polyline points="1115.0,600.0 1107.5,608.8 1103.8,610.0 1106.2,615.0 1110.0,613.8 1100.0,640.0 1085.0,680.0 1067.5,722.5 1047.5,745.0 1025.0,770.0 1012.5,765.0 1000.0,785.0 987.5,810.0 982.5,816.2"/><polyline points="1177.5,600.0 1185.0,610.0 1170.0,632.5 1177.5,647.5 1182.5,667.5 1195.0,680.0 1197.5,687.5 1192.5,705.0 1185.0,717.5 1165.0,722.5 1150.0,732.5 1150.0,750.0 1145.0,762.5 1127.5,772.5 1117.5,787.5 1120.0,807.5 1127.5,817.5 1125.0,840.0 1122.5,850.0 1125.0,860.0"/><polyline points="867.5,600.0 872.5,615.0 870.0,627.5 882.5,635.0 885.0,650.0 890.0,655.0 887.5,665.0 877.5,662.5 877.5,652.5 872.5,650.0 865.0,665.0 860.0,670.0"/><polyline points="1341.2,630.0 1330.0,642.5 1327.5,657.5 1335.0,670.0 1341.2,690.0"/><polyline points="1341.2,720.0 1322.5,736.2 1341.2,736.2"/><polyline points="1606.2,640.0 1637.5,658.8 1632.5,662.5 1652.5,695.0 1662.5,700.0 1672.5,710.0 1677.5,740.0 1690.0,745.0 1705.0,745.0"/><polyline points="1606.2,640.0 1590.0,657.5 1580.0,662.5 1577.5,675.0 1582.5,682.5 1575.0,695.0 1572.5,702.5 1565.0,700.0 1537.5,733.8 1552.5,742.5 1552.5,762.5 1535.0,775.0 1527.5,795.0"/><polyline points="1340.0,736.2 1385.0,735.0 1390.0,740.0 1405.0,745.0 1412.5,752.5 1427.5,752.5 1430.0,762.5 1442.5,770.0 1440.0,775.0 1425.0,785.0"/><polyline points="1617.5,600.0 1607.5,612.5 1605.0,627.5 1606.2,640.0"/><polyline points="1340.0,697.5 1347.5,705.0 1350.0,720.0 1340.0,727.5"/><polyline points="982.5,816.0 970.0,826.0 945.0,843.5 930.0,844.8 915.0,848.5 905.0,863.5 892.5,871.0 875.0,883.5 860.0,893.5"/><polyline points="982.5,816.0 1000.0,817.2 1030.0,828.5 1060.0,838.5 1085.0,846.0 1110.0,856.0 1132.5,866.0 1160.0,878.5 1185.0,893.5 1210.0,911.0 1222.5,921.0 1223.8,931.0 1227.5,946.0 1230.0,961.0 1225.0,976.0 1217.5,988.5 1212.5,1003.5 1212.5,1023.5"/><polyline points="1125.0,860.0 1132.5,866.0"/><polyline points="1422.5,791.0 1412.5,801.0 1410.0,816.0 1400.0,833.5 1390.0,851.0 1377.5,866.0 1366.2,873.5"/><polyline points="1366.2,873.5 1390.0,908.5 1420.0,951.0"/><polyline points="1532.5,791.0 1525.0,803.5 1520.0,823.5 1505.0,833.5 1485.0,841.0 1475.0,851.0 1472.5,861.0 1480.0,871.0 1485.0,883.5 1487.5,893.5 1480.0,901.0 1465.0,913.5 1445.0,918.5 1437.5,926.0 1430.0,941.0 1420.0,951.0 1405.0,971.0 1397.5,991.0 1390.0,1011.0 1387.5,1023.5"/><polyline points="1680.0,742.2 1710.2,740.0 1725.2,733.6 1753.2,744.3 1766.2,763.7 1781.3,768.0 1781.3,781.0 1796.3,798.2 1809.3,811.1 1817.9,824.1 1822.2,841.3 1843.7,854.2 1845.9,875.8 1854.5,886.5"/><polyline points="1854.5,886.5 1869.6,880.1 1886.8,871.5 1904.1,865.0 1921.3,855.5"/><polyline points="1854.5,886.5 1843.7,910.2 1826.5,927.5 1809.3,944.7 1792.0,961.9 1770.5,974.9 1757.6,996.4 1736.0,1013.6 1718.8,1024.4"/><polyline points="982.5,816.0 972.5,826.0 955.0,838.5 945.0,844.8 930.0,843.5 915.0,848.5 905.0,861.0 895.0,871.0 880.0,878.5 865.0,888.5 850.0,901.0 835.0,916.0 820.0,927.2 810.0,929.8 802.5,918.5 795.0,903.5 790.0,896.0 775.0,888.5 755.0,882.2 745.0,877.2 742.5,866.0 747.5,856.0 755.0,846.0 755.0,831.0"/><polyline points="795.0,387.5 805.0,390.0 812.5,400.0 825.0,407.5 837.5,405.0 855.0,407.5 857.5,397.5 870.0,392.5 880.0,392.5 887.5,385.0 890.0,377.5 897.5,387.5 900.0,395.0 920.0,397.5 935.0,390.0 955.0,377.5 970.0,362.5 977.5,352.5 970.0,340.0 967.5,330.0 970.0,319.0"/><polyline points="935.0,390.0 955.0,385.0 970.0,380.0 975.0,387.5 967.5,392.5 960.0,397.5 955.0,405.0 950.0,415.0 957.5,430.0 967.5,442.5 970.0,435.0 972.5,440.0 990.0,425.0 1015.0,390.0 1010.0,380.0 1027.5,372.5 1045.0,365.0 1060.0,357.5 1077.5,352.5 1095.0,347.5 1110.0,342.5 1120.0,347.5 1117.5,340.0 1120.0,330.0"/><polyline points="1120.0,347.5 1150.0,380.0 1180.0,410.0"/><polyline points="1180.0,410.0 1192.5,402.5 1205.0,405.0 1210.0,404.0"/><polyline points="912.5,505.0 907.5,495.0 915.0,485.0 930.0,475.0 947.5,470.0 947.5,460.0 935.0,455.0 927.5,437.5 932.5,432.5 945.0,440.0 955.0,445.0 957.5,430.0"/><polyline points="795.0,510.0 810.0,500.0 827.5,485.0 845.0,470.0 865.0,450.0 877.5,435.0 885.0,425.0 880.0,417.5 877.5,405.0 890.0,402.5 900.0,395.0"/><polyline points="885.0,425.0 900.0,415.0 920.0,405.0 935.0,390.0"/><polyline points="877.5,435.0 875.0,457.5 865.0,475.0 870.0,480.0 882.5,480.0 895.0,490.0 905.0,502.5 912.5,505.0 907.5,520.0 890.0,527.5 885.0,535.0 870.0,530.0 850.0,532.5 835.0,537.5 820.0,540.0 810.0,530.0 812.5,520.0 807.5,510.0 820.0,505.0 827.5,492.5 840.0,480.0 852.5,470.0 865.0,450.0"/><polyline points="795.0,545.0 820.0,540.0"/><polyline points="850.0,532.5 845.0,542.5 842.5,550.0 855.0,555.0 875.0,560.0 880.0,580.0 882.5,595.0"/><polyline points="842.5,550.0 832.5,560.0 822.5,580.0 817.5,595.0"/></g><g clip-path="url(#cp1)"><polygon points="633.3,378.3 957.3,378.3 957.3,558.7 633.3,558.7" fill="#4ecfc2"/><polygon points="635.0,380.0 708.5,380.0 710.2,390.0 706.8,405.1 701.8,408.4 693.5,406.7 685.1,413.4 671.7,421.8 666.7,430.1 656.7,415.1 641.7,396.7 635.0,395.0" fill="#1a5fe3" stroke="#1a5fe3" stroke-width="3" stroke-linejoin="round"/><polygon points="711.8,380.0 805.4,380.0 800.3,386.7 782.0,410.1 773.6,403.4 766.9,400.0 761.9,406.7 751.9,413.4 745.2,416.7 735.2,421.8 728.5,426.8 718.5,418.4 708.5,411.7 706.8,405.1 710.2,390.0" fill="#2643d9" stroke="#2643d9" stroke-width="3" stroke-linejoin="round"/><polygon points="807.0,378.3 957.3,378.3 957.3,383.3 935.6,391.7 925.6,395.0 908.9,393.4 898.9,391.7 892.2,385.0 885.5,395.0 875.5,398.4 868.8,401.7 858.8,400.0 852.1,410.1 840.4,408.4 827.1,406.7 812.0,398.4 808.7,386.7" fill="#d98a52" stroke="#d98a52" stroke-width="3" stroke-linejoin="round"/><polygon points="666.7,430.1 671.7,421.8 685.1,413.4 693.5,406.7 701.8,408.4 708.5,411.7 718.5,418.4 728.5,426.8 735.2,421.8 745.2,416.7 751.9,413.4 761.9,406.7 766.9,400.0 773.6,403.4 780.3,411.7 765.3,438.5 758.6,450.1 751.9,460.2 743.6,468.5 728.5,470.2 725.2,480.2 710.2,486.9 706.8,491.9 701.8,495.2 698.5,486.9 691.8,478.5 668.4,478.5 663.4,473.5 666.7,465.2 660.1,455.2 661.7,441.8" fill="#3595e9" stroke="#3595e9" stroke-width="3" stroke-linejoin="round"/><polygon points="633.3,396.7 641.7,396.7 656.7,415.1 666.7,430.1 661.7,441.8 660.1,455.2 666.7,465.2 663.4,473.5 668.4,478.5 691.8,478.5 698.5,486.9 701.8,495.2 698.5,500.3 706.8,513.6 708.5,525.3 705.1,538.7 708.5,558.7 633.3,558.7" fill="#ee6f3a" stroke="#ee6f3a" stroke-width="3" stroke-linejoin="round"/><polygon points="705.1,506.9 710.2,486.9 725.2,480.2 728.5,470.2 741.9,473.5 741.9,480.2 735.2,496.9 736.9,510.3 730.2,540.3 716.8,543.7 715.2,530.3 710.2,527.0 708.5,513.6" fill="#62e8cf" stroke="#62e8cf" stroke-width="3" stroke-linejoin="round"/><polygon points="735.2,513.6 748.6,513.6 756.9,523.6 768.6,530.3 782.0,535.3 785.3,540.3 787.0,558.7 728.5,558.7 731.9,540.3 736.9,527.0" fill="#f05a9a" stroke="#f05a9a" stroke-width="3" stroke-linejoin="round"/><polygon points="840.4,471.9 858.8,461.8 862.1,470.2 865.5,478.5 868.8,481.9 882.2,481.9 892.2,486.9 902.2,503.6 908.9,508.6 905.6,520.3 892.2,525.3 885.5,532.0 873.8,528.6 857.1,530.3 850.4,533.7 835.4,533.7 823.7,537.0 815.4,527.0 812.0,517.0 808.7,508.6 813.7,498.6 827.1,483.5" fill="#4a78e8" stroke="#4a78e8" stroke-width="3" stroke-linejoin="round"/><polygon points="875.5,435.1 885.5,425.1 898.9,413.4 918.9,403.4 932.3,400.0 944.0,401.7 949.0,406.7 947.3,421.8 947.3,433.4 928.9,430.1 925.6,436.8 932.3,446.8 940.6,455.2 947.3,461.8 945.6,470.2 928.9,475.2 918.9,483.5 908.9,496.9 905.6,503.6 892.2,486.9 882.2,481.9 868.8,481.9 865.5,478.5 873.8,455.2 878.8,443.5" fill="#84d98a" stroke="#84d98a" stroke-width="3" stroke-linejoin="round"/><polygon points="928.9,430.1 947.3,433.4 957.3,443.5 957.3,530.3 940.6,525.3 928.9,522.0 917.3,513.6 912.2,505.3 908.9,496.9 918.9,483.5 928.9,475.2 945.6,470.2 947.3,461.8 940.6,455.2 932.3,446.8 925.6,436.8" fill="#e8d157" stroke="#e8d157" stroke-width="3" stroke-linejoin="round"/><polygon points="883.9,421.8 908.9,400.0 925.6,395.0 935.6,391.7 957.3,383.3 957.3,390.0 935.6,396.7 918.9,403.4 898.9,413.4 885.5,425.1" fill="#5b9bd5" stroke="#5b9bd5" stroke-width="3" stroke-linejoin="round"/><polygon points="877.2,413.4 885.5,415.1 895.5,398.4 908.9,394.2 885.5,395.0 875.5,398.4" fill="#8fc4e0" stroke="#8fc4e0" stroke-width="3" stroke-linejoin="round"/><polygon points="835.4,547.0 850.4,533.7 857.1,530.3 873.8,528.6 885.5,532.0 892.2,525.3 905.6,520.3 908.9,508.6 912.2,505.3 917.3,513.6 928.9,522.0 940.6,525.3 957.3,530.3 957.3,558.7 833.7,558.7" fill="#18e5d0" stroke="#18e5d0" stroke-width="3" stroke-linejoin="round"/><polygon points="718.5,558.7 725.2,553.7 738.5,552.0 751.9,554.5 755.3,558.7" fill="#aad3df"/><polygon points="843.8,493.6 850.4,491.9 848.8,496.9" fill="#4a78e8"/><path d="M708 444h2v2h-2zM715 436h2v2h-2zM721 434h2v2h-2zM713 437h2v2h-2zM717 441h2v2h-2zM724 435h2v2h-2zM726 434h2v2h-2zM718 444h2v2h-2zM717 433h2v2h-2zM715 438h2v2h-2zM729 433h2v2h-2zM728 427h2v2h-2zM724 432h2v2h-2zM734 434h2v2h-2zM729 432h2v2h-2zM723 431h2v2h-2zM726 436h2v2h-2zM733 434h2v2h-2zM726 437h2v2h-2zM731 434h2v2h-2zM731 431h2v2h-2zM727 432h2v2h-2zM731 428h2v2h-2zM728 440h2v2h-2zM739 428h2v2h-2zM740 427h2v2h-2zM743 429h2v2h-2zM737 429h2v2h-2zM734 420h2v2h-2zM740 426h2v2h-2zM737 426h2v2h-2zM737 425h2v2h-2zM648 444h2v2h-2zM648 456h2v2h-2zM648 438h2v2h-2zM649 453h2v2h-2zM642 457h2v2h-2zM646 452h2v2h-2zM655 440h2v2h-2zM642 464h2v2h-2zM650 449h2v2h-2zM644 452h2v2h-2zM641 451h2v2h-2zM653 439h2v2h-2zM650 439h2v2h-2zM646 459h2v2h-2zM636 467h2v2h-2zM632 466h2v2h-2zM637 466h2v2h-2zM640 464h2v2h-2zM643 467h2v2h-2zM639 469h2v2h-2zM638 460h2v2h-2zM638 476h2v2h-2zM631 472h2v2h-2zM641 466h2v2h-2zM635 471h2v2h-2zM716 510h2v2h-2zM711 500h2v2h-2zM715 499h2v2h-2zM718 496h2v2h-2zM719 504h2v2h-2zM716 499h2v2h-2zM717 508h2v2h-2zM714 500h2v2h-2zM719 499h2v2h-2zM715 499h2v2h-2zM716 503h2v2h-2zM715 509h2v2h-2zM721 503h2v2h-2zM721 518h2v2h-2zM724 528h2v2h-2zM713 517h2v2h-2zM720 516h2v2h-2zM717 514h2v2h-2zM716 519h2v2h-2zM720 512h2v2h-2zM725 509h2v2h-2zM721 517h2v2h-2zM722 530h2v2h-2zM724 530h2v2h-2zM721 512h2v2h-2zM716 512h2v2h-2zM713 525h2v2h-2zM725 533h2v2h-2zM718 527h2v2h-2zM718 516h2v2h-2zM717 512h2v2h-2zM716 523h2v2h-2zM721 509h2v2h-2zM825 394h2v2h-2zM824 385h2v2h-2zM823 388h2v2h-2zM822 382h2v2h-2zM824 394h2v2h-2zM825 388h2v2h-2zM824 392h2v2h-2zM866 387h2v2h-2zM770 477h2v2h-2zM774 474h2v2h-2zM781 459h2v2h-2zM773 461h2v2h-2zM773 476h2v2h-2zM780 471h2v2h-2zM772 490h2v2h-2zM774 484h2v2h-2zM774 490h2v2h-2zM767 484h2v2h-2zM781 484h2v2h-2zM773 477h2v2h-2zM783 466h2v2h-2zM786 469h2v2h-2zM784 467h2v2h-2zM782 465h2v2h-2zM780 463h2v2h-2zM785 463h2v2h-2zM785 476h2v2h-2zM784 478h2v2h-2zM787 476h2v2h-2zM787 478h2v2h-2zM783 483h2v2h-2zM789 481h2v2h-2zM847 427h2v2h-2zM842 426h2v2h-2zM851 430h2v2h-2zM844 425h2v2h-2zM846 430h2v2h-2zM846 427h2v2h-2zM852 432h2v2h-2zM849 428h2v2h-2zM861 448h2v2h-2zM856 446h2v2h-2zM857 445h2v2h-2zM858 454h2v2h-2zM851 434h2v2h-2zM859 437h2v2h-2zM857 430h2v2h-2zM856 436h2v2h-2zM857 434h2v2h-2zM859 442h2v2h-2zM850 430h2v2h-2zM850 435h2v2h-2zM954 492h2v2h-2zM951 493h2v2h-2zM946 504h2v2h-2zM931 496h2v2h-2zM928 496h2v2h-2zM925 496h2v2h-2zM922 496h2v2h-2zM957 493h2v2h-2zM945 517h2v2h-2zM944 519h2v2h-2zM942 522h2v2h-2zM940 524h2v2h-2zM951 518h2v2h-2zM942 490h2v2h-2zM944 493h2v2h-2zM946 495h2v2h-2zM947 498h2v2h-2zM952 484h2v2h-2zM938 486h2v2h-2zM940 515h2v2h-2zM938 517h2v2h-2zM934 501h2v2h-2zM957 509h2v2h-2zM960 510h2v2h-2zM962 512h2v2h-2zM965 513h2v2h-2zM937 507h2v2h-2zM940 509h2v2h-2zM942 511h2v2h-2zM945 513h2v2h-2zM945 512h2v2h-2zM945 515h2v2h-2zM945 518h2v2h-2zM944 521h2v2h-2zM936 503h2v2h-2zM939 509h2v2h-2zM943 506h2v2h-2zM946 506h2v2h-2zM948 507h2v2h-2zM951 507h2v2h-2zM954 522h2v2h-2zM952 523h2v2h-2zM949 524h2v2h-2zM943 514h2v2h-2zM946 515h2v2h-2zM948 516h2v2h-2zM935 494h2v2h-2zM937 496h2v2h-2zM956 500h2v2h-2zM938 511h2v2h-2zM941 512h2v2h-2zM946 522h2v2h-2zM946 525h2v2h-2zM946 528h2v2h-2zM948 501h2v2h-2zM949 504h2v2h-2zM950 507h2v2h-2zM951 509h2v2h-2zM938 500h2v2h-2zM935 501h2v2h-2zM932 502h2v2h-2zM955 513h2v2h-2zM937 520h2v2h-2zM937 523h2v2h-2zM937 526h2v2h-2zM949 509h2v2h-2zM948 494h2v2h-2zM934 511h2v2h-2zM931 512h2v2h-2zM935 498h2v2h-2z" fill="#1c1c1c"/><g filter="url(#rg)"><polygon points="683.4,411.7 690.1,390.0 701.8,380.0 708.5,380.0 706.8,396.7 701.8,406.7 691.8,408.4" fill="#1c1c1c" stroke="#1c1c1c" stroke-width="1.5" stroke-linejoin="round"/><polygon points="713.5,380.0 765.3,380.0 758.6,391.7 748.6,401.7 741.9,411.7 735.2,408.4 725.2,410.1 716.8,401.7 713.5,390.0" fill="#1c1c1c" stroke="#1c1c1c" stroke-width="1.5" stroke-linejoin="round"/><polygon points="665.1,453.5 670.1,438.5 676.8,428.4 688.4,421.8 698.5,415.1 706.8,423.4 710.2,431.8 701.8,436.8 711.8,438.5 708.5,450.1 701.8,455.2 705.1,466.8 700.1,480.2 691.8,470.2 681.8,468.5 673.4,466.8" fill="#1c1c1c" stroke="#1c1c1c" stroke-width="1.5" stroke-linejoin="round"/><polygon points="635.0,543.7 641.7,530.3 648.4,513.6 651.7,496.9 656.7,483.5 665.1,481.9 673.4,486.9 685.1,488.6 690.1,496.9 693.5,510.3 701.8,522.0 705.1,533.7 698.5,545.3 691.8,558.7 635.0,558.7" fill="#1c1c1c" stroke="#1c1c1c" stroke-width="1.5" stroke-linejoin="round"/><polygon points="748.6,505.3 761.9,500.3 772.0,493.6 780.3,480.2 785.3,470.2 795.3,473.5 805.4,466.8 803.7,456.8 810.4,463.5 817.0,470.2 825.4,478.5 832.1,460.2 838.8,450.1 842.1,436.8 845.4,426.8 850.4,430.1 848.8,440.1 857.1,446.8 845.4,455.2 835.4,466.8 827.1,480.2 818.7,490.2 808.7,500.3 802.0,513.6 808.7,530.3 817.0,538.7 827.1,545.3 823.7,558.7 793.7,558.7 788.7,538.7 778.6,530.3 766.9,527.0 755.3,518.6" fill="#1c1c1c" stroke="#1c1c1c" stroke-width="1.5" stroke-linejoin="round"/><polygon points="815.4,523.6 818.7,510.3 828.7,500.3 840.4,486.9 850.4,473.5 857.1,470.2 860.5,483.5 868.8,490.2 878.8,496.9 882.2,503.6 872.2,506.9 865.5,518.6 852.1,517.0 842.1,525.3 832.1,533.7 822.1,533.7" fill="#1c1c1c" stroke="#1c1c1c" stroke-width="1.5" stroke-linejoin="round"/><polygon points="888.9,460.2 890.5,443.5 898.9,428.4 910.6,416.7 913.9,428.4 910.6,441.8 918.9,446.8 922.3,456.8 915.6,466.8 918.9,478.5 908.9,486.9 902.2,480.2 895.5,470.2" fill="#1c1c1c" stroke="#1c1c1c" stroke-width="1.5" stroke-linejoin="round"/><polygon points="932.3,410.1 940.6,403.4 947.3,406.7 945.6,418.4 944.0,430.1 939.0,423.4" fill="#1c1c1c" stroke="#1c1c1c" stroke-width="1.5" stroke-linejoin="round"/><polygon points="736.9,517.0 748.6,518.6 758.6,528.6 768.6,533.7 780.3,538.7 782.0,558.7 763.6,558.7 751.9,547.0 739.4,544.5 738.5,535.3" fill="#1c1c1c" stroke="#1c1c1c" stroke-width="1.5" stroke-linejoin="round"/><polygon points="945.6,390.0 957.3,386.7 957.3,395.0 949.0,395.0" fill="#1c1c1c" stroke="#1c1c1c" stroke-width="1.5" stroke-linejoin="round"/></g><g fill="none" stroke="#fff" stroke-width="7.5" stroke-linejoin="round" stroke-linecap="round"><polyline points="635.0,395.0 641.7,396.7 656.7,401.7 658.4,415.1 666.7,418.4 666.7,430.1"/><polyline points="666.7,430.1 671.7,421.8 685.1,413.4 693.5,406.7 701.8,408.4 708.5,411.7 718.5,418.4 728.5,426.8 735.2,421.8 745.2,416.7 745.2,413.4 751.9,413.4 755.3,408.4 761.9,406.7 766.9,400.0 773.6,403.4 780.3,411.7"/><polyline points="708.5,411.7 706.8,405.1 710.2,390.0 710.2,378.3"/><polyline points="780.3,411.7 790.3,398.4 800.3,386.7 808.7,386.7"/><polyline points="808.7,378.3 808.7,386.7 812.0,398.4 827.1,406.7 840.4,408.4 852.1,410.1 858.8,400.0 868.8,401.7 875.5,398.4 885.5,395.0 892.2,385.0 898.9,391.7 908.9,393.4 925.6,395.0 935.6,391.7 957.3,383.3"/><polyline points="780.3,411.7 765.3,438.5 761.9,450.1 758.6,450.1 751.9,460.2 743.6,468.5 741.9,473.5"/><polyline points="666.7,430.1 661.7,441.8 660.1,455.2 666.7,465.2 663.4,473.5 668.4,478.5 691.8,478.5 698.5,486.9 701.8,495.2"/><polyline points="701.8,495.2 706.8,491.9 710.2,486.9 725.2,480.2 728.5,470.2 741.9,473.5 741.9,480.2 735.2,496.9 738.5,506.9"/><polyline points="701.8,495.2 698.5,500.3 706.8,513.6 708.5,525.3 710.2,527.0 715.2,530.3 715.2,540.3 730.2,542.0"/><polyline points="738.5,506.9 736.9,510.3 731.9,540.3 730.2,542.0 728.5,547.0 706.8,558.7"/><polyline points="738.5,506.9 748.6,513.6 756.9,523.6 768.6,530.3 782.0,535.3 785.3,540.3 787.0,558.7"/><polyline points="957.3,390.0 935.6,396.7 918.9,403.4 898.9,413.4 885.5,425.1 878.8,435.1 868.8,443.5 853.8,458.5 840.4,471.9 827.1,483.5 813.7,498.6 808.7,508.6 812.0,517.0 815.4,527.0 810.4,530.3 818.7,540.3 828.7,543.7 835.4,547.0 850.4,533.7"/><polyline points="875.5,398.4 877.2,413.4 883.9,421.8 885.5,425.1"/><polyline points="883.9,421.8 908.9,400.0 925.6,395.0"/><polyline points="885.5,435.1 875.5,436.8 858.8,461.8 840.4,473.5"/><polyline points="885.5,435.1 868.8,473.5 865.5,478.5 868.8,481.9 882.2,481.9 892.2,486.9 902.2,503.6 908.9,496.9"/><polyline points="908.9,496.9 918.9,483.5 928.9,475.2 945.6,470.2 947.3,461.8 940.6,455.2 932.3,446.8 925.6,436.8 928.9,430.1 947.3,433.4 957.3,436.8"/><polyline points="908.9,496.9 912.2,505.3 908.9,508.6 905.6,520.3 892.2,525.3 885.5,532.0 873.8,528.6 857.1,530.3 850.4,533.7"/><polyline points="912.2,505.3 917.3,513.6 928.9,522.0 940.6,525.3 957.3,530.3"/><polyline points="949.0,406.7 947.3,421.8 952.3,426.8 957.3,428.4"/><polyline points="835.4,547.0 833.7,558.7"/></g><g fill="none" stroke="#1c1c1c" stroke-width="1" stroke-linejoin="round" stroke-linecap="round"><polyline points="635.0,395.0 641.7,396.7 656.7,401.7 658.4,415.1 666.7,418.4 666.7,430.1"/><polyline points="666.7,430.1 671.7,421.8 685.1,413.4 693.5,406.7 701.8,408.4 708.5,411.7 718.5,418.4 728.5,426.8 735.2,421.8 745.2,416.7 745.2,413.4 751.9,413.4 755.3,408.4 761.9,406.7 766.9,400.0 773.6,403.4 780.3,411.7"/><polyline points="708.5,411.7 706.8,405.1 710.2,390.0 710.2,378.3"/><polyline points="780.3,411.7 790.3,398.4 800.3,386.7 808.7,386.7"/><polyline points="808.7,378.3 808.7,386.7 812.0,398.4 827.1,406.7 840.4,408.4 852.1,410.1 858.8,400.0 868.8,401.7 875.5,398.4 885.5,395.0 892.2,385.0 898.9,391.7 908.9,393.4 925.6,395.0 935.6,391.7 957.3,383.3"/><polyline points="780.3,411.7 765.3,438.5 761.9,450.1 758.6,450.1 751.9,460.2 743.6,468.5 741.9,473.5"/><polyline points="666.7,430.1 661.7,441.8 660.1,455.2 666.7,465.2 663.4,473.5 668.4,478.5 691.8,478.5 698.5,486.9 701.8,495.2"/><polyline points="701.8,495.2 706.8,491.9 710.2,486.9 725.2,480.2 728.5,470.2 741.9,473.5 741.9,480.2 735.2,496.9 738.5,506.9"/><polyline points="701.8,495.2 698.5,500.3 706.8,513.6 708.5,525.3 710.2,527.0 715.2,530.3 715.2,540.3 730.2,542.0"/><polyline points="738.5,506.9 736.9,510.3 731.9,540.3 730.2,542.0 728.5,547.0 706.8,558.7"/><polyline points="738.5,506.9 748.6,513.6 756.9,523.6 768.6,530.3 782.0,535.3 785.3,540.3 787.0,558.7"/><polyline points="957.3,390.0 935.6,396.7 918.9,403.4 898.9,413.4 885.5,425.1 878.8,435.1 868.8,443.5 853.8,458.5 840.4,471.9 827.1,483.5 813.7,498.6 808.7,508.6 812.0,517.0 815.4,527.0 810.4,530.3 818.7,540.3 828.7,543.7 835.4,547.0 850.4,533.7"/><polyline points="875.5,398.4 877.2,413.4 883.9,421.8 885.5,425.1"/><polyline points="883.9,421.8 908.9,400.0 925.6,395.0"/><polyline points="885.5,435.1 875.5,436.8 858.8,461.8 840.4,473.5"/><polyline points="885.5,435.1 868.8,473.5 865.5,478.5 868.8,481.9 882.2,481.9 892.2,486.9 902.2,503.6 908.9,496.9"/><polyline points="908.9,496.9 918.9,483.5 928.9,475.2 945.6,470.2 947.3,461.8 940.6,455.2 932.3,446.8 925.6,436.8 928.9,430.1 947.3,433.4 957.3,436.8"/><polyline points="908.9,496.9 912.2,505.3 908.9,508.6 905.6,520.3 892.2,525.3 885.5,532.0 873.8,528.6 857.1,530.3 850.4,533.7"/><polyline points="912.2,505.3 917.3,513.6 928.9,522.0 940.6,525.3 957.3,530.3"/><polyline points="949.0,406.7 947.3,421.8 952.3,426.8 957.3,428.4"/><polyline points="835.4,547.0 833.7,558.7"/></g></g><g clip-path="url(#cp2)"><polygon points="633.3,202.3 957.3,202.3 957.3,382.7 633.3,382.7" fill="#aad3df"/><polygon points="799.5,202.3 957.3,202.3 957.3,382.7 803.7,382.7 798.7,364.3 808.7,354.3 810.4,337.6 802.0,324.3 808.7,320.9 808.7,312.6 802.0,307.5 793.7,302.5 787.0,300.9 778.6,292.5 766.9,289.2 763.6,284.2 773.6,277.5 787.0,244.1 782.0,242.4 756.9,241.6 758.6,229.9 799.5,232.4" fill="#d98a52" stroke="#d98a52" stroke-width="3" stroke-linejoin="round"/><polygon points="741.9,202.3 728.5,215.7 715.2,220.7 708.5,232.4 703.5,244.1 706.8,252.4 721.8,257.4 728.5,267.5 735.2,274.1 741.9,287.5 745.2,304.2 743.6,320.9 750.2,302.5 758.6,294.2 755.3,287.5 763.6,284.2 773.6,277.5 787.0,244.1 782.0,242.4 756.9,241.6 758.6,229.9 799.5,232.4 799.5,202.3" fill="#e85fd2" stroke="#e85fd2" stroke-width="3" stroke-linejoin="round"/><polygon points="750.2,317.6 755.3,310.9 766.9,302.5 770.3,300.9 777.0,312.6 790.3,310.9 795.3,317.6 802.0,319.2 795.3,320.9 782.0,322.6 768.6,322.6 758.6,317.6 751.9,320.9" fill="#e85fd2" stroke="#e85fd2" stroke-width="3" stroke-linejoin="round"/><polygon points="770.3,300.9 777.0,297.5 787.0,304.2 798.7,310.9 807.0,317.6 802.0,319.2 795.3,317.6 790.3,310.9 777.0,312.6" fill="#d98a52" stroke="#d98a52" stroke-width="3" stroke-linejoin="round"/><polygon points="745.2,320.9 741.9,312.6 738.5,304.2 728.5,300.9 721.8,294.2 713.5,299.2 703.5,304.2 696.8,312.6 698.5,320.9 690.1,324.3 681.8,324.3 671.7,327.6 661.7,335.9 655.0,337.6 653.4,346.0 645.0,351.0 641.7,359.3 633.3,363.5 633.3,382.7 708.5,382.7 705.1,371.0 701.8,359.3 705.1,351.0 715.2,344.3 728.5,337.6 738.5,330.9" fill="#1a5fe3" stroke="#1a5fe3" stroke-width="3" stroke-linejoin="round"/><polygon points="745.2,324.3 802.0,327.6 810.4,337.6 808.7,354.3 798.7,364.3 803.7,382.7 710.2,382.7 708.5,364.3 718.5,351.0 735.2,334.3" fill="#2643d9" stroke="#2643d9" stroke-width="3" stroke-linejoin="round"/><polygon points="745.2,320.9 738.5,330.9 728.5,337.6 715.2,344.3 705.1,351.0 701.8,359.3 705.1,371.0 708.5,382.7 710.2,382.7 711.8,371.0 721.8,359.3 728.5,349.3 713.5,364.3 708.5,359.3 713.5,351.0 728.5,342.6" fill="#1a5fe3"/><polygon points="751.9,354.3 758.6,349.3 761.9,359.3 755.3,364.3" fill="#2643d9"/><polyline points="741.9,202.3 728.5,215.7 715.2,220.7 708.5,232.4 703.5,244.1 706.8,252.4 721.8,257.4 728.5,267.5 735.2,274.1 741.9,287.5 745.2,304.2 743.6,320.9" fill="none" stroke="#e85fd2" stroke-width="13.333333333333334" stroke-linejoin="round"/><polyline points="745.2,320.9 741.9,312.6 738.5,304.2 728.5,300.9 721.8,294.2 713.5,299.2 703.5,304.2 696.8,312.6 698.5,320.9 690.1,324.3 681.8,324.3 671.7,327.6 661.7,335.9 655.0,337.6 653.4,346.0 645.0,351.0 641.7,359.3 633.3,363.5" fill="none" stroke="#1a5fe3" stroke-width="13.333333333333334" stroke-linejoin="round"/><path d="M744 234h2v2h-2zM742 232h2v2h-2zM745 229h2v2h-2zM744 235h2v2h-2zM744 236h2v2h-2zM743 238h2v2h-2zM743 241h2v2h-2zM736 247h2v2h-2zM743 240h2v2h-2zM739 245h2v2h-2zM739 241h2v2h-2zM737 247h2v2h-2zM734 248h2v2h-2zM735 250h2v2h-2zM838 216h2v2h-2zM844 205h2v2h-2zM836 214h2v2h-2zM845 207h2v2h-2zM840 215h2v2h-2zM834 219h2v2h-2zM839 213h2v2h-2zM840 210h2v2h-2zM844 204h2v2h-2zM841 210h2v2h-2zM834 220h2v2h-2zM834 224h2v2h-2zM834 223h2v2h-2zM835 226h2v2h-2zM833 225h2v2h-2zM833 220h2v2h-2zM840 248h2v2h-2zM839 245h2v2h-2zM841 250h2v2h-2zM838 242h2v2h-2zM840 247h2v2h-2zM839 243h2v2h-2zM843 251h2v2h-2zM841 250h2v2h-2zM841 252h2v2h-2zM843 260h2v2h-2zM844 260h2v2h-2zM842 261h2v2h-2zM841 263h2v2h-2zM839 265h2v2h-2zM834 268h2v2h-2zM842 261h2v2h-2zM841 261h2v2h-2zM831 270h2v2h-2zM836 269h2v2h-2zM833 272h2v2h-2zM832 271h2v2h-2zM835 270h2v2h-2zM826 277h2v2h-2zM828 275h2v2h-2zM819 284h2v2h-2zM821 282h2v2h-2zM822 284h2v2h-2zM816 288h2v2h-2zM820 283h2v2h-2zM822 281h2v2h-2zM815 298h2v2h-2zM815 292h2v2h-2zM817 287h2v2h-2zM814 303h2v2h-2zM814 301h2v2h-2zM815 302h2v2h-2zM814 298h2v2h-2zM815 289h2v2h-2zM814 300h2v2h-2zM812 323h2v2h-2zM811 319h2v2h-2zM811 311h2v2h-2zM812 306h2v2h-2zM810 321h2v2h-2zM814 312h2v2h-2zM811 316h2v2h-2zM811 316h2v2h-2zM812 320h2v2h-2zM813 321h2v2h-2zM820 327h2v2h-2zM820 324h2v2h-2zM814 320h2v2h-2zM850 271h2v2h-2zM848 271h2v2h-2zM848 271h2v2h-2zM852 283h2v2h-2zM853 277h2v2h-2zM851 276h2v2h-2zM854 282h2v2h-2zM850 278h2v2h-2zM851 284h2v2h-2zM851 286h2v2h-2zM847 290h2v2h-2zM847 288h2v2h-2zM851 284h2v2h-2zM846 289h2v2h-2zM845 294h2v2h-2zM845 294h2v2h-2zM845 296h2v2h-2zM840 297h2v2h-2zM844 298h2v2h-2zM843 299h2v2h-2zM843 300h2v2h-2zM844 293h2v2h-2zM842 314h2v2h-2zM840 311h2v2h-2zM839 308h2v2h-2zM833 284h2v2h-2zM838 286h2v2h-2zM839 287h2v2h-2zM834 285h2v2h-2zM855 301h2v2h-2zM856 303h2v2h-2zM861 300h2v2h-2zM853 302h2v2h-2zM858 297h2v2h-2zM804 286h2v2h-2zM809 287h2v2h-2zM813 287h2v2h-2zM810 284h2v2h-2zM807 286h2v2h-2zM803 291h2v2h-2zM806 290h2v2h-2zM913 309h2v2h-2zM919 301h2v2h-2zM915 305h2v2h-2zM915 303h2v2h-2zM914 305h2v2h-2zM908 307h2v2h-2zM916 306h2v2h-2zM914 304h2v2h-2zM912 307h2v2h-2zM912 307h2v2h-2zM933 294h2v2h-2zM934 291h2v2h-2zM931 295h2v2h-2zM929 298h2v2h-2zM933 295h2v2h-2zM929 300h2v2h-2zM939 291h2v2h-2zM930 294h2v2h-2zM932 315h2v2h-2zM931 321h2v2h-2zM933 311h2v2h-2zM929 319h2v2h-2zM931 314h2v2h-2zM929 314h2v2h-2zM930 311h2v2h-2zM932 321h2v2h-2zM932 323h2v2h-2zM939 327h2v2h-2zM933 323h2v2h-2zM938 327h2v2h-2zM935 324h2v2h-2zM938 327h2v2h-2zM945 335h2v2h-2zM942 332h2v2h-2zM941 330h2v2h-2zM945 333h2v2h-2zM947 336h2v2h-2zM944 335h2v2h-2zM947 340h2v2h-2zM887 323h2v2h-2zM878 328h2v2h-2zM883 326h2v2h-2zM881 326h2v2h-2zM888 323h2v2h-2zM886 323h2v2h-2zM878 329h2v2h-2zM888 324h2v2h-2zM872 329h2v2h-2zM877 330h2v2h-2zM874 333h2v2h-2zM872 329h2v2h-2zM863 338h2v2h-2zM873 329h2v2h-2zM866 337h2v2h-2zM864 335h2v2h-2zM863 338h2v2h-2zM860 344h2v2h-2zM863 333h2v2h-2zM860 345h2v2h-2zM861 346h2v2h-2zM863 348h2v2h-2zM864 349h2v2h-2zM870 348h2v2h-2zM862 349h2v2h-2zM872 346h2v2h-2zM872 346h2v2h-2zM866 348h2v2h-2zM851 330h2v2h-2zM849 338h2v2h-2zM851 326h2v2h-2zM850 331h2v2h-2zM853 324h2v2h-2zM849 329h2v2h-2zM846 342h2v2h-2zM845 343h2v2h-2zM844 346h2v2h-2zM850 339h2v2h-2zM844 346h2v2h-2zM847 341h2v2h-2zM847 342h2v2h-2zM833 346h2v2h-2zM837 346h2v2h-2zM842 349h2v2h-2zM836 347h2v2h-2zM833 341h2v2h-2zM830 342h2v2h-2zM836 344h2v2h-2zM834 331h2v2h-2zM832 343h2v2h-2zM833 335h2v2h-2zM832 349h2v2h-2zM834 354h2v2h-2zM832 351h2v2h-2zM835 349h2v2h-2zM832 355h2v2h-2zM833 351h2v2h-2zM833 338h2v2h-2zM837 352h2v2h-2zM827 364h2v2h-2zM832 356h2v2h-2zM830 359h2v2h-2zM833 356h2v2h-2zM830 360h2v2h-2zM833 356h2v2h-2zM831 357h2v2h-2zM827 370h2v2h-2zM826 376h2v2h-2zM828 367h2v2h-2zM826 374h2v2h-2zM829 380h2v2h-2zM824 377h2v2h-2zM825 380h2v2h-2zM805 356h2v2h-2zM807 358h2v2h-2zM808 353h2v2h-2zM873 360h2v2h-2zM885 363h2v2h-2zM876 359h2v2h-2zM881 361h2v2h-2zM880 360h2v2h-2zM873 358h2v2h-2zM884 362h2v2h-2zM870 267h2v2h-2zM871 265h2v2h-2z" fill="#1c1c1c"/><g filter="url(#rg)"><polygon points="761.9,204.0 775.3,204.0 772.0,209.0 766.9,212.4 763.6,209.0" fill="#1c1c1c" stroke="#1c1c1c" stroke-width="1.5" stroke-linejoin="round"/><polygon points="730.2,257.4 735.2,255.8 741.9,267.5 750.2,272.5 750.2,279.2 745.2,280.8 741.9,274.1 735.2,267.5" fill="#1c1c1c" stroke="#1c1c1c" stroke-width="1.5" stroke-linejoin="round"/><polygon points="745.2,284.2 750.2,282.5 755.3,292.5 758.6,295.9 751.9,300.9 748.6,304.2 746.9,294.2" fill="#1c1c1c" stroke="#1c1c1c" stroke-width="1.5" stroke-linejoin="round"/><polygon points="683.4,334.3 691.8,330.9 701.8,320.9 705.1,312.6 711.8,310.9 718.5,320.9 721.8,330.9 715.2,337.6 706.8,342.6 701.8,351.0 695.1,347.6 690.1,341.0" fill="#1c1c1c" stroke="#1c1c1c" stroke-width="1.5" stroke-linejoin="round"/><polygon points="685.1,362.7 693.5,359.3 698.5,364.3 701.8,382.7 688.4,382.7" fill="#1c1c1c" stroke="#1c1c1c" stroke-width="1.5" stroke-linejoin="round"/><polygon points="711.8,382.7 721.8,361.0 735.2,342.6 746.9,327.6 768.6,329.3 785.3,330.9 798.7,330.9 808.7,337.6 808.7,347.6 802.0,354.3 792.0,361.0 785.3,367.7 778.6,364.3 768.6,371.0 765.3,382.7" fill="#1c1c1c" stroke="#1c1c1c" stroke-width="1.5" stroke-linejoin="round"/></g><g fill="none" stroke="#fff" stroke-width="7.5" stroke-linejoin="round" stroke-linecap="round"><polyline points="822.1,202.3 813.7,209.0 810.4,219.0 813.7,229.1 820.4,244.9 787.0,244.1 782.0,254.1 775.3,274.1 765.3,282.5 756.9,289.2 759.4,295.0 751.9,302.5 746.9,310.9 745.2,320.9"/><polyline points="756.9,287.5 763.6,284.2 772.0,289.2 766.9,292.5 758.6,294.2"/><polyline points="772.0,289.2 778.6,292.5 787.0,300.9 793.7,302.5 802.0,307.5 808.7,312.6 808.7,320.9 802.0,324.3"/><polyline points="745.2,320.9 751.9,319.2 758.6,314.2 763.6,312.6 765.3,319.2 772.0,324.3 782.0,322.6 790.3,324.3 798.7,320.9 802.0,324.3"/><polyline points="802.0,324.3 810.4,327.6 815.4,337.6 822.1,346.0 828.7,346.0 820.4,354.3 813.7,364.3 812.0,382.7"/><polyline points="745.2,320.9 738.5,330.9 728.5,337.6 715.2,344.3 705.1,351.0 701.8,359.3 705.1,371.0 708.5,382.7"/><polyline points="746.9,324.3 735.2,342.6 721.8,359.3 711.8,371.0 710.2,382.7"/><polyline points="741.9,202.3 728.5,215.7 715.2,220.7 708.5,232.4 703.5,244.1 706.8,252.4 721.8,257.4 728.5,267.5 735.2,274.1 741.9,287.5 745.2,304.2 743.6,320.9"/><polyline points="745.2,320.9 741.9,312.6 738.5,304.2 728.5,300.9 721.8,294.2 713.5,299.2 703.5,304.2 696.8,312.6 698.5,320.9 690.1,324.3 681.8,324.3 671.7,327.6 661.7,335.9 655.0,337.6 653.4,346.0 645.0,351.0 641.7,359.3 633.3,363.5"/></g><g fill="none" stroke="#1c1c1c" stroke-width="1" stroke-linejoin="round" stroke-linecap="round"><polyline points="822.1,202.3 813.7,209.0 810.4,219.0 813.7,229.1 820.4,244.9 787.0,244.1 782.0,254.1 775.3,274.1 765.3,282.5 756.9,289.2 759.4,295.0 751.9,302.5 746.9,310.9 745.2,320.9"/><polyline points="756.9,287.5 763.6,284.2 772.0,289.2 766.9,292.5 758.6,294.2"/><polyline points="772.0,289.2 778.6,292.5 787.0,300.9 793.7,302.5 802.0,307.5 808.7,312.6 808.7,320.9 802.0,324.3"/><polyline points="745.2,320.9 751.9,319.2 758.6,314.2 763.6,312.6 765.3,319.2 772.0,324.3 782.0,322.6 790.3,324.3 798.7,320.9 802.0,324.3"/><polyline points="802.0,324.3 810.4,327.6 815.4,337.6 822.1,346.0 828.7,346.0 820.4,354.3 813.7,364.3 812.0,382.7"/><polyline points="745.2,320.9 738.5,330.9 728.5,337.6 715.2,344.3 705.1,351.0 701.8,359.3 705.1,371.0 708.5,382.7"/><polyline points="746.9,324.3 735.2,342.6 721.8,359.3 711.8,371.0 710.2,382.7"/><polyline points="741.9,202.3 728.5,215.7 715.2,220.7 708.5,232.4 703.5,244.1 706.8,252.4 721.8,257.4 728.5,267.5 735.2,274.1 741.9,287.5 745.2,304.2 743.6,320.9"/><polyline points="745.2,320.9 741.9,312.6 738.5,304.2 728.5,300.9 721.8,294.2 713.5,299.2 703.5,304.2 696.8,312.6 698.5,320.9 690.1,324.3 681.8,324.3 671.7,327.6 661.7,335.9 655.0,337.6 653.4,346.0 645.0,351.0 641.7,359.3 633.3,363.5"/></g></g><g clip-path="url(#cp3)"><polygon points="538.3,554.3 862.3,554.3 862.3,734.7 538.3,734.7" fill="#aad3df"/><polygon points="538.3,554.3 563.4,554.3 560.0,569.4 573.4,581.1 586.8,587.7 588.4,601.1 580.1,606.1 566.7,614.5 556.7,622.8 550.0,631.2 538.3,640.3" fill="#3f9ccc" stroke="#3f9ccc" stroke-width="3" stroke-linejoin="round"/><polygon points="565.1,554.3 633.5,554.3 626.8,562.7 618.5,566.0 613.5,562.7 603.5,566.0 596.8,572.7 593.4,582.7 588.4,587.7 575.1,581.1 568.4,569.4" fill="#ee6f3a" stroke="#ee6f3a" stroke-width="3" stroke-linejoin="round"/><polygon points="588.4,587.7 593.4,582.7 596.8,572.7 603.5,566.0 613.5,562.7 618.5,566.0 626.8,562.7 633.5,554.3 640.2,554.3 643.5,562.7 653.6,564.4 660.3,571.0 671.9,569.4 678.6,564.4 685.3,569.4 700.3,569.4 673.6,589.4 648.6,607.8 640.2,612.8 633.5,607.8 630.2,604.4 618.5,599.4 606.8,604.4 595.1,606.1 588.4,601.1" fill="#e020e0" stroke="#e020e0" stroke-width="3" stroke-linejoin="round"/><polygon points="640.2,554.3 700.3,554.3 695.3,561.0 685.3,569.4 678.6,564.4 671.9,569.4 660.3,571.0 653.6,564.4 643.5,562.7" fill="#ee6f3a" stroke="#ee6f3a" stroke-width="3" stroke-linejoin="round"/><polygon points="787.2,554.3 823.9,554.3 820.6,566.0 813.9,581.1 800.5,589.4 790.5,591.1 787.2,581.1 785.5,569.4" fill="#4ecfc2" stroke="#4ecfc2" stroke-width="3" stroke-linejoin="round"/><polygon points="823.9,554.3 862.3,554.3 862.3,644.5 854.0,646.2 840.6,642.8 830.6,639.5 827.3,629.5 823.9,611.1 820.6,597.8 815.6,589.4 813.9,581.1 820.6,566.0" fill="#30c840" stroke="#30c840" stroke-width="3" stroke-linejoin="round"/><polygon points="830.6,639.5 840.6,642.8 854.0,646.2 862.3,642.8 862.3,734.7 787.2,734.7 800.5,709.7 807.2,696.3 817.2,672.9 823.9,649.5 827.3,634.5" fill="#18e5d0" stroke="#18e5d0" stroke-width="3" stroke-linejoin="round"/><polygon points="785.5,602.8 797.2,599.4 800.5,611.1 795.5,622.8 793.9,634.5 797.2,646.2 787.2,656.2 780.5,662.9 773.8,676.3 765.5,689.6 757.1,703.0 750.4,709.7 743.8,719.7 737.1,734.7 787.2,734.7 800.5,709.7 807.2,698.0 817.2,672.9 823.9,649.5 827.3,631.2 823.9,616.1 820.6,604.4 815.6,589.4 803.9,589.4 790.5,594.4 785.5,602.8" fill="#8868d0" stroke="#8868d0" stroke-width="3" stroke-linejoin="round"/><polygon points="538.3,640.3 550.0,631.2 556.7,622.8 566.7,614.5 580.1,611.1 588.4,619.5 595.1,622.8 601.8,629.5 603.5,642.8 608.5,649.5 606.8,659.5 598.5,666.2 590.1,672.9 580.1,679.6 566.7,679.6 553.4,682.9 538.3,687.1" fill="#e8b830" stroke="#e8b830" stroke-width="3" stroke-linejoin="round"/><polygon points="538.3,699.6 550.0,696.3 560.0,689.6 573.4,682.9 583.4,679.6 593.4,672.9 600.1,676.3 610.1,672.9 620.2,676.3 633.5,687.9 643.5,696.3 653.6,694.6 656.9,701.3 646.9,706.3 640.2,713.0 630.2,723.0 618.5,721.3 610.1,713.0 598.5,723.0 581.8,726.4 570.1,734.7 538.3,734.7" fill="#9a50d0" stroke="#9a50d0" stroke-width="3" stroke-linejoin="round"/><polygon points="656.9,703.0 663.6,706.3 671.9,703.0 677.0,689.6 680.3,672.9 683.6,659.5 687.0,651.2 693.7,659.5 700.3,666.2 697.0,679.6 693.7,693.0 695.3,706.3 703.7,716.3 707.0,734.7 643.5,734.7 646.9,716.3" fill="#58d888" stroke="#58d888" stroke-width="3" stroke-linejoin="round"/><polygon points="573.4,734.7 583.4,724.7 600.1,723.0 610.1,714.7 618.5,723.0 630.2,723.0 640.2,734.7" fill="#e0506a" stroke="#e0506a" stroke-width="3" stroke-linejoin="round"/><polygon points="610.1,587.7 615.2,584.4 613.5,591.1" fill="#e020e0"/><polygon points="656.9,581.1 661.9,577.7 660.3,584.4" fill="#e020e0"/><polygon points="570.1,649.5 576.7,646.2 573.4,654.5" fill="#e8b830"/><polygon points="840.6,589.4 849.0,586.1 845.6,599.4" fill="#30c840"/><polyline points="633.5,607.8 640.2,612.8 648.6,607.8 673.6,589.4 700.3,569.4" fill="none" stroke="#e020e0" stroke-width="16.5" stroke-linejoin="round"/><polyline points="700.3,569.4 713.7,557.7 717.0,554.3" fill="none" stroke="#62e8cf" stroke-width="16.5" stroke-linejoin="round"/><polyline points="748.8,554.3 762.1,559.3 773.8,566.0 780.5,574.4 785.5,586.1" fill="none" stroke="#f0509a" stroke-width="16.5" stroke-linejoin="round"/><polyline points="785.5,586.1 790.5,594.4" fill="none" stroke="#62e8cf" stroke-width="16.5" stroke-linejoin="round"/><polyline points="785.5,602.8 797.2,599.4 800.5,611.1 795.5,622.8 793.9,634.5 797.2,646.2 787.2,656.2 780.5,662.9 773.8,676.3 765.5,689.6 757.1,703.0 750.4,709.7 743.8,719.7 737.1,734.7" fill="none" stroke="#8868d0" stroke-width="16.5" stroke-linejoin="round"/><polyline points="633.5,607.8 635.2,619.5 633.5,629.5 636.9,642.8 640.2,651.2 646.9,654.5" fill="none" stroke="#c080e0" stroke-width="22.5" stroke-linejoin="round"/><polyline points="646.9,654.5 655.2,651.2 660.3,656.2 660.3,676.3 656.9,689.6 655.2,698.0" fill="none" stroke="#9a50d0" stroke-width="20.5" stroke-linejoin="round"/><polyline points="656.9,703.0 663.6,706.3 671.9,703.0 677.0,689.6 680.3,672.9 683.6,659.5 687.0,651.2 693.7,659.5 700.3,666.2 697.0,679.6 693.7,693.0 695.3,706.3 703.7,716.3 707.0,734.7" fill="none" stroke="#58d888" stroke-width="18.5" stroke-linejoin="round"/><ellipse cx="740.4" cy="602.8" rx="8.5" ry="13.5" fill="#fff" stroke="#f0509a" stroke-width="6.5"/><path d="M740.4 593l3.5 8-1 10-5 3-2-5 2-9z" fill="#aad3df" stroke="#1c1c1c" stroke-width=".9"/><polyline points="641.9,626.1 677.0,629.5 708.7,629.5 720.4,634.5 727.1,644.5 728.7,656.2" fill="none" stroke="#8da2e8" stroke-width="1.1" stroke-dasharray="4 3"/><polyline points="641.9,646.2 728.7,644.5 785.5,642.8" fill="none" stroke="#8da2e8" stroke-width="1.1" stroke-dasharray="4 3"/><polyline points="646.9,644.5 677.0,637.8 707.0,627.8 737.1,617.8" fill="none" stroke="#8da2e8" stroke-width="1.1" stroke-dasharray="4 3"/><polyline points="752.1,607.8 773.8,626.1 785.5,641.2" fill="none" stroke="#8da2e8" stroke-width="1.1" stroke-dasharray="4 3"/><polyline points="727.1,682.9 725.4,706.3 723.7,734.7" fill="none" stroke="#8da2e8" stroke-width="1.1" stroke-dasharray="4 3"/><text x="737.5" y="666" text-anchor="middle" font-size="9.2" font-style="italic" font-family="Liberation Sans, sans-serif" fill="#6f8fbd">Wellington</text><text x="737.5" y="677" text-anchor="middle" font-size="9.2" font-style="italic" font-family="Liberation Sans, sans-serif" fill="#6f8fbd">Harbour</text><path d="M838 698h2v2h-2zM841 694h2v2h-2zM843 693h2v2h-2zM841 691h2v2h-2zM842 694h2v2h-2zM843 693h2v2h-2zM843 691h2v2h-2zM841 696h2v2h-2zM842 697h2v2h-2zM840 699h2v2h-2zM842 695h2v2h-2zM839 700h2v2h-2zM833 710h2v2h-2zM829 716h2v2h-2zM836 705h2v2h-2zM834 710h2v2h-2zM833 708h2v2h-2zM830 714h2v2h-2zM834 712h2v2h-2zM829 713h2v2h-2zM835 703h2v2h-2zM838 706h2v2h-2zM833 708h2v2h-2zM828 715h2v2h-2zM819 722h2v2h-2zM816 724h2v2h-2zM822 719h2v2h-2zM822 723h2v2h-2zM823 724h2v2h-2zM820 721h2v2h-2zM819 723h2v2h-2zM824 722h2v2h-2zM825 719h2v2h-2zM824 718h2v2h-2zM823 722h2v2h-2zM824 720h2v2h-2zM825 719h2v2h-2zM547 571h2v2h-2zM549 571h2v2h-2z" fill="#1c1c1c"/><g filter="url(#rg)"><polygon points="596.8,589.4 603.5,577.7 615.2,572.7 626.8,569.4 636.9,566.0 646.9,566.0 655.2,572.7 663.6,576.0 671.9,576.0 663.6,584.4 653.6,591.1 643.5,597.8 633.5,601.1 618.5,596.1 606.8,601.1 598.5,599.4" fill="#1c1c1c" stroke="#1c1c1c" stroke-width="1.5" stroke-linejoin="round"/><polygon points="635.2,554.3 707.0,554.3 700.3,560.2 690.3,559.3 685.3,563.5 671.9,562.7 663.6,559.3 656.9,563.5 646.9,562.7 640.2,558.5" fill="#1c1c1c" stroke="#1c1c1c" stroke-width="1.5" stroke-linejoin="round"/><polygon points="613.5,629.5 621.8,624.5 630.2,626.1 633.5,636.2 630.2,642.8 620.2,639.5 615.2,636.2" fill="#1c1c1c" stroke="#1c1c1c" stroke-width="1.5" stroke-linejoin="round"/><polygon points="538.3,649.5 550.0,646.2 560.0,634.5 566.7,629.5 573.4,621.1 583.4,617.8 590.1,626.1 596.8,631.2 600.1,642.8 603.5,652.9 598.5,662.9 586.8,666.2 576.7,672.9 566.7,676.3 556.7,669.6 546.7,672.9 538.3,669.6" fill="#1c1c1c" stroke="#1c1c1c" stroke-width="1.5" stroke-linejoin="round"/><polygon points="610.1,656.2 620.2,649.5 630.2,662.9 640.2,666.2 650.2,662.9 653.6,672.9 646.9,677.9 636.9,679.6 630.2,684.6 620.2,674.6 611.8,671.2" fill="#1c1c1c" stroke="#1c1c1c" stroke-width="1.5" stroke-linejoin="round"/><polygon points="590.1,682.9 596.8,676.3 606.8,686.3 610.1,699.6 616.8,706.3 613.5,716.3 603.5,713.0 595.1,703.0 590.1,693.0" fill="#1c1c1c" stroke="#1c1c1c" stroke-width="1.5" stroke-linejoin="round"/><polygon points="613.5,686.3 626.8,686.3 633.5,691.3 643.5,687.9 650.2,684.6 653.6,693.0 643.5,703.0 633.5,706.3 623.5,703.0 616.8,696.3" fill="#1c1c1c" stroke="#1c1c1c" stroke-width="1.5" stroke-linejoin="round"/><polygon points="643.5,716.3 656.9,706.3 670.3,704.6 677.0,693.0 682.0,679.6 687.0,672.9 692.0,676.3 690.3,689.6 690.3,706.3 697.0,716.3 700.3,734.7 643.5,734.7" fill="#1c1c1c" stroke="#1c1c1c" stroke-width="1.5" stroke-linejoin="round"/><polygon points="611.8,723.0 626.8,724.7 633.5,734.7 613.5,734.7" fill="#1c1c1c" stroke="#1c1c1c" stroke-width="1.5" stroke-linejoin="round"/><polygon points="792.2,554.3 817.2,554.3 813.9,569.4 805.6,579.4 795.5,581.1 790.5,569.4" fill="#1c1c1c" stroke="#1c1c1c" stroke-width="1.5" stroke-linejoin="round"/><polygon points="830.6,581.1 837.3,574.4 845.6,561.0 862.3,554.3 862.3,629.5 850.6,622.8 840.6,619.5 830.6,616.1 833.9,602.8 827.3,592.7" fill="#1c1c1c" stroke="#1c1c1c" stroke-width="1.5" stroke-linejoin="round"/><polygon points="805.6,594.4 813.9,596.1 810.6,611.1 805.6,619.5 800.5,614.5" fill="#1c1c1c" stroke="#1c1c1c" stroke-width="1.5" stroke-linejoin="round"/><polygon points="797.2,642.8 805.6,639.5 800.5,651.2" fill="#1c1c1c" stroke="#1c1c1c" stroke-width="1.5" stroke-linejoin="round"/><polygon points="780.5,682.9 790.5,662.9 798.9,656.2 793.9,671.2 785.5,687.9" fill="#1c1c1c" stroke="#1c1c1c" stroke-width="1.5" stroke-linejoin="round"/></g><g fill="none" stroke="#fff" stroke-width="7.5" stroke-linejoin="round" stroke-linecap="round"><polyline points="563.4,554.3 560.0,569.4 573.4,581.1 586.8,587.7 588.4,601.1 580.1,606.1 566.7,614.5 556.7,622.8 550.0,631.2 538.3,640.3"/><polyline points="586.8,587.7 593.4,582.7 596.8,572.7 603.5,566.0 613.5,562.7 618.5,566.0 626.8,562.7 633.5,554.3"/><polyline points="640.2,554.3 643.5,562.7 653.6,564.4 660.3,571.0 671.9,569.4 678.6,564.4 685.3,569.4 695.3,561.0 700.3,554.3"/><polyline points="780.5,574.4 783.8,566.0 787.2,554.3"/><polyline points="785.5,586.1 790.5,592.7 783.8,599.4 787.2,604.4"/><polyline points="787.2,554.3 785.5,569.4 790.5,591.1 800.5,589.4 813.9,581.1 820.6,566.0 823.9,554.3"/><polyline points="595.1,606.1 598.5,612.8 610.1,606.1 626.8,606.1 631.9,611.1 623.5,619.5 611.8,616.1 605.1,626.1 603.5,642.8 608.5,649.5"/><polyline points="633.5,607.8 635.2,619.5 633.5,629.5 636.9,642.8 626.8,649.5 623.5,656.2 630.2,662.9 640.2,662.9 650.2,659.5 656.9,656.2 656.9,666.2 660.3,676.3 656.9,689.6 653.6,696.3 656.9,703.0"/><polyline points="608.5,649.5 606.8,659.5 610.1,672.9 620.2,676.3 626.8,682.9 633.5,687.9 640.2,682.9 646.9,679.6 653.6,682.9 656.9,689.6"/><polyline points="608.5,649.5 598.5,666.2 590.1,672.9 580.1,679.6 566.7,679.6 553.4,682.9 538.3,687.1"/><polyline points="580.1,679.6 573.4,689.6 560.0,693.0 556.7,706.3 561.7,716.3 556.7,734.7"/><polyline points="560.0,693.0 550.0,696.3 538.3,699.6"/><polyline points="573.4,689.6 581.8,694.6 580.1,706.3 573.4,723.0 571.7,734.7"/><polyline points="656.9,703.0 646.9,706.3 640.2,713.0 638.5,723.0 640.2,734.7"/><polyline points="610.1,713.0 618.5,721.3 630.2,723.0 638.5,723.0"/><polyline points="610.1,713.0 600.1,723.0 583.4,724.7 573.4,734.7"/><polyline points="827.3,631.2 837.3,636.2 842.3,649.5 845.6,669.6 852.3,672.9 862.3,671.2"/><polyline points="588.4,601.1 595.1,606.1 606.8,604.4 618.5,599.4 630.2,604.4 633.5,607.8 640.2,612.8 648.6,607.8 673.6,589.4 700.3,569.4 713.7,557.7 717.0,554.3"/><polyline points="748.8,554.3 762.1,559.3 773.8,566.0 780.5,574.4 785.5,586.1 790.5,594.4 785.5,602.8"/><polyline points="785.5,602.8 797.2,599.4 800.5,611.1 795.5,622.8 793.9,634.5 797.2,646.2 787.2,656.2 780.5,662.9 773.8,676.3 765.5,689.6 757.1,703.0 750.4,709.7 743.8,719.7 737.1,734.7"/><polyline points="785.5,602.8 790.5,594.4 803.9,589.4 815.6,589.4 820.6,604.4 823.9,616.1 827.3,631.2 823.9,649.5 817.2,672.9 807.2,698.0 800.5,709.7 787.2,734.7"/><polyline points="656.9,703.0 663.6,706.3 671.9,703.0 677.0,689.6 680.3,672.9 683.6,659.5 687.0,651.2 693.7,659.5 700.3,666.2 697.0,679.6 693.7,693.0 695.3,706.3 703.7,716.3 707.0,734.7"/></g><g fill="none" stroke="#1c1c1c" stroke-width="1" stroke-linejoin="round" stroke-linecap="round"><polyline points="563.4,554.3 560.0,569.4 573.4,581.1 586.8,587.7 588.4,601.1 580.1,606.1 566.7,614.5 556.7,622.8 550.0,631.2 538.3,640.3"/><polyline points="586.8,587.7 593.4,582.7 596.8,572.7 603.5,566.0 613.5,562.7 618.5,566.0 626.8,562.7 633.5,554.3"/><polyline points="640.2,554.3 643.5,562.7 653.6,564.4 660.3,571.0 671.9,569.4 678.6,564.4 685.3,569.4 695.3,561.0 700.3,554.3"/><polyline points="780.5,574.4 783.8,566.0 787.2,554.3"/><polyline points="785.5,586.1 790.5,592.7 783.8,599.4 787.2,604.4"/><polyline points="787.2,554.3 785.5,569.4 790.5,591.1 800.5,589.4 813.9,581.1 820.6,566.0 823.9,554.3"/><polyline points="595.1,606.1 598.5,612.8 610.1,606.1 626.8,606.1 631.9,611.1 623.5,619.5 611.8,616.1 605.1,626.1 603.5,642.8 608.5,649.5"/><polyline points="633.5,607.8 635.2,619.5 633.5,629.5 636.9,642.8 626.8,649.5 623.5,656.2 630.2,662.9 640.2,662.9 650.2,659.5 656.9,656.2 656.9,666.2 660.3,676.3 656.9,689.6 653.6,696.3 656.9,703.0"/><polyline points="608.5,649.5 606.8,659.5 610.1,672.9 620.2,676.3 626.8,682.9 633.5,687.9 640.2,682.9 646.9,679.6 653.6,682.9 656.9,689.6"/><polyline points="608.5,649.5 598.5,666.2 590.1,672.9 580.1,679.6 566.7,679.6 553.4,682.9 538.3,687.1"/><polyline points="580.1,679.6 573.4,689.6 560.0,693.0 556.7,706.3 561.7,716.3 556.7,734.7"/><polyline points="560.0,693.0 550.0,696.3 538.3,699.6"/><polyline points="573.4,689.6 581.8,694.6 580.1,706.3 573.4,723.0 571.7,734.7"/><polyline points="656.9,703.0 646.9,706.3 640.2,713.0 638.5,723.0 640.2,734.7"/><polyline points="610.1,713.0 618.5,721.3 630.2,723.0 638.5,723.0"/><polyline points="610.1,713.0 600.1,723.0 583.4,724.7 573.4,734.7"/><polyline points="827.3,631.2 837.3,636.2 842.3,649.5 845.6,669.6 852.3,672.9 862.3,671.2"/><polyline points="588.4,601.1 595.1,606.1 606.8,604.4 618.5,599.4 630.2,604.4 633.5,607.8 640.2,612.8 648.6,607.8 673.6,589.4 700.3,569.4 713.7,557.7 717.0,554.3"/><polyline points="748.8,554.3 762.1,559.3 773.8,566.0 780.5,574.4 785.5,586.1 790.5,594.4 785.5,602.8"/><polyline points="785.5,602.8 797.2,599.4 800.5,611.1 795.5,622.8 793.9,634.5 797.2,646.2 787.2,656.2 780.5,662.9 773.8,676.3 765.5,689.6 757.1,703.0 750.4,709.7 743.8,719.7 737.1,734.7"/><polyline points="785.5,602.8 790.5,594.4 803.9,589.4 815.6,589.4 820.6,604.4 823.9,616.1 827.3,631.2 823.9,649.5 817.2,672.9 807.2,698.0 800.5,709.7 787.2,734.7"/><polyline points="656.9,703.0 663.6,706.3 671.9,703.0 677.0,689.6 680.3,672.9 683.6,659.5 687.0,651.2 693.7,659.5 700.3,666.2 697.0,679.6 693.7,693.0 695.3,706.3 703.7,716.3 707.0,734.7"/></g></g><g clip-path="url(#cp4)"><polygon points="578.4,606.1 588.4,601.9 595.1,607.8 600.1,614.5 606.8,622.8 603.5,629.5 595.1,622.8 588.4,619.5 580.1,611.9" fill="#e8b830" stroke="#e8b830" stroke-width="3" stroke-linejoin="round"/><polygon points="538.3,687.9 553.4,683.8 566.7,680.4 580.1,680.4 573.4,689.6 560.0,693.0 550.0,696.3 538.3,699.6" fill="#9a50d0" stroke="#9a50d0" stroke-width="3" stroke-linejoin="round"/><ellipse cx="740.4" cy="602.8" rx="12" ry="17" fill="#f0509a"/><ellipse cx="740.4" cy="602.8" rx="8" ry="13" fill="#fff"/><path d="M740.4 592.5l3.8 8.5-1 10-5 3.500-2.300-5.500 2-9z" fill="#aad3df" stroke="#1c1c1c" stroke-width=".9"/><g filter="url(#rg)"><polygon points="605.1,626.1 613.5,619.5 626.8,621.1 633.5,629.5 633.5,642.8 623.5,649.5 610.1,649.5 605.1,639.5" fill="#1c1c1c" stroke="#1c1c1c" stroke-width="1.5" stroke-linejoin="round"/><polygon points="581.8,611.1 588.4,606.1 596.8,612.8 601.8,622.8 595.1,622.8 588.4,617.8" fill="#1c1c1c" stroke="#1c1c1c" stroke-width="1.5" stroke-linejoin="round"/></g><g fill="none" stroke="#fff" stroke-width="7.5" stroke-linejoin="round" stroke-linecap="round"><polyline points="595.1,606.1 598.5,612.8 610.1,606.1 626.8,606.1 631.9,611.1 623.5,619.5 611.8,616.1 605.1,626.1 603.5,642.8 608.5,649.5"/><polyline points="588.4,601.1 595.1,606.1"/><polyline points="608.5,649.5 598.5,666.2 590.1,672.9 580.1,679.6 566.7,679.6 553.4,682.9 538.3,687.1"/><polyline points="560.0,693.0 550.0,696.3 538.3,699.6"/><polyline points="580.1,679.6 573.4,689.6 560.0,693.0"/><polyline points="633.5,607.8 635.2,619.5 633.5,629.5 636.9,642.8 626.8,649.5 623.5,656.2"/></g><g fill="none" stroke="#1c1c1c" stroke-width="1" stroke-linejoin="round" stroke-linecap="round"><polyline points="595.1,606.1 598.5,612.8 610.1,606.1 626.8,606.1 631.9,611.1 623.5,619.5 611.8,616.1 605.1,626.1 603.5,642.8 608.5,649.5"/><polyline points="588.4,601.1 595.1,606.1"/><polyline points="608.5,649.5 598.5,666.2 590.1,672.9 580.1,679.6 566.7,679.6 553.4,682.9 538.3,687.1"/><polyline points="560.0,693.0 550.0,696.3 538.3,699.6"/><polyline points="580.1,679.6 573.4,689.6 560.0,693.0"/><polyline points="633.5,607.8 635.2,619.5 633.5,629.5 636.9,642.8 626.8,649.5 623.5,656.2"/></g></g><g clip-path="url(#cp5)"><polygon points="473.3,328.3 642.0,328.3 642.0,508.7 473.3,508.7" fill="#aad3df"/><polygon points="652.0,328.3 650.4,340.0 655.4,348.4 645.4,360.1 635.3,368.4 632.0,378.4 625.3,386.8 620.3,395.1 633.7,401.8 637.0,396.8 655.4,406.8 657.0,415.2 658.7,328.3" fill="#1a5fe3" stroke="#1a5fe3" stroke-width="3" stroke-linejoin="round"/><polygon points="620.3,395.1 613.6,401.8 606.9,411.8 600.3,423.5 591.9,433.5 581.9,440.2 568.5,445.2 565.2,453.6 561.8,463.6 551.8,473.6 546.8,483.7 545.1,495.3 540.1,508.7 658.7,508.7 658.7,413.5 655.4,406.8 637.0,396.8 633.7,401.8" fill="#ee6f3a" stroke="#ee6f3a" stroke-width="3" stroke-linejoin="round"/><polyline points="652.0,328.3 650.4,340.0 655.4,348.4 645.4,360.1 635.3,368.4 632.0,378.4 625.3,386.8 620.3,395.1" fill="none" stroke="#1a5fe3" stroke-width="16.5" stroke-linejoin="round"/><polyline points="620.3,395.1 613.6,401.8 606.9,411.8 600.3,423.5 591.9,433.5 581.9,440.2 568.5,445.2 565.2,453.6 561.8,463.6 551.8,473.6 546.8,483.7 545.1,495.3 540.1,508.7" fill="none" stroke="#ee6f3a" stroke-width="16.5" stroke-linejoin="round"/><path d="M620 427h2v2h-2zM618 424h2v2h-2zM624 413h2v2h-2zM620 425h2v2h-2zM622 420h2v2h-2zM624 417h2v2h-2zM619 428h2v2h-2zM620 430h2v2h-2zM619 431h2v2h-2zM619 436h2v2h-2zM620 440h2v2h-2zM620 450h2v2h-2zM616 448h2v2h-2zM616 444h2v2h-2zM619 449h2v2h-2zM616 446h2v2h-2zM618 449h2v2h-2zM619 452h2v2h-2zM617 465h2v2h-2zM618 462h2v2h-2zM617 464h2v2h-2zM617 463h2v2h-2zM619 461h2v2h-2zM613 465h2v2h-2zM605 473h2v2h-2zM613 470h2v2h-2zM612 472h2v2h-2zM625 465h2v2h-2zM623 467h2v2h-2zM626 464h2v2h-2zM628 467h2v2h-2zM599 451h2v2h-2zM588 462h2v2h-2zM577 478h2v2h-2zM593 496h2v2h-2zM623 492h2v2h-2zM622 498h2v2h-2zM623 498h2v2h-2zM625 497h2v2h-2zM625 497h2v2h-2z" fill="#1c1c1c"/><g fill="none" stroke="#fff" stroke-width="7.5" stroke-linejoin="round" stroke-linecap="round"><polyline points="652.0,328.3 650.4,340.0 655.4,348.4 645.4,360.1 635.3,368.4 632.0,378.4 625.3,386.8 620.3,395.1"/><polyline points="620.3,395.1 613.6,401.8 606.9,411.8 600.3,423.5 591.9,433.5 581.9,440.2 568.5,445.2 565.2,453.6 561.8,463.6 551.8,473.6 546.8,483.7 545.1,495.3 540.1,508.7"/><polyline points="620.3,395.1 633.7,401.8 637.0,396.8 655.4,406.8 657.0,415.2"/></g><g fill="none" stroke="#1c1c1c" stroke-width="1" stroke-linejoin="round" stroke-linecap="round"><polyline points="652.0,328.3 650.4,340.0 655.4,348.4 645.4,360.1 635.3,368.4 632.0,378.4 625.3,386.8 620.3,395.1"/><polyline points="620.3,395.1 613.6,401.8 606.9,411.8 600.3,423.5 591.9,433.5 581.9,440.2 568.5,445.2 565.2,453.6 561.8,463.6 551.8,473.6 546.8,483.7 545.1,495.3 540.1,508.7"/><polyline points="620.3,395.1 633.7,401.8 637.0,396.8 655.4,406.8 657.0,415.2"/></g></g><g clip-path="url(#cp6)"><polygon points="953.3,248.3 1277.3,248.3 1277.3,428.7 953.3,428.7" fill="#63f29f"/><polygon points="953.3,248.3 996.8,248.3 1000.1,265.0 963.4,266.7 963.4,281.7 970.0,298.4 971.7,306.8 973.4,316.8 970.0,320.1 968.4,328.5 973.4,343.5 976.7,355.2 953.3,367.7" fill="#d98a52" stroke="#d98a52" stroke-width="3" stroke-linejoin="round"/><polygon points="953.3,338.5 963.4,340.2 970.0,353.5 961.7,363.6 953.3,360.2" fill="#e8d157" stroke="#e8d157" stroke-width="3" stroke-linejoin="round"/><polygon points="970.0,321.8 976.7,330.2 988.4,336.8 1001.8,341.9 1020.1,341.9 1030.2,340.2 1035.2,331.8 1050.2,321.8 1050.2,308.5 1055.2,300.1 1061.9,296.8 1071.9,293.4 1088.6,280.1 1092.0,275.1 1102.0,286.7 1115.3,278.4 1125.4,275.1 1132.0,278.4 1137.0,288.4 1155.4,283.4 1162.1,286.7 1152.1,300.1 1145.4,313.5 1140.4,325.2 1135.4,331.8 1122.0,331.8 1120.3,343.5 1110.3,348.5 1105.3,345.2 1061.9,358.6 1055.2,363.6 1041.8,370.3 1028.5,376.9 1010.1,381.9 1013.5,388.6 996.8,408.7 988.4,428.7 953.3,428.7 953.3,375.3 976.7,356.9 973.4,343.5" fill="#5b9bd5" stroke="#5b9bd5" stroke-width="3" stroke-linejoin="round"/><polygon points="1120.3,315.1 1135.4,308.5 1138.7,320.1 1135.4,331.8 1122.0,331.8" fill="#63f29f" stroke="#63f29f" stroke-width="3" stroke-linejoin="round"/><polygon points="1157.1,276.7 1177.1,260.0 1195.5,253.3 1195.5,248.3 1247.3,248.3 1242.3,266.7 1247.3,273.4 1238.9,305.1 1228.9,303.4 1208.9,305.1 1202.2,316.8 1185.5,333.5 1147.1,325.2 1152.1,300.1 1162.1,286.7" fill="#5b9bd5" stroke="#5b9bd5" stroke-width="3" stroke-linejoin="round"/><polygon points="1262.3,248.3 1277.3,248.3 1277.3,330.2 1248.9,336.8 1243.9,328.5 1267.3,296.8 1269.0,281.7 1264.0,265.0" fill="#cf6a6a" stroke="#cf6a6a" stroke-width="3" stroke-linejoin="round"/><polygon points="1013.5,388.6 1010.1,381.9 1028.5,376.9 1041.8,370.3 1055.2,363.6 1061.9,358.6 1105.3,345.2 1110.3,350.2 1120.3,346.9 1132.0,378.6 1140.4,376.9 1178.8,410.3 1182.1,428.7 988.4,428.7 996.8,408.7" fill="#e8d157" stroke="#e8d157" stroke-width="3" stroke-linejoin="round"/><polygon points="1122.0,353.5 1140.4,376.9 1132.0,378.6" fill="#63f29f" stroke="#63f29f" stroke-width="3" stroke-linejoin="round"/><polygon points="1182.1,428.7 1183.8,408.7 1192.2,403.7 1205.5,407.0 1212.2,393.6 1222.2,380.3 1230.6,363.6 1235.6,350.2 1243.9,345.2 1277.3,333.5 1277.3,428.7" fill="#18e5d0" stroke="#18e5d0" stroke-width="3" stroke-linejoin="round"/><polygon points="1264.0,340.2 1277.3,336.8 1277.3,356.9 1270.7,353.5" fill="#3565dd" stroke="#3565dd" stroke-width="3" stroke-linejoin="round"/><polygon points="1252.3,385.3 1265.6,388.6 1277.3,395.3 1277.3,428.7 1232.2,428.7 1255.6,400.3" fill="#b673e0" stroke="#b673e0" stroke-width="3" stroke-linejoin="round"/><polygon points="1005.1,353.5 1010.1,351.9 1008.4,358.6" fill="#5b9bd5"/><polygon points="1068.6,316.8 1075.3,313.5 1071.9,321.8" fill="#5b9bd5"/><path d="M1080 264h2v2h-2zM1080 264h2v2h-2zM1082 265h2v2h-2zM1082 255h2v2h-2zM1081 253h2v2h-2zM1084 259h2v2h-2zM1083 253h2v2h-2zM1081 260h2v2h-2zM1080 260h2v2h-2zM1079 253h2v2h-2zM1082 261h2v2h-2zM1083 265h2v2h-2zM1080 272h2v2h-2zM1082 267h2v2h-2zM1081 270h2v2h-2zM1083 266h2v2h-2zM1081 269h2v2h-2zM1079 270h2v2h-2zM1083 268h2v2h-2zM1075 280h2v2h-2zM1075 282h2v2h-2zM1082 278h2v2h-2zM1074 278h2v2h-2zM1077 278h2v2h-2zM1073 278h2v2h-2zM1074 278h2v2h-2zM1069 285h2v2h-2zM1071 290h2v2h-2zM1067 285h2v2h-2zM1069 282h2v2h-2zM1069 287h2v2h-2zM1070 281h2v2h-2zM1097 277h2v2h-2zM1094 277h2v2h-2zM1096 279h2v2h-2zM1097 280h2v2h-2zM1100 280h2v2h-2zM1097 358h2v2h-2zM1100 358h2v2h-2zM1099 360h2v2h-2zM1103 357h2v2h-2zM1095 362h2v2h-2zM1098 359h2v2h-2zM1102 358h2v2h-2zM1095 365h2v2h-2zM1099 356h2v2h-2zM1098 363h2v2h-2zM1102 358h2v2h-2zM1101 358h2v2h-2zM1096 365h2v2h-2zM1080 370h2v2h-2zM1084 370h2v2h-2zM1084 366h2v2h-2zM1094 366h2v2h-2zM1089 366h2v2h-2zM1090 367h2v2h-2zM1082 370h2v2h-2zM1089 366h2v2h-2zM1087 368h2v2h-2zM1080 372h2v2h-2zM1084 371h2v2h-2zM1079 371h2v2h-2zM1085 368h2v2h-2zM1069 376h2v2h-2zM1073 375h2v2h-2zM1065 382h2v2h-2zM1066 379h2v2h-2zM1063 381h2v2h-2zM1074 374h2v2h-2zM1064 381h2v2h-2zM1063 378h2v2h-2zM1072 377h2v2h-2zM1061 382h2v2h-2zM1073 374h2v2h-2zM1054 384h2v2h-2zM1058 380h2v2h-2zM1051 384h2v2h-2zM1052 385h2v2h-2zM1056 383h2v2h-2zM1059 381h2v2h-2zM1052 382h2v2h-2zM1052 384h2v2h-2zM1053 377h2v2h-2zM1049 369h2v2h-2zM1049 374h2v2h-2zM1049 368h2v2h-2zM1051 368h2v2h-2zM1050 372h2v2h-2zM1051 375h2v2h-2zM1049 376h2v2h-2zM1048 374h2v2h-2zM1050 380h2v2h-2zM1051 372h2v2h-2zM1050 373h2v2h-2zM1050 394h2v2h-2zM1051 390h2v2h-2zM1049 394h2v2h-2zM1049 393h2v2h-2zM1051 395h2v2h-2zM1048 393h2v2h-2zM1050 389h2v2h-2zM1050 396h2v2h-2zM1052 389h2v2h-2zM1047 388h2v2h-2zM1051 394h2v2h-2zM1052 396h2v2h-2zM1051 410h2v2h-2zM1050 413h2v2h-2zM1052 415h2v2h-2zM1051 413h2v2h-2zM1053 415h2v2h-2zM1051 408h2v2h-2zM1053 414h2v2h-2zM1051 408h2v2h-2zM1051 409h2v2h-2zM1049 404h2v2h-2zM1051 407h2v2h-2zM1050 415h2v2h-2zM1052 417h2v2h-2zM1054 426h2v2h-2zM1052 421h2v2h-2zM1051 421h2v2h-2zM1052 419h2v2h-2zM1052 420h2v2h-2zM1053 427h2v2h-2zM1004 425h2v2h-2zM1003 421h2v2h-2zM1000 424h2v2h-2zM1001 424h2v2h-2zM1002 424h2v2h-2zM1004 425h2v2h-2zM1001 420h2v2h-2zM1001 421h2v2h-2zM987 303h2v2h-2zM1072 340h2v2h-2zM1074 343h2v2h-2zM1076 345h2v2h-2zM1077 347h2v2h-2zM1095 337h2v2h-2zM1107 326h2v2h-2zM1108 329h2v2h-2zM1110 332h2v2h-2zM1111 335h2v2h-2zM1099 343h2v2h-2zM1096 345h2v2h-2zM1094 347h2v2h-2zM1103 324h2v2h-2zM1071 350h2v2h-2zM1069 352h2v2h-2zM1075 329h2v2h-2zM1075 332h2v2h-2zM1076 335h2v2h-2zM1076 338h2v2h-2zM1073 324h2v2h-2zM1068 344h2v2h-2zM1068 347h2v2h-2zM1069 350h2v2h-2zM1070 353h2v2h-2zM1076 339h2v2h-2zM1074 341h2v2h-2zM1072 344h2v2h-2zM1097 341h2v2h-2zM1100 342h2v2h-2zM1103 343h2v2h-2zM1105 344h2v2h-2zM1066 346h2v2h-2zM1063 346h2v2h-2zM1085 325h2v2h-2zM1088 327h2v2h-2zM1091 328h2v2h-2zM1078 335h2v2h-2zM1085 341h2v2h-2zM1083 343h2v2h-2zM1077 334h2v2h-2zM1074 334h2v2h-2zM1071 334h2v2h-2zM1080 343h2v2h-2zM1077 344h2v2h-2zM1086 345h2v2h-2zM1083 347h2v2h-2zM1081 348h2v2h-2zM1078 350h2v2h-2zM1090 328h2v2h-2zM1090 331h2v2h-2zM1076 351h2v2h-2zM1073 353h2v2h-2zM1071 355h2v2h-2zM1079 326h2v2h-2zM1080 329h2v2h-2zM1080 332h2v2h-2zM1080 335h2v2h-2zM1094 329h2v2h-2zM1085 335h2v2h-2zM1079 338h2v2h-2zM1082 339h2v2h-2zM1081 331h2v2h-2zM1083 334h2v2h-2zM1084 337h2v2h-2zM1085 340h2v2h-2zM1101 339h2v2h-2zM1103 341h2v2h-2zM1106 343h2v2h-2zM1079 335h2v2h-2zM1074 321h2v2h-2zM1076 322h2v2h-2zM1079 323h2v2h-2zM1082 324h2v2h-2zM1209 268h2v2h-2zM1211 271h2v2h-2zM1212 274h2v2h-2zM1200 284h2v2h-2zM1197 284h2v2h-2zM1194 284h2v2h-2zM1191 284h2v2h-2zM1226 277h2v2h-2zM1226 280h2v2h-2zM1226 283h2v2h-2zM1227 286h2v2h-2zM1218 272h2v2h-2zM1217 275h2v2h-2zM1215 278h2v2h-2zM1214 280h2v2h-2zM1215 289h2v2h-2zM1201 285h2v2h-2zM1202 287h2v2h-2zM1215 290h2v2h-2zM1215 263h2v2h-2zM1213 265h2v2h-2zM1198 277h2v2h-2zM1201 278h2v2h-2zM1204 278h2v2h-2zM1200 284h2v2h-2zM1203 285h2v2h-2zM1206 286h2v2h-2zM1204 290h2v2h-2zM1206 292h2v2h-2zM1209 293h2v2h-2zM1211 295h2v2h-2zM1210 262h2v2h-2zM1212 264h2v2h-2zM1222 257h2v2h-2zM1222 260h2v2h-2zM1221 263h2v2h-2zM1221 266h2v2h-2zM1200 289h2v2h-2zM1197 290h2v2h-2zM1194 292h2v2h-2zM1191 293h2v2h-2zM1194 297h2v2h-2zM1192 299h2v2h-2zM1191 302h2v2h-2zM1189 304h2v2h-2zM1132 291h2v2h-2zM1135 293h2v2h-2zM1134 299h2v2h-2zM1135 302h2v2h-2zM1137 291h2v2h-2zM1133 293h2v2h-2zM1134 296h2v2h-2zM1135 298h2v2h-2zM1138 291h2v2h-2zM1136 292h2v2h-2zM1133 294h2v2h-2z" fill="#1c1c1c"/><g filter="url(#rg)"><polygon points="973.4,328.5 985.1,340.2 1001.8,345.2 1021.8,345.2 1033.5,341.9 1041.8,333.5 1055.2,323.5 1055.2,311.8 1061.9,303.4 1078.6,300.1 1081.9,306.8 1098.6,303.4 1110.3,296.8 1122.0,298.4 1115.3,305.1 1128.7,306.8 1130.4,313.5 1118.7,311.8 1105.3,316.8 1095.3,320.1 1083.6,326.8 1071.9,333.5 1063.6,343.5 1055.2,350.2 1048.5,356.9 1035.2,363.6 1021.8,370.3 1010.1,375.3 1003.4,383.6 998.4,397.0 990.1,395.3 985.1,383.6 975.0,380.3 968.4,371.9 980.1,360.2 981.7,350.2" fill="#1c1c1c" stroke="#1c1c1c" stroke-width="1.5" stroke-linejoin="round"/><polygon points="1021.8,428.7 1028.5,417.0 1038.5,405.3 1043.5,403.7 1041.8,410.3 1031.8,422.0 1028.5,428.7" fill="#1c1c1c" stroke="#1c1c1c" stroke-width="1.5" stroke-linejoin="round"/></g><g fill="none" stroke="#fff" stroke-width="7.5" stroke-linejoin="round" stroke-linecap="round"><polyline points="996.8,248.3 1000.1,265.0 963.4,266.7 963.4,281.7 970.0,298.4 971.7,306.8 973.4,316.8 970.0,320.1"/><polyline points="970.0,320.1 976.7,330.2 988.4,336.8 1001.8,341.9 1020.1,341.9 1030.2,340.2 1035.2,331.8 1050.2,321.8 1050.2,308.5 1055.2,300.1 1060.2,290.1 1071.9,293.4 1088.6,280.1 1093.6,268.4 1115.3,275.1 1122.0,276.7 1122.0,266.7 1138.7,271.7 1138.7,283.4 1132.0,290.1 1155.4,285.1 1162.1,286.7"/><polyline points="970.0,320.1 968.4,328.5 973.4,343.5 976.7,355.2 953.3,367.7"/><polyline points="953.3,400.3 965.0,395.3 973.4,385.3 968.4,383.6 953.3,390.3"/><polyline points="1162.1,286.7 1152.1,300.1 1145.4,313.5 1140.4,325.2 1135.4,331.8 1122.0,331.8 1120.3,343.5 1110.3,348.5 1105.3,345.2 1061.9,358.6 1055.2,363.6 1041.8,370.3 1028.5,376.9 1010.1,381.9 1013.5,388.6 996.8,408.7 988.4,428.7"/><polyline points="1120.3,346.9 1140.4,376.9 1178.8,410.3"/><polyline points="1162.1,286.7 1177.1,288.4 1185.5,298.4 1187.2,311.8 1197.2,318.5 1210.5,316.8 1218.9,326.8 1228.9,338.5 1242.3,343.5"/><polyline points="1162.1,286.7 1170.4,280.1 1195.5,273.4 1197.2,260.0 1193.8,255.0 1200.5,248.3"/><polyline points="1255.6,248.3 1247.3,265.0 1242.3,268.4 1248.9,273.4 1228.9,285.1 1223.9,290.1 1225.6,310.1 1235.6,328.5 1242.3,333.5 1242.3,343.5"/><polyline points="1262.3,248.3 1264.0,265.0 1269.0,281.7 1267.3,296.8 1243.9,328.5 1242.3,343.5"/><polyline points="1242.3,343.5 1248.9,338.5 1277.3,330.2"/><polyline points="1242.3,343.5 1235.6,350.2 1230.6,363.6 1222.2,380.3 1212.2,393.6 1205.5,407.0 1192.2,403.7 1183.8,408.7 1178.8,410.3 1177.1,428.7"/><polyline points="1257.3,375.3 1264.0,376.9 1270.7,383.6 1277.3,388.6"/></g><g fill="none" stroke="#1c1c1c" stroke-width="1" stroke-linejoin="round" stroke-linecap="round"><polyline points="996.8,248.3 1000.1,265.0 963.4,266.7 963.4,281.7 970.0,298.4 971.7,306.8 973.4,316.8 970.0,320.1"/><polyline points="970.0,320.1 976.7,330.2 988.4,336.8 1001.8,341.9 1020.1,341.9 1030.2,340.2 1035.2,331.8 1050.2,321.8 1050.2,308.5 1055.2,300.1 1060.2,290.1 1071.9,293.4 1088.6,280.1 1093.6,268.4 1115.3,275.1 1122.0,276.7 1122.0,266.7 1138.7,271.7 1138.7,283.4 1132.0,290.1 1155.4,285.1 1162.1,286.7"/><polyline points="970.0,320.1 968.4,328.5 973.4,343.5 976.7,355.2 953.3,367.7"/><polyline points="953.3,400.3 965.0,395.3 973.4,385.3 968.4,383.6 953.3,390.3"/><polyline points="1162.1,286.7 1152.1,300.1 1145.4,313.5 1140.4,325.2 1135.4,331.8 1122.0,331.8 1120.3,343.5 1110.3,348.5 1105.3,345.2 1061.9,358.6 1055.2,363.6 1041.8,370.3 1028.5,376.9 1010.1,381.9 1013.5,388.6 996.8,408.7 988.4,428.7"/><polyline points="1120.3,346.9 1140.4,376.9 1178.8,410.3"/><polyline points="1162.1,286.7 1177.1,288.4 1185.5,298.4 1187.2,311.8 1197.2,318.5 1210.5,316.8 1218.9,326.8 1228.9,338.5 1242.3,343.5"/><polyline points="1162.1,286.7 1170.4,280.1 1195.5,273.4 1197.2,260.0 1193.8,255.0 1200.5,248.3"/><polyline points="1255.6,248.3 1247.3,265.0 1242.3,268.4 1248.9,273.4 1228.9,285.1 1223.9,290.1 1225.6,310.1 1235.6,328.5 1242.3,333.5 1242.3,343.5"/><polyline points="1262.3,248.3 1264.0,265.0 1269.0,281.7 1267.3,296.8 1243.9,328.5 1242.3,343.5"/><polyline points="1242.3,343.5 1248.9,338.5 1277.3,330.2"/><polyline points="1242.3,343.5 1235.6,350.2 1230.6,363.6 1222.2,380.3 1212.2,393.6 1205.5,407.0 1192.2,403.7 1183.8,408.7 1178.8,410.3 1177.1,428.7"/><polyline points="1257.3,375.3 1264.0,376.9 1270.7,383.6 1277.3,388.6"/></g></g><g clip-path="url(#cp7)"><polygon points="793.3,538.3 962.0,538.3 962.0,718.7 793.3,718.7" fill="#18e5d0"/><polygon points="793.3,538.3 836.8,538.3 828.4,553.4 818.4,573.4 815.0,583.4 793.3,588.4" fill="#4ecfc2" stroke="#4ecfc2" stroke-width="3" stroke-linejoin="round"/><polygon points="793.3,590.1 805.0,590.1 816.7,586.8 820.1,606.8 825.1,626.8 827.6,633.5 820.1,656.9 811.7,682.0 805.0,700.3 800.8,718.7 793.3,718.7" fill="#8868d0" stroke="#8868d0" stroke-width="3" stroke-linejoin="round"/><polygon points="841.8,551.7 848.4,555.0 858.5,556.7 873.5,565.1 878.5,581.8 873.5,595.1 868.5,610.1 873.5,626.8 881.8,636.9 885.2,646.9 890.2,655.2 890.2,668.6 885.2,678.6 868.5,673.6 865.1,678.6 851.8,678.6 845.1,673.6 850.1,660.3 841.8,648.6 836.8,640.2 828.4,638.5 826.7,630.2 823.4,613.5 823.4,590.1 828.4,573.4 836.8,560.0" fill="#3fcc45" stroke="#3fcc45" stroke-width="3" stroke-linejoin="round"/><polygon points="873.5,650.2 878.5,653.6 878.5,660.3 885.2,662.8 887.7,655.2 883.5,650.2" fill="#18e5d0"/><polygon points="850.1,595.1 856.8,590.1 855.1,598.5" fill="#3fcc45"/><path d="M892 567h2v2h-2zM893 570h2v2h-2zM890 561h2v2h-2zM891 560h2v2h-2zM892 563h2v2h-2zM889 558h2v2h-2zM892 564h2v2h-2zM891 566h2v2h-2zM891 558h2v2h-2zM891 563h2v2h-2zM894 566h2v2h-2zM896 576h2v2h-2zM898 576h2v2h-2zM898 578h2v2h-2zM899 579h2v2h-2zM899 578h2v2h-2zM893 570h2v2h-2zM901 582h2v2h-2zM895 573h2v2h-2zM900 579h2v2h-2zM900 580h2v2h-2zM897 577h2v2h-2zM904 584h2v2h-2zM902 581h2v2h-2zM904 584h2v2h-2zM901 581h2v2h-2zM907 588h2v2h-2zM907 587h2v2h-2zM902 608h2v2h-2zM902 602h2v2h-2zM905 595h2v2h-2zM907 597h2v2h-2zM904 600h2v2h-2zM906 593h2v2h-2zM907 590h2v2h-2zM906 599h2v2h-2zM903 601h2v2h-2zM906 595h2v2h-2zM904 595h2v2h-2zM906 593h2v2h-2zM907 598h2v2h-2zM905 596h2v2h-2zM904 603h2v2h-2zM897 616h2v2h-2zM896 616h2v2h-2zM895 620h2v2h-2zM897 616h2v2h-2zM899 613h2v2h-2zM900 613h2v2h-2zM899 616h2v2h-2zM899 617h2v2h-2zM902 609h2v2h-2zM899 612h2v2h-2zM901 614h2v2h-2zM900 613h2v2h-2zM895 618h2v2h-2zM889 625h2v2h-2zM889 625h2v2h-2zM891 624h2v2h-2zM890 623h2v2h-2zM883 629h2v2h-2zM890 623h2v2h-2zM893 621h2v2h-2zM890 625h2v2h-2zM887 625h2v2h-2zM893 619h2v2h-2zM889 624h2v2h-2zM863 552h2v2h-2zM864 548h2v2h-2zM862 553h2v2h-2zM864 550h2v2h-2zM862 549h2v2h-2zM841 689h2v2h-2zM843 689h2v2h-2zM842 690h2v2h-2zM843 687h2v2h-2zM842 689h2v2h-2zM842 693h2v2h-2zM836 702h2v2h-2zM842 696h2v2h-2zM838 698h2v2h-2zM836 701h2v2h-2zM842 698h2v2h-2zM840 696h2v2h-2zM840 696h2v2h-2zM834 701h2v2h-2zM834 706h2v2h-2zM834 704h2v2h-2zM833 705h2v2h-2zM832 710h2v2h-2zM833 704h2v2h-2zM834 707h2v2h-2zM835 702h2v2h-2zM831 713h2v2h-2zM830 711h2v2h-2zM832 710h2v2h-2zM830 711h2v2h-2zM829 712h2v2h-2zM911 623h2v2h-2z" fill="#1c1c1c"/><g filter="url(#rg)"><polygon points="793.3,538.3 820.1,538.3 823.4,550.0 815.0,565.1 805.0,578.4 793.3,581.8" fill="#1c1c1c" stroke="#1c1c1c" stroke-width="1.5" stroke-linejoin="round"/><polygon points="848.4,558.4 855.1,560.0 861.8,566.7 863.5,576.7 870.2,578.4 866.8,590.1 863.5,603.5 865.1,615.2 866.8,630.2 873.5,635.2 868.5,638.5 861.8,643.5 858.5,656.9 853.5,646.9 855.1,633.5 851.8,620.2 841.8,615.2 831.7,618.5 838.4,610.1 828.4,605.1 825.1,591.8 830.1,590.1 831.7,576.7 838.4,575.1 845.1,581.8 848.4,573.4" fill="#1c1c1c" stroke="#1c1c1c" stroke-width="1.5" stroke-linejoin="round"/><polygon points="808.4,596.8 813.4,595.1 811.7,606.8 806.7,603.5" fill="#1c1c1c" stroke="#1c1c1c" stroke-width="1.5" stroke-linejoin="round"/><polygon points="798.3,640.2 805.0,643.5 801.7,653.6 793.3,655.2" fill="#1c1c1c" stroke="#1c1c1c" stroke-width="1.5" stroke-linejoin="round"/></g><g fill="none" stroke="#fff" stroke-width="7.5" stroke-linejoin="round" stroke-linecap="round"><polyline points="851.8,538.3 845.1,546.7 836.8,556.7 828.4,573.4 820.1,583.4 816.7,586.8 820.1,595.1 821.7,613.5 826.7,630.2 828.4,633.5"/><polyline points="828.4,633.5 825.1,643.5 820.1,660.3 811.7,682.0 805.0,700.3 800.0,718.7"/><polyline points="845.1,550.0 856.8,551.7 858.5,558.4 876.8,560.0 881.8,581.8 875.2,593.4 868.5,606.8 871.8,618.5 868.5,626.8 881.8,631.9 885.2,646.9 890.2,653.6 885.2,663.6 876.8,661.9 876.8,651.9 870.2,650.2 860.1,675.3 845.1,675.3 850.1,655.2 841.8,648.6 840.1,636.9 828.4,633.5"/><polyline points="793.3,588.4 805.0,586.8 816.7,586.8"/><polyline points="793.3,595.1 801.7,606.8 800.0,620.2 798.3,633.5 793.3,646.9"/></g><g fill="none" stroke="#1c1c1c" stroke-width="1" stroke-linejoin="round" stroke-linecap="round"><polyline points="851.8,538.3 845.1,546.7 836.8,556.7 828.4,573.4 820.1,583.4 816.7,586.8 820.1,595.1 821.7,613.5 826.7,630.2 828.4,633.5"/><polyline points="828.4,633.5 825.1,643.5 820.1,660.3 811.7,682.0 805.0,700.3 800.0,718.7"/><polyline points="845.1,550.0 856.8,551.7 858.5,558.4 876.8,560.0 881.8,581.8 875.2,593.4 868.5,606.8 871.8,618.5 868.5,626.8 881.8,631.9 885.2,646.9 890.2,653.6 885.2,663.6 876.8,661.9 876.8,651.9 870.2,650.2 860.1,675.3 845.1,675.3 850.1,655.2 841.8,648.6 840.1,636.9 828.4,633.5"/><polyline points="793.3,588.4 805.0,586.8 816.7,586.8"/><polyline points="793.3,595.1 801.7,606.8 800.0,620.2 798.3,633.5 793.3,646.9"/></g></g><text x="1914" y="1015" text-anchor="end" font-size="13" font-family="Liberation Sans, sans-serif" fill="#222" stroke="#fff" stroke-width="2.5" paint-order="stroke" stroke-opacity=".8">© OpenStreetMap contributors, CC-BY-SA</text></svg>
<div class="r" style="left:314px;top:138px;width:1606px;height:1px;background:#bdbdbd"></div>
<div class="r" style="left:314px;top:138px;width:1px;height:885px;background:#bdbdbd"></div>
<div class="r" style="left:314px;top:1022px;width:1606px;height:1px;background:#bdbdbd"></div>
</div></body></html>
